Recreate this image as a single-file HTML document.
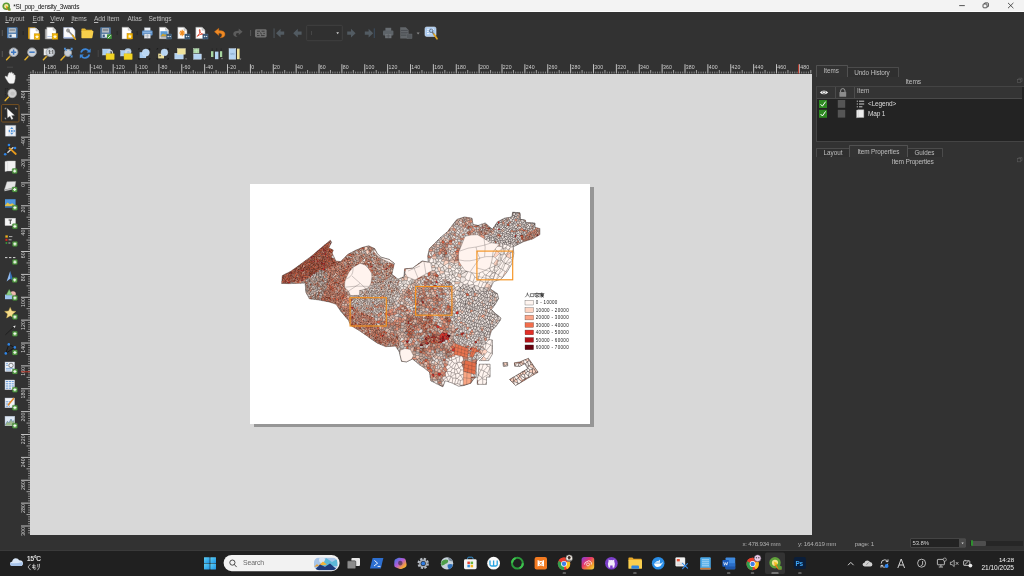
<!DOCTYPE html>
<html><head><meta charset="utf-8"><title>layout</title>
<style>
html,body{margin:0;padding:0;}
body{width:1024px;height:576px;overflow:hidden;background:#323232;position:relative;font-family:"Liberation Sans",sans-serif;}
.abs{position:absolute;}
.t{position:absolute;white-space:nowrap;line-height:1;font-family:"Liberation Sans",sans-serif;}
.mn{top:15.5px;font-size:6.6px;color:#bdbdbd;letter-spacing:-0.12px}
.mn u{text-decoration-thickness:0.4px;text-underline-offset:0.8px;}
.st{top:540.7px;font-size:6.2px;color:#b0b0b0;letter-spacing:-0.22px}
.pt{font-size:6.7px;color:#bebebe;}

body{-webkit-font-smoothing:antialiased;}
#root{position:absolute;left:0;top:0;width:1024px;height:576px;will-change:transform;overflow:hidden}

</style></head>
<body><div id="root">
<!-- title bar -->
<div class="abs" style="left:0;top:0;width:1024px;height:11.2px;background:#f3f3f3"></div>
<div class="abs" style="left:0;top:11.1px;width:1024px;height:0.8px;background:#fcfcfc"></div>
<svg class="abs" style="left:1.5px;top:1.5px" width="9" height="9" viewBox="0 0 18 18">
  <circle cx="8.5" cy="8.5" r="6" fill="#f6e7a8" stroke="#5d9b33" stroke-width="3.4"/>
  <path d="M8 8 L17 17 L12.5 17 L8 11.5Z" fill="#ee7913"/>
  <path d="M9.5 9.5 L17.2 13 L17.2 17.2 L13 17.2Z" fill="#5d9b33"/>
  <path d="M7 7 L12 9 L9 12Z" fill="#f0c21a"/>
</svg>
<div class="t" style="left:13.2px;top:3.8px;font-size:6.5px;color:#151515;letter-spacing:-0.27px">*SI_pop_density_3wards</div>
<svg class="abs" style="left:950px;top:0" width="74" height="12" viewBox="0 0 74 12">
  <path d="M9.2 5.6H14.8" stroke="#222" stroke-width="0.75" fill="none"/>
  <rect x="33" y="4" width="4" height="3.8" rx="0.8" fill="none" stroke="#222" stroke-width="0.75"/>
  <path d="M34.4 3.9V3.5Q34.4 2.9 35 2.9H37.8Q38.4 2.9 38.4 3.5V6.2Q38.4 6.8 37.8 6.8H37.2" fill="none" stroke="#222" stroke-width="0.75"/>
  <path d="M58 2.9L63.4 8.2M63.4 2.9L58 8.2" stroke="#222" stroke-width="0.75" fill="none"/>
</svg>

<!-- menu -->
<div class="t mn" style="left:5.2px"><u>L</u>ayout</div>
<div class="t mn" style="left:32.6px"><u>E</u>dit</div>
<div class="t mn" style="left:50.2px"><u>V</u>iew</div>
<div class="t mn" style="left:71.2px"><u>I</u>tems</div>
<div class="t mn" style="left:94px"><u>A</u>dd Item</div>
<div class="t mn" style="left:127.6px">Atlas</div>
<div class="t mn" style="left:148.6px">Settings</div>

<!-- toolbars -->
<svg class="abs" style="left:0;top:0" width="460" height="64" viewBox="0 0 460 64">
<defs>
  <g id="doc"><path d="M0 0H6.2L9.2 3V11.5H0Z" fill="#fff" stroke="#9a9a9a" stroke-width="0.5"/><path d="M6.2 0V3H9.2" fill="#dcdcdc" stroke="#9a9a9a" stroke-width="0.4"/></g>
  <g id="star"><rect x="0" y="0" width="5.6" height="5.6" fill="#f0b400" stroke="#c98c00" stroke-width="0.5"/><path d="M2.8 0.8L3.4 2.2L4.9 2.3L3.8 3.3L4.1 4.8L2.8 4L1.5 4.8L1.8 3.3L0.7 2.3L2.2 2.2Z" fill="#fff6d0"/></g>
  <g id="plusb"><rect x="0" y="0" width="5.2" height="5" fill="#36536e" stroke="#5c7a96" stroke-width="0.4"/><path d="M1 2.5H2.6M1.8 1.7V3.3M3.2 2.5H4.4M3.8 1.9V3.1" stroke="#e6eef6" stroke-width="0.7"/></g>
</defs>
<!-- grips -->
<path d="M2.3 30V36M2.3 51V57" stroke="#555" stroke-width="1"/>
<path d="M23.2 31V35M117.2 31V35M137.2 31V35" stroke="#262626" stroke-width="1"/><path d="M250.6 30V36" stroke="#5c5c5c" stroke-width="0.8"/>
<!-- save -->
<g transform="translate(7,27.3)">
 <rect x="0" y="0" width="10.6" height="11" rx="0.8" fill="#4a79ad"/>
 <rect x="1.8" y="0.9" width="7" height="4.4" fill="#bfc5cc"/>
 <rect x="2.6" y="1.8" width="5.4" height="1.8" fill="#8e959c"/>
 <rect x="1.6" y="6.6" width="7.4" height="3.6" fill="#e8edf2"/>
 <rect x="2.4" y="7.3" width="2.2" height="2.4" fill="#3c5f88"/>
</g>
<!-- new layout -->
<g transform="translate(28.2,27.4)">
 <path d="M0 0H7V11.4H0Z" fill="#f2a900"/>
 <g transform="translate(1.6,0.6)"><use href="#doc"/></g>
 <g transform="translate(6,6.4)"><use href="#star"/></g>
</g>
<!-- duplicate -->
<g transform="translate(45.2,27)">
 <path d="M0 2.2H8.6V12H0Z" fill="#c9c9c9" stroke="#8d8d8d" stroke-width="0.5"/>
 <g transform="translate(1.6,0.2)"><use href="#doc"/></g>
 <path d="M2.2 9.6H10" stroke="#9fb7e0" stroke-width="0.8"/>
 <g transform="translate(7,6.6)"><use href="#star"/></g>
</g>
<!-- layout manager -->
<g transform="translate(63.6,27.6)">
 <path d="M0 0H8.8L11.4 2.6V10.6H0Z" fill="#fbfbfd" stroke="#a9b9d8" stroke-width="0.6"/>
 <path d="M0.4 10.2H11" stroke="#8aa5dc" stroke-width="0.9"/>
 <path d="M4.2 2.6L9.6 8.4" stroke="#8f8f8f" stroke-width="1.6" stroke-linecap="round"/>
 <circle cx="4.4" cy="2.9" r="1.5" fill="none" stroke="#7d7d7d" stroke-width="0.9"/>
 <path d="M9 7.6L11.8 11.6" stroke="#d9a21b" stroke-width="1.5" stroke-linecap="round"/>
</g>
<!-- folder -->
<g transform="translate(81.4,28)">
 <path d="M0 1.2Q0 0.4 0.8 0.4H3.6L4.8 1.8H10.4Q11 1.8 11 2.6V3.4H0Z" fill="#e6b730"/>
 <path d="M0 3H11.6Q12.2 3 12 3.8L11 9.6Q10.9 10.2 10.2 10.2H0.6Q0 10.2 0 9.6Z" fill="#f7cf4b"/>
</g>
<!-- save as template -->
<g transform="translate(100.2,27.3)">
 <rect x="0" y="0" width="10.6" height="11" rx="0.8" fill="#52779f"/>
 <rect x="1.8" y="0.9" width="7" height="4.4" fill="#b4bac1"/>
 <rect x="2.6" y="1.8" width="5.4" height="1.8" fill="#868d94"/>
 <rect x="1.6" y="6.6" width="7.4" height="3.6" fill="#dfe5ea"/>
 <rect x="2.4" y="7.3" width="2.2" height="2.4" fill="#3c5f88"/>
 <rect x="6.8" y="7" width="4.8" height="4.8" rx="0.6" fill="#3f8f3a"/>
 <path d="M7.8 10.8L10.6 8" stroke="#e6f5e0" stroke-width="1"/>
</g>
<!-- add pages -->
<g transform="translate(122,27.2)">
 <g transform="scale(1 1.02)"><use href="#doc"/></g>
 <g transform="translate(5,6.2)"><use href="#star"/></g>
</g>
<!-- printer -->
<g transform="translate(142,27.8)">
 <rect x="2.4" y="0" width="5.8" height="3.2" fill="#e9edf2" stroke="#a8b2bd" stroke-width="0.4"/>
 <rect x="0" y="2.8" width="10.6" height="4.8" rx="1" fill="#5f91c9"/>
 <rect x="0.8" y="4" width="9" height="0.9" fill="#9cc0e8"/>
 <rect x="2.2" y="6.2" width="6.2" height="4.2" fill="#f2f4f7" stroke="#9aa5b1" stroke-width="0.4"/>
 <path d="M3.2 7.6H7.4M3.2 9H7.4M5.3 6.4V10.2" stroke="#8d98a4" stroke-width="0.5"/>
</g>
<!-- export image -->
<g transform="translate(159.4,27.2)">
 <use href="#doc"/>
 <rect x="1" y="4" width="7.2" height="5" fill="#5b9bd5"/>
 <path d="M1 9L3.6 6.2L5.4 7.6L6.6 6.8L8.2 9Z" fill="#c8a030"/>
 <path d="M1 9.8H8.2" stroke="#3a3a3a" stroke-width="0.7"/>
 <g transform="translate(7,6.8)"><use href="#plusb"/></g>
</g>
<!-- export svg -->
<g transform="translate(177.8,27.2)">
 <use href="#doc"/>
 <path d="M4.4 2.6V9M1.4 5.8H7.4M2.3 3.7L6.5 7.9M6.5 3.7L2.3 7.9" stroke="#f08a1c" stroke-width="1.1"/>
 <g transform="translate(7,6.8)"><use href="#plusb"/></g>
</g>
<!-- export pdf -->
<g transform="translate(195.8,27.2)">
 <use href="#doc"/>
 <path d="M1.6 9Q4.6 6.4 4.3 2.6Q3.6 1.8 3.5 3Q4 6.4 7.6 7.6Q8.4 7 7 6.8Q3.6 7 1.4 9.2Z" fill="none" stroke="#d9391f" stroke-width="0.8"/>
 <g transform="translate(7,6.8)"><use href="#plusb"/></g>
</g>
<!-- undo -->
<g transform="translate(214.4,28.2)">
 <path d="M4.4 0L0 3.6L4.4 7.2V5Q8 4.6 7.4 7.6Q7.2 8.8 5.6 9.6Q11 9.4 10.6 5.6Q10 2.2 4.4 2.4Z" fill="#ee8a25" stroke="#c8640f" stroke-width="0.4"/>
</g>
<!-- redo -->
<g transform="translate(242.6,28.6) scale(-1 1)">
 <path d="M4.4 0L0 3.6L4.4 7.2V5Q8 4.6 7.4 7.6Q7.2 8.8 5.6 9.6Q11 9.4 10.6 5.6Q10 2.2 4.4 2.4Z" fill="#5c5c5c" transform="scale(0.88)"/>
</g>
<!-- atlas preview (disabled) -->
<g transform="translate(255,29.2)">
 <rect x="0" y="0" width="11.6" height="8.2" rx="1.4" fill="#727272"/>
 <path d="M2 2H5M6.6 2H9.6M2 4.2H3.4M5 3.4L7 5.2M8.4 4.2H9.8M2 6.4H4.6M6 6.4H9.6" stroke="#3a3a3a" stroke-width="1"/>
</g>
<!-- first -->
<g fill="#525b62">
 <rect x="273.6" y="28.4" width="0.9" height="9.6"/>
 <path d="M276 33.2L280.6 28.8V31.6H284.2V34.8H280.6V37.6Z"/>
 <path d="M293.2 33.2L297.8 28.8V31.6H301.6V34.8H297.8V37.6Z"/>
 <path d="M355.6 33.2L351 28.8V31.6H347.2V34.8H351V37.6Z"/>
 <path d="M373.2 33.2L368.6 28.8V31.6H364.8V34.8H368.6V37.6Z"/>
 <rect x="373.8" y="28.4" width="0.9" height="9.6" fill="#3d5166"/>
</g>
<!-- combobox -->
<rect x="306.7" y="25.3" width="35.6" height="15.4" rx="1" fill="#303030" stroke="#484848" stroke-width="0.7"/>
<path d="M311.5 31V35" stroke="#555" stroke-width="0.6"/>
<path d="M336.3 32.3H339L337.65 34.2Z" fill="#d0d0d0"/>
<!-- printer disabled -->
<g transform="translate(383,27.8)">
 <rect x="2.4" y="0" width="5.8" height="3.2" fill="#686d72"/>
 <rect x="0" y="2.8" width="10.4" height="4.8" rx="1" fill="#5d6368"/>
 <rect x="2.2" y="6.2" width="6.2" height="4.2" fill="#71767b"/>
 <path d="M3.2 7.6H7.4M3.2 9H7.4M5.3 6.4V10.2" stroke="#4a4e52" stroke-width="0.5"/>
</g>
<!-- export disabled -->
<g transform="translate(400.2,27.2)">
 <path d="M0 0H5.6L8.4 2.8V11.2H0Z" fill="#62666a"/>
 <path d="M0.8 3.2H7.6M0.8 5.6H7.6M0.8 8H7.6" stroke="#484c50" stroke-width="0.9"/>
 <rect x="6.6" y="6.8" width="5.2" height="4.6" fill="#54585c" stroke="#6c7074" stroke-width="0.4"/>
</g>
<path d="M416.6 32.6H419.6L418.1 34.6Z" fill="#8c8c8c"/>
<!-- atlas settings -->
<g transform="translate(425,27)">
 <rect x="0" y="0" width="11" height="9.4" rx="1.6" fill="#a9c9ee" stroke="#d8e8fa" stroke-width="0.6"/>
 <path d="M2 2.2H4.6M6 2.2H9M2 4.4H3.6M2 6.6H4.4M5.4 6.8H6.6" stroke="#eaf3fd" stroke-width="1.1"/>
 <circle cx="6.2" cy="3.8" r="1.7" fill="none" stroke="#5f6f86" stroke-width="0.9"/>
 <path d="M7.4 5.2L9.4 8" stroke="#6e6e6e" stroke-width="1.3" stroke-linecap="round"/>
 <path d="M9 7.2L12 11.8" stroke="#e2a621" stroke-width="1.6" stroke-linecap="round"/>
</g>
</svg>

<svg class="abs" style="left:0;top:0" width="260" height="64" viewBox="0 0 260 64">
<defs>
 <g id="lens"><path d="M-3 3.4L-7 7.6" stroke="#e3b12d" stroke-width="1.5" stroke-linecap="round"/><path d="M-2.6 2.8L-3.8 4.2" stroke="#555" stroke-width="1.4"/><circle cx="0" cy="0" r="4.3" fill="#cfd3d8" stroke="#9ea4ab" stroke-width="0.9"/></g>
 <g id="padlock"><path d="M1.8 4V2.4Q1.8 0 4.1 0Q6.4 0 6.4 2.4V4" fill="none" stroke="#d6d9dd" stroke-width="1.1"/><rect x="0" y="3.6" width="8.2" height="5.8" fill="#f1d324" stroke="#d4b60f" stroke-width="0.4"/></g>
</defs>
<path d="M98.2 50V57" stroke="#4a4a4a" stroke-width="0.9"/>
<!-- zoom in -->
<g transform="translate(13.6,52.2)"><use href="#lens"/><path d="M-2.6 0H2.6M0 -2.6V2.6" stroke="#3b77c2" stroke-width="1.5"/></g>
<!-- zoom out -->
<g transform="translate(32,52.2)"><use href="#lens"/><path d="M-2.7 0H2.7" stroke="#3b77c2" stroke-width="1.5"/></g>
<!-- zoom 1:1 -->
<g transform="translate(50.4,52.2)"><rect x="-6.6" y="-3.6" width="4" height="6.6" fill="#e9e9e9" stroke="#777" stroke-width="0.4"/><use href="#lens"/><path d="M-1.8 -1.2L-0.8 -1.8V1.8M1.4 -1.2L2.4 -1.8V1.8M0.4 -0.6V-0.2M0.4 0.8V1.2" stroke="#333" stroke-width="0.7" fill="none"/></g>
<!-- zoom full -->
<g transform="translate(68,52.4)">
 <path d="M-3 3.4L-7 7.6" stroke="#e3b12d" stroke-width="1.5" stroke-linecap="round"/>
 <circle cx="0" cy="0.4" r="3.6" fill="#c9ced4" stroke="#9ea4ab" stroke-width="0.8"/>
 <path d="M-4 -4.6H-1.6L-2.4 -3.8L-0.8 -2.2L-1.6 -1.4L-3.2 -3L-4 -2.2ZM4.6 -4.6H2.2L3 -3.8L1.4 -2.2L2.2 -1.4L3.8 -3L4.6 -2.2ZM4.6 5H2.2L3 4.2L1.4 2.6L2.2 1.8L3.8 3.4L4.6 2.6Z" fill="#4d8fd6"/>
</g>
<!-- refresh -->
<g transform="translate(85.2,53.6)" fill="none" stroke="#3c86d8" stroke-width="1.7">
 <path d="M-4.2 -1Q-3 -4.6 0.6 -4.4Q2.6 -4.2 3.6 -2.6"/>
 <path d="M4.2 1Q3 4.6 -0.6 4.4Q-2.6 4.2 -3.6 2.6"/>
 <path d="M5.4 -5V-1H1.4Z" fill="#3c86d8" stroke="none"/>
 <path d="M-5.4 5V1H-1.4Z" fill="#3c86d8" stroke="none"/>
</g>
<!-- lock -->
<g transform="translate(102.6,49)"><rect x="0" y="0" width="7.6" height="6" fill="#a9ccf0" stroke="#d6e7f9" stroke-width="0.4"/><g transform="translate(3.4,1.2)"><use href="#padlock"/></g></g>
<!-- unlock -->
<g transform="translate(120.6,49)"><rect x="0" y="1.4" width="6.4" height="5.6" fill="#a9ccf0" stroke="#d6e7f9" stroke-width="0.4"/><circle cx="7.4" cy="2.6" r="3.4" fill="#b6d3f0" opacity="0.9"/><path d="M5.2 5V3.6Q5.2 1.4 7.5 1.4Q9.8 1.4 9.8 3.4" fill="none" stroke="#d6d9dd" stroke-width="1.1"/><rect x="3.4" y="4.8" width="8.2" height="5.8" fill="#f1d324" stroke="#d4b60f" stroke-width="0.4"/></g>
<!-- group -->
<g transform="translate(139,48.6)">
 <rect x="0.6" y="3.6" width="6.4" height="5.8" fill="#a9ccf0"/>
 <circle cx="6.8" cy="4" r="3.6" fill="#b9d6f3" stroke="#d9e9fa" stroke-width="0.4"/>
 <path d="M-0.4 0H0.8M-0.4 0V1.2M10.8 0H9.6M10.8 0V1.2M-0.4 10.6H0.8M-0.4 10.6V9.4M10.8 10.6H9.6M10.8 10.6V9.4" stroke="#1c1c1c" stroke-width="0.9" fill="none"/>
</g>
<!-- ungroup -->
<g transform="translate(157.4,48.6)">
 <rect x="0.8" y="5" width="5.8" height="4.8" fill="#ecdf9a"/>
 <circle cx="7" cy="3.8" r="3.4" fill="#b9d6f3" stroke="#d9e9fa" stroke-width="0.4"/>
 <rect x="2" y="6.4" width="1.4" height="1.4" fill="#555"/>
 <path d="M-0.4 0H0.8M-0.4 0V1.2M11 0H9.8M11 0V1.2M-0.4 10.6H0.8M-0.4 10.6V9.4M11 10.6H9.8M11 10.6V9.4" stroke="#1c1c1c" stroke-width="0.9" fill="none"/>
</g>
<!-- raise -->
<g transform="translate(174.8,48.6)">
 <rect x="0" y="4.6" width="8.4" height="5.8" fill="#b4d3f2" stroke="#d8e8f9" stroke-width="0.4"/>
 <rect x="2.6" y="0" width="8" height="5.6" fill="#efe39c" stroke="#f8f0c4" stroke-width="0.4"/>
 <path d="M10.2 9.8H12.4L11.3 11.2Z" fill="#9a9a9a"/>
</g>
<!-- align -->
<g transform="translate(193.2,48.6)">
 <rect x="0.4" y="0" width="5.4" height="4.4" fill="#a6d49f" stroke="#cfe9ca" stroke-width="0.4"/>
 <path d="M3.1 0V4.4M0.4 2.2H5.8" stroke="#d6edd2" stroke-width="0.5"/>
 <rect x="0.4" y="5.4" width="7.8" height="5.2" fill="#b4d3f2" stroke="#d8e8f9" stroke-width="0.4"/>
 <path d="M10.2 9.8H12.4L11.3 11.2Z" fill="#9a9a9a"/>
</g>
<!-- distribute -->
<g transform="translate(210.6,48.2)">
 <path d="M1.6 0V3M6 0V3M10.6 0V3" stroke="#222" stroke-width="0.6"/>
 <rect x="0.4" y="3" width="2.4" height="5.8" fill="#a6d49f"/>
 <rect x="4.4" y="3.4" width="3.4" height="7.6" fill="#b4d3f2"/>
 <rect x="9.4" y="3" width="2.2" height="5.8" fill="#a6d49f"/>
 <path d="M10.4 10H12.4L11.4 11.4Z" fill="#9a9a9a"/>
</g>
<!-- resize -->
<g transform="translate(229,48.6)">
 <rect x="0" y="0" width="6.8" height="10.6" fill="#b4d3f2" stroke="#d8e8f9" stroke-width="0.4"/>
 <path d="M1 5.3H2.6M5.8 5.3H4.2M2.4 4.3L3.4 5.3L2.4 6.3M4.4 4.3L3.4 5.3L4.4 6.3" stroke="#7d9dbf" stroke-width="0.6" fill="none"/>
 <rect x="8" y="0" width="2.6" height="10.6" fill="#efe39c"/>
 <path d="M10.4 10H12.4L11.4 11.4Z" fill="#9a9a9a"/>
</g>
</svg>

<!-- canvas -->
<div class="abs" style="left:30px;top:73.5px;width:782.3px;height:461.3px;background:#d8d8d8"></div>
<div class="abs" style="left:254px;top:187px;width:340px;height:240px;background:#969696"></div>
<div class="abs" style="left:250.4px;top:183.5px;width:340px;height:240.4px;background:#fff"></div>
<svg style="position:absolute;left:0;top:0" width="1024" height="576" shape-rendering="auto">
<path d="M30.81 71.6V73.5M35.38 71.6V73.5M37.67 71.6V73.5M39.96 71.6V73.5M42.25 71.6V73.5M46.82 71.6V73.5M49.11 71.6V73.5M51.40 71.6V73.5M53.68 71.6V73.5M58.26 71.6V73.5M60.55 71.6V73.5M62.83 71.6V73.5M65.12 71.6V73.5M69.70 71.6V73.5M71.98 71.6V73.5M74.27 71.6V73.5M76.56 71.6V73.5M81.13 71.6V73.5M83.42 71.6V73.5M85.71 71.6V73.5M87.99 71.6V73.5M92.57 71.6V73.5M94.86 71.6V73.5M97.14 71.6V73.5M99.43 71.6V73.5M104.01 71.6V73.5M106.29 71.6V73.5M108.58 71.6V73.5M110.87 71.6V73.5M115.44 71.6V73.5M117.73 71.6V73.5M120.02 71.6V73.5M122.31 71.6V73.5M126.88 71.6V73.5M129.17 71.6V73.5M131.46 71.6V73.5M133.74 71.6V73.5M138.32 71.6V73.5M140.60 71.6V73.5M142.89 71.6V73.5M145.18 71.6V73.5M149.75 71.6V73.5M152.04 71.6V73.5M154.33 71.6V73.5M156.62 71.6V73.5M161.19 71.6V73.5M163.48 71.6V73.5M165.77 71.6V73.5M168.05 71.6V73.5M172.63 71.6V73.5M174.92 71.6V73.5M177.20 71.6V73.5M179.49 71.6V73.5M184.07 71.6V73.5M186.35 71.6V73.5M188.64 71.6V73.5M190.93 71.6V73.5M195.50 71.6V73.5M197.79 71.6V73.5M200.08 71.6V73.5M202.36 71.6V73.5M206.94 71.6V73.5M209.23 71.6V73.5M211.51 71.6V73.5M213.80 71.6V73.5M218.38 71.6V73.5M220.66 71.6V73.5M222.95 71.6V73.5M225.24 71.6V73.5M229.81 71.6V73.5M232.10 71.6V73.5M234.39 71.6V73.5M236.68 71.6V73.5M241.25 71.6V73.5M243.54 71.6V73.5M245.83 71.6V73.5M248.11 71.6V73.5M252.69 71.6V73.5M254.97 71.6V73.5M257.26 71.6V73.5M259.55 71.6V73.5M264.12 71.6V73.5M266.41 71.6V73.5M268.70 71.6V73.5M270.99 71.6V73.5M275.56 71.6V73.5M277.85 71.6V73.5M280.14 71.6V73.5M282.42 71.6V73.5M287.00 71.6V73.5M289.29 71.6V73.5M291.57 71.6V73.5M293.86 71.6V73.5M298.44 71.6V73.5M300.72 71.6V73.5M303.01 71.6V73.5M305.30 71.6V73.5M309.87 71.6V73.5M312.16 71.6V73.5M314.45 71.6V73.5M316.73 71.6V73.5M321.31 71.6V73.5M323.60 71.6V73.5M325.88 71.6V73.5M328.17 71.6V73.5M332.75 71.6V73.5M335.03 71.6V73.5M337.32 71.6V73.5M339.61 71.6V73.5M344.18 71.6V73.5M346.47 71.6V73.5M348.76 71.6V73.5M351.05 71.6V73.5M355.62 71.6V73.5M357.91 71.6V73.5M360.20 71.6V73.5M362.48 71.6V73.5M367.06 71.6V73.5M369.34 71.6V73.5M371.63 71.6V73.5M373.92 71.6V73.5M378.49 71.6V73.5M380.78 71.6V73.5M383.07 71.6V73.5M385.36 71.6V73.5M389.93 71.6V73.5M392.22 71.6V73.5M394.51 71.6V73.5M396.79 71.6V73.5M401.37 71.6V73.5M403.66 71.6V73.5M405.94 71.6V73.5M408.23 71.6V73.5M412.81 71.6V73.5M415.09 71.6V73.5M417.38 71.6V73.5M419.67 71.6V73.5M424.24 71.6V73.5M426.53 71.6V73.5M428.82 71.6V73.5M431.10 71.6V73.5M435.68 71.6V73.5M437.97 71.6V73.5M440.25 71.6V73.5M442.54 71.6V73.5M447.12 71.6V73.5M449.40 71.6V73.5M451.69 71.6V73.5M453.98 71.6V73.5M458.55 71.6V73.5M460.84 71.6V73.5M463.13 71.6V73.5M465.42 71.6V73.5M469.99 71.6V73.5M472.28 71.6V73.5M474.57 71.6V73.5M476.85 71.6V73.5M481.43 71.6V73.5M483.71 71.6V73.5M486.00 71.6V73.5M488.29 71.6V73.5M492.86 71.6V73.5M495.15 71.6V73.5M497.44 71.6V73.5M499.73 71.6V73.5M504.30 71.6V73.5M506.59 71.6V73.5M508.88 71.6V73.5M511.16 71.6V73.5M515.74 71.6V73.5M518.03 71.6V73.5M520.31 71.6V73.5M522.60 71.6V73.5M527.18 71.6V73.5M529.46 71.6V73.5M531.75 71.6V73.5M534.04 71.6V73.5M538.61 71.6V73.5M540.90 71.6V73.5M543.19 71.6V73.5M545.47 71.6V73.5M550.05 71.6V73.5M552.34 71.6V73.5M554.62 71.6V73.5M556.91 71.6V73.5M561.49 71.6V73.5M563.77 71.6V73.5M566.06 71.6V73.5M568.35 71.6V73.5M572.92 71.6V73.5M575.21 71.6V73.5M577.50 71.6V73.5M579.79 71.6V73.5M584.36 71.6V73.5M586.65 71.6V73.5M588.94 71.6V73.5M591.22 71.6V73.5M595.80 71.6V73.5M598.08 71.6V73.5M600.37 71.6V73.5M602.66 71.6V73.5M607.23 71.6V73.5M609.52 71.6V73.5M611.81 71.6V73.5M614.10 71.6V73.5M618.67 71.6V73.5M620.96 71.6V73.5M623.25 71.6V73.5M625.53 71.6V73.5M630.11 71.6V73.5M632.40 71.6V73.5M634.68 71.6V73.5M636.97 71.6V73.5M641.55 71.6V73.5M643.83 71.6V73.5M646.12 71.6V73.5M648.41 71.6V73.5M652.98 71.6V73.5M655.27 71.6V73.5M657.56 71.6V73.5M659.84 71.6V73.5M664.42 71.6V73.5M666.71 71.6V73.5M668.99 71.6V73.5M671.28 71.6V73.5M675.86 71.6V73.5M678.14 71.6V73.5M680.43 71.6V73.5M682.72 71.6V73.5M687.29 71.6V73.5M689.58 71.6V73.5M691.87 71.6V73.5M694.16 71.6V73.5M698.73 71.6V73.5M701.02 71.6V73.5M703.31 71.6V73.5M705.59 71.6V73.5M710.17 71.6V73.5M712.45 71.6V73.5M714.74 71.6V73.5M717.03 71.6V73.5M721.60 71.6V73.5M723.89 71.6V73.5M726.18 71.6V73.5M728.47 71.6V73.5M733.04 71.6V73.5M735.33 71.6V73.5M737.62 71.6V73.5M739.90 71.6V73.5M744.48 71.6V73.5M746.77 71.6V73.5M749.05 71.6V73.5M751.34 71.6V73.5M755.92 71.6V73.5M758.20 71.6V73.5M760.49 71.6V73.5M762.78 71.6V73.5M767.35 71.6V73.5M769.64 71.6V73.5M771.93 71.6V73.5M774.21 71.6V73.5M778.79 71.6V73.5M781.08 71.6V73.5M783.36 71.6V73.5M785.65 71.6V73.5M790.23 71.6V73.5M792.51 71.6V73.5M794.80 71.6V73.5M797.09 71.6V73.5M801.66 71.6V73.5M803.95 71.6V73.5M806.24 71.6V73.5M808.53 71.6V73.5" stroke="#b4b4b4" stroke-width="0.8" opacity="0.85"/>
<path d="M33.10 70V73.5M55.97 70V73.5M78.85 70V73.5M101.72 70V73.5M124.59 70V73.5M147.47 70V73.5M170.34 70V73.5M193.22 70V73.5M216.09 70V73.5M238.96 70V73.5M261.84 70V73.5M284.71 70V73.5M307.58 70V73.5M330.46 70V73.5M353.33 70V73.5M376.21 70V73.5M399.08 70V73.5M421.95 70V73.5M444.83 70V73.5M467.70 70V73.5M490.58 70V73.5M513.45 70V73.5M536.33 70V73.5M559.20 70V73.5M582.07 70V73.5M604.95 70V73.5M627.82 70V73.5M650.69 70V73.5M673.57 70V73.5M696.44 70V73.5M719.32 70V73.5M742.19 70V73.5M765.06 70V73.5M787.94 70V73.5M810.81 70V73.5" stroke="#c0c0c0" stroke-width="0.8"/>
<path d="M44.53 64.2V73.5M67.41 64.2V73.5M90.28 64.2V73.5M113.16 64.2V73.5M136.03 64.2V73.5M158.90 64.2V73.5M181.78 64.2V73.5M204.65 64.2V73.5M227.53 64.2V73.5M250.40 64.2V73.5M273.27 64.2V73.5M296.15 64.2V73.5M319.02 64.2V73.5M341.90 64.2V73.5M364.77 64.2V73.5M387.64 64.2V73.5M410.52 64.2V73.5M433.39 64.2V73.5M456.27 64.2V73.5M479.14 64.2V73.5M502.01 64.2V73.5M524.89 64.2V73.5M547.76 64.2V73.5M570.64 64.2V73.5M593.51 64.2V73.5M616.38 64.2V73.5M639.26 64.2V73.5M662.13 64.2V73.5M685.01 64.2V73.5M707.88 64.2V73.5M730.75 64.2V73.5M753.63 64.2V73.5M776.50 64.2V73.5M799.38 64.2V73.5" stroke="#d2d2d2" stroke-width="0.9"/>
<text x="45.33" y="69.3" font-size="5.2" letter-spacing="0.12" fill="#cfcfcf" font-family="Liberation Sans, sans-serif">-180</text>
<text x="68.21" y="69.3" font-size="5.2" letter-spacing="0.12" fill="#cfcfcf" font-family="Liberation Sans, sans-serif">-160</text>
<text x="91.08" y="69.3" font-size="5.2" letter-spacing="0.12" fill="#cfcfcf" font-family="Liberation Sans, sans-serif">-140</text>
<text x="113.96" y="69.3" font-size="5.2" letter-spacing="0.12" fill="#cfcfcf" font-family="Liberation Sans, sans-serif">-120</text>
<text x="136.83" y="69.3" font-size="5.2" letter-spacing="0.12" fill="#cfcfcf" font-family="Liberation Sans, sans-serif">-100</text>
<text x="159.70" y="69.3" font-size="5.2" letter-spacing="0.12" fill="#cfcfcf" font-family="Liberation Sans, sans-serif">-80</text>
<text x="182.58" y="69.3" font-size="5.2" letter-spacing="0.12" fill="#cfcfcf" font-family="Liberation Sans, sans-serif">-60</text>
<text x="205.45" y="69.3" font-size="5.2" letter-spacing="0.12" fill="#cfcfcf" font-family="Liberation Sans, sans-serif">-40</text>
<text x="228.33" y="69.3" font-size="5.2" letter-spacing="0.12" fill="#cfcfcf" font-family="Liberation Sans, sans-serif">-20</text>
<text x="251.20" y="69.3" font-size="5.2" letter-spacing="0.12" fill="#cfcfcf" font-family="Liberation Sans, sans-serif">0</text>
<text x="274.07" y="69.3" font-size="5.2" letter-spacing="0.12" fill="#cfcfcf" font-family="Liberation Sans, sans-serif">20</text>
<text x="296.95" y="69.3" font-size="5.2" letter-spacing="0.12" fill="#cfcfcf" font-family="Liberation Sans, sans-serif">40</text>
<text x="319.82" y="69.3" font-size="5.2" letter-spacing="0.12" fill="#cfcfcf" font-family="Liberation Sans, sans-serif">60</text>
<text x="342.70" y="69.3" font-size="5.2" letter-spacing="0.12" fill="#cfcfcf" font-family="Liberation Sans, sans-serif">80</text>
<text x="365.57" y="69.3" font-size="5.2" letter-spacing="0.12" fill="#cfcfcf" font-family="Liberation Sans, sans-serif">100</text>
<text x="388.44" y="69.3" font-size="5.2" letter-spacing="0.12" fill="#cfcfcf" font-family="Liberation Sans, sans-serif">120</text>
<text x="411.32" y="69.3" font-size="5.2" letter-spacing="0.12" fill="#cfcfcf" font-family="Liberation Sans, sans-serif">140</text>
<text x="434.19" y="69.3" font-size="5.2" letter-spacing="0.12" fill="#cfcfcf" font-family="Liberation Sans, sans-serif">160</text>
<text x="457.07" y="69.3" font-size="5.2" letter-spacing="0.12" fill="#cfcfcf" font-family="Liberation Sans, sans-serif">180</text>
<text x="479.94" y="69.3" font-size="5.2" letter-spacing="0.12" fill="#cfcfcf" font-family="Liberation Sans, sans-serif">200</text>
<text x="502.81" y="69.3" font-size="5.2" letter-spacing="0.12" fill="#cfcfcf" font-family="Liberation Sans, sans-serif">220</text>
<text x="525.69" y="69.3" font-size="5.2" letter-spacing="0.12" fill="#cfcfcf" font-family="Liberation Sans, sans-serif">240</text>
<text x="548.56" y="69.3" font-size="5.2" letter-spacing="0.12" fill="#cfcfcf" font-family="Liberation Sans, sans-serif">260</text>
<text x="571.44" y="69.3" font-size="5.2" letter-spacing="0.12" fill="#cfcfcf" font-family="Liberation Sans, sans-serif">280</text>
<text x="594.31" y="69.3" font-size="5.2" letter-spacing="0.12" fill="#cfcfcf" font-family="Liberation Sans, sans-serif">300</text>
<text x="617.18" y="69.3" font-size="5.2" letter-spacing="0.12" fill="#cfcfcf" font-family="Liberation Sans, sans-serif">320</text>
<text x="640.06" y="69.3" font-size="5.2" letter-spacing="0.12" fill="#cfcfcf" font-family="Liberation Sans, sans-serif">340</text>
<text x="662.93" y="69.3" font-size="5.2" letter-spacing="0.12" fill="#cfcfcf" font-family="Liberation Sans, sans-serif">360</text>
<text x="685.81" y="69.3" font-size="5.2" letter-spacing="0.12" fill="#cfcfcf" font-family="Liberation Sans, sans-serif">380</text>
<text x="708.68" y="69.3" font-size="5.2" letter-spacing="0.12" fill="#cfcfcf" font-family="Liberation Sans, sans-serif">400</text>
<text x="731.55" y="69.3" font-size="5.2" letter-spacing="0.12" fill="#cfcfcf" font-family="Liberation Sans, sans-serif">420</text>
<text x="754.43" y="69.3" font-size="5.2" letter-spacing="0.12" fill="#cfcfcf" font-family="Liberation Sans, sans-serif">440</text>
<text x="777.30" y="69.3" font-size="5.2" letter-spacing="0.12" fill="#cfcfcf" font-family="Liberation Sans, sans-serif">460</text>
<text x="800.18" y="69.3" font-size="5.2" letter-spacing="0.12" fill="#cfcfcf" font-family="Liberation Sans, sans-serif">480</text>
<path d="M28 75.39H30M28 77.68H30M28 82.25H30M28 84.54H30M28 86.83H30M28 89.12H30M28 93.69H30M28 95.98H30M28 98.27H30M28 100.55H30M28 105.13H30M28 107.42H30M28 109.70H30M28 111.99H30M28 116.57H30M28 118.85H30M28 121.14H30M28 123.43H30M28 128.00H30M28 130.29H30M28 132.58H30M28 134.86H30M28 139.44H30M28 141.73H30M28 144.01H30M28 146.30H30M28 150.88H30M28 153.16H30M28 155.45H30M28 157.74H30M28 162.31H30M28 164.60H30M28 166.89H30M28 169.18H30M28 173.75H30M28 176.04H30M28 178.33H30M28 180.61H30M28 185.19H30M28 187.47H30M28 189.76H30M28 192.05H30M28 196.62H30M28 198.91H30M28 201.20H30M28 203.49H30M28 208.06H30M28 210.35H30M28 212.64H30M28 214.92H30M28 219.50H30M28 221.79H30M28 224.07H30M28 226.36H30M28 230.94H30M28 233.22H30M28 235.51H30M28 237.80H30M28 242.37H30M28 244.66H30M28 246.95H30M28 249.23H30M28 253.81H30M28 256.10H30M28 258.38H30M28 260.67H30M28 265.25H30M28 267.53H30M28 269.82H30M28 272.11H30M28 276.68H30M28 278.97H30M28 281.26H30M28 283.55H30M28 288.12H30M28 290.41H30M28 292.70H30M28 294.98H30M28 299.56H30M28 301.84H30M28 304.13H30M28 306.42H30M28 310.99H30M28 313.28H30M28 315.57H30M28 317.86H30M28 322.43H30M28 324.72H30M28 327.01H30M28 329.29H30M28 333.87H30M28 336.16H30M28 338.44H30M28 340.73H30M28 345.31H30M28 347.59H30M28 349.88H30M28 352.17H30M28 356.74H30M28 359.03H30M28 361.32H30M28 363.60H30M28 368.18H30M28 370.47H30M28 372.75H30M28 375.04H30M28 379.62H30M28 381.90H30M28 384.19H30M28 386.48H30M28 391.05H30M28 393.34H30M28 395.63H30M28 397.92H30M28 402.49H30M28 404.78H30M28 407.07H30M28 409.35H30M28 413.93H30M28 416.21H30M28 418.50H30M28 420.79H30M28 425.36H30M28 427.65H30M28 429.94H30M28 432.23H30M28 436.80H30M28 439.09H30M28 441.38H30M28 443.66H30M28 448.24H30M28 450.53H30M28 452.81H30M28 455.10H30M28 459.68H30M28 461.96H30M28 464.25H30M28 466.54H30M28 471.11H30M28 473.40H30M28 475.69H30M28 477.97H30M28 482.55H30M28 484.84H30M28 487.12H30M28 489.41H30M28 493.99H30M28 496.27H30M28 498.56H30M28 500.85H30M28 505.42H30M28 507.71H30M28 510.00H30M28 512.29H30M28 516.86H30M28 519.15H30M28 521.44H30M28 523.72H30M28 528.30H30M28 530.58H30M28 532.87H30" stroke="#b4b4b4" stroke-width="0.8" opacity="0.85"/>
<path d="M26.5 79.97H30M26.5 102.84H30M26.5 125.72H30M26.5 148.59H30M26.5 171.46H30M26.5 194.34H30M26.5 217.21H30M26.5 240.09H30M26.5 262.96H30M26.5 285.83H30M26.5 308.71H30M26.5 331.58H30M26.5 354.45H30M26.5 377.33H30M26.5 400.20H30M26.5 423.08H30M26.5 445.95H30M26.5 468.83H30M26.5 491.70H30M26.5 514.57H30" stroke="#c0c0c0" stroke-width="0.8"/>
<path d="M21 91.40H30M21 114.28H30M21 137.15H30M21 160.03H30M21 182.90H30M21 205.77H30M21 228.65H30M21 251.52H30M21 274.40H30M21 297.27H30M21 320.14H30M21 343.02H30M21 365.89H30M21 388.77H30M21 411.64H30M21 434.51H30M21 457.39H30M21 480.26H30M21 503.14H30M21 526.01H30" stroke="#d2d2d2" stroke-width="0.9"/>
<text transform="translate(25.2 92.20) rotate(-90)" text-anchor="end" font-size="5.2" letter-spacing="0.12" fill="#cfcfcf" font-family="Liberation Sans, sans-serif">-80</text>
<text transform="translate(25.2 115.08) rotate(-90)" text-anchor="end" font-size="5.2" letter-spacing="0.12" fill="#cfcfcf" font-family="Liberation Sans, sans-serif">-60</text>
<text transform="translate(25.2 137.95) rotate(-90)" text-anchor="end" font-size="5.2" letter-spacing="0.12" fill="#cfcfcf" font-family="Liberation Sans, sans-serif">-40</text>
<text transform="translate(25.2 160.83) rotate(-90)" text-anchor="end" font-size="5.2" letter-spacing="0.12" fill="#cfcfcf" font-family="Liberation Sans, sans-serif">-20</text>
<text transform="translate(25.2 183.70) rotate(-90)" text-anchor="end" font-size="5.2" letter-spacing="0.12" fill="#cfcfcf" font-family="Liberation Sans, sans-serif">0</text>
<text transform="translate(25.2 206.57) rotate(-90)" text-anchor="end" font-size="5.2" letter-spacing="0.12" fill="#cfcfcf" font-family="Liberation Sans, sans-serif">20</text>
<text transform="translate(25.2 229.45) rotate(-90)" text-anchor="end" font-size="5.2" letter-spacing="0.12" fill="#cfcfcf" font-family="Liberation Sans, sans-serif">40</text>
<text transform="translate(25.2 252.32) rotate(-90)" text-anchor="end" font-size="5.2" letter-spacing="0.12" fill="#cfcfcf" font-family="Liberation Sans, sans-serif">60</text>
<text transform="translate(25.2 275.20) rotate(-90)" text-anchor="end" font-size="5.2" letter-spacing="0.12" fill="#cfcfcf" font-family="Liberation Sans, sans-serif">80</text>
<text transform="translate(25.2 298.07) rotate(-90)" text-anchor="end" font-size="5.2" letter-spacing="0.12" fill="#cfcfcf" font-family="Liberation Sans, sans-serif">100</text>
<text transform="translate(25.2 320.94) rotate(-90)" text-anchor="end" font-size="5.2" letter-spacing="0.12" fill="#cfcfcf" font-family="Liberation Sans, sans-serif">120</text>
<text transform="translate(25.2 343.82) rotate(-90)" text-anchor="end" font-size="5.2" letter-spacing="0.12" fill="#cfcfcf" font-family="Liberation Sans, sans-serif">140</text>
<text transform="translate(25.2 366.69) rotate(-90)" text-anchor="end" font-size="5.2" letter-spacing="0.12" fill="#cfcfcf" font-family="Liberation Sans, sans-serif">160</text>
<text transform="translate(25.2 389.57) rotate(-90)" text-anchor="end" font-size="5.2" letter-spacing="0.12" fill="#cfcfcf" font-family="Liberation Sans, sans-serif">180</text>
<text transform="translate(25.2 412.44) rotate(-90)" text-anchor="end" font-size="5.2" letter-spacing="0.12" fill="#cfcfcf" font-family="Liberation Sans, sans-serif">200</text>
<text transform="translate(25.2 435.31) rotate(-90)" text-anchor="end" font-size="5.2" letter-spacing="0.12" fill="#cfcfcf" font-family="Liberation Sans, sans-serif">220</text>
<text transform="translate(25.2 458.19) rotate(-90)" text-anchor="end" font-size="5.2" letter-spacing="0.12" fill="#cfcfcf" font-family="Liberation Sans, sans-serif">240</text>
<text transform="translate(25.2 481.06) rotate(-90)" text-anchor="end" font-size="5.2" letter-spacing="0.12" fill="#cfcfcf" font-family="Liberation Sans, sans-serif">260</text>
<text transform="translate(25.2 503.94) rotate(-90)" text-anchor="end" font-size="5.2" letter-spacing="0.12" fill="#cfcfcf" font-family="Liberation Sans, sans-serif">280</text>
<text transform="translate(25.2 526.81) rotate(-90)" text-anchor="end" font-size="5.2" letter-spacing="0.12" fill="#cfcfcf" font-family="Liberation Sans, sans-serif">300</text>
<path d="M798.6 64.5V73.5" stroke="#c0392b" stroke-width="1"/>
<path d="M21 371.8H30" stroke="#c0392b" stroke-width="1"/>
</svg>
<svg class="abs" style="left:0;top:0" width="1024" height="576" viewBox="0 0 1024 576">
<defs>
<filter id="nz" x="0" y="0" width="100%" height="100%" filterUnits="objectBoundingBox" color-interpolation-filters="sRGB">
<feTurbulence type="fractalNoise" baseFrequency="0.85" numOctaves="2" seed="3" result="t"/>
<feColorMatrix in="t" type="matrix" values="0 0 0 0 0.22  0 0 0 0 0.11  0 0 0 0 0.08  1.15 0 0 0 -0.38"/>
</filter>
<clipPath id="silc"><path d="M309.4 298.8L319.2 300.0L328.9 301.9L336.2 304.3L341.0 311.6L348.3 320.1L350.8 325.6L358.0 329.8L365.3 334.7L370.0 338.2L377.3 343.1L385.8 346.7L395.5 346.1L399.2 351.6L401.6 361.3L406.5 361.9L412.5 358.9L419.8 365.0L423.5 367.4L429.5 372.2L430.8 380.8L438.0 384.4L442.9 386.8L445.3 380.8L452.0 383.0L458.5 386.2L463.4 385.6L470.7 383.2L474.3 378.3L476.4 377.4L476.2 377.4L476.5 361.0L481.0 357.0L484.0 353.4L484.0 356.0L479.4 360.6L489.0 360.6L488.9 360.1L492.5 354.0L492.5 340.0L488.9 339.4L491.3 330.9L496.2 326.1L500.4 320.0L501.0 318.0L495.0 313.2L491.3 309.5L495.0 304.7L498.6 298.6L497.4 293.7L490.1 288.9L493.7 281.6L501.0 279.2L507.1 271.9L512.0 263.4L513.8 253.5L513.2 246.8L522.9 241.9L532.6 238.9L539.9 234.6L539.9 228.6L535.0 227.3L535.0 223.1L525.9 222.5L525.3 220.0L520.5 219.4L519.9 212.8L512.6 212.2L512.0 217.0L504.7 218.2L497.4 221.9L492.5 229.2L489.5 227.0L485.2 223.0L478.0 225.5L473.0 224.3L471.9 218.2L464.6 217.0L457.3 219.2L454.9 221.9L447.6 231.6L440.3 237.7L434.3 243.7L429.4 248.6L427.7 256.1L428.3 262.2L422.2 260.9L412.5 268.2L404.6 268.8L404.0 276.7L398.0 279.2L391.9 274.3L394.3 263.4L389.3 259.5L380.8 257.1L377.2 253.5L374.7 248.6L368.6 245.8L362.0 247.6L356.3 250.0L347.9 254.3L340.6 261.6L335.8 261.0L332.1 253.1L333.3 250.0L328.7 248.0L331.6 242.2L330.3 240.3L323.6 245.8L311.5 256.1L299.3 265.2L290.8 271.3L282.3 275.6L281.7 283.5L290.0 283.6L305.2 283.0L305.8 292.2ZM479.0 361.0L479.2 361.0L479.2 360.8ZM507.6 362.5L502.9 362.7L503.4 366.4L507.7 366.0ZM524.5 363.6L527.8 368.6L509.5 379.5L515.6 385.6L538.1 372.2L528.4 358.3L519.9 361.9L514.4 362.8L514.6 366.2L520.0 366.4ZM486.5 384.4L486.5 377.1L490.1 377.1L490.1 364.3L490.1 364.2L479.2 364.2L479.2 364.3L477.8 377.4L477.3 377.4L477.3 384.4Z"/></clipPath>
</defs>
<g stroke-linejoin="round">
<path fill="#8a1c1b" stroke="#2b2422" stroke-width="0.3" stroke-opacity="0.5" d="M305.1 266.1l-1.4 1.7l0.2 0.5l1.4 0.1l0.6 -1l-0.6 -1.3zM317 252.9l0.3 -0.1l0.8 -1.6l-0.1 -0.1l-0.6 0l-1.8 1.5z"/>
<path fill="#9a181a" stroke="#2b2422" stroke-width="0.3" stroke-opacity="0.6" d="M434.9 334.5l-0.4 1.4l-1.4 1.1l-0.3 -0.4l1.1 -2.7l1 0.6z"/>
<path fill="#9c2c23" stroke="#2b2422" stroke-width="0.3" stroke-opacity="0.5" d="M284.2 281.4l1.6 -1.6l0.1 0l0.7 1.7l-0.6 0.8l-0.9 0.5l-0.8 -0.7zM295.2 271.7l-0.7 -1l1.2 -0.8l1.1 1.6zM303.2 276.1l0.3 0.2l0.4 0.9l-0.8 1.2l-2.3 -0.8l0.1 -0.4zM306.6 275.7l-0.2 -0.2l-0.2 -1.7l1.8 -0.5l-0.7 2.4z"/>
<path fill="#a11619" stroke="#2b2422" stroke-width="0.3" stroke-opacity="0.6" d="M482.2 226.4l1.9 1l-0.7 1.1l-0.9 0.6z"/>
<path fill="#a34b35" stroke="#2b2422" stroke-width="0.3" stroke-opacity="0.5" d="M290 276.2l-0.8 1.4l-1.3 -0.1l-0.5 -0.5l0.5 -1.4l1.6 -0.4zM293.4 270.7l1.1 0l1.2 -0.8l0.1 -0.4l-1.1 -1l-1.9 1.3zM297.2 277.6l1.4 2.1l-0.3 0.6l-0.7 0l-1.3 -1.6l0 -1l0.1 -0.2zM299.6 267.6l-2 -0.2l0 -0.9l1.7 -0.8l0.2 0.1l0.7 1.2zM311.7 271.8l-1.9 0.2l0.2 -2.5l0 0l1.1 1.1l0.6 1.2zM312.7 259.2l0 1.2l-0.5 0.8l-1.7 -0.6l-0.2 -0.7l2.4 -0.7zM326.2 258.9l-2 -0.9l-0.7 0.4l-0.1 1.2l1.7 1l1 -1.4zM326.5 257.4l-2 -0.5l-0.1 -0.5l0.5 -0.8l1.5 -0.3l0.2 2zM328.6 243.2l0.5 0.3l0.6 -0.2l0.3 -0.3l0.1 -0.7l-0.7 -1.3l-1.1 0.9zM331.6 257.6l1.9 0.6l0.3 1.2l-1 1.8l-2.2 -1.2l-0.1 -0.2l0.6 -1.7l0.2 -0.4z"/>
<path fill="#a72c24" stroke="#2b2422" stroke-width="0.3" stroke-opacity="0.5" d="M290 273.7l0 0l1.7 0.3l0.1 -0.1l0.4 -1.7l-1.6 -0.8l-0.4 0.2zM293 276.3l-0.7 -2.2l-0.5 -0.2l-0.1 0.1l-0.3 1.9l1.2 0.8zM294.4 279.7l1.3 -0.1l0.6 -0.9l0 -1l-1.9 0.5zM312.4 257.5l1.6 -0.2l0 -0.1l-0.4 -1.8l-0.5 -0.2l-1.9 1.3zM314 257.2l1.5 -1.6l-0.3 -0.3l-1.6 0.1zM315.7 272.5l-2.5 -0.8l0.2 2.6l2.4 -0.9l0 -0.8zM321.5 254.6l-0.3 -1.5l0.7 -0.8l1.2 0.6l-0.6 1.9l-0.2 0.1zM322.9 263.9l-2.5 0.1l0.2 -1.5l0.3 -0.9l2 0.8l0.4 0.3zM323.2 248.1l-0.3 2.5l1.2 -0.2l0.7 -1.1zM323.9 265.6l-0.7 -0.1l0 0l0.2 2.2l1.1 0.3l0.6 -1.2zM325 249.2l-0.2 0.1l-0.7 1.1l0.7 1.7l1.8 -1.7z"/>
<path fill="#a86753" stroke="#2b2422" stroke-width="0.3" stroke-opacity="0.5" d="M290.8 279.6l-1.2 1.6l1.1 1.5l1.4 -0.3l0.1 -2.6z"/>
<path fill="#a91418" stroke="#2b2422" stroke-width="0.3" stroke-opacity="0.6" d="M537.7 234l-0.1 0l-0.6 1.4l0.2 0.8l1.9 -1.1zM426.9 338.1l0.1 -1.3l-1.3 -0.1l-1.3 2.6l0.1 0l1.8 -0.7zM426.3 338.6l-1.8 0.7l2.9 1.9l0.5 -1.2z"/>
<path fill="#a91418" stroke="#2b2422" stroke-width="0.3" stroke-opacity="0.5" d="M310.3 258.5l2.4 0.6l-0.3 -1.6l-1.2 -1l-0.2 0l-0.3 0.2z"/>
<path fill="#b05139" stroke="#2b2422" stroke-width="0.3" stroke-opacity="0.5" d="M282.9 276.1l2 -0.4l0.5 -0.5l-0.1 -0.8l-0.5 -0.1l-2.2 1.1zM281.7 283.1l0 0.4l3.4 0l0 -0.7l-0.8 -0.7zM284.2 277.3l1.3 0.4l1.1 -0.8l-1.2 -1.7l-0.5 0.5zM286 282.3l1.5 1l0.4 -0.1l0.1 -1.5l-1.4 -0.2zM291.7 274l-1.7 -0.3l-0.5 1.5l0.5 1l0.9 0l0.5 -0.3zM292.5 277.7l-1.3 0l-0.3 -1.5l0.5 -0.3l1.2 0.8zM297.2 268l-0.4 0.9l1 1.1l1.4 -0.8zM298.2 273.9l-1.4 0.8l0.1 0.5l2 0.4l0.3 -0.2l-1 -1.5zM297.9 271.6l-0.1 -1.6l1.4 -0.8l0.4 -0.1l0.8 0.8l-0.3 1.1l-0.6 0.7zM297.5 271.9l0.7 2l0 0l1.7 -0.8l0.1 -0.2l-0.5 -1.2l-1.6 -0.1l-0.4 0.3zM300.8 266.9l0.9 -1.5l1.3 0.2l-0.1 1.8l-1.1 0.3zM299.6 267.6l0 1.5l0.8 0.8l1.2 -0.4l0.2 -1.8l-1 -0.8l-0.6 0.1zM300.3 278.3l0 0.2l0.4 0.6l2.1 0.6l0.3 -1.3l-2.3 -0.8zM301.2 264.3l0.5 -0.3l1.7 -0.4l0.2 1.7l-0.6 0.3l-1.3 -0.2zM306.3 261.5l0 0l-1.3 -0.5l-1.6 1.1l0.4 0.9l1.6 0.3l0.5 0zM306 271.6l-1.6 -0.4l-0.1 -0.1l0.1 -0.4l1.5 -1.2l1.5 0.2zM304.6 275.4l1.8 0.1l-0.2 -1.7l-0.4 -0.3l-1.2 -0.1l-0.1 0zM306.8 278.8l-0.9 -1.7l-1.9 0.2l1.3 2l0.6 0.2l0.6 -0.1zM308 259.3l0 0l-1.6 1.9l-0.1 0.3l0 0l1.7 0.4l0.4 -0.8zM307.4 269.7l0.1 -2l-1.6 -0.3l-0.6 1l0.6 1.1l1.5 0.2zM309.7 265.2l-1.6 -1.8l-0.6 0.4l0.4 2l0.2 0.3zM309.9 265.1l0.8 0.6l0.1 0.6l-0.5 1.6l-0.1 0.2l-2.1 -1.1l0 -0.9l1.6 -0.9zM308 270l2 -0.5l0.2 -1.4l-2.1 -1.1l-0.6 0.7l-0.1 2zM311 273.9l-1.8 -1.5l-0.8 0.1l-0.1 0.5l1 1.7zM311.7 271.8l-1.9 0.2l-0.6 0.4l1.8 1.5l0.4 0zM309.1 275.5l0.2 -0.8l1.7 -0.8l0.4 0l1.1 1.2l0 0.2l-0.3 0.3zM312.4 257.5l0.3 1.6l0 0.1l0 0l1.7 -0.1l0.4 -0.9l-0.8 -0.9zM313.7 265.7l-0.8 1.1l-1.2 -1.5l1 -1l0.3 0l0.2 0.1zM311.7 271.8l-0.6 -1.2l1.8 -1.1l0.4 1l-0.3 1zM313.2 271.7l-0.2 -0.2l-1.3 0.3l0 0l-0.3 2.1l1.1 1.2l0.9 -0.8zM314 257.3l0.8 0.9l0.1 0l1.2 -1.6l-0.3 -0.9l-0.3 -0.1l-1.5 1.6zM315.3 264.2l-0.2 -1.6l-0.3 -0.2l-1.3 0l0 0l-0.5 1.9l0.2 0.1zM315.5 266.4l-1.8 -0.7l-0.5 -1.3l2.1 -0.2l0.4 0.3l0.2 1.2zM313.1 268.1l-0.3 1l0.1 0.4l0.4 1l2.1 -0.5l-0.2 -2zM315.8 255.7l1.1 -0.8l1.2 0.6l0.3 0.6l0 0.5l-1 0.9l-1.3 -0.9zM315.9 265.7l1.8 -0.2l0.1 -0.7l-0.8 -1l-1.3 0.7zM319.2 263.8l-1 -1.2l-0.9 0.1l-0.3 1.1l0.8 1zM319.2 263.8l-1.4 1l-0.1 0.7l0.3 0.3l1.3 -0.1l0.8 -1.5zM319.3 265.7l0.2 0.5l-1.2 1.8l-0.5 -0.1l0.2 -2.1zM317.8 267.9l-0.1 0.1l-0.6 2.3l0.1 0l1.6 0.1l0.9 -0.7l-0.5 -1.2l-0.9 -0.5zM320.2 249.2l0.4 -0.2l0.2 -0.8l-1 0.8zM321.9 251.3l0 1l-0.7 0.8l-1.2 -0.3l-0.4 -1.7l0.2 -0.1zM320.2 255.5l-1.8 0.6l0 0.5l1 0.8l1.2 -0.8zM319.5 259l-0.4 1.5l0 0.1l1.7 0.7l1.1 -1.4l-0.9 -1.4l-1.3 0.2zM320.6 262.5l-2.3 -0.2l0.8 -1.7l1.7 0.7l0.1 0.3zM319.5 266.2l1.2 0.9l-1.5 1.4l-0.9 -0.5zM323.1 247.8l0.3 -0.9l-0.5 -0.5l-1.3 1.1zM323.1 258.1l-2.1 0.4l0.3 -1.4l1.1 -0.5zM320.9 261.6l2 0.8l-0.1 -2.5l-0.9 0l-1.1 1.4zM323 264.1l0.2 1.4l0 0l-1.7 0.6l-1.3 -1.9l0.2 -0.2l2.5 -0.1zM320.8 270.1l0.6 0.5l0.1 0l0.5 -0.3l0.2 0l0.5 -2.2l-1.5 -0.9zM324.8 245.4l0.1 -0.1l0.2 -0.7l-0.7 0.5zM324.8 252.8l-0.1 -0.1l-0.5 -0.1l-1.1 0.3l-0.6 1.9l1.6 -0.3zM324.2 258l0.3 -1.1l-0.1 -0.5l-1.8 -0.3l-0.2 0.5l0.7 1.5l0.4 0.3zM327.1 243.6l0.1 -0.2l-0.2 -0.4l-1 0.9zM325.3 262.9l1 0.5l1.6 -0.8l-0.8 -1l-2 -0.8l-0.5 1.4zM326 265.1l0.4 1.1l-1.3 0.6l-1.2 -1.2l1.6 -0.6zM328.6 267.8l-1.3 -0.2l-0.4 -1.1l2.1 -1.6l0.9 1.9zM330.1 242.3l1 -0.9l-0.8 -1.1l-0.9 0.7zM329.9 254l-1 -1.8l-1.3 2l-0.2 0.5l1.2 0.5l1.2 -0.8zM331.3 257.7l-2.5 -1.6l-0.8 1l0.4 1l2.7 0zM333.1 262l0.4 2.6l-0.2 0.2l-2.4 -0.9l0.2 -1.3l1.9 -0.7zM336.1 261.6l0.1 0.5l-1.7 2.3l-1 0.2l-0.4 -2.6z"/>
<path fill="#b29488" stroke="#2b2422" stroke-width="0.3" stroke-opacity="0.55" d="M309.9 279.9l-2.3 0.7l-0.1 1.5l0.2 0.4l0.8 0.2l1.3 -0.7l0.4 -0.8l0.1 -0.9zM318.2 287l-0.5 1l-1.2 0.1l-0.8 -2.2l2 -0.2l0.4 0.3zM318.4 298l-0.1 1.9l0.9 0.1l0.1 0l1.1 -0.8l-0.1 -0.2l-1 -1.3l-0.3 -0.1l-0.5 0.3zM320.6 273.6l0.7 -2.8l0.1 -0.2l0.1 0l1.5 2.8l0 0.1l-1.2 0.9zM318.8 282l2.6 -0.8l0.3 -0.5l-0.7 -0.8l-1 -0.4l-1.3 2.5zM320.6 285.8l-1.9 1.2l2.1 0.4l0.4 0l0.1 -1l-0.2 -0.5zM320.4 291.9l1.3 -0.4l0.3 0.3l0.1 2.1l-1.8 -0.5zM324 290.1l0.3 0.2l0.2 1.7l-0.9 0.5l-1.6 -0.7l-0.3 -0.3l0.6 -1.4zM326.3 273.9l0.1 1.4l-1.2 0.2l-0.3 -0.2l-0.4 -1.4l0.5 -0.5zM323.8 284.1l2.2 0.3l1.5 -2.2l-0.3 -0.1l-3 0.4l-0.3 0.4l-0.3 0.9z"/>
<path fill="#b32d24" stroke="#2b2422" stroke-width="0.3" stroke-opacity="0.5" d="M303 280.8l-1.1 1l-1.3 -1.7l0.1 -1l2.1 0.6l0.3 0.5zM323.4 246.9l1.3 -0.9l0.1 -0.6l-0.4 -0.3l-0.8 0.7l-0.7 0.6zM322.9 250.6l1.2 -0.2l0.7 1.7l-0.1 0.6l-0.5 -0.1l-1.8 -1.8zM323 264.1l1.8 0.1l0.5 -1.3l-0.7 -0.7l-1.3 0.5l-0.4 1.2zM330.5 244.5l0.5 -1.1l-0.3 -0.3l-0.7 -0.1l-0.3 0.3z"/>
<path fill="#b4aca8" stroke="#2b2422" stroke-width="0.3" stroke-opacity="0.55" d="M306.1 288.4l0.5 -0.3l-0.4 -2.7l-0.7 -0.5l-0.2 0.3l0.2 3zM307.6 292l0.2 -0.1l0.6 -2.2l-2.7 0.5l0 0.1l0 0.4zM309.9 279.9l-0.5 -1.3l-1.3 -0.5l-1.3 0.7l-0.3 0.6l1.1 1.2zM307.9 285.6l0.2 0l1.3 0.5l-0.3 1.4l-1.4 0.2zM311.5 286.4l-0.1 -0.1l-0.6 -0.4l0.6 -2.3l0.9 -0.4l1 1.3l0 1zM312.5 288.1l1.8 -1.1l1.1 1.4l-2.8 0.7zM318.5 275.1l-0.5 -1.5l-2.2 -0.2l0.6 2.3l1.5 0zM318 290.6l0.8 -1.2l-1.1 -1.4l-1.2 0.1l-0.6 0.4l-0.1 0.6l0.3 1.5zM319 275.1l-0.5 0l-0.6 0.6l0.7 1.5l1.8 0.2l0.1 -0.1l0 -0.8zM321.8 274.7l1.7 1.7l-0.1 0.1l-2.5 0.9l-0.4 -0.1l0 -0.8zM318.8 282l2.6 -0.8l-0.1 2.3l-0.7 0zM321.5 270.6l1.5 2.8l0.6 -1.1l-1.6 -2zM325.8 277.3l-0.6 -1.8l1.2 -0.2l1.1 0.3l-0.6 1.8z"/>
<path fill="#b6715c" stroke="#2b2422" stroke-width="0.3" stroke-opacity="0.5" d="M320.2 255.5l0.3 -0.5l-1.3 -1.1l-1.1 1.6l0.3 0.6z"/>
<path fill="#b6715c" stroke="#2b2422" stroke-width="0.3" stroke-opacity="0.55" d="M318.4 298l-2.2 0.4l0.1 1.2l2 0.3zM319.2 285l-1 -1.8l-1.2 1.2l0.7 1.3l0.4 0.3zM318.2 294l-0.6 0.4l-1 1.7l0.2 0l2.2 0l0.5 -1.1l-0.1 -0.4zM323.4 278.6l0 1l-1.2 1.1l-0.5 0l-0.7 -0.8l1 -1.5zM324.8 280.7l-1.4 -1.1l-1.2 1.1l1.7 2.2l0.3 -0.4z"/>
<path fill="#bd563c" stroke="#2b2422" stroke-width="0.3" stroke-opacity="0.5" d="M283.1 277.7l0.1 -0.1l-0.3 -1.5l-0.3 -0.7l-0.3 0.2l-0.2 2.4zM283.9 279.1l-0.8 -1.4l-1 0.3l-0.1 1.9l0.5 0.6l0.6 -0.1zM282.5 280.5l-0.5 -0.6l-0.2 1.9zM283.2 277.6l-0.1 0.1l0.8 1.4l1.6 0.3l0 -1.7l-1.3 -0.4zM287 273.5l0.9 2.1l1.6 -0.4l0.5 -1.5l0 0l-1.7 -0.4zM290 273.7l0.2 -2.1l-1.7 0.8l-0.2 0.9zM292.8 278.2l-0.4 1.5l-0.2 0.1l-1.4 -0.2l-0.5 -1l-0.1 -0.3l1 -0.6l1.3 0zM294.7 273.7l-1.5 -2.3l-1 0.8l-0.4 1.7l0.5 0.2l2.1 -0.1l0.4 -0.3zM293 276.3l-0.4 0.4l-0.1 1l0.3 0.5l1.4 -0.1l-0.2 -2zM294.1 280.2l0.5 1.4l-0.1 0.3l-1.7 0.8l-0.7 -0.3l0.1 -2.6l0.2 -0.1zM296.7 267.7l-0.2 -0.5l-0.5 0.4zM295.8 269.5l1 -0.6l0.4 -0.9l0 -0.1l-0.5 -0.2l-0.7 -0.1l-1.3 0.9zM294.1 280.2l0.5 1.4l1.5 -0.5l-0.4 -1.5l-1.3 0.1zM297.5 271.9l0.4 -0.3l-0.1 -1.6l-1 -1.1l-1 0.6l-0.1 0.4l1.1 1.6zM300.1 275.2l-0.1 0l-0.8 0.2l-0.3 0.2l-0.5 1.5l1.9 1.2l0.5 -0.7l0.1 -0.4zM301.7 264l0.1 -0.7l-1 0.8l0.2 0.1l0.2 0.1zM302.3 274.6l-2.2 0.6l0.8 2l2.3 -1.1zM301.8 267.7l1.1 -0.3l0.8 0.4l0.2 0.5l-0.3 1l-1.8 0.2l-0.2 0zM304.4 270.7l1.5 -1.2l-0.6 -1.1l-1.4 -0.1l-0.3 1zM308.1 267l-0.6 0.7l-1.6 -0.3l-0.6 -1.3l0.8 -0.5l1.8 0.2l0.2 0.3zM310.2 261l-0.3 1.7l-1.4 0l-0.5 -0.8l0.4 -0.8zM308.2 272.2l0.2 0.3l0.8 -0.1l0.6 -0.4l0.2 -2.5l0 0l-2 0.5zM307.3 275.7l0.7 -2.4l0.3 -0.3l1 1.7l-0.2 0.8l-0.2 0.2l-0.9 0.4zM310.4 263.1l-0.5 -0.4l0.3 -1.7l0.3 -0.4l1.7 0.6l0.2 0.5l-1.4 1.4zM310 264.8l2 -0.9l-1 -0.8l-0.6 0zM313 264.3l0.5 -1.9l-1.1 -0.7l-1.4 1.4l1 0.8l0.7 0.4zM314 260.6l0.9 -0.5l0.7 0.5l-0.8 1.8l-1.3 0zM315.7 272.5l0.2 -1.9l-0.5 -0.6l-2.1 0.5l-0.3 1l0.2 0.2zM315.2 255.3l0.3 0.3l0.3 0.1l1.1 -0.8l0.1 -2l-1.4 -0.3l-0.8 0.7zM314.9 258.2l1.9 0.6l0.6 -0.9l0 -0.4l-1.3 -0.9zM315.3 264.2l-0.2 -1.6l2.1 0l0.1 0.1l-0.3 1.1l-1.3 0.7zM315.6 267.6l2.1 0.4l-0.6 2.3l-1.2 0.3l-0.5 -0.6l-0.2 -2zM315.7 272.5l0.2 -1.9l1.2 -0.3l0.1 0l0.7 1.7l-2.1 0.6zM318.1 251.2l1.5 -0.1l0.4 1.7l-0.9 0.8l-1.8 -0.8zM319.2 263.8l-1 -1.2l0.1 -0.3l2.3 0.2l-0.2 1.5l-0.2 0.2l-0.1 0zM320.2 255.5l0.3 -0.5l1 -0.4l0.8 0.3l0.3 1.2l-0.2 0.5l-1.1 0.5l-0.7 -0.5zM326.2 247.6l0 -0.2l-1.5 -1.4l-1.3 0.9l-0.3 0.9l0.1 0.2l0 0.1l1.6 1.2l0.2 -0.1zM323.3 262.7l-0.4 -0.3l-0.1 -2.5l0.6 -0.3l1.7 1l0 0.2l-0.5 1.4zM327.5 250.6l-0.9 -0.2l-1.6 -1.2l1.2 -1.6l1.5 1zM327.3 251.8l-1.5 1.3l-1 -0.3l-0.1 -0.1l0.1 -0.6l1.8 -1.7l0.9 0.2l0.4 0.4zM326.2 258.9l-2 -0.9l0.3 -1.1l2 0.5l-0.2 1.4zM324.8 264.2l0.7 0.8l0.5 0.1l0.2 -0.5l0.1 -1.2l-1 -0.5zM327.2 243.4l1.4 -0.2l-0.3 -1.3l-1.3 1.1zM326.8 246.8l-0.6 0.6l0 0.2l1.5 1l1 -0.6l0 0l0.3 -0.6zM329.1 264.7l-2.9 -0.1l-0.2 0.5l0.4 1.1l0.5 0.3l2.1 -1.6zM331.1 258.1l-2.7 0l-0.4 0.7l0.7 1.2l0.5 0.2l1.3 -0.4zM333.1 265.9l0.1 -0.5l0.1 -0.6l-2.4 -0.9l-0.2 0.2l0.5 2.2zM322.9 298.4l-1 1.7l0 0l-1.5 -0.9l-0.1 -0.2l1.4 -1.6l1.2 1zM326.1 272l0.5 -0.6l-0.5 -1l-0.9 -1l-1.1 1l0.5 1.1l0.8 0.7zM324.7 290.3l-0.4 0l0.2 1.7l0.9 0.7l0.8 -1.9zM335.9 265.3l-1.4 -0.9l1.7 -2.3l0.6 0.6zM341.7 271.8l0.4 0.4l1.6 0.9l1.1 -1.8l-2.2 -0.8zM343.6 289.9l1.4 1l0.1 0.4l-0.9 0.5l-1.3 -0.2l0.4 -1.6zM346.8 257.8l1.8 1.3l-1 1.3l-1.5 -1.1l-0.1 -0.1l-0.1 -0.7l0.5 -0.9z"/>
<path fill="#bd563c" stroke="#2b2422" stroke-width="0.3" stroke-opacity="0.55" d="M311.4 283.6l-0.6 2.3l-0.3 0l-1 -1.9l1.4 -0.7z"/>
<path fill="#bf2d25" stroke="#2b2422" stroke-width="0.3" stroke-opacity="0.5" d="M306.3 261.5l0.1 -0.3l-0.3 -1.1l-1.1 0.9zM310.5 277.2l-1.6 -1.5l0.2 -0.2l3.1 0.1l-1.6 1.6zM319.6 251.1l0.2 -0.1l0.4 -1.8l-0.4 -0.2l-2 1.7l0.2 0.4l0.1 0.1zM320.6 249l1.1 0.4l1.5 -1.4l-0.1 -0.2l-1.5 -0.3l-0.8 0.7zM325.8 253.1l-1 -0.3l-0.7 1.7l0.8 1.1l1.5 -0.3l0.4 -0.6zM328 257.1l-1.4 0.2l-0.1 0.1l-0.2 1.4l1.7 0l0.4 -0.7zM353.5 318.7l0.2 -0.3l-0.4 -2.8l-1.8 1l0 0.8z"/>
<path fill="#bf2d25" stroke="#2b2422" stroke-width="0.3" stroke-opacity="0.6" d="M433.1 338l-2.7 0.3l0 0l0.2 -1.3l1.4 -1l0.8 0.6l0.3 0.4l0.1 0.9zM433 339.5l-0.8 1.2l1.2 1.7l1.5 -0.8l0.7 -1.1zM434.8 338.1l0.6 -1.2l1.1 -0.5l0.3 0.1l0.5 1l-2 1.1z"/>
<path fill="#c1a194" stroke="#2b2422" stroke-width="0.3" stroke-opacity="0.5" d="M329.8 283.8l-1 1.4l-0.9 -0.1l-0.1 -2.8l1.3 0.2l0.6 0.7zM333.9 280.1l0.4 1.7l1.5 -0.1l-0.5 -2.2zM338.9 275.1l-1 0.5l-0.2 0.6l0.7 1.2l1.7 0.6l0 0l0.1 -1.1l-0.9 -1.7z"/>
<path fill="#c1a194" stroke="#2b2422" stroke-width="0.3" stroke-opacity="0.55" d="M308.5 282.7l0.2 0.8l-0.6 2.1l-0.2 0l-1.7 -0.2l-0.7 -0.5l-0.1 -0.2l2.3 -2.2zM310.3 280.3l0.1 -0.1l2.4 2.2l-0.2 0.2l-2.4 -1.4zM316.6 296.1l-0.7 -0.4l-2.1 -0.1l0.4 2.1l1.7 0.2zM316.2 298.4l-0.3 -0.5l-1.7 -0.2l0 0.1l-0.1 1.6l2.2 0.2zM320.4 273.7l-1.6 -1l-0.8 0.9l0.5 1.5l0.5 0zM317.4 278.6l1.2 -1.4l1.8 0.2l-0.5 1.9l-2.3 -0.3zM321.1 285.9l0.9 -2l1.6 -0.1l0.2 0.3l0.1 1.8l-2.6 0.5zM321.3 286.4l2.6 -0.5l0.3 0.9l0 0.3l-2.3 1l-0.7 -0.7zM327 273.3l0.8 0.1l0.2 1.9l-0.5 0.3l-1.1 -0.3l-0.1 -1.4zM326 279.5l-0.8 1l2 1.6l0.3 0.1l0.1 0l0.1 -1.6l-0.4 -1.3z"/>
<path fill="#c3bab6" stroke="#2b2422" stroke-width="0.3" stroke-opacity="0.55" d="M310.2 281.2l2.4 1.4l-0.3 0.6l-0.9 0.4l-0.5 -0.3l-1.1 -1.3zM313.8 295.6l-0.2 -0.1l-2 1.7l0.6 1l2 -0.4l0 -0.1zM314.2 297.8l-2 0.4l-0.1 0.7l0.1 0.2l1.9 0.3zM317.4 279.7l-2.3 -0.1l-0.4 0.7l2.6 0.7zM319.7 269.7l-0.9 0.7l-0.2 1.8l0.1 0.1l2.6 -1.5l0.1 -0.2l-0.6 -0.5zM319.3 297.7l2.1 -0.9l0.3 0.6l-1.4 1.6zM324.6 271.5l-1 0.8l-1.6 -2l0.2 0l1.9 0.1zM323.4 278.6l-1.4 -0.2l-1.1 -1l2.5 -0.9l0.4 1.6zM324.7 287.5l0.3 0.1l1.5 0.7l0.1 0.3l-1.9 1.7l-0.4 0l-0.3 -0.2z"/>
<path fill="#c47b64" stroke="#2b2422" stroke-width="0.3" stroke-opacity="0.5" d="M311.2 256.5l1.9 -1.3l0 -0.5l-1.6 1.4l-0.5 0.4zM330.7 262.1l-2.5 0.3l-0.1 0.2l1 1.9l1.6 -0.4l0.2 -0.2l0.2 -1.3zM327 273.3l0.8 0.1l0.7 -0.7l-0.6 -1.6l-1.3 0.3l-0.5 0.6zM327.6 290.6l-1.4 0.2l-1.5 -0.5l1.9 -1.7l0.9 0.8zM330.5 280l-2.8 0.6l-0.1 1.6l0.2 0.1l1.3 0.2l1.6 -2.3l-0.1 -0.1zM327.8 290.8l0 1.1l1.4 1.2l0.7 -1.1l-0.9 -1.3zM331.1 273.1l-0.9 0.8l-0.5 -0.1l-0.9 -1l1.5 -0.9l0.8 0zM332.3 292l0.1 0.3l-0.8 1.8l-2.1 0l0 0l-0.3 -1l0.7 -1.1l1.9 -0.6zM333.3 273.9l-1.2 0.2l-0.8 1.6l0.4 0.4l2.3 -0.7l-0.1 -0.9zM335.6 271.8l0.1 -0.3l-0.8 -1.2l-1.4 0l-0.1 2.4zM335.5 294.9l-0.1 0.3l-1.3 0.5l-0.8 -0.7l0.9 -0.9zM335.4 268.7l-0.5 1.6l0.8 1.2l0.2 0l2 -1.5l-0.7 -1.7zM335.3 279.5l0.1 0l2.1 0.1l0.3 0.4l-0.5 1.5l-1 0.4l-0.5 -0.2zM342 261.7l-0.5 -1l-0.9 0.9l-1.3 -0.2l-0.1 0.2l0.1 0.2l2 0.7zM340.1 278l0 0l-1.4 1.7l1.2 1.2l1.3 -0.8l-0.7 -1.9zM339.4 293.2l0.5 1.3l2.4 -1.2l-0.4 -1.2l-2.6 0.9zM339.9 305.9l-0.8 2.7l0.1 0.3l0.1 0.1l0.8 0.2l1.9 -1.5l0 -0.2l-0.4 -1.4zM341.2 276.1l0.4 -0.7l2.1 1.6l0 0.6l-0.1 0.2l-0.7 0zM340.9 284.6l1 0.4l1.7 -1.3l-0.5 -0.8l-2.3 1.1zM345.7 267l-1.4 -1.2l-1.4 1l0.5 1.6l1.8 -0.1l0.7 -0.9l0 0zM346.3 271.5l-1.2 2.4l4.1 0.8l-2.1 -3zM345.1 293.9l0.4 0.3l1.8 -0.4l0 -2.1l-1.4 0z"/>
<path fill="#c47b64" stroke="#2b2422" stroke-width="0.3" stroke-opacity="0.55" d="M305.4 281.5l-0.6 0.4l0 1.1l0.4 0l0.1 1.6l0.1 0.1l2.3 -2.2l-0.2 -0.4zM307.2 288.2l0.5 -0.5l0.2 -2.1l-1.7 -0.2l0.4 2.7zM308.8 289.6l1.5 2.6l0.3 -0.1l0.1 -0.1l1.4 -2.1l-2.1 -0.8l-0.6 0zM313.7 294.2l-0.2 0.8l0.1 0.5l0.2 0.1l2.1 0.1l-0.2 -1.9zM317 284.4l1.2 -1.2l0.2 -1.2l-0.8 -0.4l-2.2 1.8l0.3 0.7zM318 292.6l0.2 1.4l1.2 0.6l0.9 -1.2l0.1 -1.5l-0.2 -0.1l-2 0.5z"/>
<path fill="#ca5c40" stroke="#2b2422" stroke-width="0.3" stroke-opacity="0.6" d="M489.9 227.3l0 0l-2 -0.1l-0.7 1.3l0.7 0.9l1.7 -0.2l0.6 -0.5l0 -0.1zM424.4 339.3l-0.2 0.5l0 2.4l0.8 0.7l2.5 -1.5l-0.1 -0.2l-2.9 -1.9l-0.1 0zM433.1 338l-0.1 1.5l2.6 1l0.3 -0.2l-0.6 -1.7l-0.5 -0.5l-1.6 -0.2zM427 319.3l1.4 -0.2l0.8 -1l-2.5 -0.6l-0.1 0.7zM410.1 325.1l0.1 2.7l-2 -0.3l-0.2 -0.8l1.7 -2z"/>
<path fill="#ca5c40" stroke="#2b2422" stroke-width="0.3" stroke-opacity="0.5" d="M283.1 280.4l1.1 1l1.6 -1.6l-0.3 -0.4l-1.6 -0.3zM290.9 276.2l-0.9 0l-0.8 1.4l0.2 0.2l0.8 0.5l1 -0.6zM294.7 273.7l-1.5 -2.3l0.2 -0.7l1.1 0l0.7 1zM294.7 273.7l0.5 -2l1.6 -0.2l0.7 0.4l0 0l-1.7 1.8l-1 0zM296.7 267.7l0.5 0.2l0.4 -0.5l0 -0.9l0 -0.1l-1.1 0.8zM301 264.2l-0.2 -0.1l-1.5 1.1l-0.2 0.1l0.2 0.4l0.2 0.1zM299.9 273.1l0.1 2.1l-0.8 0.2l-1 -1.5zM300.2 267l0.6 -0.1l0.9 -1.5l-0.5 -1.1l-0.2 -0.1l-1.5 1.6zM300 272.9l2.2 0.3l0.2 -1.3l-2.3 -0.9l-0.6 0.7zM300 272.9l2.2 0.3l0.3 0.5l-0.2 0.9l-2.2 0.6l-0.1 0l-0.1 -2.1zM301.7 264l1.7 -0.4l0.4 -0.6l-0.4 -0.9l-1.6 1.2zM306 271.6l-1.6 -0.4l0.2 2.2l1.2 0.1l0.5 -1.4zM306.4 261.2l1.6 -1.9l-0.3 -0.4l-1.6 1.2zM305.9 263.3l0.4 -1.8l1.7 0.4l0.5 0.8l-0.4 0.7l-0.6 0.4l-1.2 -0.2zM306.1 265.6l1.8 0.2l-0.4 -2l-1.2 -0.2zM306.3 272.1l-0.5 1.4l0.4 0.3l1.8 -0.5l0.3 -0.3l0.1 -0.5l-0.2 -0.3zM306.8 278.8l-0.9 -1.7l0.7 -1.4l0.7 0l0.7 0.4l0.1 2zM312.7 259.2l-2.4 0.7l-0.3 -0.6l0.3 -0.8l2.4 0.6zM310.8 266.3l2 1l0.1 0.6l-2.6 0zM310.2 268.1l-0.2 1.4l0 0l0 0l2.8 -0.4l0.3 -1l-0.2 -0.2l-2.6 0zM311.7 265.3l-1 0.4l0.1 0.6l2 1l0.1 -0.5zM310 269.5l2.8 -0.4l0.1 0.4l-1.8 1.1zM312.7 259.2l0 1.2l1.3 0.2l0.9 -0.5l-0.5 -1zM314.8 258.2l-0.4 0.9l0.5 1l0.7 0.5l0.7 -0.1l0.6 -0.5l-0.1 -1.2l-1.9 -0.6zM315.5 266.4l0.1 1.2l2.1 0.4l0.1 -0.1l0.2 -2.1l-0.3 -0.3l-1.8 0.2zM317.4 257.9l2.1 1.1l-0.4 1.5l-2.2 -0.5l-0.1 -1.2zM322.3 250.8l0.1 0l0.5 -0.2l0.3 -2.5l0 -0.1l-1.5 1.4zM323.4 259.6l-0.6 0.3l-0.9 0l-0.9 -1.4l0 0l2.1 -0.4l0.4 0.3zM327.5 245.6l-0.7 1.2l-0.6 0.6l-1.5 -1.4l0.1 -0.6l0.1 -0.1l2 -0.4zM327.4 260.2l-0.3 1.4l-2 -0.8l0 -0.2l1 -1.4zM325.1 266.8l-0.6 1.2l0.8 1l1.4 -0.5l0.6 -0.9l-0.4 -1.1l-0.5 -0.3zM329.2 246.1l-0.4 -0.5l-1.3 0l-0.7 1.2l2.2 0.6l0.3 -0.6zM328.9 251.3l-1 -0.3l-0.6 0.8l0.3 2.4l1.3 -2zM329.5 248.8l1.1 0l-1.4 -0.6zM331.6 257.6l0.3 -1.6l-0.2 -0.2l-1.9 -1.4l-1.2 0.8l0.2 0.9l2.5 1.6zM330.6 260l0.1 2.1l0.4 0.5l1.9 -0.7l-0.2 -0.7zM324.4 296.8l0.2 -0.3l0.8 -0.2l1.2 1.6l-1.3 1.4zM326.9 285.4l1 -0.3l-0.1 -2.8l-0.2 -0.1l-0.1 0l-1.5 2.2l0.7 0.9zM326.6 297.9l-1.2 -1.6l0 0l2.9 0.3l-1.2 1.4zM329.6 297.1l-0.8 -0.8l-0.5 0.3l-1.2 1.4l0.6 1l1.5 -0.1zM331.5 288.2l0.5 1.9l-0.3 0.9l-1.7 -0.8l-0.1 -2.1l1.3 -0.1zM330.2 297.1l-0.6 0l-0.4 1.8l0.6 0.8l0.9 0.3l0.9 -0.8zM331 301.4l-0.3 -1.4l-0.9 -0.3l-1 1.1l0.7 1.3l0.9 0.3zM336.6 265.8l-1 0.7l-2.4 -1.1l0.1 -0.6l0.2 -0.2l1 -0.2l1.4 0.9zM335 284.7l-0.7 -0.2l-0.3 -2.5l0.3 -0.2l1.5 -0.1l0.5 0.2l-0.1 1.3l-0.8 1.4zM336.3 281.9l1 -0.4l1.5 1l-1 1.4l-1.6 -0.7zM336.3 287.9l0 2.5l1.3 0.2l0.5 -0.8l-1.7 -2zM340.7 272.1l-1.9 -1.8l-0.1 0.1l-0.2 1.6l0.2 0.7l1.1 0zM338.4 285.3l1.5 -2.5l0 -0.2l-0.1 0l-1 -0.1l-1 1.4l0.3 1.2zM337.5 294.7l1.9 -1.5l0.5 1.3l0 1l-0.1 0l-1.9 0.1l-0.4 -0.9zM337.4 301l0.9 -2.5l0.3 0l0.8 0.5l-0.1 1.1l-1.2 1.2zM340.5 274.5l-1.2 0.7l0.9 1.7l1 -0.8l0.4 -0.7l0 -0.4l-0.5 -0.5zM340.1 285.4l0.4 1.9l1.3 -0.1l-1.2 -2.2zM339.7 302.8l0.2 0.4l0.9 0.1l1.5 -1.3l-0.9 -0.9l-1.1 0.4zM345.5 270.9l-0.4 0.1l-0.3 0.3l-1.1 1.8l0.4 0.9l1 -0.1l1.2 -2.4zM360.1 276.5l0 0.1l-0.7 1.6l-10.1 -8.3l0 -2.3l7.8 4.5zM352.9 319.8l0.4 -0.6l0.2 -0.5l-2 -1.3l-0.7 0.6l0.2 1.2zM350.7 325.3l0.1 0.3l2.3 1.3l0.1 0l-0.5 -1.6l-1.7 -0.3zM358.8 327.8l-1.6 -0.4l0.1 -2.1l0.5 0.1l1.3 1.5zM360.9 325.3l-2.4 -0.2l0.7 -1.3l2 -0.9l0.4 0.4zM361.3 314.6l2 -1l-1.4 -1.9l-0.1 0l-1.3 1.6zM361.3 315.3l0 -0.7l2 -1l0.4 0.2l0.1 1.6zM364.7 318.8l-1.6 -0.6l-0.6 -0.8l1.7 -1.4l0.5 2.4zM364.8 332.4l-0.6 1.6l0.2 0.1l0.8 0.2l0.9 -0.3l1.2 -1.7l-0.2 -0.4zM370.5 327.4l0.6 -2.1l-0.7 -0.5l-1.6 0.3l0.6 1.9l0.7 0.4zM372.2 324.9l1.3 -2.1l2.2 0.4l-0.9 1.4l-1.9 0.7zM375.3 338.9l-0.3 -0.2l0 -0.6l1.2 -1.3l0.4 -0.2l1.5 0.9l-0.4 0.7l-0.9 0.6zM376.1 341.2l-0.8 -2.3l1.5 -0.1l-0.1 2.2zM378.1 340.3l0.8 -0.5l1.5 0.3l0 0.6l-1.9 1l-0.7 -0.7zM378.5 341.7l0.1 0.7l1.5 0.7l1.2 -1.7l-0.9 -0.7zM383.7 333.3l-1 -0.7l0.4 -1.4l0.6 -0.9l1.3 0.1l0.7 1l-1.2 1.6zM387.5 339.2l-0.5 0.3l-0.5 1.7l1.2 0.8l1.4 -1.4l-0.3 -1zM397.4 345.4l-0.7 -0.5l-1.1 0.1l-0.9 1.1l0.8 0l0.7 1.1zM398.6 336.7l-2.6 0.4l0 0.6l0.1 0.4l1.3 1.1l0.3 0z"/>
<path fill="#ca5c40" stroke="#2b2422" stroke-width="0.3" stroke-opacity="0.55" d="M361 269.1l-2.7 -4.3l-1.6 -1.3l-1.5 1.1l-0.4 0.6l0 0.4l2 6l0.3 0.5l3 4.4l0.5 -0.8l0.5 -5.1zM381.6 281.8l-0.7 1.1l-1.8 -1.1l0.4 -0.6l0.5 0l1.6 0.3zM385.4 274.8l1.3 1.7l0.5 0.1l0.8 -1.7l-2 -1.1l-0.7 0.7z"/>
<path fill="#cb2e25" stroke="#2b2422" stroke-width="0.3" stroke-opacity="0.5" d="M288 281.7l-0.1 1.5l0.6 0.4l1.5 0l0.2 0l0.5 -0.9l-1.1 -1.5l-0.8 -0.2zM300.1 271l0.3 -1.1l1.2 -0.4l0.2 0l1.1 1.9l-0.5 0.5zM304.3 271.1l-1.4 0.3l-1.1 -1.9l1.8 -0.2l0.8 1.4zM314 260.6l-0.5 1.8l0 0l-1.1 -0.7l-0.2 -0.5l0.5 -0.8zM317.3 262.7l-0.1 -0.1l-0.9 -2.1l0.6 -0.5l2.2 0.5l0 0.1l-0.8 1.7l-0.1 0.3zM323 264.1l0.2 1.4l0.7 0.1l1.6 -0.6l-0.7 -0.8zM325.2 269.4l0.1 -0.4l-0.8 -1l-1.1 -0.3l-0.7 0.4l-0.5 2.2l1.9 0.1zM347.6 265.2l2.1 1.4l-0.5 0.9l-0.4 0l-1.7 -1.2zM352.4 309.3l-0.1 0l-1.7 -1.8l0 0l1 -0.8l2.3 -0.1l-0.2 1.5zM383.8 334.8l-2.3 0.1l0 2.4l0.6 0.1l2 -1.7l-0.3 -0.8z"/>
<path fill="#cb2e25" stroke="#2b2422" stroke-width="0.3" stroke-opacity="0.55" d="M386.3 270.2l-0.7 -0.5l-0.3 -1.9l1.4 -0.2l0.6 0.3l0.3 0.7z"/>
<path fill="#cb2e25" stroke="#2b2422" stroke-width="0.3" stroke-opacity="0.6" d="M426.4 344.8l0.9 -0.1l0.7 -2.8l-0.5 -0.5l-2.5 1.5l0.2 1zM428 341.9l0.3 0l1.1 1.4l-1.8 1.6l-0.3 -0.2zM441.7 341.1l-0.2 -0.2l-0.7 -0.1l-2.7 1l-0.1 1.1l2.6 0.7l1.5 -0.6l-0.1 -0.8zM409.3 324.1l-2.2 0.1l0.9 -3.1l1 0l0.3 0.1l0.1 0.2l0.3 1.8z"/>
<path fill="#d0ae9f" stroke="#2b2422" stroke-width="0.3" stroke-opacity="0.6" d="M525.1 239.3l0.1 -1.9l-0.3 -0.3l-1.5 -0.4l-0.7 1l0.9 2l0.6 0zM529.1 236.3l-0.6 2.4l-1 -0.4l-0.9 -1.5l0.2 -0.3l2.1 -0.4zM539.1 229.5l0.8 0.4l0 -1.3l-0.2 -0.1zM485.6 228.3l0.7 -1.9l-0.4 -0.7l-1 0l-0.7 1.6zM482.7 230.7l1.5 -1.1l1.2 -0.2l0.1 0.8l-1.3 1.5l-0.3 0.1zM485.4 229.4l0.1 0.8l1.7 1.2l0.4 -0.2l0.3 -1.8l-0.7 -0.9l-1.5 0zM488.2 231.6l1.4 -0.7l0.9 0.4l0.3 1.4l-1.7 0.6zM412.6 327l-0.3 -2.1l-2.2 0.2l0.1 2.7l0.1 0.1l1.6 0l0.6 -0.7z"/>
<path fill="#d0ae9f" stroke="#2b2422" stroke-width="0.3" stroke-opacity="0.5" d="M323.6 294l-1.4 0.1l-0.8 1.7l0 0.1l2.6 0.1l-0.3 -1.9zM326.1 270.4l1.3 -0.8l-0.7 -1.1l-1.4 0.5l-0.1 0.4zM335.4 284.6l0.8 -1.4l1.6 0.7l0.3 1.2l-1.8 0.2zM340.8 290.1l1.1 2l1 -0.5l0.4 -1.6l-1.5 -0.4zM357.6 317.7l-1.9 -2.2l-0.1 0l0 0l-0.5 2.6l0.5 0.2zM357.9 317.8l-0.3 -0.1l-2 0.6l0.5 1.5l0.5 0zM358.6 315.6l2.5 0.2l0.2 1.3l-2.9 0.3zM361.2 330.9l-1.1 0.3l0.9 0.6l0.4 -0.6zM371.7 335.4l0 -0.4l-0.9 -0.5l-1.7 2.5l0 0.1l2.1 -0.2zM376.7 322.7l-1 0.5l-0.9 1.4l0.3 1.6l1.6 -0.3l0.4 -0.7l-0.1 -2.2zM376.7 325.9l0.3 1.7l-0.3 0.3l-1.9 -1l0.3 -0.7zM383 329.7l0.7 0.6l-0.6 0.9l-2.1 -0.1l-0.4 -1.7l0.6 -0.2zM383.7 333.3l0.1 1.5l0 0.1l1.9 -0.8l-1.2 -1.1zM386.7 346.1l0.2 0.5l1.5 -0.1l0.2 -0.4l-0.3 -1.3zM388.4 343.3l0 0.5l1.8 0.5l1.2 -1.3l-0.4 -1.4l-0.3 0zM395.6 345l-1.4 -0.9l-1 0.5l0.4 1.3l0.5 0.3l0.6 -0.1zM396.6 344.4l0.1 0.5l-1.1 0.1l-1.4 -0.9l0.6 -1.4z"/>
<path fill="#d0ae9f" stroke="#2b2422" stroke-width="0.3" stroke-opacity="0.55" d="M307.2 288.2l1.3 1.4l-0.1 0.1l-2.7 0.5l0.4 -1.8l0.5 -0.3zM307.6 292l-1.9 -1.3l0.1 1.5l1.1 2.1zM308.8 289.6l1.5 2.6l0 0l-2.5 -0.3l0.6 -2.2l0.1 -0.1zM309.9 279.9l-0.5 -1.3l1.1 -1.4l0.1 0l1.6 1.5l-0.4 1l-1.4 0.5l-0.1 0.1zM310.6 295.2l-0.2 1l0.8 0.8l0.4 0.2l2 -1.7l-0.1 -0.5l-2.1 -0.1zM312.3 283.2l1 1.3l1.8 -1.3l-0.9 -1.2l-0.4 -0.3l-1 0.7l-0.2 0.2zM317.3 281l0.1 0.2l-3.2 0.8l-0.4 -0.3l0.1 -0.6l0.4 -0.6l0.4 -0.2zM312.6 289.1l-0.3 0.7l1.1 0.9l2.4 -1.6l0.1 -0.6l-0.5 -0.1zM315.7 285.9l2 -0.2l-0.7 -1.3l-1.3 -0.3l-0.5 1.4zM318.5 297.9l-0.1 0.1l-2.2 0.4l-0.3 -0.5l0.7 -1.8l0 0l0.2 0zM317.4 279.7l0.2 -0.7l2.3 0.3l0.1 0.2l-1.3 2.5l-0.3 0l-0.8 -0.4l-0.2 -0.4l-0.1 -0.2zM320.4 277.4l-0.5 1.9l0.1 0.2l1 0.4l1 -1.5l-1.1 -1l-0.4 -0.1zM321.9 288.1l2.3 -1l0.5 0.4l-0.7 2.6l-1.7 0l-0.3 -0.4zM359.3 248.7l-2 0.9l0.3 0.7l1.8 -1.1zM357.5 250.5l0.1 -0.2l1.8 -1.1l1.2 0.8l-0.1 0.3l-0.6 0.8zM361.6 257l-1.3 -1.7l0.1 -0.7l2.1 0.2l0.2 1.7l-0.5 0.5zM362.2 257l0.5 -0.5l1.1 0.1l0.8 0.5l0.4 0.5l-0.4 1.1l-1.6 0.7zM367.2 257.2l1 -1.2l0.2 -0.8l-0.4 -0.6l-1.4 -0.6l-2 3.1l0.4 0.5zM367.7 249.8l0.1 -2l1.5 -0.8l-0.1 2.7l-0.8 0.3zM369.5 260l1.8 -1.4l0.2 -0.5l-2.2 -0.4l0.1 2.2zM373.7 251l0 0.1l-2.3 0.2l-0.5 -0.9l1.4 -2l1.3 0.1l0.3 0.7zM369.5 260l1.8 -1.4l0.6 2.4l-1.8 -0.5zM373.2 278.2l-3.9 -1.9l-9.2 0.3l-0.7 1.6l-0.2 0.4l0.3 0.2l13.3 0.8zM373.1 279.9l-1 1.4l-7.5 -0.1l-1.4 -0.2l-3.3 -1.9l-0.4 -0.3l13.3 0.8zM375.2 266.1l-1.9 -0.6l-0.8 0.8l-0.1 0.7l0.3 0.2l2.2 0.9l0.1 -0.1zM374.7 281.1l-1.1 0.9l-0.2 1.4l0.3 0.9l2 -1.7l-0.2 -1.3zM378 254.3l0 0l-0.8 -0.8l-0.6 -1.1l-0.5 -0.1l-0.5 0.6l-0.9 2.1l0.6 0.6l1.4 0.2zM376.8 257.1l-0.1 -0.2l-2.2 0.8l-0.1 1.8l0.7 0.2l1.3 -0.6zM378.4 282.6l-2.1 0.8l-0.6 -0.8l-0.2 -1.3l1.4 -0.4l0 0l1.6 1.2l-0.1 0.4zM375.8 265.5l0.1 -0.6l1 -1.2l1.2 0l0.9 1.9l-0.1 0.2l-1.5 0.5zM376.8 271.7l-0.5 -0.5l0 -1.6l1.1 -0.6l1 0.4l0.2 0.7l-0.4 0.7l-0.6 0.8zM377.8 274.6l-1.2 0.1l-0.2 0.8l0.7 2l1.2 0.2l0.7 -1.1l-0.8 -1.7zM382.1 270.7l0.8 -1l-0.1 -0.4l-1.8 -1.1l-0.1 0l-0.7 2.1l0.6 0.6zM383 273.9l2.3 0.6l0.1 0.3l-1 1.7l-0.4 0.1l-1.4 -1.4zM381.6 279l2.6 -0.5l0.7 0.5l0.6 1.2l-3.8 -0.8zM384.8 267.6l0.5 0.2l1.4 -0.2l0.4 -2.5l-0.2 -0.3l-2 1.5zM386.6 270.8l-1.4 1.1l-0.6 -0.1l-0.6 -1.4l1.6 -0.7l0.7 0.5zM387.9 271.4l0.9 -1.9l-1.2 -0.9l-1.3 1.6l0.3 0.6l1.3 0.6zM388.7 273.7l-0.1 0.8l1.2 0.9l1 0.1l0.8 -0.6l0.4 -0.5l-0.1 -0.1l0.1 -0.6zM392.6 267.8l-1.3 -0.4l-0.9 2l2.6 -0.2l0.2 -0.7z"/>
<path fill="#d2856d" stroke="#2b2422" stroke-width="0.3" stroke-opacity="0.6" d="M528.8 240l0 -0.7l-0.3 -0.6l-1 -0.4l-2.1 1.1l1.4 1.3l2 -0.6zM531.7 235.5l-0.4 -1.3l-1 -0.3l-1.3 0.6l-0.1 1.6l0.2 0.2l1 0.3zM530.6 237.6l-0.5 -1l-1 -0.3l-0.6 2.4l0.3 0.6l1.5 -0.9zM534 234.4l0.6 0.2l0.6 -1.1l-0.4 -1l-2.3 -0.1l-0.2 1zM534.7 234.7l2.3 0.7l0.6 -1.4l-0.9 -0.6l-1.5 0.1l-0.6 1.1zM539.9 231.5l0 -1.6l-0.8 -0.4l-0.3 0.1l-0.6 1.6l0.3 0.3zM480.1 231.5l0.5 -0.4l1.8 -0.3l-0.4 2.8zM430.6 337l1.4 -1l-0.2 -0.5l-1.8 0.3l-0.2 0.2zM440.8 340.8l-2.7 1l-1 -1.5l0.6 -0.7l1.3 -0.3zM420.8 321l0.2 1l-1.9 1.8l-0.6 -1.6l0.7 -1.1zM424.9 322.3l0.2 1.7l-1.8 0.2l-0.3 -1.4l0.6 -1.1z"/>
<path fill="#d2856d" stroke="#2b2422" stroke-width="0.3" stroke-opacity="0.5" d="M298.9 275.6l-2 -0.4l-0.7 1.7l0.2 0.6l0.8 0.1l1.2 -0.5zM308 259.3l0 0l2 0l0.3 -0.8l0.4 -1.8l-3 2.2zM319.4 257.4l0.3 1.3l-0.2 0.3l-2.1 -1.1l0 -0.4l1 -0.9zM322.9 298.4l-1.2 -1l-0.3 -0.6l0 -0.9l2.6 0.1l0.6 0.5l-0.2 0.3zM322.9 298.4l1.7 1.2l0.7 0l0 -0.3l-0.9 -2.5l-1.5 1.6zM323.5 300.8l1.6 0.4l0.3 -1.4l-0.1 -0.2l-0.7 0zM328.3 270.5l-0.9 -0.9l-1.3 0.8l0.5 1l1.3 -0.3zM328.7 294l-2.5 0.6l-0.2 -1l0.4 -0.3zM325.3 299.6l0.1 0.2l1.6 0.5l0.7 -1.3l-0.6 -1l-0.5 -0.1l-1.3 1.4zM328.3 270.5l-0.4 0.6l0.6 1.6l0.3 0.1l1.5 -0.9l-2 -1.4zM330.1 277.9l-0.4 0.8l-1.5 -0.2l0.7 -2.6l0.9 0.2zM329.7 278.7l0.8 1.3l-2.8 0.6l-0.4 -1.3l0.4 -0.7l0.5 -0.1zM327.8 290.8l1.2 -0.1l1 -0.5l-0.1 -2.1l-0.4 -0.2l-2 1.5l0.1 1.2zM329.8 299.7l-1 1.1l-1.5 0.2l-0.3 -0.7l0.7 -1.3l1.5 -0.1zM331.3 275.7l-0.7 0l-0.8 0.4l0.3 1.8l2.1 -0.4l-0.5 -1.4zM332.2 277.5l0.6 0.7l0 0.1l-2.2 1.8l-0.1 -0.1l-0.8 -1.3l0.4 -0.8zM331.7 291l-1.7 -0.8l-1 0.5l0.9 1.3l1.9 -0.6zM330.9 296.7l-0.7 0.4l-0.6 0l-0.8 -0.8l-0.1 -0.6l0.8 -1.6l2.1 0l0.3 0.8l-0.1 0.9zM333.4 267.1l-2.1 1.4l-0.9 -1.6l0.8 -0.6l1.9 -0.4zM334 292.5l-1.6 -0.2l-0.8 1.8l0.3 0.8l1.4 0.1l0.9 -0.9zM331.6 299.2l-0.9 0.8l0.3 1.4l2.4 0.4l-0.4 -1.9l-1 -0.8zM333.7 302.1l2.1 -2.6l-0.1 -0.9l-0.2 -0.1l-2.5 1.4l0.4 1.9l0.3 0.3zM336.7 300.9l-0.9 -1.4l-2.1 2.6l2.2 0.4zM336.3 303.1l-0.4 -0.6l-2.2 -0.4l0 0l-0.4 1.2l2.7 0.9zM336.7 265.8l0.7 -0.6l0.1 -1.9l-0.6 -0.6l-0.1 0l-0.9 2.6l0.7 0.5zM336.3 285.3l1.8 -0.2l0.3 0.2l0.1 0.2l-0.2 1.8l-1.8 0.4zM336 292.9l-0.1 1.4l1.6 0.4l0 0l-0.2 -1.9zM337.4 265.2l1.9 0.2l-0.3 -2.1l-1.5 0zM340.2 269.3l-1.2 -1.9l-1.5 0.3l-0.3 0.6l0.7 1.7l0.8 0.4l0.1 -0.1l1.3 -0.9zM340.5 274.5l-1.2 0.7l-0.4 -0.1l-0.5 -2l0.3 -0.4l1.1 0zM337.2 278.3l1.2 -0.9l1.7 0.6l-1.4 1.7l-0.9 0.3l-0.3 -0.4zM338.4 285.3l1.5 -2.5l0.9 1.2l0.1 0.6l-0.3 0.4l-0.5 0.4l-1.6 0.1zM337.3 292.8l0.2 1.9l1.9 -1.5l-0.1 -0.2l-0.6 -0.7l-0.4 -0.1zM338.1 301.3l1.2 -1.2l1 1.4l-0.6 1.3l-1.3 -0.6zM341.3 262.5l-2 -0.7l0 1.3l1.3 0.2zM340.4 269.2l2.3 0.7l-0.1 0.6l-0.9 1.3l0 0l-1.6 -2.4l0.1 -0.1zM338.6 298.5l0.8 0.5l0.6 -0.1l0.8 -0.5l0.5 -0.8l-0.4 -1.6l-1 -0.5l-0.1 0zM341.5 300.8l-1.5 -1.9l0.8 -0.5l1.6 1.3zM339.2 305l0.7 -1.8l0.9 0.1l1.2 1.1l-0.2 1.4l-0.2 0.3l-1.7 -0.2l-0.5 -0.4zM342 261.7l1.5 0.7l0.9 -0.7l-0.3 -1.6l-0.1 -0.1l-1.5 -0.3l-1 1zM341.2 265.7l0.2 -0.4l2.2 -1.7l0.9 0.7l-0.2 1.5l-1.4 1zM341 265.9l0.1 2.5l2.2 0.1l0.1 -0.1l-0.5 -1.6l-1.7 -1.1zM342.1 272.2l1.6 0.9l0.4 0.9l0 0l-2.5 1l-0.5 -0.5zM346.6 285.9l-3 -2.2l-1.7 1.3l0.9 1.5zM342.3 288.2l1.7 0.5l2.4 -1.7l0.8 -1l-0.6 -0.1l-3.8 0.6l-0.7 0.7zM344.3 294l0.8 -0.1l0.8 -2.2l-0.8 -0.4l-0.9 0.5l-0.4 1.9zM344.3 294l-0.4 2.1l0.3 0.6l1.9 -0.2l-0.6 -2.3l-0.4 -0.3zM348.8 261.8l-1 -0.5l-1.2 0.8l-0.3 2.2l1 0.4l0.6 -0.4l1 -1.7zM348.9 262.6l-1 1.7l1.7 0.3l0.2 -1zM347.3 264.7l0.6 -0.4l1.7 0.3l0.5 1.7l-0.4 0.3l-2.1 -1.4zM351 263.5l0.9 0.3l-0.6 2.1l-0.2 0.2l-1 0.2l-0.5 -1.7l0.2 -1zM344.9 313.8l-1.8 0.2l0.5 0.6l1.1 0.5l0.4 -0.2zM344.1 309.7l0.3 -1.2l2.2 -0.2l0.5 1.3l-0.6 0.6zM346.1 312.8l-0.5 0l-0.7 1l0.2 1.1l2 0.6l-0.1 -0.8zM348.9 312.1l-0.2 -2l0 -0.1l-1.6 -0.4l-0.6 0.6l-0.3 1l0.1 1.2zM349.3 317.8l-2.4 -1.5l0.2 -0.7l2.1 -0.3l0.5 0.3zM350.6 307.5l-0.2 -1.8l-2.9 -0.4l-0.2 0.7l2.6 1.6l0.7 -0.1zM352.3 309.3l-1.1 1l-2.5 -0.2l0 -0.1l1.2 -2.4l0.7 -0.1zM349.2 312.4l-0.1 -0.1l-0.2 -0.2l-0.2 -2l2.5 0.2l-0.1 1.2zM352.8 320.9l0.6 1l-0.3 0.4l-2 1.4l-0.7 -1.2l0 -1.1l0.1 -0.1zM352.6 309.5l2.6 0.6l0.3 -1.2l-1.8 -0.8l-1.3 1.2zM355.3 310.8l-0.1 -0.7l-2.6 -0.6l0.6 2l1.1 0.3zM354.9 322l0.4 0.6l1 0.4l1.5 -1.4l-2.3 -0.6zM356.4 311.2l1.6 -1.3l0.8 1.3l-1.8 1.5l-0.1 0zM357.9 317.8l-0.3 -0.1l-1.9 -2.2l0.2 -0.1l2.7 0.2l0 0l-0.2 1.8l-0.2 0.4zM359.7 329.2l-0.9 -0.6l-1.3 0.4l-0.3 0.4l0.8 0.4l0.9 0.6zM358.6 315.6l0 0l0.1 -1.8l0.9 -0.6l0.9 0.1l0.8 1.3l0 0.7l-0.2 0.5zM361 325.8l0 0.9l0.2 0.5l2 -0.3l0.6 -0.8l-0.2 -0.5zM365.7 314.2l2.2 0.6l-1.4 1.5l-0.1 -0.1l-0.9 -0.5zM367.4 326.2l-1.5 -2.6l-0.1 0.1l-0.1 2.6l1.1 0.8l0.4 -0.3zM366.8 327.1l-0.1 0.5l-1.7 1.7l-0.4 -0.5l0.1 -2.4l1 -0.1zM365.6 334.9l1.5 1.1l0.5 -1.2l-1.5 -0.8l-0.9 0.3zM366.5 316.3l1 1.5l0.8 -0.1l1.1 -1.3l0.3 -0.6l-1.6 -1.1l-0.2 0.1zM367.4 326.2l0.9 -1.3l-0.3 -0.7l-1.7 -0.8l-0.4 0.2zM367.3 332.3l-1.2 1.7l1.5 0.8l1.3 -0.8l0.1 -0.3zM368.9 319.7l0.5 1.3l0.8 -0.3l0.2 -1.9l-1.3 -0.3zM368.5 328.9l1.6 -1.5l0.4 0l0.4 0.4l0.2 0.8l-0.5 0.9l-1.4 0.4zM370.2 320.7l2 0.6l0.5 -0.7l-0.8 -1.7l-1.3 -0.2l-0.2 0.1zM372.1 324.9l-0.7 -2.3l0.8 -1.2l1.3 1.4l-1.3 2.1zM372.1 324.9l-0.7 -2.3l-1.5 0.5l0.5 1.7l0.7 0.5zM370.9 327.8l1.9 -0.5l0.7 -0.4l-0.6 -1.6l-0.7 -0.4l-0.1 0l-1 0.4l-0.6 2.1zM371.1 328.6l1.8 1l-0.1 -2.3l-1.9 0.5zM373.1 329.8l-0.6 1.8l0.5 0.7l0.1 0.2l2.2 -0.6l0.5 -2l-1.5 -0.6zM375.4 332l0.5 1.9l-0.6 0.6l-0.9 0.2l-1.2 -1.3l-0.1 -0.9l2.2 -0.6zM375.9 341.4l0.2 -0.2l-0.8 -2.3l-0.3 -0.2l-1.6 0.8l0.1 1.1l1.3 0.8zM377.6 332.3l-2.2 -0.3l-0.1 -0.1l0.5 -2l0.6 -0.3l1.2 2.3zM378.4 333.5l-0.4 0.4l-0.3 0.2l-1.8 -0.2l-0.5 -1.9l2.2 0.3zM378.4 333.5l-0.4 0.4l0.6 3.5l0.7 0l0.4 -2.8l-1.1 -1.1zM376.7 341l1.1 0l0.3 -0.7l-0.4 -2.1l-0.9 0.6zM379.3 331.7l1.7 -0.1l0 -0.5l-0.4 -1.7l-0.9 -0.1l-0.6 0.4l-0.1 0.5zM380.6 337.8l-1.1 -0.3l-0.6 2.3l1.5 0.3l0.4 -1.1zM381.5 337.3l-0.9 0.5l0.2 1.2l1.8 1.1l0.5 -1.5l-0.3 -0.7l-0.7 -0.5zM383.1 338.6l1.7 0.8l-0.5 1.7l-1.4 -0.2l-0.3 -0.8zM383.7 343.3l-0.6 2.3l1 0.4l1.7 -1.2l0 0l-0.3 -1.2l-0.7 -0.9zM385.2 337.4l0 0.1l0 1.5l1.8 0.5l0.5 -0.3l-0.2 -2zM387.8 342.5l-2.3 1.1l-0.7 -0.9l0 -1l1.7 -0.5l1.2 0.8zM387.3 337.2l0.2 2l1.3 0.4l0.7 -0.7l-0.1 -0.8l-1.9 -1.1zM387.8 342.5l-0.1 -0.5l1.4 -1.4l1.6 1l-2.3 1.7zM390.4 332.8l-1.1 0.7l0 2.1l0.4 0.2l0.9 0.1l1.1 -1.5zM388.8 339.6l0.3 1l1.6 1l0.3 0l0 0l0.3 -1.8l-0.6 -0.9l-1.2 0zM388.4 346.5l2.7 -0.1l-0.1 -0.5l-0.6 -0.6l-1.8 0.8zM390.7 338.9l0.7 -0.8l0.8 -0.5l0.9 0.3l0.2 0.4l-0.4 0.9l-1.6 0.6zM391.3 339.8l-0.3 1.8l2.1 -0.6l-0.2 -1.8zM393.3 338.3l1 0.5l1 2l-0.3 0.7l-0.2 0.1l-0.3 0l-1.4 -0.6l-0.2 -1.8zM393.3 346.2l0.8 0l-0.5 -0.3z"/>
<path fill="#d2856d" stroke="#2b2422" stroke-width="0.3" stroke-opacity="0.55" d="M315.2 285.5l0.5 -1.4l-0.3 -0.7l-0.3 -0.2l-1.8 1.3l0 1l0.9 0.4zM325 273.4l-0.5 0.5l-1.5 -0.4l0 -0.1l0.6 -1.1l1 -0.8l0.8 0.7zM352.3 255.5l1 -0.5l-0.5 -1.5l-0.4 -0.3l-1.4 0.3l0.7 1.4zM352.3 257.5l0 -2l-0.6 -0.6l-1.4 1.4l1.6 1.2zM352.3 257.5l0.3 0.2l0.3 1l-0.5 0.8l-1.1 1.3l-0.4 0l-0.5 -1l0.8 -1.9l0.7 -0.4zM351.3 265.9l1.5 -0.5l0.5 -1.8l-0.3 -0.5l-1.1 0.7zM354.6 255.3l-1.3 -0.3l-0.5 -1.5l1.4 0.1zM352.8 265.4l0.5 -1.8l1.5 1.6l0 0.4zM357.5 250.5l0.1 -0.2l-0.3 -0.7l-1 0.4l-0.9 0.4l0 0.3l1.7 0.4zM361.6 257l-1.3 -1.7l-1.3 1.3l0.3 1.2l0 0l0.3 0.1l0.5 0.1zM360.1 258l-0.5 -0.1l-0.3 2.9l0.2 0.3l1.3 -1.6zM368.4 255.2l0.8 0l2.3 1.4l0.6 0.7l0 0.4l-0.6 0.4l-2.2 -0.4l-1.1 -1.7zM371.1 264.6l0 -0.5l0.9 -0.3l1.4 0.6l-0.1 1.1l-0.8 0.8l-0.8 -0.7zM376.8 267.8l0.6 1.2l-1.1 0.6l-1.4 -1.3l0 -0.2l0.1 -0.1zM376.6 274.7l-0.9 -1.2l-1 0.1l0 0l-1.2 1.7l0.8 0.9l2.1 -0.7zM376.9 263.7l-0.6 -0.8l0.6 -1.3l1.2 -0.5l0.6 1.6l-0.6 1zM379 265.6l-0.9 -1.9l0.6 -1l1.7 0.1l0.1 0l0.5 1.1l-0.9 1.4zM382.8 273.3l0 0l-0.7 -2.6l-1.3 0.2l-0.4 1l-0.1 1.2zM383 283.2l-1.4 -1.4l0 -0.3l0.6 -0.7l2.4 0.7zM383.4 264.8l0.5 0.1l1 1.4l-0.1 1.3l-0.8 0.2l-1.1 -1l0.2 -1.9zM388.8 263.2l0.9 1.6l1.1 0.3l1.4 -0.8l0.5 -0.7l0.2 -1.3l-2.6 -2zM388.7 273.7l3.3 0l0.2 -1l0 -0.2l-1.6 -0.7l-1.9 0.4l-0.1 0.9zM390.8 276.3l-2.7 2l-0.2 -0.5l1.9 -2.4l1 0.1zM391.3 267.4l-1 -0.5l0.5 -1.8l1.4 -0.8l0.4 3.5z"/>
<path fill="#d2c9c5" stroke="#2b2422" stroke-width="0.3" stroke-opacity="0.6" d="M524.1 234.2l0.9 1.7l-0.1 1.2l-1.5 -0.4l-0.5 -2z"/>
<path fill="#d2c9c5" stroke="#2b2422" stroke-width="0.3" stroke-opacity="0.55" d="M309.5 284l-0.8 -0.5l-0.6 2.1l1.3 0.5l1.1 -0.2zM307 294.4l1 1.8l1.6 0.4l0.8 -0.4l0.2 -1l-1.1 -1.3zM310.3 292.2l0 0l-0.8 1.7l1.1 1.3l0.8 -0.3l0.2 -1.4l-1 -1.4zM316.1 276.1l0.3 -0.4l-0.6 -2.3l0 0l-2.4 0.9l-0.9 0.8l0 0.2l0.2 0.2zM315.1 279.6l0.5 -1.8l-0.5 0l-1.5 0.6l0.7 2.1l0.4 -0.2zM315.1 283.2l0.3 0.2l2.2 -1.8l-0.2 -0.4l-3.2 0.8zM317.4 279.7l0.2 -0.7l-0.2 -0.4l-1.5 -0.9l-0.3 0.1l-0.5 1.8zM318 292.6l0.2 1.4l-0.6 0.4l-1.9 -0.6l0.3 -1.6zM315.7 293.8l0 0l0.2 1.9l0.7 0.4l0 0l1 -1.7zM320.4 273.7l-1.6 -1l-0.1 -0.4l2.6 -1.5l-0.7 2.8zM320.4 273.7l-1.4 1.4l1.5 1.4l1.3 -1.8l0 -0.3l-1.2 -0.8zM320.6 285.8l-1.3 -0.9l1.3 -1.4l0.7 0l0.7 0.4l-0.9 2zM319.2 289.5l-0.1 0l1.1 2.3l0.2 0.1l1.3 -0.4l0.6 -1.4l-0.3 -0.4zM319 297.6l0.3 0.1l2.1 -0.9l0 -0.9l0 -0.1l-1.9 -0.8l-0.5 1.1zM323.6 283.8l0.3 -0.9l-1.7 -2.2l-0.5 0l-0.3 0.5l-0.1 2.3l0.7 0.4zM322.1 293.9l0.1 0.2l1.4 -0.1l0 -1.5l-1.6 -0.7zM324.9 278.1l-1.1 0l-0.4 0.5l0 1l1.4 1.1l0.4 -0.2l0.8 -1zM327 273.3l-0.9 -1.3l-0.7 0.2l-0.4 1.2l1.3 0.5zM325 287.6l1.5 0.7l0.9 -1.4l-0.5 -1.1zM354.4 251.9l0.4 0.9l1.2 0.3l1.2 -1.8l-0.1 -0.2l-1.7 -0.4l-0.6 0.1l0 0zM363 253.4l1.2 -3l0.4 -0.5l0.9 0.5l1 3.5l-1.4 0.3l-2 -0.4zM378.3 277.7l0 0l0.1 0.8l-1.5 2.4l0 0l-0.8 -1.9l-0.1 -1l1.1 -0.5zM378.6 257.9l0.3 0.7l1.8 0.5l1.3 -0.3l0.2 -0.1l0.5 -0.5l-0.2 -0.6l-1.7 -0.5l-1 -1zM380.2 273.1l0.1 0l0.1 -1.2l-2.2 -1.1l-0.6 0.8l1 1.2zM382 264.1l-1 -0.2l-0.5 -1.1l1.8 -1.1l0.6 0.7zM382.2 280.8l-0.4 -1.2l-1.8 1.6l1.6 0.3zM386 273.6l0 0.2l2 1.1l0.6 -0.4l0.1 -0.8l-0.1 -0.6z"/>
<path fill="#d2c9c5" stroke="#2b2422" stroke-width="0.3" stroke-opacity="0.5" d="M358.4 321.6l-0.1 1.3l-1.3 1.5l-0.7 -1.4l1.5 -1.4l0.1 0zM388.4 343.8l-0.2 0.3l0.1 0.7l0.3 1.3l1.8 -0.8l-0.2 -1zM394.8 336l0.8 0.1l0.4 1l0 0.6l-2.4 -0.4l0.5 -1z"/>
<path fill="#d72e26" stroke="#2b2422" stroke-width="0.3" stroke-opacity="0.55" d="M369.9 266.5l0 1l1.7 0.2l0.8 -0.7l0.1 -0.7l-0.8 -0.7z"/>
<path fill="#d72e26" stroke="#2b2422" stroke-width="0.3" stroke-opacity="0.6" d="M428.7 337.2l0.8 -1.2l-1.8 -1.7l-0.3 2.1zM433.2 337.9l-0.1 -0.9l1.4 -1.1l0.9 1l-0.6 1.2zM414.4 326l-1.8 1l-0.1 0.2l1.9 0.5l1.1 -1.4l0 0z"/>
<path fill="#d76143" stroke="#2b2422" stroke-width="0.3" stroke-opacity="0.5" d="M284.3 282.1l-0.1 -0.7l-1.1 -1l-0.6 0.1l-0.7 1.3l-0.1 1.3zM283.2 277.6l1 -0.3l0.7 -1.6l-2 0.4zM285.3 274.4l0.1 0.8l1.2 1.7l0.8 0.1l0.5 -1.4l-0.9 -2.1l-0.3 -0.1l-0.5 0.2zM287.9 277.5l-0.5 -0.5l-0.8 -0.1l-1.1 0.8l0 1.7l0.3 0.4l0.1 0l1.4 -0.5zM285.1 283.5l2.2 0.1l0.2 -0.3l-1.5 -1l-0.9 0.5zM287 273.5l1.3 -0.2l0.2 -0.9l-1.8 1zM289.2 277.6l-1.3 -0.1l-0.6 1.8l1.2 1l0.1 -0.2l0.8 -2.3zM287.3 279.3l-1.4 0.5l0.7 1.7l1.4 0.2l0.8 -0.7l-0.3 -0.7zM289.4 277.8l0.8 0.5l0.1 0.3l-1.7 1.5zM288.6 280.1l1.7 -1.5l0.5 1l-1.2 1.6l-0.8 -0.2l-0.3 -0.7zM292.8 269.8l-2 1.5l-0.2 0.1l1.6 0.8l1 -0.8l0.2 -0.7zM294.8 273.7l-0.4 0.3l0 1.8l1.8 1.1l0.7 -1.7l-0.1 -0.5l-1 -1zM294 276.1l0.4 -0.3l1.8 1.1l0.2 0.6l-0.1 0.2l-1.9 0.5l-0.2 -0.1zM299.1 265.3l-1.5 1.1l0 0.1l1.7 -0.8zM295.8 273.7l1 1l1.4 -0.8l-0.7 -2zM297.6 280.3l-1.3 0.8l1.1 2.1l0.3 0.1l1.4 -0.1l0.2 0l-0.2 -1.6l-0.8 -1.3zM298.4 277.1l1.9 1.2l0 0.2l-1.7 1.2l-1.4 -2.1zM298.3 280.3l0.3 -0.6l1.7 -1.2l0.4 0.6l-0.1 1l-1.5 1.5zM302.3 274.6l0.2 -0.9l2 -0.3l0.1 2l-1.1 0.9l-0.3 -0.2zM303.1 280.2l-0.3 -0.5l0.3 -1.3l0.8 -1.2l0.1 0.1l1.3 2zM304.6 265.6l-1 -0.3l-0.2 -1.7l0.4 -0.6l1.6 0.3zM305.1 266.1l-0.5 -0.5l0.8 -2.3l0.5 0l0.4 0.3l-0.2 2l-0.8 0.5zM306.6 275.7l-0.2 -0.2l-1.8 -0.1l-1.1 0.9l0.4 0.9l0.1 0.1l1.9 -0.2zM306 271.6l1.4 -1.9l0 0l0.6 0.3l0.2 2.2l-1.9 -0.1zM310.2 261l-1.8 0.1l-0.4 -1.8l2 0l0.3 0.6l0.2 0.7zM309.9 265.1l0.1 -0.3l0.4 -1.7l-0.5 -0.4l-1.4 0l-0.4 0.7l1.6 1.8zM312.7 264.3l-0.7 -0.4l-2 0.9l-0.1 0.3l0.8 0.6l1 -0.4zM313.1 255.2l0.5 0.2l1.6 -0.1l-0.4 -2l-1.7 1.4zM315.5 266.4l0.1 1.2l-0.4 0.4l-2.1 0.1l-0.2 -0.2l-0.1 -0.6l0.1 -0.5l0.8 -1.1zM315.1 262.6l-0.3 -0.2l0.8 -1.8l0.7 -0.1l0.9 2.1zM317 252.9l0.3 -0.1l1.8 0.8l0.1 0.3l-1.1 1.6l-1.2 -0.6zM317.9 272l-0.7 -1.7l1.6 0.1l-0.2 1.8zM321.9 251.3l-2.1 -0.3l0.4 -1.8l0.4 -0.2l1.1 0.4l0.6 1.4zM319.2 253.9l-0.1 -0.3l0.9 -0.8l1.2 0.3l0.3 1.5l-1 0.4zM320.1 264.2l0.1 0l1.3 1.9l-0.5 0.9l-0.3 0.1l-1.2 -0.9l-0.2 -0.5zM319.7 269.7l-0.5 -1.2l1.5 -1.4l0.3 -0.1l0.2 0.2l-0.4 2.9zM323.2 265.5l-1.7 0.6l-0.5 0.9l0.2 0.2l1.5 0.9l0.7 -0.4zM324.4 256.4l-1.8 -0.3l-0.3 -1.2l0.2 -0.1l1.6 -0.3l0.8 1.1zM326 243.9l-0.9 0.7l-0.2 0.7l2 -0.4l0.2 -1.3zM329.5 250.9l0 -2.1l-0.3 -0.6l-0.5 -0.2l-1 0.6l-0.2 2l0.4 0.4l1 0.3l0.4 -0.2zM327.3 251.8l-1.5 1.3l1 1.6l0.6 0l0.2 -0.5zM328.8 256.1l-0.2 -0.9l-1.2 -0.5l-0.6 0l-0.4 0.6l0.2 2l1.4 -0.2zM328.7 260l-0.7 -1.2l-1.7 0l-0.1 0.1l-0.1 0.3l1.3 1zM329.2 260.2l-0.5 -0.2l-1.3 0.2l-0.3 1.4l0.8 1l0.2 0l0.1 -0.2zM329.1 264.7l-2.9 -0.1l0.1 -1.2l1.6 -0.8l0.2 0l1 1.9zM329.5 248.8l0 2.1l1.9 -0.6l0 -1.1l-0.8 -0.4zM329.9 254l-1 -1.8l0 -0.9l0.4 -0.2l2.3 1.9zM330.6 260l0.1 2.1l-2.5 0.3l1 -2.2l1.3 -0.4zM330.4 266.9l-0.5 -0.1l-0.9 -1.9l0.1 -0.2l0 -0.2l1.6 -0.4l0.5 2.2zM331.4 250.3l1.5 0.8l0.3 -0.9l0.1 -0.2l-1.9 -0.8zM332.2 252.9l0.7 -1.8l-1.5 -0.8l-1.9 0.6l-0.2 0.2l2.3 1.9l0.3 0.1zM331.9 253.1l-0.2 2.7l0.2 0.2l1.2 -0.7l-1 -2.2l0.1 -0.2zM333.8 259.4l-1 1.8l0.2 0.7l0.1 0.1l3 -0.4l0.1 -0.5l-0.1 -0.1l-0.3 0l-0.1 -0.3zM321.9 300.1l0.7 0.6l0.9 0.1l1.1 -1.2l-1.7 -1.2zM331.3 268.5l-0.1 1.2l-1.9 -0.1l-0.7 -1.8l1.3 -1l0.5 0.1zM331.2 288l-1.3 0.1l-0.4 -0.2l-0.3 -0.8l0.2 -0.7l2 -0.9l0 0zM334.1 289.1l-2.1 1l-0.5 -1.9l1.9 -0.6l0.9 0.4zM332.4 298.3l-0.4 0.8l1 0.8l2.5 -1.4l-0.3 -0.4l-1.3 -0.7l-0.5 0zM336.9 262.7l2.3 -1.1l0.1 0.2l0 1.3l-0.3 0.2l-1.5 0zM341.6 275l2.5 -1l0.1 1.4l-0.5 1.6l-2.1 -1.6zM344.3 294l-0.4 2.1l-1.8 -0.7l0.4 -1.8l1.3 0.1zM343.9 296.1l0.3 0.6l-0.6 1.2l-2.3 -0.3l-0.4 -1.6l1.2 -0.6zM343.4 268.4l1.8 -0.1l0.6 1.4l-0.3 1.2l-0.4 0.1l-1.9 -1.9l0.1 -0.6zM346.3 316.8l0.4 -0.2l0.2 -0.3l0.2 -0.7l0 -0.1l-2 -0.6l-0.4 0.2l-0.2 0.6l0.5 0.5zM349.5 312.9l-0.3 2.4l0.5 0.3l0.5 0l1.6 -1.7l-0.3 -0.4zM350.4 322.5l0 -1.1l-1.5 0l0.6 1.3zM353.7 325l-1 0.3l-1.7 -0.3l0.1 -1.3l2 -1.4zM355.9 313.4l-0.3 2.1l0 0l-2.1 -0.3l-0.4 -0.7l1.4 -2zM358.8 327.8l0 0.8l0.9 0.6l1.4 0l0 0l0.1 -2l-0.2 -0.5l-1.9 0.2zM362.3 331.8l-0.9 -0.6l-0.4 0.6l1.6 1.1zM368.3 317.7l1.1 -1.3l1.3 1.9l-0.1 0.4l-0.2 0.1l-1.3 -0.3zM373.7 336.9l1.3 1.2l1.2 -1.3l-2.1 -0.9l-0.3 0.3zM381.3 341.4l-1.2 1.7l0.7 1.4l0.3 0.1l1.1 -1.7l-0.3 -1.3zM384.5 333l1.2 -1.6l1.4 0.7l0.3 0.6l-1 1.6l-0.7 -0.2zM394.8 341.6l0 1.1l-0.6 1.4l-1 0.5l-0.3 -0.1l-0.7 -1.1l2.3 -1.8z"/>
<path fill="#d76143" stroke="#2b2422" stroke-width="0.3" stroke-opacity="0.55" d="M350.3 256.3l-1.2 -0.4l-0.2 -0.2l0.6 -2l1 -0.4l0.5 0.2l0.7 1.4zM361.2 248.3l0.2 1l3.1 0.4l0 -2.3l-1.3 -0.1l-1.2 0.3l-0.2 0.1zM368.1 265.1l0.6 -0.2l0.6 -1.2l-2.1 -0.9l-0.4 0.6zM373.8 270.7l-1.8 -1.5l-0.2 0l-1.1 1.6l2.5 0.6zM389.7 267.2l-0.8 -0.2l-0.8 -1.5l1.6 -0.7l1.1 0.3l-0.5 1.8z"/>
<path fill="#d76143" stroke="#2b2422" stroke-width="0.3" stroke-opacity="0.6" d="M429.3 338.5l1.1 -0.2l0.2 -1.3l-0.8 -1l-0.3 0l-0.8 1.2zM429.1 338.7l0.2 -0.2l1.1 -0.2l0 0l1.2 2.4l-0.5 0.2l-1.4 -0.6l-0.7 -1.2zM429.7 340.3l-0.9 1.4l1.7 0.2l0.6 -1zM439 339.3l-1.3 0.3l-0.2 -2l1.7 -0.4l0.5 0.8zM425.4 326.7l1 -2.1l-1.3 -0.6l-1.8 0.2l-0.3 0.4l-0.2 2.1l0.2 0.3zM427.4 321.7l-0.9 -0.9l-1.2 1.3l1.6 1.2zM426.1 327.5l0.3 0.2l1 1.2l-0.8 1.9l-0.1 0l-0.4 0l-1.7 -0.7zM429.8 317.7l-0.6 0.4l-2.5 -0.6l-0.4 -1.5l0.2 -0.6l1.6 -0.2l0.8 0.2zM428.4 324.8l-0.4 0.1l0.3 1.3l1.4 2.1l0.2 0l0.2 -0.1l0.7 -2.3zM428.2 321.6l0.8 -0.8l1.5 -0.1l0.3 1.7l-1.4 0.7zM407.7 332.2l0.2 0.7l1.5 0.7l0.4 -0.7l0.6 -1.4l-1.2 -1l-1.2 0.3zM412.6 324.5l-0.3 0.4l-2.2 0.2l-0.4 -0.4l-0.4 -0.6l0.4 -0.9l2.7 -0.1zM414.2 331.6l-1.7 0.5l-0.6 -0.6l0 -0.7l0.6 -1.7l1.8 0.7l0.2 1.2z"/>
<path fill="#dfbaab" stroke="#2b2422" stroke-width="0.3" stroke-opacity="0.6" d="M524.2 239.7l-0.6 0l-0.9 0.7l-0.6 1.8l0.2 0l0.6 -0.3l1.9 -0.6zM525.9 232.6l-0.1 0.9l0.6 0.6l1.8 0l0.3 -1.9l-1.4 -0.2zM531.9 235.6l2.1 -1.2l-1.7 -1l-1 0.8l0.4 1.3zM533 236.9l1.3 -0.8l0.4 -1.4l-0.1 -0.1l-0.6 -0.2l-2.1 1.2zM537.7 228.8l1.1 0.8l-0.6 1.6l-1.3 0l-0.4 -0.2l-0.2 -1.6zM537.6 234l0.1 0l0.9 -0.9l-0.1 -1.6l-0.3 -0.3l-1.3 0l-0.2 2.2zM479.2 228.3l0.9 -0.5l0.3 -0.7l-1.2 -1l-1.3 1.2zM480.6 228.5l-0.5 -0.7l0.3 -0.7l1.5 -0.9l0.3 0.2l0.3 2.7l-0.1 0.1zM482.2 226.4l1.9 1l0.1 -0.1l0.7 -1.6l-0.3 -0.4l-2.5 -0.7l-0.2 1.6zM483.3 232.9l0.6 -1.1l-1.2 -1.1l-0.1 0l-0.2 0.1l-0.4 2.8l0 0.1zM485.2 235.1l-1.9 -2.2l-1.3 0.8l-0.3 1.2l2.9 1.2zM484.1 227.4l0.1 -0.1l1.4 1l0.1 0.2l-0.3 0.9l-1.2 0.2l-0.8 -1.1zM485.5 232.8l1.1 -0.6l0.6 -0.8l-1.7 -1.2l-1.3 1.5zM421.1 324l1.9 0.6l0.3 -0.4l-0.3 -1.4l-1.6 -0.2zM427 319.3l1.4 -0.2l0.6 1.7l-0.8 0.8l-0.8 0.1l-0.9 -0.9l-0.1 -0.3l0.1 -0.4zM402.9 322.4l0.7 -1.5l1.7 -1.1l0.3 0l0.3 0.4l-0.4 3.5l-1 0.3zM404 326.6l-0.4 -1l0.9 -1.6l1 -0.3l1.4 0.6l0.1 1.1l-1.2 1.2zM409.3 324.1l-2.2 0.1l-0.2 0.1l0.1 1.1l1 1.3l1.7 -2zM414.4 327.7l0.6 1.1l-0.7 1l-1.8 -0.7l-0.6 -1.2l0.6 -0.7z"/>
<path fill="#dfbaab" stroke="#2b2422" stroke-width="0.3" stroke-opacity="0.5" d="M331.7 276.1l2.3 -0.7l0.8 0.9l-0.7 1.3l-1.3 0.6l-0.6 -0.7zM330.9 296.7l1.5 1.6l1 -0.9l-1.6 -1.6zM336 292.9l1.3 -0.1l1 -0.6l-0.7 -1.6l-1.3 -0.2l-0.8 0.5l-0.4 1.3zM341 265.9l-1 0.1l-1 1.4l1.2 1.9l0.2 -0.1l0.7 -0.8zM346.3 264.3l-1.8 0l-0.2 1.5l1.4 1.2zM348.5 319.3l-0.7 0.2l0.5 0.6l0.6 1.3l1.5 0l0.1 -0.1l-0.3 -1.2zM351.5 313.5l0.3 0.4l1 0.4l0.3 -2.7l-1.2 0.5zM352.9 319.8l0.4 -0.6l2.3 1.3l-0.1 0.5l-0.6 1l-1.1 -0.1l-0.4 0l-0.6 -1zM358.1 313.6l-1.1 -0.9l-0.1 0l-1 0.7l-0.3 2.1l0.1 0l0.2 -0.1zM361.2 330.9l-0.1 -1.7l-1.4 0l-0.8 1.2l1.2 0.8zM363.7 328.4l-2.4 0.8l-0.2 0l0.1 -2l2 -0.3zM364.6 328.8l0.4 0.5l0 0.4l0 0l-1.6 0.4l-2.1 -0.9l2.4 -0.8zM364.8 332.4l-0.4 -1l-1.7 0.1l-0.4 0.3l0.3 1.1l1.6 1.1zM366.9 319.6l0.2 1.8l-2.5 -0.4l-0.4 -1l0.6 -1.1l1.9 0.2zM372.9 325.3l1.9 -0.7l0.3 1.6l-0.3 0.7l-0.6 0.3l-0.7 -0.3zM382.2 342.9l-1.1 1.7l0.3 0.3l1.7 0.7l0.6 -2.3zM392.8 334.5l0.1 0.6l-1.3 1.4l-1 -0.6l1.1 -1.5zM394.1 336.3l-0.5 1l-0.5 0.6l-0.9 -0.3l-0.6 -1.1l1.3 -1.4zM392.9 344.5l-1.9 1.4l-0.6 -0.6l-0.2 -1l1.2 -1.3l0.8 0.4zM396.6 344.4l0.1 0.5l0.7 0.5l0.5 0l0.2 -3.4l-1.1 0.4zM397.9 345.4l-0.5 0l-1.2 1.8l0.7 1l0.7 0.5l2.5 -1.7l-0.2 -0.7l-1.1 -0.7z"/>
<path fill="#dfbaab" stroke="#2b2422" stroke-width="0.3" stroke-opacity="0.55" d="M305.7 290.2l0.4 -1.8l-0.6 -0.2l0.2 2.1zM307.2 288.2l1.3 1.4l0.3 0l0.6 -0.5l-0.3 -1.6l-1.4 0.2zM309.5 293.9l0.8 -1.7l-2.5 -0.3l-0.2 0.1l-0.7 2.3l0.1 0.1zM310.8 285.9l0.6 0.4l-1.4 2.8l-0.6 0l-0.3 -1.6l0.3 -1.4l1.1 -0.2zM312.5 288.1l-1 -1.7l-0.1 -0.1l-1.4 2.8l2.1 0.8l0.2 -0.1l0.3 -0.7zM315.1 277.8l-1.5 0.6l-0.7 -0.2l-0.1 -2.3zM310.4 280.2l2.4 2.2l1 -0.7l0.1 -0.6l-2.1 -1.4zM313.5 293.4l-1.9 0.1l-1 -1.4l0.1 -0.1l2.8 0.7zM315.6 291.7l-1.6 0l-0.5 1l0 0.7l0.2 0.8l2 -0.4l0 0l0.3 -1.6zM315.8 272.6l2.1 -0.6l0.7 0.2l0.1 0.1l0.1 0.4l-0.8 0.9l-2.2 -0.2l0 0zM315.9 277.7l1.5 0.9l1.2 -1.4l-0.7 -1.5l-1.5 0l-0.3 0.4zM319.3 284.9l1.3 -1.4l-1.8 -1.5l-0.1 0l-0.3 0l-0.2 1.2l1 1.8zM318.2 292.3l2 -0.5l-1.1 -2.3l-0.3 -0.1l-0.8 1.2zM321.8 274.4l1.2 -0.9l1.5 0.4l0.4 1.4l-1.4 1.1l-1.7 -1.7zM323.8 284.1l2.2 0.3l0.7 0.9l-2.5 1.5l-0.3 -0.9zM324.2 287.1l0 -0.3l2.5 -1.5l0.2 0.1l0 0.4l-1.9 1.8l-0.3 -0.1zM351.3 260.8l1.8 1.6l1 -0.6l-1.7 -2.3zM351.3 265.9l1.5 -0.5l2 0.2l2 6l-5.7 -5.5zM354.7 255.4l-0.6 1.6l1.3 0.8l1 -0.1l0.5 -1.9l-1 -0.6zM356.2 261.6l0.8 -1.7l1.3 0.1l1 0.8l0.2 0.3l0.1 0.4l-1.1 0.5l-2.1 -0.2zM358.7 253.8l0.4 -0.4l0.5 -0.1l0.8 1.3l-0.1 0.7l-1.3 1.3l-1.3 -1zM361.7 251.5l-1.2 -1.2l0.1 -0.3l0.8 -0.7l3.1 0.4l0.1 0.2l-0.4 0.5zM363 253.4l-1.5 -0.8l-1.9 0.7l0 0l0.8 1.3l2.1 0.2l0.6 -1zM366.6 254l-2 3.1l-0.8 -0.5l1.3 -2.4l1.4 -0.3zM361.3 266.9l0 -2.8l2.2 -2.7l0.9 0.3l0.3 0.8zM367.8 247.8l1.5 -0.8l0 0l0 -0.1l-0.4 -1l-0.3 -0.1l-2.3 0.6zM367.2 257.2l1 -1.2l1.1 1.7l0.1 2.2l-0.4 0.1l-1.3 -0.2l-0.6 -0.8zM369.8 249.6l0.9 -1.2l-1.4 -1.4l0 0l-0.1 2.7zM368.4 255.2l0.8 0l2.3 -1.2l-0.6 -2.1l-1.8 0.3l-1.1 2.4zM369.2 255.2l2.3 -1.2l1.2 0.1l-1.2 2.5zM374.3 269.2l-1.2 -0.2l-0.4 -1.8l2.2 0.9l0 0.2zM374.7 273.6l-1.5 -1.2l0 -1l0.6 -0.7l0.3 -0.1l0.6 0.3l0 2.7zM376.3 262.9l0.6 -1.3l-1.5 -0.7l-0.4 1.5zM377.1 267.4l2 0.8l0.3 -0.3l-0.5 -2.1l-1.5 0.5zM380.7 259.1l1.3 -0.3l-1.6 2.7l-1.4 -0.8zM378.2 261l-0.1 0.1l0.6 1.6l1.7 0.1l0 -1.3l-1.4 -0.8zM378.9 265.8l0.1 -0.2l1.1 -0.3l1.1 0.9l0.3 0.7l-0.5 1.3l-0.1 0l-1.5 -0.3zM380 281.2l1.8 -1.6l-0.1 -0.2l-0.1 -0.4l0 -0.1l-2.1 0.9l0 1.4zM380.1 274.2l0.5 1.7l0.7 0.2l1.3 -0.9l0.4 -1.3l-0.2 -0.6l-2.5 -0.2l-0.1 0zM384.7 262.2l-1.1 0.3l-0.7 -0.1l-0.6 -0.7l-0.1 -3l0.5 -0.5l2.7 1.1l-0.1 0.8zM386 273.6l2.6 -0.5l0.1 -0.9l-0.8 -0.8l0 0l-1.9 2zM390.4 269.4l-0.3 0l-0.5 -0.2l0.1 -2l0.6 -0.3l1 0.5zM392.4 272l0.6 -2.8l-2.6 0.2l-0.3 0l0.5 2.4l1.6 0.7zM350.9 301.1l-1 1.2l1.1 1.3l2.1 -0.8l-1.3 -1.5zM353.9 306.6l-2.3 0.1l0.3 -1.6l2.2 0l-0.1 1.3zM363.4 293l-2.3 0.9l-0.9 -4.1l3.2 3.1zM360.7 308.9l1.6 -1.6l-2.1 -1.5l-0.9 0.9l1.1 2.1zM361.9 311.7l0.2 -0.6l-0.3 -0.6l-0.9 -1.1l-1.5 1.7l2.4 0.6zM364.3 307l-1.1 0.6l-0.8 -0.3l0.3 -2l0.6 -0.5zM366.2 292.5l0.9 -1.7l-2.3 -1.8l-0.5 3.2zM366.3 292.9l-0.1 -0.4l0.9 -1.7l0.8 0l0.7 0.2l0.1 1.6l-0.4 0.4zM367.4 311.1l0.1 0l1 -1.9l0 -0.1l-2.5 -0.1l0.7 1.6zM365.7 314.2l-0.1 -0.8l2.2 -0.7l0.3 0.6l0 1.4l-0.2 0.1zM370.7 288l-3.1 -2.6l0.5 1.9l1.6 2.7l1 -1.7zM369.8 297.4l0 -0.1l-2.8 -0.3l-0.1 0.1l1.8 1.6l1.2 0.1l0.2 -0.3zM368.5 309.2l0 -0.1l-0.1 -1.1l0.9 -1.1l0.5 -0.4l1.6 2.4l0 0l-2.7 0.4zM368.1 313.3l2.8 0.2l0.4 -0.5l-1 -1.5l-2.4 0.6l-0.1 0.6zM374.5 316.9l-1.6 -2.3l0 -1.2l1.4 -0.2l0.8 3zM375.6 292.2l-1.3 0.3l0 0.5l0.2 0.6l0.4 0.3l2.3 0.1l0.2 -0.1l0.5 -1.2l0 -0.2zM377.9 292.5l0 0.2l2.1 1.1l0.7 -1l0 -1.1l-0.8 -0.8l-1.7 0.6zM380.1 301.5l-1.7 0.1l0 0.4l1.5 2.3l0.2 -0.1l0.5 -1.1zM378.2 306.3l0.9 1.3l1.4 -0.2l0.1 -0.1l-1 -2.6zM381.3 284l-0.3 0.1l-2.6 -1.6l0.1 -0.4l0.6 -0.3l1.8 1.1zM382 289.3l-1.4 0.3l-0.3 0.3l-0.4 1l0.8 0.8l1.4 0.1l0.6 -0.2l-0.4 -2.2zM383.8 308l0.3 1.4l-2.2 -0.1l-0.6 -1.9l0.7 -0.5zM384.4 293.8l-1.1 -1.2l-0.1 -0.8l1.6 -0.7l0.5 0.2l0.3 1.2zM385.7 295.4l-1.4 -1.3l-1.9 1.1l1.7 1.9l0.5 0l0.3 -0.1l0.9 -1.3l0 -0.1zM383.9 305.3l2.6 -0.8l-0.8 -1.2l-0.9 -0.4l-1.2 2.2zM388 300.1l-0.8 -1.4l-1.4 0.5l0.5 1.7l1.3 -0.2l0.3 -0.3zM390.2 282.1l-1.3 0.7l-0.9 -1.1l1.7 -1.4l0.4 1.3zM388.8 309.2l1.3 -2.7l-1.3 -0.3l-0.3 0.4zM392.5 287.5l0 0l2.7 -0.4l-1.2 -1.3zM394.7 290.6l-1.7 -0.2l-0.3 -0.5l0.4 -1.5l1.2 0.1zM391.5 304.7l1.8 0.7l0 -2.3l-1.6 0l-0.4 0.6l-0.1 0.6zM397.1 282.9l-1.5 1.8l1.3 1.2l1.7 -0.7l0.1 -1.1l-0.4 -0.6zM397.8 288.4l0.4 0l0.9 1.5l0.2 0.7l-1 0.7l-0.1 0l-1.1 -0.2z"/>
<path fill="#e08f75" stroke="#2b2422" stroke-width="0.3" stroke-opacity="0.6" d="M526.4 235.2l0.4 1.3l-0.2 0.3l-1.4 0.6l-0.3 -0.3l0.1 -1.2zM525.1 239.3l0.1 -1.9l1.4 -0.6l0.9 1.5l-2.1 1.1zM525.4 239.4l-0.3 -0.1l-0.9 0.4l0.6 1.6l2 -0.6zM531.3 234.2l-1 -0.3l-0.4 -2.2l2.2 -0.7l0.4 1.4l-0.2 1zM532.8 237.5l-2.2 0.1l-0.3 0.8l1.3 0.8l1 -0.3l0.3 -0.2zM536.3 229.4l0.2 1.6l-1.4 0.5l-1.7 -1.5l2 -1.2zM537 235.4l-2.3 -0.7l-0.4 1.4l1.4 1l1.5 -0.9zM538.6 233.1l-0.9 0.9l1.4 1.1l0.8 -0.5l0 -1.2zM476.9 225.5l-0.1 1.4l1.1 0.4l1.3 -1.2l-0.5 -0.6l-0.6 0l-0.1 0l-0.1 0zM479.6 231.6l-0.6 -0.4l-0.6 -1.9l0.8 -1l0.9 -0.5l0.5 0.7l0 2.6l-0.5 0.4zM485 224.2l-0.4 1.1l0.3 0.4l1 0l0.9 -1.2l-0.5 -0.5zM485.9 225.7l0.4 0.7l1.4 0.2l0.2 -1.1l-1.1 -1zM487.6 231.2l0.3 -1.8l1.7 -0.2l0 1.7l-1.4 0.7zM491.2 230.5l-0.7 0.8l0.3 1.4l0.6 0.2l1.4 -1.6l-1.2 -0.8zM428.8 341.7l1.7 0.2l0.3 1.5l-0.3 0.2l-1.1 -0.3l-1.1 -1.4zM435.3 338.6l2 -1.1l0.2 0.1l0.2 2l-0.6 0.7l-1.2 0zM436.9 343.1l-1.5 1.2l0.1 -2zM437.3 337.5l-0.5 -1l1.3 -1.7l1.8 -0.2l-0.7 2.6l-1.7 0.4zM416.7 321.9l1.8 0.3l0.6 1.6l-0.1 0.6l-0.3 0.2l-0.8 0l-1.8 -2.1zM418.8 318.4l-0.7 1.1l1.1 1.6l1.6 -0.1l0.5 -0.6l-2.1 -2.1zM419.1 323.8l1.9 -1.8l0.4 0.6l-0.3 1.4l-1.3 0.7l-0.8 -0.3zM419.2 318.3l2.1 2.1l1.5 -0.6l0.3 -1.6l-0.5 -0.7l-2.3 -0.3zM420.8 321l0.2 1l0.4 0.6l1.6 0.2l0.6 -1.1l-0.2 -1.1l-0.6 -0.8l-1.5 0.6zM426.6 318.2l0.1 -0.7l-0.4 -1.5l-2.9 2.1l1 0.4zM427 319.3l-0.4 -1.1l-2.2 0.3l2.1 1.6zM429.7 328.3l-2.3 0.6l-1 -1.2l1.9 -1.5zM432.1 323.3l0.5 1.4l-0.7 0.3l-2.7 -1.3l0.2 -0.6l1.4 -0.7l0.9 0.5zM407.1 324.2l-0.2 0.1l-1.4 -0.6l0.4 -3.5l2.1 0.9zM406.6 329.4l1.4 1.4l1.2 -0.3l0.8 -1.3l0.3 -1.3l-0.1 -0.1l-2 -0.3l-1.1 0.9zM410.3 327.9l-0.3 1.3l1.9 1.6l0.6 -1.7l-0.6 -1.2zM413.7 324.6l-1.1 -0.1l-0.3 0.4l0.3 2.1l1.8 -1zM415.1 324l-1.4 0.6l0.7 1.4l1.1 0.3l-0.3 -2.1zM416.4 330.8l0.8 -0.6l-0.2 -1.5l-2 0.1l-0.7 1l0.2 1.2z"/>
<path fill="#e08f75" stroke="#2b2422" stroke-width="0.3" stroke-opacity="0.5" d="M293 276.3l-0.7 -2.2l2.1 -0.1l0 1.8l-0.4 0.3zM292.8 278.2l-0.4 1.5l1.7 0.5l0.3 -0.5l0 -1.5l-0.2 -0.1zM297.6 280.3l-1.3 -1.6l-0.6 0.9l0.4 1.5l0.2 0zM299.6 267.6l0 1.5l-0.4 0.1l-2 -1.2l0 -0.1l0.4 -0.5zM305.1 266.1l-1.4 1.7l-0.8 -0.4l0.1 -1.8l0.6 -0.3l1 0.3zM302.2 273.2l0.2 -1.3l0.5 -0.5l1.4 -0.3l0.1 0.1l0.2 2.2l-0.1 0l-2 0.3zM308.1 278.1l-0.1 -2l0.9 -0.4l1.6 1.5l-1.1 1.4zM317.8 250.7l-0.4 0.4l0.6 0zM320.6 256.6l0.7 0.5l-0.3 1.4l0 0l-1.3 0.2l-0.3 -1.3zM321.9 251.3l0 1l1.2 0.6l1.1 -0.3l-1.8 -1.8l-0.1 0zM329.2 246.1l0.6 -0.4l0.7 -1.2l-0.8 -1.2l-0.6 0.2l-0.3 2.1zM329.2 246.1l0.1 0.7l0.5 -1.1zM329.9 254l1.7 -1l0.3 0.1l-0.2 2.7l-1.9 -1.4zM327.8 290.8l0 1.1l-1.4 1.4l-0.4 0.3l-0.1 -0.1l-0.5 -0.8l0.8 -1.9l1.4 -0.2zM326.3 294.8l-0.9 1.5l2.9 0.3l0.5 -0.3l-0.1 -0.6zM329.3 269.6l-1 0.9l0 0l-0.9 -0.9l-0.7 -1.1l0.6 -0.9l1.3 0.2zM327.5 289.4l-0.9 -0.8l-0.1 -0.3l0.9 -1.4l1.8 0.2l0.3 0.8zM328.7 294l0.8 0.1l-0.3 -1l-1.4 -1.2l-1.4 1.4zM328.7 294l0.8 0.1l0 0l-0.8 1.6l-2.4 -0.9l-0.1 -0.2zM328.8 300.8l-1.5 0.2l0 0l0.3 0.6l1.3 0.3l0.6 0.2zM331.3 275.7l0.8 -1.6l-1 -1l-0.9 0.8l0.4 1.8zM332.3 282l-0.4 -0.8l-1.2 -1l-1.6 2.3l0.6 0.7l2.3 -0.6zM330.9 296.7l-0.7 0.4l1.4 2.1l0.4 -0.1l0.4 -0.8zM333.4 272.7l0.1 -2.4l-0.8 -0.3l-1.1 0.2l-0.2 1.3l2 1.2zM333.9 280.1l-0.4 -0.2l-1.6 1.3l0.4 0.8l1.7 0l0.3 -0.2zM333.4 267.1l0.5 0.5l0.7 0.2l1 -1.3l-2.4 -1.1l-0.1 0.5zM334.6 267.8l-0.7 -0.2l-1.2 2.4l0.8 0.3l1.4 0l0.5 -1.6zM335.6 271.8l-2.2 0.9l0 0l-0.1 1.2l0.6 0.6l2.2 -1.2zM335.3 278.8l-1.2 -1.2l0.7 -1.3l0.2 0l1.3 0.7l0.3 0.9zM335 284.7l-0.7 -0.2l-0.2 0l-1.4 1.3l0.7 1.8l0.9 0.4l0.1 -0.1zM335.1 292.2l-1.1 0.3l-1.6 -0.2l-0.1 -0.3l2.1 -2.2l1.1 1.1zM336 292.9l-0.1 1.4l-0.4 0.6l-1.3 -0.8l-0.2 -1.6l1.1 -0.3zM335.6 295.5l-0.2 -0.3l-1.3 0.5l-0.2 1.7l1.3 0.7zM336.7 265.8l0.8 1.9l-0.3 0.6l-1.8 0.4l-0.8 -0.9l1 -1.3l1 -0.7zM338.5 272l-2.6 -0.5l2 -1.5l0.8 0.4zM337.5 294.7l0.4 0.9l-0.5 0.5l-1.8 -0.6l-0.2 -0.3l0.1 -0.3l0.4 -0.6zM338.4 304.8l-1 -1.7l-1.1 0l-0.3 1.1l0.2 0.1l0.6 0.9zM336.2 262.1l0.6 0.6l0.1 0l2.3 -1.1l0.1 -0.2l-3.1 -0.3l0 0l-0.1 0.5zM338.4 273.1l-2 0.4l0.1 1.2l1.4 0.9l1 -0.5zM339.8 282.6l0.1 -1.7l-1.2 -1.2l-0.9 0.3l-0.5 1.5l1.5 1zM338.5 285.5l1.6 -0.1l0.4 1.9l-1 0.9l-1.2 -0.9zM337.6 290.6l0.5 -0.8l1.5 -0.8l1 1l-1.9 2.3l-0.4 -0.1zM338.3 298.5l-1.2 -0.4l0.3 -2l0.5 -0.5l1.9 -0.1l-1.2 3zM338.4 304.8l0.8 0.2l0.7 -1.8l-0.2 -0.4l-1.3 -0.6l-1 0.9zM339.4 305.5l-0.2 -0.5l-0.8 -0.2l-1.6 0.4l1 1.6zM341 265.9l-1 0.1l-0.7 -0.6l-0.3 -2.1l0.3 -0.2l1.3 0.2l0.8 2l-0.2 0.4zM341.7 271.8l0.4 0.4l-1 2.3l-0.6 0l-0.7 -1.8l0.9 -0.6l1 -0.3zM339.9 282.6l2.2 -1l-0.3 -1.1l-0.6 -0.4l-1.3 0.8l-0.1 1.7zM339.6 289l1 1l0.2 0.1l1 -0.5l0.5 -1.4l-0.2 -1l-0.3 0l-1.3 0.1l-1 0.9zM340.6 290l-1.9 2.3l0.6 0.7l2.6 -0.9l0 0l-1.1 -2zM342.5 293.6l-0.2 -0.3l-2.4 1.2l0 1l1 0.5l1.2 -0.6zM339.4 299l0.6 -0.1l1.5 1.9l-0.1 0.3l-1.1 0.4l-1 -1.4zM344 260l0.2 -1.7l-0.2 -0.1l-1.5 1.5zM340.5 278.2l0.7 1.9l0.6 0.4l1.9 -1.5l-0.1 -1.2l-0.7 0zM342.6 302.1l0.5 1.3l-1.1 1l-1.2 -1.1l1.5 -1.3zM346.3 256.7l-1 0.2l-1.3 1.3l0.2 0.1l1.7 0.2l0.5 -0.9zM342.7 269.9l0.5 -0.8l1.9 1.9l-0.3 0.3l-2.2 -0.8zM344.2 275.4l7.5 1.9l-8 0.3l0 -0.6zM355.2 283.6l0.6 -0.6l2.5 -3.7l-5.4 -2l-1.2 0l-8 0.3l-0.1 0.2l0.1 1.2l1.3 1.7zM343.6 289.9l1.4 1l1.4 -3.9l-2.4 1.7zM346.1 259.3l-1.3 2.3l1.8 0.5l1.2 -0.8l-0.2 -0.9zM346.3 264.3l-0.6 2.7l0.2 0.4l1.2 -1.1l0.5 -1.1l-0.3 -0.5l-1 -0.4zM345.5 294.2l0.6 2.3l0.8 0.3l1.4 -1.7l-1 -1.3zM347.1 271.7l2.1 3l3.7 2.6l5.4 2l0.9 -0.7l0.2 -0.4l-10.1 -8.3l-1.2 0.1zM351.1 266.1l5.7 5.5l0.3 0.5l-7.8 -4.5l-0.1 -0.1l0.5 -0.9l0.4 -0.3zM341.8 311.7l-0.7 -0.1l-1 -2.4l2.6 0.6l0.1 0.1zM344 307.7l0.4 0.8l-0.3 1.2l-0.1 0.1l-1.2 0.1l-0.1 -0.1l-0.7 -2.1l0 -0.2zM346.6 308.3l0.5 1.3l1.6 0.4l1.2 -2.4l-2.6 -1.6l-0.2 0.2zM351.5 317.4l0 -0.8l-1.3 -1l-0.5 0l-0.4 2.2l0 0.1l1.5 0.1zM351.6 306.7l-1 0.8l-0.2 -1.8l0.1 -1.1l0.5 -0.5l0.9 1zM352.9 319.8l-1.9 -0.6l-0.8 0.9l0.3 1.2l2.3 -0.4zM355.6 315.5l-2.1 -0.3l-0.2 0.4l0.4 2.8l1.4 -0.3zM354.4 325l0 0l0.9 -2.4l-0.4 -0.6l-1.1 -0.1zM354.4 325l-0.6 -3.1l-0.4 0l-0.3 0.4l0.6 2.7zM355.3 310.8l-0.1 -0.7l0.3 -1.2l0.7 -0.4l1.5 0.6l0.3 0.5l0 0.3l-1.6 1.3zM354.8 327.9l2.4 1.5l0.3 -0.4l-0.5 -1.3l-2.2 0.2zM358.7 313.8l0.9 -0.6l-0.7 -2l-0.1 0l-1.8 1.5l1.1 0.9zM357.9 317.8l-1.3 2l0.4 0.2l1.8 -0.7l0.1 -0.3l-0.7 -1.2zM357.3 325.3l-0.2 -0.1l-0.1 -0.8l1.3 -1.5l0.9 0.9l-0.7 1.3l-0.7 0.3zM358.2 317.8l0.2 -0.4l2.9 -0.3l0.1 0.1l-0.6 1.8l-0.2 0.2l-1.7 -0.2zM358.8 319.3l-0.2 2.3l1.8 0.3l0.2 -2.7l-1.7 -0.2zM359.1 326.9l1.9 -0.2l0 -0.9l-0.1 -0.5l-2.4 -0.2l-0.7 0.3zM363.6 324l0 1.6l-2.6 0.2l-0.1 -0.5l0.7 -2l1 0.2zM362.7 331.5l-0.4 0.3l-0.9 -0.6l-0.2 -0.3l-0.1 -1.7l0 0l0.2 0l2.1 0.9zM364.5 321.4l0.1 -0.4l-0.4 -1l-1.5 0.3l-0.2 0.4l1 1.1zM365.1 323.6l0.7 0.1l-0.1 2.6l-1 0.1l-0.9 -0.3l-0.2 -0.5l0 -1.6zM365.5 315.7l-1.3 0.3l0 0l0.5 2.4l1.7 -2.2zM366.5 316.3l1 1.5l-0.8 1.3l-1.9 -0.2l-0.1 -0.1l0 -0.4l1.7 -2.2zM364.5 321.4l0.1 -0.4l2.5 0.4l0 0l-0.8 2l-0.4 0.2l-0.1 0.1l-0.7 -0.1zM366.9 330.8l-1.9 -1.1l0 -0.4l1.7 -1.7l1.3 1.3zM366.9 319.6l0.2 1.8l0 0l1.8 0.2l0.5 -0.6l-0.5 -1.3zM367.1 321.4l-0.8 2l1.7 0.8l1.4 -1.4l-0.5 -1.2zM368.5 328.9l-0.5 0l-1.1 1.9l0.3 0.6l1.8 -0.6l0.2 -0.9zM369.1 337.1l0 -0.1l-0.2 -3l-1.3 0.8l-0.5 1.2l1.8 1.3zM369.7 315.8l0.8 -0.2l0.7 0.4l0.3 0.4l-0.8 1.9l-1.3 -1.9zM369.4 321l-0.5 0.6l0.5 1.2l0.5 0.3l1.5 -0.5l0.8 -1.2l0 -0.1l-2 -0.6zM369.1 337.1l-0.2 0.2l1.1 0.9l1.5 1l0.4 -0.2l-0.3 -1.6l-0.4 -0.5zM370.6 329.5l0.5 1.7l0.1 0.1l1.3 0.3l0.6 -1.8l-0.2 -0.2l-1.8 -1zM369.9 333.8l0.9 0.7l0.9 0.5l1.5 -1.6l-0.1 -0.9l-0.1 -0.2zM373.7 336.9l0.1 -0.7l-2.1 -0.8l-0.5 1.5l0.4 0.5l1.9 -0.4zM371.9 318.9l0.8 1.7l2.2 -0.9l-0.3 -2.5l-0.1 -0.2l-1.5 0.2zM372.8 327.3l0.7 -0.4l0.7 0.3l0.1 2.1l-1.2 0.5l-0.2 -0.2zM373.8 336.2l0.3 -0.3l0.3 -1.2l-1.2 -1.3l-1.5 1.6l0 0.4zM373.7 336.9l1.3 1.2l0 0.6l-1.6 0.8l-0.3 -0.2l0.4 -2.3zM374.2 327.2l0.6 -0.3l1.9 1l0 1.5l-0.3 0.2l-0.6 0.3l-1.5 -0.6zM375.3 334.5l-0.9 0.2l-0.3 1.2l2.1 0.9l0.4 -0.2l0 -0.2zM377.1 325.2l1.9 1.6l-2 0.8l-0.3 -1.7zM377.6 331.9l-1.2 -2.3l0.3 -0.2l2.4 0.3l-0.1 0.5zM378 333.9l-0.3 0.2l-1.1 2.3l0 0.2l1.5 0.9l0.5 -0.1zM379.3 337.4l0.2 0.1l-0.6 2.3l-0.8 0.5l-0.4 -2.1l0.4 -0.7l0.5 -0.1zM378.9 333.2l2.3 -0.7l-0.2 -0.9l-1.7 0.1zM381.8 332.9l-0.6 -0.4l-0.2 -0.9l0 -0.5l2.1 0.1l-0.4 1.4zM383.7 333.3l-1 -0.7l-0.9 0.3l-0.4 1.9l0.1 0.1l2.3 -0.1zM380.8 339l-0.4 1.1l0 0.6l0.9 0.7l0.6 0.2l1 -0.7l-0.3 -0.8zM385.2 337.4l0 0.1l-2.4 0.4l-0.7 -0.5l2 -1.7l0.7 0.5zM385.2 337.5l-2.4 0.4l0.3 0.7l1.7 0.8l0.4 -0.4zM385.2 337.4l2.1 -0.2l0.2 -0.2l0.2 -0.8l-1.2 -1.2l-1.7 1.2zM385.2 339l-0.4 0.4l-0.5 1.7l0.5 0.6l1.7 -0.5l0.5 -1.7zM387.8 342.5l-2.3 1.1l0.3 1.2l2.4 -0.7l0.2 -0.3l0 -0.5zM386.7 346.1l-0.9 -1.3l-1.7 1.2l1.7 0.7l1.1 -0.1zM389.7 335.8l0.9 0.1l1 0.6l0.6 1.1l-0.8 0.5l-1.6 -0.9zM394.5 341.6l-2.3 1.8l-0.8 -0.4l-0.4 -1.4l0 0l2.1 -0.6zM391 345.9l0.1 0.5l2.2 -0.2l0.3 -0.3l-0.4 -1.3l-0.3 -0.1zM393.3 338.3l1 0.5l1.8 -0.7l-0.1 -0.4l-2.4 -0.4l-0.5 0.6zM397.9 335.1l0.8 0.5l-0.1 1.1l0 0l-2.6 0.4l-0.4 -1l0.1 0zM399.4 341.3l-1.3 0.7l-0.2 3.4l0.9 0.2z"/>
<path fill="#e08f75" stroke="#2b2422" stroke-width="0.3" stroke-opacity="0.55" d="M311.2 297l-0.8 -0.8l-0.8 0.4l-0.4 1.9l0.2 0.3l0.6 0.1zM310 298.9l1.3 0.1l0.8 -0.1l0.1 -0.7l-0.6 -1l-0.4 -0.2zM320.6 285.8l-1.3 -0.9l-0.1 0.1l-1.1 1l0.1 1l0.5 0zM320.8 287.4l-1.6 2.1l2.8 0.2l-0.1 -1.6l-0.7 -0.7zM328.9 275.9l-0.6 -0.5l-0.3 -0.1l-0.5 0.3l-0.6 1.8l0.8 1.2l0.5 -0.1zM350.4 259.8l-1.4 -1l0.2 -0.7l2 -0.2zM350.3 261.2l0.6 -0.4l-0.5 -1l-1.4 -1l-0.4 0.3l-1 1.3l0.2 0.9l1 0.5zM350.3 261.2l0.6 -0.4l0.4 0l1.8 1.6l-0.1 0.7l-1.1 0.7l-0.9 -0.3zM354.7 255.4l-0.6 1.6l-1.5 0.7l-0.3 -0.2l0 -2l1 -0.5l1.3 0.3zM352.4 259.5l1.7 2.3l0.5 -0.3l-0.3 -1.8l-1.4 -1zM361.6 257l-1.5 1l0.7 1.5l1.8 0.5l0.4 -0.6l-0.8 -2.4zM367.2 257.2l-2.2 0.4l-0.4 1.1l0.8 0.9l1.7 -0.6zM366.8 261.2l0.9 -1.4l-0.6 -0.8l-1.7 0.6l0 1.3zM368.1 265.1l0.6 -0.2l1.1 0.7l0.1 0.9l0 1l-2.6 1.6l0.7 -3.9zM369 260l0.4 -0.1l0.1 0.1l0.6 0.5l-0.5 1.8l-1.3 -0.4zM369.8 265.6l-1.1 -0.7l0.6 -1.2l0.7 -0.5l0 0l1.1 0.9l0 0.5zM371.1 264.1l0.9 -0.3l0.6 -2.3l-0.2 -0.3l-0.2 0l-2.2 2zM372.1 257.7l1.7 1.9l0.6 -0.1l0.1 -1.8l-0.4 -0.9l-1 -0.1l-1 0.6zM376.9 263.7l-0.6 -0.8l-1.3 -0.5l-0.7 0.4l-0.1 0.9l1.7 1.2zM374.7 270.9l1.6 0.3l0 -1.6l-1.4 -1.3l-0.6 0.9l-0.2 1.4zM378.9 258.6l-0.3 -0.7l-1.8 -0.8l-0.4 2l1.1 0.6zM377.8 274.6l-1.2 0.1l-0.9 -1.2l1.1 -1.8l0.8 -0.1l1 1.2zM382.9 264.8l-1.7 1.4l-1.1 -0.9l0.9 -1.4l1 0.2zM384.9 279l0.7 -2.1l1.1 -0.4l0.5 0.1l0.7 1.2l0.2 0.5l0 0.2l-2.5 1.8l-0.1 -0.1zM388.9 267l-1.6 0.9l-0.6 -0.3l0.4 -2.5l1 0.4zM363.7 297.1l0 0l-1.2 0.7l0.3 0.8l1.6 0.9l0.3 -0.5zM366.3 297.7l-1.6 1.3l-1 -1.9l2 -0.2l0.7 0.5zM366.3 297.7l0.1 0.4l-0.8 2.2l-1.1 0l-0.1 -0.8l0.3 -0.5zM372.5 306.9l0 1.5l-1.1 0.5l-1.6 -2.4l0.2 -0.3zM370.3 311.1l1 -1l0.1 -1.2l-2.7 0.4zM373.8 303.7l0.4 -1.7l0 -0.1l-1.6 -0.6l-1 1.9l0.9 0.5zM371.4 308.9l1.1 -0.5l0.7 0.3l0.6 0.8l-0.7 1.4l-0.4 0.1l-1.4 -0.9l0.1 -1.2zM374.8 300.6l-1.4 -1.8l0.4 -0.5l0.4 -0.2l1.2 0.3l0.9 0.7zM380.3 312.6l0.1 -1.3l1.4 0l0.9 1.8l-0.2 0.1zM383.9 305.3l1 1.5l-1.1 1.2l-1.8 -1.1l0.7 -1.7l0.9 -0.1zM390.2 282.1l0.3 0.3l1.6 0.1l-0.3 -1.7l-1.7 0.8z"/>
<path fill="#e1d7d3" stroke="#2b2422" stroke-width="0.3" stroke-opacity="0.6" d="M524.2 234.2l1.6 -0.7l0.6 0.6l0 1.1l-1.4 0.7l-0.9 -1.7zM482.4 229.2l0.1 -0.1l0.9 -0.6l0.8 1.1l-1.5 1.1l-0.1 0z"/>
<path fill="#e1d7d3" stroke="#2b2422" stroke-width="0.3" stroke-opacity="0.55" d="M307.6 280.6l-1.1 -1.2l-0.6 0.1l-0.5 2l2.1 0.6zM309.8 282l1.1 1.3l-1.4 0.7l-0.8 -0.5l-0.2 -0.8zM309.6 296.6l-1.6 -0.4l1.2 2.3zM310.6 277.2l1.6 -1.6l0.3 -0.3l0.2 0.2l0.1 0.4l0.1 2.3l-0.7 0.5zM311.8 279.7l2.1 1.4l0.4 -0.6l-0.7 -2.1l-0.7 -0.2l-0.7 0.5zM313.4 290.7l-1.1 -0.9l-0.2 0.1l-1.4 2.1l2.8 0.7l0.5 -1zM313.7 294.2l-0.2 0.8l-2.1 -0.1l0.2 -1.4l1.9 -0.1zM315.6 277.8l0.3 -0.1l0.2 -1.6l-3.4 -0.6l0.1 0.4l2.3 1.9zM314.3 287l-0.1 -1.1l1 -0.4l0.5 0.4l0.8 2.2l-0.6 0.4l-0.5 -0.1zM316.1 290.6l-0.3 -1.5l-2.4 1.6l0.6 1l1.6 0zM318 292.6l-2 -0.4l-0.4 -0.5l0.5 -1.1l1.9 0l0.2 1.7zM320.8 287.4l-1.6 2.1l-0.1 0l-0.3 -0.1l-1.1 -1.4l0.5 -1l0.5 0zM319.4 294.6l0.1 0.4l1.9 0.8l0.8 -1.7l-0.1 -0.2l-1.8 -0.5zM325.2 280.5l2 1.6l-3 0.4l0.6 -1.8zM325.8 277.3l1.1 0.1l0.8 1.2l-0.4 0.7l-1.3 0.2l-1.1 -1.4zM356.9 259.8l0.1 0.1l-0.8 1.7l-1.1 0l-0.5 -0.1l-0.3 -1.8l0.6 -0.6zM372.1 257.7l1.7 1.9l-1.4 1.6l-0.2 0l-0.3 -0.2l-0.6 -2.4l0.2 -0.5zM374.1 256.8l1.2 -1.2l-0.6 -0.6l-1.1 -0.6l-0.5 -0.1l0 2.4zM374.2 263.7l0.1 -0.9l-1.7 -1.3l-0.6 2.3l1.4 0.6zM376.4 275.5l-2.1 0.7l0.4 1.7l1.3 0.1l1.1 -0.5zM374.5 280.6l-0.1 -0.2l0.2 -2.5l0.1 0l1.3 0.1l0.1 1zM378.2 274.9l0.8 1.7l1.6 -0.7l-0.5 -1.7zM381.6 278.9l-0.2 -0.4l-3.1 -0.8l0.1 0.8l1.1 1.3zM380.4 261.5l1.6 -2.7l0.2 -0.1l0.1 3l-1.8 1.1l-0.1 0zM385.5 263.7l-0.8 -1.5l0.6 -2.1l1.5 2.5l-0.5 1.3zM352 297.7l0.4 -0.4l-0.9 -4.3l-1.4 1.5l0.7 1.9zM354 296.6l-1.6 0.7l-0.9 -4.3l1.8 -2.7l1 5.7zM351.8 298.6l0.3 0.2l2.9 -0.1l-1 -2.1l-1.6 0.7l-0.4 0.4zM354.5 300.8l-0.3 0.1l-1.3 -0.8l-0.8 -1.3l2.9 -0.1l0.2 0.1zM354.1 305.1l0.1 -0.4l-0.1 -1l-0.7 -0.9l-0.3 0l-2.1 0.8l0 0.5l0.9 1zM355.6 296.3l-1.3 -0.3l-0.3 0.6l1 2.1l0.2 0.1l0.4 0l1 -1.5zM354.5 300.8l0.7 -2l0.4 0l1.2 0.6l0.4 0.9l-1.1 1.1zM353.7 308.1l0.2 -1.5l0.1 -0.2l2.2 0.8l0 1.3l-0.7 0.4zM358.4 303.1l0.7 -0.2l1.4 0.4l0.5 0.9l0 0.6l-0.8 0.8l-1.9 -2zM358.3 303.6l1.9 2l0 0.2l-0.9 0.9l-0.7 0l-0.6 -0.3l-0.3 -2.1zM358 309.6l-0.3 -0.5l0.9 -2.4l0.7 0l1.1 2.1zM362.3 295.4l-1.2 1.9l-0.4 0l-0.2 -0.2l-0.2 -2.6l0.6 -0.3zM362.3 307.3l-2.1 -1.5l0 -0.2l0.8 -0.8l1.7 0.5l-0.3 2zM363.4 292.9l0.9 -0.7l0.5 -3.2l-4.9 -9.9l-0.4 -0.3l-0.3 -0.2l-0.9 0.7l-2.5 3.7l4.4 6.8zM363.7 297.1l-0.3 -2l-1.1 0.3l-1.2 1.9l1.4 0.5zM364.5 300.3l-0.1 -0.8l-1.6 -0.9l-0.7 1.2l0.3 0.8l2.1 -0.1zM364.5 300.5l0.1 1.4l-1.7 1l-1 -0.9l-0.1 -0.5l0.6 -0.9zM360.9 309.4l-0.2 -0.5l1.6 -1.6l0.1 0l0.8 0.3l0.3 0.7l-1.7 2.2zM364.5 300.3l1.1 0l1.3 0.1l-1.7 2l-0.6 -0.5l-0.1 -1.4zM367.4 311.1l-2.6 0.9l-0.7 -1.1l0.3 -0.6l2.3 0.3zM366.3 297.7l0.1 0.4l0.8 2l1.5 -1.4l-1.8 -1.6l-0.5 0.3zM367.2 300.4l-0.3 0l-1.3 -0.1l0.8 -2.2l0.8 2zM366.1 305.5l-0.2 1.1l0.2 0.3l2.3 1.1l0.9 -1.1zM365.6 313.4l-0.7 -0.4l-0.1 -1l2.6 -0.9l0.1 0l0.4 1l-0.1 0.6zM369.8 293.6l1 -0.6l-1.9 -2.1l-0.3 0.1l0.1 1.6zM369.5 295.3l0.3 -1.7l-1.1 -1l-0.4 0.4l-0.6 2l0.2 0.3zM369.8 301.1l-1.4 0.6l1.4 2.8l1.4 -1.3l-1 -2zM373.3 288.7l-1.2 1.5l-1.4 -1.9l0 -0.3l1.2 -0.3zM371.2 292.9l-0.4 0.1l-1.9 -2.1l0.8 -0.5l2.1 0.7zM369.8 297.4l2.1 -1.2l-0.3 2.3l-1.5 0zM370.1 298.5l-0.2 0.3l-0.1 2.3l0.4 0.1l1.9 -0.5l0.4 -1.7l-0.9 -0.5zM371.9 305.2l-2 0.5l-0.3 -0.7l0.2 -0.5l1.4 -1.3l0.4 0l0.9 0.5zM370.3 311.5l1 1.5l0.6 -0.1l0.8 -1.9l-1.4 -0.9l-1 1zM373.3 288.7l-1.4 -1l0.2 -0.8l2.2 -0.4l0.5 0.7l-1.2 1.5zM374 291.8l-2.1 -0.7l-0.1 0l-0.6 1.8l0.7 0.8l2.4 -0.7l0 -0.5zM372.1 295.6l0.5 0.1l0.4 -0.2l1.5 -1.9l-0.2 -0.6l-2.4 0.7l0 1.7zM371.9 296.2l0.2 -0.6l0.5 0.1l1.2 2.6l-0.4 0.5l-0.9 0.2l-0.9 -0.5zM373.8 305.4l-1.8 -0.1l-0.1 -0.1l0.6 -1.5l1.3 0l0.5 0.7zM373.6 311.2l-0.5 -0.3l-0.4 0.1l-0.8 1.9l1 0.5l1.4 -0.2l0 0zM376.1 284.5l-2.2 0.1l-0.2 -0.1l0 -0.2l2 -1.7l0.6 0.8zM376.1 284.5l-2.2 0.1l0.4 1.9l0.5 0.7l1 0.1l1 -1.1l-0.2 -1.3zM376.9 290.3l-0.5 -0.9l-1.9 0.5l-0.1 1.2l1.9 -0.4zM375.5 296.2l-0.4 0.2l-2.1 -0.9l1.5 -1.9l0.4 0.3zM375.5 296.2l-0.4 0.2l-0.9 1.7l1.2 0.3l1.1 -1.7l-0.6 -0.4zM374.3 304.4l1.3 0.3l0.9 -1.1l-0.3 -0.8l-2 -0.8l-0.4 1.7zM373.6 311.2l-0.5 -0.3l0.7 -1.4l2 0.2l0.1 1.1l-0.2 0.3zM376.8 286.2l-1 1.1l0.6 1l2.1 0l0.6 -1.5l-1.1 -0.5zM375.9 296.3l0.6 0.4l1.2 0.5l0.1 0l-0.1 -2.9l-0.3 -0.4l-0.2 0.1zM376.3 299.1l-0.9 -0.7l1.1 -1.7l1.2 0.5l0.3 1.7zM374.8 300.9l0 -0.3l1.5 -1.5l1.7 -0.2l0 0.1l-0.1 1.9l-1 0.4zM376.2 302.8l0.3 0.8l0.8 0l1.1 -1.6l0 -0.4l-0.5 -0.7l-1 0.4zM378 312.2l-2.1 -1.4l-0.1 -1.1l0.3 -0.3l2.9 1.1zM378.4 283.9l0 -1.3l0 -0.1l2.6 1.6l-1.2 0.8l-1.3 -1zM380.1 294.2l-0.6 1.1l-1.8 -1l-0.3 -0.4l0.5 -1.2l2.1 1.1zM378.4 302l1.5 2.3l-0.3 0.3l-1.6 -0.3l-0.7 -0.7zM380.3 312.6l0.1 -1.3l-0.7 -1l-0.4 -0.1l-0.3 0.3l-1 1.7l0.3 1.4l0.1 0zM382.1 291.8l-0.2 1.6l-1.2 -0.6l0 -1.1zM382.1 294.8l-2 -0.6l-0.1 -0.4l0.7 -1l1.2 0.6l0.2 0.3zM382.3 295.2l-1.3 1.5l-1.5 -0.7l0 -0.7l0.6 -1.1l2 0.6zM380.7 301l0 -1.3l1.2 -0.1l0.6 0.9l-0.9 0.9zM380.7 301l0.9 0.4l0.5 0.9l-1.5 0.8l-0.5 -1.6zM385 299.1l-0.4 -2l-0.5 0l-1.3 1l-0.1 0.7l1.6 1.2zM381.6 301.4l0.9 -0.9l1.7 0.7l0 0l-0.1 0.6l-1.4 0.7l-0.6 -0.2zM384.1 309.9l0 -0.5l0 0l-2.2 -0.1l-0.2 0.3l0.2 1.2l1.9 -0.2zM381.8 311.3l0.1 -0.5l1.9 -0.2l-0.3 2.4l-0.8 0.1zM383 283.2l-0.1 0l1.2 1.6l1 0.2l0.9 -1l-0.3 -1.9l-0.3 -0.8l-0.8 0.2zM385.1 285.4l0.4 1l-1.4 1.2l-1 -0.8zM385.5 286.4l0.8 0.5l-0.7 1.8l-1.3 0.2l-0.2 -1.3zM387 293.2l-1.4 -0.7l-1.2 1.3l-0.1 0.3l1.4 1.3zM383.9 305.3l1 1.5l1.3 0.2l0.6 -2.4l-0.3 -0.1zM385.8 295.7l2.1 1l0.1 0.5l-0.7 1.2l-2.4 -1.4zM386.5 304.5l0.3 0.1l0.4 -0.1l0.5 -2.1l-0.1 -0.1l-1.2 0.2l-0.7 0.8zM388.7 309.7l0.1 0l0 -0.5l-0.3 -2.6l-2.3 0.4l0.4 1.4zM388.6 309.9l-2 1.7l-0.5 -0.4l-0.3 -2.4l0.8 -0.4l2.1 1.3zM389.7 280.3l0 -0.9l-1.6 -0.9l-2.5 1.8l-0.1 0.8l2.5 0.6zM390.2 282.1l0.3 0.3l-0.3 2.2l-0.3 0.2l-1.3 -0.6l0.1 -0.9l0.2 -0.5zM391.6 278.4l-0.8 -2.1l-2.7 2l0 0.2l1.6 0.9l1.3 -0.3zM390.1 281.6l1.7 -0.8l0 -0.6l-0.8 -1.1l-1.3 0.3l0 0.9zM390.2 284.6l0.3 -2.2l1.6 0.1l0.4 0.2l0.2 0.5l-1.4 1.4zM391.7 303.1l-0.6 -1.5l-1.4 0.4l-0.3 0.8l0 0.2l1.9 0.7zM391.5 304.7l-0.6 1.9l-0.4 -0.1l-0.3 -1.7l1 -0.5zM393.6 278.5l-1.7 -0.2l0.8 -1.5l1.4 -0.3l0.2 0.7zM391.3 284.6l1.4 -1.4l1.1 0.7l0.4 0.6l-0.2 0.5l-2.1 0.6zM391.9 285.6l2.1 -0.6l0 0.8l-1.5 1.7l-0.8 -0.2zM393.1 299l1.2 -2.8l-0.1 -0.3l-0.5 -0.2l-1.7 1.4l-0.4 0.5l0.8 1.3zM394.1 301.8l-0.8 -2.6l-0.2 -0.2l-0.7 -0.1l-1.2 0.9l0.1 1.4zM393.3 303.1l1.1 -1l-0.3 -0.3l-2.8 -0.6l-0.2 0.4l0.6 1.5zM396 289.5l-1 -1.4l-0.7 0.4l0.4 2.1l0.7 0.5l0.4 0.1zM394.1 301.8l-0.8 -2.6l2.7 -0.3l0.7 1.4l-0.2 0.8l-1.8 1.1l-0.3 -0.1zM396.3 278.9l-0.2 2.2l2.8 -0.8l0.3 -0.2l-0.3 -1.3l0 0l-0.9 0.4l-1.1 -0.9zM397.4 288.3l-1 -1.3l0.5 -1.1l1.7 -0.7l0.9 1.1l0.3 0.7l-1.6 1.4l-0.4 0zM398.1 294.2l-0.8 0.8l-1.6 -0.5l-0.1 -0.4l0.5 -2.2l1.7 1.6z"/>
<path fill="#e1d7d3" stroke="#2b2422" stroke-width="0.3" stroke-opacity="0.5" d="M352.6 309.5l0.6 2l-0.1 0.1l-1.2 0.5l-0.8 -0.6l0.1 -1.2l1.1 -1l0.1 0z"/>
<path fill="#e46747" stroke="#2b2422" stroke-width="0.3" stroke-opacity="0.6" d="M521.6 234.2l-1.1 0.8l-0.6 1l1.3 1.7l1.5 0l0.7 -1l-0.5 -2zM522.7 237.7l0.9 2l-0.9 0.7l-1.9 -1.3l0.4 -1.4zM426.9 338.1l0.1 -1.3l0.4 -0.4l1.3 0.8l0.6 1.3l-0.2 0.2zM426.9 338.1l2.2 0.6l-0.1 0.4l-1.1 0.9l-1.6 -1.4zM431.6 340.7l0.6 0l1.2 1.7l-0.3 1l-0.2 0.3l-2.1 -0.3l-0.3 -1.5l0.6 -1zM435.5 342.3l-0.6 -0.7l-1.5 0.8l-0.3 1l2.2 1l0.1 -0.1zM434.9 334.5l1.6 1.9l-1.1 0.5l-0.9 -1zM438.1 341.8l-1 -1.5l-1.2 0l-0.3 0.2l-0.7 1.1l0.6 0.7l1.4 0.8l1 0l0.1 -0.2zM426.9 323.3l-1.6 -1.2l-0.4 0.2l0.2 1.7l1.3 0.6l0.3 -0.1z"/>
<path fill="#e46747" stroke="#2b2422" stroke-width="0.3" stroke-opacity="0.5" d="M328.8 245.6l0.3 -2.1l-0.5 -0.3l-1.4 0.2l-0.1 0.2l-0.2 1.3l0.6 0.7zM325.4 292.7l-0.9 -0.7l-0.9 0.5l0 1.5l0.1 0.1l2.2 -0.6zM327 300.3l-1.6 -0.5l-0.3 1.4l1.7 0.3l0.5 -0.5l0 0zM329.8 283.8l-1 1.4l0.6 1.2l2 -0.9l-0.1 -0.5zM331.9 281.2l-1.2 -1l-0.1 -0.1l2.2 -1.8l0.7 1.6zM331.5 288.2l1.9 -0.6l-0.7 -1.8l-1.3 -0.3l-0.2 2.5zM334.4 289.8l-2.1 2.2l-0.5 -0.6l-0.1 -0.4l0.3 -0.9l2.1 -1zM337.4 301l0.9 -2.5l-1.2 -0.4l-1.4 0.5l0.1 0.9l0.9 1.4zM345 280.7l-1.3 -1.7l-1.9 1.5l0.3 1.1l0.9 0.6zM344 299.5l-0.4 -1.6l-2.3 -0.3l-0.5 0.8l1.6 1.3zM346.1 259.3l-1.3 2.3l-0.4 0.1l-0.3 -1.6l1.9 -0.9zM347.1 266.3l1.7 1.2l-1.4 0.5l-1.5 -0.6l0 0zM345.8 269.7l1.6 -0.2l0.7 0.5l-1 1.7l-0.8 -0.2l-0.8 -0.6zM350.2 320.1l-1.7 -0.8l0.8 -1.4l1.5 0.1l0.2 1.2zM354.8 327.9l0.7 -2.3l-1.1 -0.6l0 0l-0.7 0l-1 0.3l0.5 1.6l0.5 0.4l1.1 0.6zM355.3 322.6l-0.9 2.4l1.1 0.6l1.6 -0.4l-0.1 -0.8l-0.7 -1.4zM368.5 328.9l-0.5 0l-1.3 -1.3l0.1 -0.5l0.4 -0.3l2.2 0.2l0.7 0.4zM367.2 331.4l-0.1 0.5l0.2 0.4l1.7 1.4l0.2 0l0.3 -2.5l-0.5 -0.4zM369.7 333.7l0.2 0.1l0.9 0.7l-1.7 2.5l-0.2 -3l0.1 -0.3l0.2 0zM370.7 318.3l0.8 -1.9l1.5 0.8l-1.1 1.7l-1.3 -0.2zM375.9 333.9l1.8 0.2l-1.1 2.3l-1.3 -1.9zM379 326.8l-2 0.8l-0.3 0.3l0 1.5l2.4 0.3l0.6 -0.4l-0.6 -2.5zM378.6 333.5l1.1 1.1l1.7 0.2l0.4 -1.9l-0.6 -0.4l-2.3 0.7zM381.5 334.9l-0.1 -0.1l-1.7 -0.2l-0.4 2.8l0.2 0.1l1.1 0.3l0.9 -0.5zM394 332.8l0.4 0.3l0.4 2.9l-0.7 0.3l-1.2 -1.2l-0.1 -0.6z"/>
<path fill="#e46747" stroke="#2b2422" stroke-width="0.3" stroke-opacity="0.55" d="M386.3 263.9l0.5 0.5l1.4 -1l-1 -1.2l-0.4 0.4zM392.7 263.6l-0.5 0.7l0.4 3.5l0.6 0.7l0.8 -3.6zM351.8 298.6l0.3 0.2l0.8 1.3l-1.1 1.2l-0.9 -0.2l-0.1 -1.8l0.2 -0.4z"/>
<path fill="#ee997e" stroke="#2b2422" stroke-width="0.3" stroke-opacity="0.6" d="M528.9 236.1l-2.1 0.4l-0.4 -1.3l0 -1.1l1.8 0l0.8 0.4zM529.4 231.5l0.5 0.2l0.4 2.2l-1.3 0.6l-0.8 -0.4l0.3 -1.9zM530.3 238.4l-1.5 0.9l0 0.7l0.3 0l2.5 -0.8zM530.6 237.6l-0.5 -1l1.6 -1.1l0.2 0.1l1.1 1.3l-0.1 0.1l-0.1 0.5zM533.1 230.1l-1 0.8l0 0.1l0.4 1.4l2.3 0.1l0.3 -1l-1.7 -1.5l-0.1 0zM532.9 237l-0.1 0.5l0.1 1.2l1.5 -0.9zM535.2 233.5l-0.4 -1l0.3 -1l1.4 -0.5l0.4 0.2l-0.2 2.2zM537.7 228l0 0.8l1.1 0.8l0.3 -0.1l0.6 -1l-2 -0.5zM538.5 231.5l0.1 1.6l1.3 0.3l0 -1.9zM482 233.7l0 -0.1l-1.9 -2.1l-0.5 0.1l0 0.2l1.2 3.5l0.9 -0.4zM485.2 235.1l0.2 -0.2l0.1 -2.1l-1.3 -1.1l-0.3 0.1l-0.6 1.1zM485.6 228.3l0.7 -1.9l1.4 0.2l0.2 0.6l-0.7 1.3l-1.5 0zM485.4 234.9l2.6 -0.4l-1.4 -2.3l-1.1 0.6zM423 337.4l1.7 -2l1 1.3l-1.3 2.6l0 0l-1.2 -1.2zM427.9 340l-0.5 1.2l0.1 0.2l0.5 0.5l0.3 0l0.5 -0.2l0.9 -1.4l-0.7 -1.2zM433.1 338l-2.7 0.3l1.2 2.4l0.6 0l0.8 -1.2zM416.7 321.9l1.8 0.3l0.7 -1.1l-1.1 -1.6l-1.5 0.4zM416.3 326.5l1.1 1.6l0.8 -0.2l0.2 -0.2l0.3 -3.1l-0.8 0l-0.5 0.3zM419.8 324.7l0.9 1.3l2.1 0.7l0.2 -2.1l-1.9 -0.6zM422.4 329.4l-1.5 -0.2l-0.8 -2.5l0.6 -0.7l2.1 0.7l0.2 0.3zM424.9 322.3l-1.3 -0.6l-0.2 -1.1l3 -0.1l0.1 0.3l-1.2 1.3zM426.1 327.5l-1.7 2.6l-1.7 -0.2l-0.3 -0.5l0.6 -2.4l2.4 -0.3zM428.4 324.8l-0.4 0.1l-1.3 -0.4l0.2 -1.2l0.5 -1.6l0.8 -0.1l1.2 1.5l-0.2 0.6zM407.1 328.4l1.1 -0.9l-0.2 -0.8l-1 -1.3l-1.2 1.2zM413.5 321.6l0.4 -2.2l-2 -0.1l-1.2 1.9l2.1 0.9zM411.9 331.5l0 -0.7l-1.9 -1.6l-0.8 1.3l1.2 1zM412.5 332.1l-0.6 -0.6l-1.5 0l-0.6 1.4l2.6 -0.2zM415.5 326.3l0.8 0.2l1.1 1.6l-0.4 0.6l-2 0.1l-0.6 -1.1z"/>
<path fill="#ee997e" stroke="#2b2422" stroke-width="0.3" stroke-opacity="0.5" d="M326.2 294.6l0.1 0.2l-0.9 1.5l0 0l-0.8 0.2l-0.6 -0.5l-0.3 -1.9l2.2 -0.6l0.1 0.1zM328.8 272.8l0.9 1l-1.4 1.6l-0.3 -0.1l-0.2 -1.9l0.7 -0.7zM329.8 276.1l-0.9 -0.2l-0.6 -0.5l1.4 -1.6l0.5 0.1l0.4 1.8zM329.4 286.4l-0.6 -1.2l-0.9 -0.1l-1 0.3l0 0.4l0.5 1.1l1.8 0.2zM331.4 271.5l0.2 -1.3l-0.4 -0.5l-1.9 -0.1l-1 0.9l2 1.4l0.8 0zM332 282.6l-2.3 0.6l0.1 0.6l1.5 1.2l1 -1.5zM333.4 267.1l0.5 0.5l-1.2 2.4l-1.1 0.2l-0.4 -0.5l0.1 -1.2zM333.3 273.9l-1.2 0.2l-1 -1l0 -1.2l0.3 -0.4l2 1.2zM332.3 282l1.7 0l0.3 2.5l-0.2 0l-1.8 -1l-0.3 -0.9zM332.7 285.8l1.4 -1.3l-1.8 -1l-1 1.5l0.1 0.5l0 0zM331.8 295.8l0.1 -0.9l1.4 0.1l0.8 0.7l-0.2 1.7l-0.5 0zM333.4 301.8l-2.4 -0.4l-0.6 1l2.9 0.9l0.4 -1.2zM333.9 280.1l-0.4 -0.2l-0.7 -1.6l0 -0.1l1.3 -0.6l1.2 1.2l0.1 0.7l-0.1 0zM335 284.7l-0.6 3.2l1.9 0l0.1 -0.1l0.1 -0.1l-0.2 -2.4l-0.9 -0.7zM334.4 287.9l-0.1 0.1l-0.2 1.1l0.3 0.7l1.1 1.1l0.8 -0.5l0 -2.5zM335.6 271.8l0.1 -0.3l0.2 0l2.6 0.5l0.2 0.7l-0.3 0.4l-2 0.4l-0.3 -0.2zM337.9 275.6l-0.2 0.6l-1.4 0.8l-1.3 -0.7l1.5 -1.6zM335.4 279.5l2.1 0.1l-0.3 -1.3l-0.6 -0.4l-1.3 0.9zM337.1 298.1l-1.4 0.5l-0.2 -0.1l-0.3 -0.4l0.4 -2.6l1.8 0.6zM336.3 303.1l-0.4 -0.6l0.8 -1.6l0.7 0.1l0.7 0.3l0.3 0.9l-1 0.9zM336.7 265.8l0.8 1.9l1.5 -0.3l1 -1.4l-0.7 -0.6l-1.9 -0.2zM339.1 308.6l0.8 -2.7l-0.5 -0.4l-1.6 1.3l1.1 1.6zM340.1 269.4l-1.3 0.9l1.9 1.8l1 -0.3zM341.2 276.1l1.7 1.7l-2.4 0.4l-0.4 -0.2l0.1 -1.1zM339.9 282.8l0 -0.2l2.2 -1l0.9 0.6l0.1 0.7l-2.3 1.1zM341.3 262.5l0.7 -0.8l1.5 0.7l0.1 1.2l-2.2 1.7l-0.8 -2zM341.1 268.4l-0.7 0.8l2.3 0.7l0.5 -0.8l0.1 -0.6zM341.8 289.6l1.5 0.4l0.3 -0.1l0.4 -1.2l-1.7 -0.5zM343.8 293.7l-1.3 -0.1l-0.2 -0.3l-0.4 -1.2l0 0l1 -0.5l1.3 0.2zM344.2 299.7l-0.2 -0.2l-1.6 0.2l-0.9 1.1l-0.1 0.3l0.9 0.9l0.3 0.1l1.6 -1.3zM345.9 258.5l-1.7 -0.2l-0.2 1.7l0.1 0.1l1.9 -0.9zM345.1 273.9l4.1 0.8l3.7 2.6l-1.2 0l-7.5 -1.9l-0.1 -1.4l0 0zM346.6 285.9l-3 -2.2l-0.5 -0.8l-0.1 -0.7l2 -1.5l10.2 2.9l-0.5 0.7l-7.5 1.7zM347.1 299l0.2 -0.9l-0.4 -1.3l-0.8 -0.3l-1.9 0.2l-0.6 1.2l0.4 1.6l0.2 0.2zM345.8 269.7l-0.6 -1.4l0.7 -0.9l1.5 0.6l0 1.5zM347.4 269.5l0 -1.5l1.4 -0.5l0.4 0l0.1 0.1l0 2.3l-1.2 0.1zM344 309.8l-1.2 0.1l-1 1.8l0.7 0.9l1.5 -0.5l0.4 -1.2zM344.1 309.7l2.4 0.5l-0.3 1l-1.8 -0.3l-0.4 -1.1zM346.1 312.8l-0.5 0l-1.6 -0.7l0.4 -1.2l1.8 0.3l0.1 1.2zM349.1 312.3l-2.1 2.4l-0.9 -1.9l0.2 -0.4l2.6 -0.3zM349.2 312.4l-0.1 -0.1l-2.1 2.4l0.1 0.8l0 0.1l2.1 -0.3l0.3 -2.4zM349.3 317.8l-2.4 -1.5l-0.2 0.3l0.8 2.6l0.3 0.3l0.7 -0.2l0.8 -1.4zM351.5 316.6l-1.3 -1l1.6 -1.7l1 0.4l0.3 0.2l0.4 0.7l-0.2 0.4zM355.6 318.3l-0.5 -0.2l-1.4 0.3l-0.2 0.3l-0.2 0.5l2.3 1.3l0.5 -0.7zM355.3 310.8l-1 1l0.2 0.7l1.4 0.9l1 -0.7l-0.5 -1.5zM356.6 319.8l-0.5 0l-0.5 0.7l-0.1 0.5l2.3 0.6l0.1 0l-0.9 -1.6zM357.2 327.4l-0.2 0.3l-2.2 0.2l0.7 -2.3l1.6 -0.4l0.2 0.1zM358.7 313.8l-0.1 1.8l-2.7 -0.2l2.2 -1.8zM358.8 319.3l-0.2 2.3l-0.2 0l-0.5 0l-0.9 -1.6zM358.8 327.8l0 0.8l-1.3 0.4l-0.5 -1.3l0.2 -0.3zM358.4 321.6l-0.1 1.3l0.9 0.9l2 -0.9l-0.2 -0.5l-0.6 -0.5l-1.8 -0.3zM361.1 315.8l0.2 -0.5l2.5 0.1l0.4 0.6l0 0l-1.7 1.4l-1.1 -0.2l-0.1 -0.1zM363.1 318.2l-0.9 1.5l-1.4 -0.7l0.6 -1.8l1.1 0.2zM360.8 319l1.4 0.7l0.5 0.6l-0.2 0.4l-1.5 1.7l-0.6 -0.5l0.2 -2.7zM363.5 321.8l-1 -1.1l-1.5 1.7l0.2 0.5l0.4 0.4l1 0.2zM365.7 314.2l-0.1 -0.8l-0.7 -0.4l-1.2 0.8l0.1 1.6l0.4 0.6l1.3 -0.3zM364.5 321.4l0.6 2.2l-1.5 0.4l-1 -0.5l0.9 -1.7zM364.7 326.4l-0.1 2.4l-0.9 -0.4l-0.5 -1.5l0.6 -0.8zM364.4 331.4l0.6 -1.7l-1.6 0.4l-0.7 1.4zM366.9 319.6l2 0.1l0.2 -1.2l-0.8 -0.8l-0.8 0.1l-0.8 1.3zM367.4 326.2l0.9 -1.3l0.5 0.2l0.6 1.9l-2.2 -0.2zM369.7 333.7l0.2 0.1l3.1 -1.5l-0.5 -0.7l-1.3 -0.3zM373.5 322.8l2.2 0.4l1 -0.5l0.1 -1.4l-1.9 -1.6l-2.2 0.9l-0.5 0.7l0 0.1zM378.4 333.5l-0.8 -1.2l0 -0.4l1.4 -1.7l0.3 1.5l-0.4 1.5l-0.3 0.3zM382.9 340.9l-1 0.7l0.3 1.3l1.5 0.4l1.1 -0.6l0 -1l-0.5 -0.6zM384.8 336.2l-0.7 -0.5l-0.3 -0.8l1.9 -0.8l0.7 0.2l0.1 0.7zM388.2 344.1l-2.4 0.7l0 0l0.9 1.3l1.6 -1.3zM389.4 338.1l0.4 -0.9l1.6 0.9l-0.7 0.8l-1.2 0zM394.3 338.8l1.8 -0.7l1.3 1.1l-2.1 1.6zM397.7 339.2l-0.3 0l-2.1 1.6l-0.3 0.7l2 0.9l1.1 -0.4l1.3 -0.7l0.3 -0.4zM394.8 341.6l0 1.1l1.8 1.7l0.4 -2l-2 -0.9z"/>
<path fill="#ee997e" stroke="#2b2422" stroke-width="0.3" stroke-opacity="0.55" d="M318.5 297.9l-1.7 -1.8l2.2 0l0 1.5zM325.8 277.3l-0.6 -1.8l-0.3 -0.2l-1.4 1.1l-0.1 0.1l0.4 1.6l1.1 0zM346.8 257.8l2.2 -0.2l0.2 0.5l-0.2 0.7l-0.4 0.3zM353 252.1l1.4 -0.2l0.4 -1.1l-1.9 1zM357.2 251.3l-0.1 -0.2l0.4 -0.6l2.4 0.6l-0.3 2.2l0 0l-0.5 0.1zM355.9 255.2l1 0.6l0.8 -0.2l1 -1.8l-2.6 -0.3zM356.4 261.8l2.1 0.2l-0.2 2.8l-1.6 -1.3zM361.4 249.3l-0.2 -1l-0.3 -0.2l-1.6 0.6l0.1 0.5l1.2 0.8zM359.3 257.8l-1 2.2l1 0.8l0.3 -2.9zM361 269.1l-2.7 -4.3l0.2 -2.8l1.1 -0.5l0.9 0.7l0.8 1.9l0 2.8zM362.6 260l0.1 0.2l-2.2 2l-0.9 -0.7l-0.1 -0.4l1.3 -1.6zM363.1 253.8l2 0.4l-1.3 2.4l-1.1 -0.1l-0.2 -1.7zM361 269.1l0.3 -2.2l3.4 -4.4l1.3 1.1l-0.8 1.8l-4.1 5.2zM364.7 262.5l-0.3 -0.8l1 -0.8l1.4 0.3l0.5 1.1l-0.1 0.5l-0.4 0.6l-0.8 0.2zM365.2 265.4l2.8 -0.2l0.1 -0.1l-1.3 -1.7l-0.8 0.2zM367.3 262.3l1 -0.4l0.7 -1.9l-1.3 -0.2l-0.9 1.4zM369.3 246.9l0 0.1l1.4 1.4l0.8 -0.2l-0.3 -1.2l-1 -0.5zM368.4 250l0.8 -0.3l0.6 -0.1l1.1 0.8l0.5 0.9l-0.5 0.6l-1.8 0.3zM370.1 260.5l1.8 0.5l0.3 0.2l-2.2 2l0 0l-0.4 -0.9zM369.8 265.6l1.3 -1l0.6 1l-1.8 0.9zM371.8 269.2l-0.2 -1.5l-1.7 -0.2l-2.6 1.6l-4.3 5l0.1 0l7.6 -3.3zM371.5 248.2l-0.8 0.2l-0.9 1.2l1.1 0.8l1.4 -2zM373.2 271.4l-2.5 -0.6l-7.6 3.3l9.5 -1.2l0.6 -0.5zM373.4 283.4l-8.8 -2.2l7.5 0.1l1.5 0.7zM375.6 252.9l0.5 -0.6l-2.4 -1.3l0 0.1l-0.8 3l0.2 0.2l0.5 0.1zM375.6 252.9l-2 1.5l1.1 0.6zM374.7 273.6l-1.5 -1.2l-0.6 0.5l0.2 2.4l0.7 0zM374.6 277.9l-0.2 2.5l-1.3 -0.5l-0.3 -0.3l0.4 -1.4zM378.2 261l-0.1 0.1l-1.2 0.5l-1.5 -0.7l-0.3 -1.2l1.3 -0.6l1.1 0.6zM378.9 258.6l-1.4 1.1l0.7 1.3l0.8 -0.3l1.7 -1.6zM377.8 274.6l0.8 -1.8l1.6 0.3l-0.1 1.1l-1.9 0.7zM378.3 277.7l0 0l3.1 0.8l0.3 -1l-0.4 -1.4l-0.7 -0.2l-1.6 0.7zM384 267.8l-1.2 1.5l0.1 0.4l1.1 0.7l1.6 -0.7l-0.3 -1.9l-0.5 -0.2zM385.5 263.7l-1.6 1.2l1 1.4l2 -1.5l-0.1 -0.4l-0.5 -0.5zM386 273.4l-0.8 -1.5l1.4 -1.1l1.3 0.6zM388.8 269.5l0.8 -0.3l0.1 -2l-0.8 -0.2l-1.6 0.9l0.3 0.7zM358.4 303.1l-0.1 0.5l-0.6 0.7l-0.9 0.2l-1.1 -1.4l0.7 -0.8l1.9 0.7zM356.6 306.7l-0.4 0.5l0 1.3l1.5 0.6l0.9 -2.4l-0.6 -0.3zM366.1 306.9l-0.4 1.9l0.3 0.2l2.5 0.1l-0.1 -1.1zM370.9 313.5l0.4 -0.5l0.6 -0.1l1 0.5l0 1.2l-1.7 1.4l-0.7 -0.4zM373.8 305.4l-0.1 0.8l0.9 0.9l1.4 0.3l0.6 -1.2l0 0l-1 -1.5l-1.3 -0.3zM378.2 306.3l-1.6 -0.1l0 0l1.4 -1.9l1.6 0.3l0 0.1zM378.2 306.3l-1.6 -0.1l-0.6 1.2l0.3 1.1l2.3 -0.2l0.5 -0.7zM382 286.7l-1.8 0l0.4 2.9l1.4 -0.3zM381.9 299.6l0.8 -0.8l0.1 -0.7l-1.7 -0.9l-1.1 1.8l0.7 0.7zM382 306.9l-0.7 0.5l-0.7 -0.1l-1 -2.6l0 -0.1l0.3 -0.3l0.2 -0.1l2.4 0.7l0.2 0.3zM385.1 285.4l-2 1.4l-0.9 -0.3l0.1 -0.6l1.8 -1.1l1 0.2zM382.4 295.2l1.7 1.9l-1.3 1l-1.7 -0.9l-0.1 -0.5l1.3 -1.5zM389.9 284.8l-1.3 -0.6l-1 0.5l0 2.1l0.2 0.2l2 -0.5zM393 290.4l-0.7 1.9l-1.1 -0.4l-0.4 -0.3l-0.1 -1.7l2 0zM397.1 282.9l1.2 0.6l1.5 -2.9l-0.6 -0.5l-0.3 0.2l-1.8 2.5z"/>
<path fill="#eec7b6" stroke="#2b2422" stroke-width="0.3" stroke-opacity="0.6" d="M534.3 236.1l-1.3 0.8l-0.1 0.1l1.5 0.8l1.3 -0.7zM479.6 231.8l-0.5 0.9l-1.2 0.7l-1.3 -1.4l0.3 -0.3l2.1 -0.5l0.6 0.4zM479.6 231.8l-0.5 0.9l0.2 3.8l1.5 -1.2zM488.7 234.4l0.4 -1.1l-0.9 -1.7l-0.6 -0.4l-0.4 0.2l-0.6 0.8l1.4 2.3l0.2 0.1zM491.2 230.5l-0.7 0.8l-0.9 -0.4l0 -1.7l0.6 -0.5zM419 324.4l-0.3 0.2l-0.3 3.1l1.7 -1l0.6 -0.7l-0.9 -1.3zM420.1 329.2l-1.9 -1.3l0.2 -0.2l1.7 -1l0.8 2.5zM428 324.9l-1.3 -0.4l-0.3 0.1l-1 2.1l0.7 0.8l0.3 0.2l1.9 -1.5zM428.4 324.8l2.4 1.1l1.1 -0.9l-2.7 -1.3zM412.4 323.1l-2.7 0.1l-0.3 -1.8l1.3 -0.2l2.1 0.9zM415.1 324l0.2 -1.2l-1.8 -1.2l-0.7 0.5l-0.4 1l0.2 1.4l1.1 0.1z"/>
<path fill="#eec7b6" stroke="#2b2422" stroke-width="0.3" stroke-opacity="0.5" d="M336.1 273.3l0.3 0.2l0.1 1.2l-1.5 1.6l-0.2 0l-0.8 -0.9l-0.1 -0.9zM337.2 278.3l1.2 -0.9l-0.7 -1.2l-1.4 0.8l0.3 0.9zM336.5 287.7l1.8 -0.4l1.2 0.9l0.1 0.8l-1.5 0.8l-1.7 -2zM340.6 285l1.2 2.2l0.3 0l0.7 -0.7l-0.9 -1.5l-1 -0.4zM346.3 264.3l-1.8 0l-0.9 -0.7l-0.1 -1.2l0.9 -0.7l0.4 -0.1l1.8 0.5l-0.3 2.2zM344 312.1l-1.5 0.5l0.1 0.8l0.5 0.6l1.8 -0.2l0.7 -1zM349.2 312.4l1.9 -0.9l0.8 0.6l-0.4 1.4l-2 -0.6zM354.3 311.8l-1.1 -0.3l-0.1 0.1l-0.3 2.7l0.3 0.2l1.4 -2zM364.7 318.8l0.1 0.1l-0.6 1.1l-1.5 0.3l-0.5 -0.6l0.9 -1.5zM366.9 330.8l-1.9 -1.1l0 0l-0.6 1.7l0.4 1l2.3 -0.5l0.1 -0.5zM368.3 324.9l0.5 0.2l1.6 -0.3l-0.5 -1.7l-0.5 -0.3l-1.4 1.4zM369.2 329.9l-0.2 0.9l0.5 0.4l1.6 0l-0.5 -1.7zM369.7 333.7l1.5 -2.4l-0.1 -0.1l-1.6 0l-0.3 2.5zM373.5 337l-0.4 2.3l-1.2 -0.3l-0.3 -1.6zM386.5 335l-0.1 -0.7l1 -1.6l1.9 0.8l0 2.1l-1.6 0.6zM387.5 337l1.9 1.1l0.4 -0.9l-0.1 -1.4l-0.4 -0.2l-1.6 0.6z"/>
<path fill="#eec7b6" stroke="#2b2422" stroke-width="0.3" stroke-opacity="0.55" d="M346.8 257.8l2.2 -0.2l0.1 -1.7l-0.2 -0.2l-2.4 0.2l-0.2 0.8l0.1 0.9zM350.3 261.2l0.7 2.3l-1.2 0.1l-0.9 -1l-0.1 -0.8zM354.8 252.8l-0.4 -0.9l-1.4 0.2l-0.6 1.1l0.4 0.3l1.4 0.1zM355.4 257.8l-0.5 1.3l-0.6 0.6l-1.4 -1l-0.3 -1l1.5 -0.7zM354.1 261.8l-1 0.6l-0.1 0.7l0.3 0.5l1.5 1.6l0.4 -0.6l-0.1 -3l-0.5 -0.1zM354.7 255.4l1.2 -0.2l0.2 -1.7l-0.1 -0.4l-1.2 -0.3l-0.6 0.8l0.4 1.7zM355.4 257.8l-0.5 1.3l2 0.7l0 -1.6l-0.5 -0.5zM355.1 261.6l0.1 3l1.5 -1.1l-0.3 -1.7l-0.2 -0.2zM356.4 257.7l0.5 0.5l2.4 -0.4l-0.3 -1.2l-1.3 -1l-0.8 0.2zM356.9 259.8l0.1 0.1l1.3 0.1l1 -2.2l0 0l-2.4 0.4zM359.6 253.3l0.3 -2.2l0.6 -0.8l1.2 1.2l-0.2 1.1zM361.3 264.1l-0.8 -1.9l2.2 -2l0.8 1.2zM372 269.2l1.1 -0.2l-0.4 -1.8l-0.3 -0.2l-0.8 0.7l0.2 1.5zM360.1 276.5l0 0.1l9.2 -0.3l3.5 -1l-0.2 -2.4l-9.5 1.2l-0.1 0l-2.4 1.6zM373.8 259.6l-1.4 1.6l0.2 0.3l1.7 1.3l0.7 -0.4l0.4 -1.5l-0.3 -1.2l-0.7 -0.2zM374.1 270.6l0.2 -1.4l-1.2 -0.2l-1.1 0.2l1.8 1.5zM373.5 275.3l-0.7 0l-3.5 1l3.9 1.9l1.4 -0.3l0.1 0l-0.4 -1.7zM374.1 256.8l1.2 -1.2l1.4 0.2l0 1.1l-2.2 0.8zM375.8 265.5l1.6 0.8l-0.3 1.1l-0.3 0.4l-1.8 0.2l0.2 -1.9zM374.7 273.6l0 -2.7l1.6 0.3l0.5 0.5l-1.1 1.8zM379.8 256.1l-1.7 -1.7l-0.1 -0.1l-1.3 1.5l0 1.1l0.1 0.2l1.8 0.8zM379.5 281.2l-0.4 0.6l-0.6 0.3l-1.6 -1.2l1.5 -2.4l1.1 1.3zM379.4 267.9l1.5 0.3l-0.7 2.1l-1.6 -0.2l-0.2 -0.7l0.7 -1.2zM380.8 270.9l-0.6 -0.6l-1.6 -0.2l-0.4 0.7l2.2 1.1zM384 267.8l-1.2 1.5l-1.8 -1.1l0.5 -1.3l1.4 -0.1zM381.6 279l2.6 -0.5l-0.4 -1.1l-2.1 0.1l-0.3 1l0.2 0.4zM385.5 263.7l-1.6 1.2l-0.5 -0.1l0.2 -2.3l1.1 -0.3zM386 273.6l0 0.2l-0.7 0.7l-2.3 -0.6l-0.2 -0.6l0 0l1.8 -1.5l0.6 0.1l0.8 1.5zM384.9 279l0.7 -2.1l-1.2 -0.4l-0.4 0.1l-0.2 0.8l0.4 1.1zM384.6 281.5l0.8 -0.2l0.1 -0.2l0.1 -0.8l-0.1 -0.1l-3.8 -0.8l0.1 0.2l0.4 1.2zM384.4 276.5l1.2 0.4l1.1 -0.4l-1.3 -1.7zM389.7 264.8l-1.6 0.7l-1 -0.4l-0.2 -0.3l-0.1 -0.4l1.4 -1l0.6 -0.2zM389.8 275.4l-1.2 -0.9l-0.6 0.4l-0.8 1.7l0.7 1.2zM387.9 271.4l0.9 -1.9l0.8 -0.3l0.5 0.2l0.5 2.4l-1.9 0.4zM356.7 295.3l-1.4 -7l-0.9 -1.9l-1.1 3.9l1 5.7l1.3 0.3zM356.7 295.3l1.5 0.9l0.1 0.6l-0.3 0.3l-1.4 0.2l-1 -1zM358.2 296l1.5 -1.7l-2.6 -3.1zM358 297.1l0.1 1.1l0.8 1l1 0.4l0.4 -0.5l0.4 -1.8l-0.2 -0.2l-2.2 -0.3zM357.3 300.3l0.9 0.8l1.7 -0.9l0 -0.6l-1 -0.4zM358.8 311.2l-0.8 -1.3l0 -0.3l2.4 -0.8l0.3 0.1l0.2 0.5l-1.5 1.7l-0.5 0.1zM362.1 299.8l-1.8 -0.7l0.4 -1.8l0.4 0l1.4 0.5l0.3 0.8zM360.5 313.3l-0.9 -0.1l-0.7 -2l0.5 -0.1l2.4 0.6zM364.1 310.9l-2 0.2l-0.2 0.6l1.4 1.9l0.4 0.2l1.2 -0.8l-0.1 -1zM363.4 293l0.5 1.6l1 0.2l1.4 -0.7l0 -1.2l-0.1 -0.4l-1.9 -0.3l-0.9 0.7zM365.7 296.9l-0.8 -2.1l-1 -0.2l-0.5 0.5l0.3 2l0 0zM365.7 303l-0.1 1.6l-2.1 -0.1l-0.6 -1.2l0 -0.4l1.7 -1l0.6 0.5zM366.1 305.5l-0.2 1.1l-1.6 0.4l-1 -2.2l0.2 -0.3l2.1 0.1l0.5 0.7zM366.7 310.6l-0.7 -1.6l-0.3 -0.2l-1.2 0.7l-0.1 0.8zM366.4 297.4l0.5 -0.3l0.1 -0.1l0.9 -1.7l-0.2 -0.3l-1.4 -0.9l-1.4 0.7l0.8 2.1zM369.8 297.3l-2.8 -0.3l0.9 -1.7l1.6 0l0.1 0zM369.9 305.7l-0.3 -0.7l-1.8 -0.3l-1.7 0.6l0 0.2l3.2 1.4l0.5 -0.4l0.2 -0.3zM368.1 314.7l1.6 1.1l0.8 -0.2l0.4 -2.1l-2.8 -0.2zM373.6 288.7l0.9 1.2l1.9 -0.5l0 -1.1l-0.6 -1l-1 -0.1zM374.3 313.2l0 0l0.8 3l2.1 -1.1l0.4 -0.9l-2.6 -1.3zM378.5 283.9l-0.5 2.4l1.1 0.5l0.6 -0.3l0.1 -1.6zM381.3 284l-0.3 0.1l-1.2 0.8l-0.1 1.6l0.5 0.2l1.8 0l0.2 -0.2l0.1 -0.6l-0.6 -1.8zM382.1 302.3l0.6 0.2l-0.2 2.4l-2.4 -0.7l0.5 -1.1zM380.5 307.4l-0.6 2.7l1.8 -0.5l0.2 -0.3l-0.6 -1.9l-0.7 -0.1zM382.9 283.2l1.2 1.6l-1.8 1.1l-0.6 -1.8zM382.2 286.5l-0.2 0.2l0 2.6l0.3 0.1l1.8 -0.2l0.2 -0.3l-0.2 -1.3l-1 -0.8zM383.3 292.6l-0.1 -0.8l-0.5 -0.2l-0.6 0.2l-0.2 1.6l0.2 0.3zM383.6 305.1l-0.9 0.1l-0.2 -0.3l0.2 -2.4l1.4 -0.7l0.7 1.1zM384.1 289.2l0.7 1.9l0.5 0.2l0.7 -0.4l0.9 -1.5l-1.3 -0.7l-1.3 0.2zM385.8 299.2l-0.8 -0.1l-0.4 -2l0.3 -0.1l2.4 1.4l-0.1 0.3zM386.6 308.4l-0.4 -1.4l0 0l-1.3 -0.2l-1.1 1.2l0.3 1.4l0 0l1.7 -0.6zM387.6 300.7l0 1.6l-1.2 0.2l-0.5 -1.4l0.4 -0.2zM388.5 306.6l-2.3 0.4l0 0l0.6 -2.4l0.4 -0.1l1.2 0.3l0.4 1.4zM389.8 286.5l-2 0.5l0.3 2.2l0.4 0.3l1.7 -0.2l0.7 -1.8zM389.4 292.1l-0.9 -2.1l-1 1.5l0.2 1.4l1.4 -0.3zM388 300.1l1.7 -0.8l0.9 0.4l-1.3 1.7l-1.4 -1zM387.9 300.4l1.4 1l0.4 0.6l-0.3 0.8l-1.7 -0.4l-0.1 -0.1l0 -1.6zM391.7 287.3l0.8 0.2l0 0l0.6 0.9l-0.4 1.5l-2 0l-0.5 -0.6l0.7 -1.8zM391.2 291.9l-1 2.3l0.2 0.6l0.1 0.1l1.1 -0.2l1 -2.1l-0.3 -0.3zM395.4 291.1l-2.1 1.6l-0.7 -0.1l-0.3 -0.3l0.7 -1.9l1.7 0.2zM392 297.1l-0.1 -2.3l1.5 0.6l0.3 0.3zM394.3 277.2l-0.7 1.3l0.4 0.6l2.3 -0.2l0.6 -0.6l-0.8 -0.6zM393.9 280.6l-1.4 2.1l0.2 0.5l1.1 0.7l2.1 -2.3l-0.1 0zM394.2 295.9l1.5 -1.4l-0.1 -0.4l-1.9 -0.9l-0.3 2.2l0.3 0.3zM397.4 288.3l-1 -1.3l-0.9 0.3l-0.5 0.8l1 1.4zM397.4 288.3l-1.4 1.2l-0.2 1.7l0.2 0.2l1.1 -0.3l0.7 -2.7z"/>
<path fill="#f0e6e1" stroke="#2b2422" stroke-width="0.3" stroke-opacity="0.6" d="M480.6 228.5l0 2.6l1.8 -0.3l0.2 -0.1l-0.2 -1.5zM426.5 320.1l-0.1 0.4l-3 0.1l-0.6 -0.8l0.3 -1.6l0.3 -0.1l1 0.4z"/>
<path fill="#f0e6e1" stroke="#2b2422" stroke-width="0.3" stroke-opacity="0.55" d="M312.5 288.1l-1 -1.7l1.8 -0.9l0.9 0.4l0.1 1.1zM351.9 257.5l-0.7 0.4l-2 0.2l-0.2 -0.5l0.1 -1.7l1.2 0.4zM356.1 253.5l2.6 0.3l0.4 -0.4l-1.9 -2.1l-1.2 1.8zM363 253.4l1.2 -3l-2.5 1.1l-0.2 1.1zM362.6 260l0.1 0.2l0.8 1.2l0.9 0.3l1 -0.8l0 -1.3l-0.8 -0.9l-1.6 0.7zM361.1 270.6l-0.5 5.1l2.4 -1.6l4.3 -5l0.7 -3.9l-2.8 0.2zM367.3 262.3l1 -0.4l1.3 0.4l0.4 0.9l-0.7 0.5l-2.1 -0.9zM371.5 254l1.2 0.1l0.2 0l0.8 -3l-2.3 0.2l-0.5 0.6zM371.5 256.6l1.2 -2.5l0.2 0l0.2 0.2l0 2.4l-1 0.6zM375.8 265.5l0.1 -0.6l-1.7 -1.2l-0.8 0.7l-0.1 1.1l1.9 0.6zM374.7 281.1l-1.1 0.9l-1.5 -0.7l1 -1.4l1.3 0.5l0.1 0.2zM374.7 281.1l0.8 0.2l1.4 -0.4l-0.8 -1.9l-1.6 1.6zM377.1 267.4l2 0.8l-0.7 1.2l-1 -0.4l-0.6 -1.2zM383.1 264.9l-0.2 1.9l-1.4 0.1l-0.3 -0.7l1.7 -1.4zM381.3 276.1l1.3 -0.9l1.4 1.4l-0.2 0.8l-2.1 0.1zM383.4 264.8l0.2 -2.3l-0.7 -0.1l-0.9 1.7l0.9 0.7l0.2 0.1zM382.1 270.7l0.8 -1l1.1 0.7l0.6 1.4l-1.8 1.5zM351.8 298.6l-0.8 0.3l-1.6 -1l0.2 -0.6l1.2 -0.9l1.2 1.3zM351.8 301.3l1.3 1.5l0.3 0l0.8 -1.9l-1.3 -0.8zM355.7 303.1l-1.6 0.6l-0.7 -0.9l0.8 -1.9l0.3 -0.1l1.6 0.6l0.3 0.9zM355.7 303.1l-1.6 0.6l0.1 1l1.8 0.3l0.8 -0.5zM354 306.4l2.2 0.8l0.4 -0.5l-0.6 -1.7l-1.8 -0.3l-0.1 0.4zM356.7 295.3l-1.4 -7l1.8 2.9l1.1 4.8l0 0.2zM356.6 297.3l-1 1.5l1.2 0.6l1.3 -1.2l-0.1 -1.1zM356.8 299.4l1.3 -1.2l0.8 1l-1.6 1.1l-0.1 0zM358.3 303l-0.1 -1.9l-0.9 -0.8l-0.1 0l-1.1 1.1l0.3 0.9zM356.8 304.5l-0.8 0.5l0.6 1.7l1.4 -0.3l-0.3 -2.1zM358.2 296.2l0 -0.2l1.5 -1.7l0.6 0.2l0.2 2.6l-2.2 -0.3zM358.4 303.1l0.7 -0.2l1.2 -1.9l-0.4 -0.8l-1.7 0.9l0.1 1.9zM354.7 284.3l-0.3 1.7l0 0.4l0.9 1.9l1.8 2.9l2.6 3.1l0.6 0.2l0.6 -0.3l0.2 -0.3l-0.9 -4.1l-4.4 -6.8l-0.6 0.6zM362.1 299.8l-1.8 -0.7l-0.4 0.5l0 0.6l0.4 0.8l1.5 0.5l0.6 -0.9zM360.3 301l-1.2 1.9l1.4 0.4l1.4 -1.3l-0.1 -0.5zM362.9 303.3l-1.9 0.9l-0.5 -0.9l1.4 -1.3l1 0.9zM363.4 293l0.5 1.6l-0.5 0.5l-1.1 0.3l-1.4 -1.2l0.2 -0.3zM362.9 303.3l-1.9 0.9l0 0.6l1.7 0.5l0.6 -0.5l0.2 -0.3zM364.1 310.9l-2 0.2l-0.3 -0.6l1.7 -2.2l1 1.2l-0.1 0.8zM365.9 306.6l0.2 0.3l-0.4 1.9l-1.2 0.7l-1 -1.2l-0.3 -0.7l1.1 -0.6zM363.2 281l3.6 3.1l0.8 1.3l0.5 1.9l-0.2 3.5l-0.8 0l-2.3 -1.8l-4.9 -9.9zM366.3 294.1l1.4 0.9l0.6 -2l-2 -0.1zM367.2 300.4l0.8 1.3l-0.2 0.2l-2.1 1.1l-0.5 -0.6l1.7 -2zM366.1 305.3l-0.5 -0.7l0.1 -1.6l2.1 -1.1l0 2.8zM368.9 290.9l0.8 -0.5l0 -0.4l-1.6 -2.7l-0.2 3.5l0.7 0.2zM367.2 300.4l0.8 1.3l0.4 0l1.4 -0.6l0.1 -2.3l-1.2 -0.1l-1.5 1.4zM367.8 304.7l0 -2.8l0.2 -0.2l0.4 0l1.4 2.8l-0.2 0.5zM367.5 311.1l1 -1.9l0.2 0.1l1.6 1.8l0 0.4l-2.4 0.6zM366.8 284.1l0.8 1.3l3.1 2.6l1.2 -0.3l0.2 -0.8l-0.3 -1.6zM370.7 288.3l-1 1.7l0 0.4l2.1 0.7l0.1 0l0.2 -0.9zM371.9 295.4l0 -1.7l-0.7 -0.8l-0.4 0.1l-1 0.6l-0.3 1.7l0.1 0zM369.8 297.4l0 -0.1l-0.2 -2l2.3 0.1l0.2 0.2l-0.2 0.6zM371.6 303.2l-0.4 0l-1 -2l1.9 -0.5l0.5 0.6zM372 305.3l0.6 1.5l-0.1 0.1l-2.5 -0.7l-0.1 -0.5l2 -0.5zM373.7 284.5l-1.9 0.8l0.3 1.6l2.2 -0.4l-0.4 -1.9zM373.3 288.7l-1.2 1.5l-0.2 0.9l2.1 0.7l0.4 -0.7l0.1 -1.2l-0.9 -1.2zM373.8 298.3l0.4 -0.2l0.9 -1.7l-2.1 -0.9l-0.4 0.2zM374.2 301.9l0.6 -1l0 -0.3l-1.4 -1.8l-0.9 0.2l-0.4 1.7l0.5 0.6zM373.8 305.4l-0.1 0.8l-1.1 0.6l-0.6 -1.5zM372.6 306.8l1.1 -0.6l0.9 0.9l-1.4 1.6l-0.7 -0.3l0 -1.5zM371.5 316.4l-0.3 -0.4l1.7 -1.4l1.6 2.3l0 0.1l-1.5 0.2zM375.6 292.2l-1.3 0.3l-0.3 -0.7l0.4 -0.7l1.9 -0.4zM375.5 296.2l-0.6 -2.3l2.3 0.1l-1.3 2.3zM374.2 302l2 0.8l0.7 -1.5l-2.1 -0.4l-0.6 1zM373.2 308.7l1.4 -1.6l1.4 0.3l0.3 1.1l-0.2 0.9l-0.3 0.3l-2 -0.2zM373.6 311.2l0.7 2l0.7 -0.3l0.7 -1.8zM378.4 283.9l-1.8 1l-0.5 -0.4l0.2 -1.1l2.1 -0.8zM378.4 283.9l-1.8 1l0.2 1.3l1.2 0.1l0.5 -2.4zM376.9 290.3l-0.5 -0.9l0 -1.1l2.1 0l0 0l-0.9 2.5zM375.6 292.2l0.7 -1.5l0.6 -0.4l0.7 0.5l0.6 0.7l-0.3 1zM375.6 304.7l1 1.5l1.4 -1.9l-0.7 -0.7l-0.8 0zM375.7 311.1l0.2 -0.3l2.1 1.4l0.3 1.4l-0.7 0.6l-2.6 -1.3zM378.5 288.3l0.6 -1.5l0.6 -0.3l0.5 0.2l0.4 2.9l-0.3 0.3l-1.8 -1.6zM378.2 291.5l1.7 -0.6l0.4 -1l-1.8 -1.6l-0.9 2.5zM377.7 294.3l1.8 1l0 0.7l-1.7 1.2zM378 298.9l-0.3 -1.7l0.1 0l1.7 -1.2l1.5 0.7l0.1 0.5l-1.1 1.8l-2 0zM380.7 301l0 -1.3l-0.7 -0.7l-2 0l-0.1 1.9l0.5 0.7l1.7 -0.1zM379.7 310.3l0.2 -0.2l0.6 -2.7l-1.4 0.2l-0.5 0.7l0.7 1.9zM379 310.5l-2.9 -1.1l0.2 -0.9l2.3 -0.2l0.7 1.9zM383 283.2l-0.1 0l-1.2 0.9l-0.4 -0.1l-0.4 -1.1l0.7 -1.1zM380.4 311.3l1.4 0l0.1 -0.5l-0.2 -1.2l-1.8 0.5l-0.2 0.2zM382.3 289.4l0.4 2.2l0.5 0.2l1.6 -0.7l-0.7 -1.9zM384.4 293.8l-1.1 -1.2l-1.2 1.1l0 1.1l0.2 0.4l0.1 0l1.9 -1.1zM382.5 300.5l1.7 0.7l0.1 -1.2l-1.6 -1.2l-0.8 0.8zM386.3 300.9l-0.4 0.2l-1.7 0.1l0 0l0.1 -1.2l0.7 -0.9l0.8 0.1zM385.7 303.3l0.7 -0.8l-0.5 -1.4l-1.7 0.1l-0.1 0.6l0.7 1.1zM385.8 308.8l-1.7 0.6l0 0.5l2 1.3zM386.6 311.6l-0.2 0.7l-2.3 0.9l-0.6 -0.2l0.3 -2.4l0.3 -0.7l2 1.3zM388 281.7l-2.5 -0.6l-0.1 0.2l0.3 0.8l3 1.2l0.2 -0.5zM388.7 283.3l-0.1 0.9l-1 0.5l-1.6 -0.7l-0.3 -1.9zM385.1 285.4l0.4 1l0.8 0.5l1.3 -0.1l0 -2.1l-1.6 -0.7l-0.9 1zM387.6 286.8l0.2 0.2l0.3 2.2l-1.2 0.2l-1.3 -0.7l0.7 -1.8zM388.1 289.2l-1.2 0.2l-0.9 1.5l1.5 0.6l1 -1.5l0 -0.5zM387 293.2l-1.4 -0.7l-0.3 -1.2l0.7 -0.4l1.5 0.6l0.2 1.4l-0.1 0.2zM387 293.2l-1.3 2.2l0.1 0.2l2.4 -1l-0.6 -1.5zM388.2 294.6l0.5 0.5l-0.8 1.6l-2.1 -1l0 -0.1zM388.5 289.5l0 0.5l0.9 2.1l1.4 -0.5l-0.1 -1.7l-0.5 -0.6zM387.6 293.1l0.1 -0.2l1.4 -0.3l1.1 1.6l0.2 0.6l-1.7 0.3l-0.5 -0.5zM390.4 294.8l-1.7 0.3l-0.8 1.6l0.1 0.5l1.4 0.4l1.1 -0.6l0 -2.1zM388 300.1l1.7 -0.8l-0.3 -1.7l-1.4 -0.4l-0.7 1.2l-0.1 0.3zM387.7 302.4l1.7 0.4l0 0.2l-0.6 1.6l-0.4 0.2l-1.2 -0.3zM390.2 304.8l-1.4 -0.2l-0.4 0.2l0.4 1.4l1.3 0.3l0.4 0zM390.2 284.6l1.1 0l0.6 1l-0.2 1.7l-0.8 0.2l-1.1 -1l0.1 -1.7zM389.4 292.1l1.4 -0.5l0.4 0.3l-1 2.3l-1.1 -1.6zM391.6 297.6l-1.1 -0.6l0 -2.1l1.1 -0.2l0.3 0.1l0.1 2.3zM392.4 298.9l-1.2 0.9l-0.6 -0.1l-0.9 -0.4l-0.3 -1.7l1.1 -0.6l1.1 0.6zM391.1 301.6l-1.4 0.4l-0.4 -0.6l1.3 -1.7l0.6 0.1l0.1 1.4zM391.2 304.3l0.1 -0.6l-1.9 -0.7l-0.6 1.6l1.4 0.2zM391.9 278.3l-0.3 0.1l-0.8 -2.1l0 -0.8l0.8 -0.6l1.1 1.9zM394 279.1l-0.2 1.4l-2 -0.3l-0.8 -1.1l0.6 -0.7l0.3 -0.1l1.7 0.2zM393.8 280.5l-2 -0.3l0 0.6l0.3 1.7l0.4 0.2l1.4 -2.1zM393.7 293.2l-0.4 -0.5l-0.7 -0.1l-1 2.1l0.3 0.1l1.5 0.6zM394 279.1l-0.2 1.4l0.1 0.1l1.9 1l0.3 -0.5l0.2 -2.2zM397.1 282.9l-1.5 1.8l-1.4 -0.2l-0.4 -0.6l2.1 -2.3l1.2 1.2zM395.5 287.3l-0.3 -0.2l-1.2 -1.3l0 -0.8l0.2 -0.5l1.4 0.2l1.3 1.2l-0.5 1.1zM395 288.1l0.5 -0.8l-0.3 -0.2l-2.7 0.4l0.6 0.9l1.2 0.1zM395.8 291.2l-0.4 -0.1l-2.1 1.6l0.4 0.5l1.9 0.9l0.5 -2.2l-0.1 -0.5zM394.2 295.9l1.5 -1.4l1.6 0.5l0.3 1.9l-1.3 0.8l-2 -1.5zM396 298.9l0.3 -1.2l-2 -1.5l-1.2 2.8l0.2 0.2zM396.1 281.1l2.8 -0.8l-1.8 2.5l-1.2 -1.2l-0.1 0zM397.1 291.1l1.1 0.2l-0.4 2.2l-1.7 -1.6l-0.1 -0.5zM400.5 288.1l-1.4 1.8l-0.9 -1.5l1.6 -1.4l0.4 0.2zM399.5 293.7l-1.2 -2.4l-0.1 0l-0.4 2.2l0.3 0.7l1.3 -0.2z"/>
</g>
<g clip-path="url(#silc)"><rect x="278" y="208" width="266" height="182" filter="url(#nz)"/></g>
<g stroke-linejoin="round">
<path fill="#fdd4c2" stroke="#2b2422" stroke-width="0.24" stroke-opacity="0.7" d="M498.8 251.8l-2.5 -1.2l-3 6.1l2 0.9l4.3 -3.9zM496.5 259.2l-2.9 4.5l1.2 2l2.2 0l1.6 -5.5zM491.2 285.7l-2.9 2.4l-3.8 -0.5l2.3 -4.6l0.4 0.1zM505.2 254.4l0.8 2.1l3.6 1.7l0.8 -0.1l0.2 -0.3l0.1 -5.5l-1.6 -0.8zM512.2 252l1.5 0.5l-0.4 -4.8zM506.1 271.4l-1.1 -0.1l-2.5 6.1l0 0l4.5 -5.4zM480.2 349.7l2.7 0.5l-1.5 3.8l-1.8 -3.9zM487.4 351.7l-0.9 -1.6l-1.6 -0.8l-0.4 0l-1.6 0.9l-1.5 3.8l0 0.2l0.1 0.5l0.7 0.9l1.8 -2.2l0 2.4zM481.5 360.6l4.3 0l0.5 -1.9l-2.8 -2.2l-1.3 1.3z"/>
<path fill="#fff5f0" stroke="#2b2422" stroke-width="0.24" stroke-opacity="0.7" d="M455.2 287.7l3.5 -1.9l0.5 -2l-4.4 0.1l-0.9 1.9zM456 295.7l0.8 -0.5l0.2 -4.8l-1.2 -0.7l-2 2.7l1.3 2.6zM468.6 280.7l0.9 -0.3l2.1 -8.5l-0.4 -2.9l-2.6 1.7l-3.7 6.4l1.1 2.8zM467.7 283.7l0.9 -3l-2.6 -0.8l-3.6 2.8l0.8 1.4l1.2 0.6zM456.8 301.7l1.1 -2.7l-2.1 -2.5l-0.1 0l-1.2 1.6l1.6 3.6zM474.8 277.1l-1.9 5.2l-3.4 -1.9l2.1 -8.5zM468.5 285.6l5.1 -1.3l-0.3 -1.4l-0.4 -0.6l-3.4 -1.9l-0.9 0.3l-0.9 3zM478.3 278.5l-3.5 -1.4l-3.2 -5.2l-0.4 -2.9l2.9 -6.5l1.8 -3.4l0.7 1l4 9.3zM479.1 279.8l-5.8 3.1l-0.4 -0.6l1.9 -5.2l3.5 1.4zM494.3 247.9l2 2.7l-3 6.1l-16.1 0l-1.3 -0.2l-0.2 -1.5l0.5 -2l4.6 -3.3l8.7 -2.1zM480.2 280.5l-1.1 -0.7l-0.8 -1.3l2.3 -9.1l4.1 5.1zM474.3 285.7l3.7 0.4l2.3 -5.6l-0.1 0l-1.1 -0.7l-5.8 3.1l0.3 1.4zM496 246.3l0.7 -0.2l3.1 0.1l2.5 0.8l0.5 0.9l-4 3.9l-2.5 -1.2l-2 -2.7zM495.3 257.6l1.2 1.6l-2.9 4.5l-16.4 -7l16.1 0zM489.6 268.4l-13 -8.3l-0.7 -1l-0.1 -2.1l0 -0.1l0.1 -0.4l1.3 0.2l16.4 7l1.2 2l-0.2 0.2zM490.6 270.6l-4.8 4.5l-1.1 -0.6l-4.1 -5.1l-4 -9.3l13 8.3zM485.8 275.1l-1.1 -0.6l-4.5 6l0.1 0l3.1 1.7l2.3 0.1l0.3 -7zM481 287.5l2.4 -5.3l-3.1 -1.7l-2.3 5.6l2 1.7zM502.3 247l0.5 0.9l0.8 0.4l1.8 -0.3l1.8 -2.8l-0.3 -0.5l-2.4 -0.4l-1.9 1.3zM498.8 251.8l4 -3.9l0.8 0.4l0.7 5.6l-3.5 0.5l-1.2 -0.7zM499.6 253.7l1.2 0.7l0.1 5.7l-2.3 0.1l-2.1 -1l-1.2 -1.6zM490.6 270.6l2.8 1.8l1.2 0.1l0 -6.6l-5 2.5zM490.6 270.6l-4.8 4.5l0.2 0.2l3.4 1.1l4 -4zM487.2 283.1l-0.4 -0.1l-1.1 -0.7l0.3 -7l3.4 1.1l1.4 1.9zM484 288l0.2 -0.1l0.3 -0.3l2.3 -4.6l-1.1 -0.7l-2.3 -0.1l-2.4 5.3zM507.6 245.1l-0.4 0.1l-1.8 2.8l3.2 2.1l2.1 -3.1l-0.6 -0.6zM505.4 248l-1.8 0.3l0.7 5.6l0.9 0.5l3.9 -2.9l-0.5 -1.4zM505.2 254.4l0.8 2.1l-3.6 4.4l-1.5 -0.8l-0.1 -5.7l3.5 -0.5zM500.9 260.1l-2.3 0.1l-1.6 5.5l1.9 1.1l3.7 -5.4l-0.2 -0.5zM494.6 265.9l0.2 -0.2l2.2 0l1.9 1.1l0.9 1.5l-4.6 4.5l-0.6 -0.3zM493.4 272.4l-4 4l1.4 1.9l2.4 0.8l0.1 0l2 -6.2l-0.1 -0.1l-0.6 -0.3zM491.2 285.7l2 -6.6l-2.4 -0.8l-3.6 4.8l4 2.6zM509.1 251.5l1.6 0.8l1.5 -0.3l1.1 -4.3l-0.1 -0.8l0 -0.2l-0.1 0l-2.4 0.3l-2.1 3.1zM502.4 260.9l0.2 0.5l2.7 2l0.3 0l4 -5.2l-3.6 -1.7zM505.3 263.4l-2.7 -2l-3.7 5.4l0.9 1.5l3 1.2zM503.1 270l-0.3 -0.5l-3 -1.2l-4.6 4.5l0.1 0.1l3.1 2.1zM498.4 275l-3.1 -2.1l-2 6.2l3.2 1l2.6 -3.8zM496.5 280.1l-3.2 -1l-0.1 0l-2 6.6l0.4 0.2l2.1 -4.3l3 -1zM513.3 256.5l0.5 -3l-0.1 -1l-1.5 -0.5l-1.5 0.3l-0.1 5.5zM510.4 258.1l1.6 2.2l-3.8 4.4l-2.6 -1.3l4 -5.2zM505.6 263.4l-0.3 0l-2.5 6.1l0.3 0.5l1.9 1.3l1.1 0.1l3 -5.6l-0.9 -1.1zM505 271.3l-2.5 6.1l-3.4 -1.1l-0.7 -1.3l4.7 -5zM496.5 280.1l0.2 0.5l4.3 -1.4l1.5 -1.8l0 0l-3.4 -1.1zM510.6 257.8l-0.2 0.3l1.6 2.2l0.5 0.3l0.8 -4.1zM509.1 265.8l1.3 0.4l0 -0.1l1.6 -2.7l0.5 -2.8l-0.5 -0.3l-3.8 4.4zM510.4 266.2l-1.3 -0.4l-3 5.6l0.9 0.6l0.1 -0.1l3.3 -5.7zM486.7 340.2l2.3 -1.2l-1.4 1.9l2.2 -1.3l-0.9 -0.2l0.6 -2l-2.7 0.1l-0.2 0.3zM483.1 344.4l-0.1 2.2l1.2 2.4l0.3 0.3l0.4 0l1.2 -5.6l-0.6 0.1l-0.3 0.5l0 -0.4zM480.4 357.5l0.6 -0.5l1.2 -1.4l-0.7 -0.9l-3.8 0.7l1.4 2.5zM490.6 345.2l0.1 0l1.1 -5.3l-2 -0.3l-2.2 1.3l-1.1 1.7l0.1 0.6zM484.9 349.3l1.6 0.8l4.1 -4.9l-4 -2l-0.5 0.5zM476.9 360l0.3 0.4l3.2 -2.9l-1.3 0.4l-2.3 1.8zM482.2 357.8l-2.8 2.8l2.1 0zM470.8 368.6l2 0.4l3.6 -0.3l0 -4.7l-5.8 3.3l0 0zM479.6 364.2l-0.4 0l0 0.1l-0.2 2zM490.7 345.2l1.3 0.7l0.5 -0.1l0 -5.8l-0.7 -0.1zM486.5 350.1l0.9 1.6l3.3 1.5l1 0l0.3 -7.3l-1.3 -0.7l-0.1 0zM486.3 358.7l1 -0.2l3.4 -5.3l-3.3 -1.5l-3.4 4.1l0 0.2l-0.5 0.5zM480.9 370.1l0.7 0l1.7 -5.9l-3.7 0l-0.6 2.1l-0.3 2.4zM476.3 372.5l0.1 -3.8l-3.6 0.3zM478.6 374.8l2.3 -4.7l-2.2 -1.4l-0.6 5.7zM492 345.9l-0.3 7.3l0.8 0.3l0 -7.7zM491.7 353.2l-1 0l-3.4 5.3l1.9 1l3.3 -5.5l0 -0.5zM486.8 364.9l0.7 -0.7l-1.7 0zM487.3 358.5l-1 0.2l-0.5 1.9l3.2 0l-0.1 -0.5l0.3 -0.6zM481.6 370.1l2.1 0.8l3.9 -4.7l-0.8 -1.3l-1 -0.7l-2.5 0zM483.7 370.9l-2.1 -0.8l-0.7 0l-2.3 4.7l0 0.4l3.4 2.5l1.9 -6.6zM477.9 381l4.3 -2.7l0 -0.2l-0.2 -0.4l-3.4 -2.5l-0.6 0.4l-0.2 1.8l-0.5 0l0 2.9zM475.2 377l-0.1 0.5l0.1 0.4l1.2 -0.5l-0.2 0l0 -0.9zM486.8 364.9l0.8 1.3l2.5 1.1l0 -3l0 -0.1l-2.6 0zM487.6 366.2l-3.9 4.7l0.2 0.2l3.6 2.1l2.6 -5.3l0 -0.6zM482.2 378.1l-0.2 -0.4l1.9 -6.6l3.6 2.1l0.7 1.2zM477.9 381l-0.4 1.9l1 1.5l4.2 0l0 -5.5l-0.5 -0.6zM490.1 375.3l0 -7.4l-2.6 5.3l0.7 1.2l1.5 1zM482.7 378.9l3.8 1.1l0 -2.9l2.5 0l0.7 -1.7l-1.5 -1l-6 3.7l0 0.2zM482.7 384.4l2.3 0l1.5 -2.2l0 -2.2l-3.8 -1.1zM489.7 375.4l-0.7 1.7l1.1 0l0 -1.8zM485 384.4l1.5 0l0 -2.2z"/>
<path fill="#fff5f0" stroke="#2b2422" stroke-width="0.26" stroke-opacity="0.7" d="M449.4 359.4l-0.5 -2.3l2.7 0.5l0.1 2.6l-0.1 0.1l-1.5 0zM450.1 360.3l-1.8 1l-0.4 3.2l0.1 0.2l1.6 0.5l2.5 -3.8l-0.5 -1.1zM451 366.9l-1.4 -1.7l-1.6 -0.5l-2.4 2.2l1.4 2.9zM445.6 372l-0.4 0.9l0.3 3.3l0.8 0.9l0.1 0l2.8 -1l-2.4 -4.7l-1.2 0.5zM443.6 380.1l0.1 0.7l1.2 0.9l0.4 -0.9l3.1 1l-2 -4.7l-0.1 0zM442.8 385l0.6 0.5l0.6 -1.5zM451.6 357.6l0.5 -1.4l2.5 0l1.4 1.7l-0.1 0.5l-4.2 1.8zM451.6 367.2l2.8 -4.1l-2.3 -1.7l-2.5 3.8l1.4 1.7zM451.6 367.2l0.9 1l-1.7 3.4l-4 -0.2l0.2 -1.6l4 -2.9zM446.8 371.4l0 0l4 0.2l0.6 1l-0.8 3.8l-1.4 -0.3zM448.4 381.8l0 0l2.7 -4.9l-0.5 -0.5l-1.4 -0.3l-2.8 1zM455.7 352.2l-1.1 4l1.4 1.7l3.9 -1.6l2 -1.9l0.4 -1.8l-0.2 -0.7l-2.7 -1.5zM451.6 360.3l0.5 1.1l2.3 1.7l2.2 0.1l0.4 -0.1l0.2 -0.2l-1.3 -4.5l-4.2 1.8zM451.6 367.2l2.8 -4.1l2.2 0.1l-2.5 5.4l-1.6 -0.4zM451.4 372.6l-0.6 -1l1.7 -3.4l1.6 0.4l0.7 0.5l-0.3 3.8zM451.3 376.9l3.8 -3.2l-0.6 -0.8l-3.1 -0.3l-0.8 3.8l0.5 0.5zM452.8 378l-1.5 -1.1l-0.2 0l-2.7 4.9l3.6 1.2l0.2 0.1zM459 362.3l0.9 -6l-3.9 1.6l-0.1 0.5l1.3 4.5zM458.8 367.9l-1.8 -4.8l-0.4 0.1l-2.5 5.4l0.7 0.5l1.5 0zM456.3 369.1l-1.5 0l-0.3 3.8l0.6 0.8l0.4 0.2l2.5 -0.6zM451.3 376.9l3.8 -3.2l0.4 0.2l0.4 4.3l-3.1 -0.2zM454.4 384.2l1.7 -5.8l-0.2 -0.2l-3.1 -0.2l-0.6 5.1l2.2 1.1zM463.5 359l-1.6 -4.6l-2 1.9l-0.9 6l2.3 0.3l2.1 -2.4zM459.3 368.1l2.9 -3.1l0.2 -0.4l-1.1 -2l-2.3 -0.3l-1.8 0.6l-0.2 0.2l1.8 4.8zM459.3 368.1l1.6 1.8l-1.7 3.7l-1.2 -0.3l-1.7 -4.2l2.5 -1.2zM459.2 373.6l1 1.5l-2.8 3.4l-1.3 -0.1l-0.2 -0.2l-0.4 -4.3l2.5 -0.6zM457.3 383.6l1.3 -3.9l-1.2 -1.2l-1.3 -0.1l-1.7 5.8zM459.3 368.1l2.9 -3.1l1.9 5l-3.2 -0.1zM460.9 369.9l3.2 0.1l4.2 1.3l-0.7 1.6l-7.1 2.2l-0.3 0l-1 -1.5zM458.6 379.7l-1.2 -1.2l2.8 -3.4l0.3 0l2.6 4.5l-2.5 0.8zM459.9 384.3l0.7 -3.9l-2 -0.7l-1.3 3.9zM460.7 385.2l-0.8 -0.9l-2.6 -0.7l-2.9 0.6l0 0l4.1 2l1.3 -0.2zM460.5 375.1l2.6 4.5l3 0.9l1.5 -2.9l0 -0.4l0 -4.3zM459.9 384.3l0.7 -3.9l2.5 -0.8l3 0.9l0.2 0.9l-0.3 0.8l-2.2 2.8l-2.8 0.3l-0.3 -0.1z"/>
<path fill="#ee997e" stroke="#2b2422" stroke-width="0.28" stroke-opacity="0.8" d="M459.7 260.8l-1.3 1.6l-0.1 2.7l0.4 0.6l1.7 0.4l15.4 -9.1l0 -0.1l-15.8 3.7z"/>
<path fill="#eec7b6" stroke="#2b2422" stroke-width="0.28" stroke-opacity="0.8" d="M431.6 256.4l-0.5 0.7l0 0.4l2.1 1.5l2.4 0.2l1.2 -0.9l0.1 -1.1l-1 -1.4l-4 0.5zM434.6 265l0.7 2.5l-6.3 0.7l3.4 -2.6zM445.4 260.2l-2.4 -0.9l-1.3 -0.2l-0.4 1.8l2.9 1.2zM460.5 282.1l-1.3 1.7l-4.4 0.1l-0.1 -2.4l5.6 0.2zM457 276.3l3.4 1.9l1.2 -1.4l-0.6 -2.3l-0.6 -0.4l-2.1 -0.9l-0.2 0zM401.9 281.3l-0.4 -2.7l1.1 -0.9l0.5 -0.1l0.6 0.2l0.5 2.5zM404.2 280.3l0.2 0l1.7 0.4l1.1 -0.4l1.1 -3.2l-3.5 -0.4l-1.1 1.1zM410.3 287.6l-1.8 0.7l-0.4 -0.1l-0.9 -0.8l0.9 -2.5l1.9 -1.1l0.8 0.2z"/>
<path fill="#f0e6e1" stroke="#2b2422" stroke-width="0.28" stroke-opacity="0.8" d="M431.6 262.8l-2.5 -0.3l-2.6 2.4l-0.4 0.8l-0.9 2.3l1.9 0.9l0.3 0.1l1.6 -0.8l3.4 -2.6zM433.2 259l0 3.4l2 1.3l0.6 -0.2l0.4 -1.3l-0.6 -3zM429.5 270.4l-2.1 -1.4l1.6 -0.8l6.3 -0.7l0.4 0.5l-0.9 2.7zM435.6 259.2l0.6 3l2.3 -1.2l-0.1 -1.8l-1.6 -0.9zM439.4 261.7l-2.9 2l-0.7 -0.2l0.4 -1.3l2.3 -1.2zM438.6 264.9l-2.1 -1.2l-0.7 -0.2l-0.6 0.2l-0.6 1.3l0.7 2.5l0.4 0.5l1.8 -0.2l1.3 -0.9zM437.5 267.8l-1.8 0.2l-0.9 2.7l1.2 1.5l2.5 -0.9zM440.2 274.2l-0.6 -2.8l-1.1 -0.1l-2.5 0.9l0 0.3l0.1 0.9l2.5 2l1.4 -0.6zM443.7 265.2l-0.9 1.5l-2.3 1.2l-1.7 -1l-0.2 -2l2.2 -1.5l2.6 1.4zM441.5 278l0.5 -0.7l-0.8 -1.5l-1.2 -1l-1.4 0.6l-0.5 1.5l0.6 0.6zM443.4 264.8l0.8 -2.7l-2.9 -1.2l-0.7 1.4l0.2 1.1zM443.7 265.2l0.9 0.1l2.4 3l-2.3 2.8l-1.9 -4.4zM442.8 266.7l1.9 4.4l-0.1 0.5l-3.9 -1l-0.2 -2.7zM444.6 273.3l-3.4 2.5l-1.2 -1l0.2 -0.6l4.3 -1.6zM441.5 278.4l1.2 1.7l2.9 -1.5l-0.2 -1.5l-0.2 -0.3l-3.2 0.5l-0.5 0.7zM444.7 271.1l-0.1 0.5l0.1 0.1l3.6 0.6l0.4 -3.8l-0.9 -0.3l-0.8 0.1zM445.2 276.8l0.2 0.3l3.5 -0.3l1 -1.8l-0.5 -0.8l-4.2 1.1zM445.6 278.6l-0.2 -1.5l3.5 -0.3l0.6 1.7l-2.9 1.5l-0.6 -0.5zM451.8 267l0.1 -0.1l1.2 -1.4l-4.5 -2.7l-0.2 0.5l0.3 1zM450.9 268.6l0.9 1.9l-2.8 2.2l-0.7 -0.4l0.4 -3.8zM449.9 275l1.4 0.1l1.2 -0.5l-0.5 -4l-0.2 -0.1l-2.8 2.2l0.4 1.5zM447.1 281.5l-0.5 -1.5l2.9 -1.5l1.5 1l-1.5 1.9zM449.5 281.4l1.5 -1.9l0.2 0l1.7 1.6l-1.5 2.2l-1.6 -1.4zM454.2 263.6l0 1l-1.1 0.9l-4.5 -2.7l0.3 -1.3l5.2 1.9zM456.4 268.4l-1.1 -2.8l-1.1 -1l-1.1 0.9l-1.2 1.4l3.7 2.2zM452.9 274.7l-0.4 -0.1l-0.5 -4l2.7 0.1l0.7 1.3zM454.3 275.8l1.1 1.4l-0.1 0.2l-3.2 0.9l-0.8 -3.2l1.2 -0.5l0.4 0.1zM458.4 262.4l-0.1 2.7l-3 0.5l-1.1 -1l0 -1zM454.3 275.8l2 -3.2l-0.9 -0.6l-2.5 2.7zM457.2 268.3l1.5 -2.6l1.7 0.4l-0.4 2.1zM457.2 268.3l-0.3 0.1l2 2.8l1.7 -1.2l-0.1 -1.1l-0.5 -0.7zM458.9 271.2l1.7 -1.2l1.5 0.7l-1.7 3.4l-2.1 -0.9zM460 268.2l0.5 0.7l13.6 -6.4l1.8 -3.4l-0.1 -2.1l-15.4 9.1zM460.4 274.1l1.7 -3.4l5.1 0.3l-6.2 3.5zM461.6 276.8l3.3 0.3l3.7 -6.4l-1.4 0.3l-6.2 3.5zM466 279.9l-1.1 -2.8l-3.3 -0.3l-1.2 1.4l-0.3 2.5l0.2 1l0.2 0.4l1.9 0.6zM398.9 278.8l0.3 1.3l0.6 0.5l2 0.8l0.1 -0.1l-0.4 -2.7l-1.3 -0.3l-1.3 0.5zM398.3 283.5l0.4 0.6l3.1 -1l0 -1.7l-2 -0.8zM401.9 281.3l-0.1 0.1l0 1.7l0.6 0.9l1.1 0.9l0.4 -0.3l0.5 -4.3l-0.2 0zM400.2 287.2l3 -0.8l0.3 -0.4l0 -1.1l-1.1 -0.9l-2.9 2.3l0.3 0.7zM404.9 272.5l-0.3 2.5l5.4 -2.5l-2.1 -1.3l-1.8 0.4zM405.8 283.6l2.3 1.3l-0.9 2.5l-0.2 0.1l-3.5 -1.5l0 -1.1l0.4 -0.3zM403.2 288.8l0 -2.4l0.3 -0.4l3.5 1.5l-1.6 1.9l-0.6 0.2zM406.1 280.7l1.1 -0.4l1.6 1.3l1.2 2.2l-1.9 1.1l-2.3 -1.3zM411.7 283.7l-1.1 -3.5l1.8 -2.3l-0.3 5.6zM411.3 283.9l-0.5 0.1l-0.8 -0.2l-1.2 -2.2l1.8 -1.4l1.1 3.5zM411.3 283.9l-0.5 0.1l-0.5 3.6l1.4 0.7l1.3 -0.6l0.1 -0.1zM411.7 288.3l-1.4 -0.7l-1.8 0.7l2 2.4l0.6 -0.3zM412.4 283.4l1.5 -0.7l0.3 -6.8l-0.8 -1.2l-1 3.2l-0.3 5.6z"/>
<path fill="#fdd4c2" stroke="#2b2422" stroke-width="0.28" stroke-opacity="0.8" d="M440.5 267.9l0.2 2.7l-1.1 0.8l-1.1 -0.1l-1 -3.5l1.3 -0.9zM444.5 272.6l0.2 -0.9l-0.1 -0.1l-3.9 -1l-1.1 0.8l0.6 2.8zM443.7 265.2l0.9 0.1l3.8 -2l0.2 -0.5l0.3 -1.3l-0.1 -0.3l-2.9 -1.1l-0.5 0.1l-1.2 1.9l-0.8 2.7zM451.8 267l-3.1 -2.7l-0.9 3.9l0.9 0.3l2.2 0.1zM459.7 260.8l-1.3 1.6l-4.2 1.2l-0.1 -0.2l0.3 -2.3zM404.3 275.3l0.3 -0.3l5.4 -2.5l2.4 1l-4.1 3.6l-3.5 -0.4z"/>
<path fill="#fff5f0" stroke="#2b2422" stroke-width="0.28" stroke-opacity="0.8" d="M428.9 255.2l2.2 1.9l0.5 -0.7l-0.1 -1.3l-2.4 -3.8l-0.3 -0.1l-0.3 1.3zM431.1 257.5l2.1 1.5l0 3.4l-1.6 0.4l-2.5 -0.3l1.1 -4.2zM433.2 262.4l2 1.3l-0.6 1.3l-2.2 0.6l-0.8 -2.8zM441.3 258.6l0.4 0.5l-0.4 1.8l-0.7 1.4l-1.2 -0.6l-0.9 -0.7l-0.1 -1.8zM440.8 263.4l-0.2 -1.1l-1.2 -0.6l-2.9 2l2.1 1.2zM444.6 273.3l0.6 2l0 1.5l-3.2 0.5l-0.8 -1.5zM444.6 265.3l3.8 -2l0.3 1l-0.9 3.9l-0.8 0.1zM444.6 273.3l0.6 2l4.2 -1.1l-0.4 -1.5l-0.7 -0.4l-3.6 -0.6l-0.2 0.9zM448.9 276.8l0.6 1.7l1.5 1l0.2 0l0.9 -1.2l-0.8 -3.2l-1.4 -0.1zM455.6 269.1l-3.7 -2.2l-0.1 0.1l-0.9 1.6l0.9 1.9l0.2 0.1l2.7 0.1zM451.2 279.5l0.9 -1.2l3.2 -0.9l0.3 1.2l-0.9 2.9l-1.8 -0.4zM453.6 285.7l-2.1 -1.6l-0.1 -0.8l1.5 -2.2l1.8 0.4l0 0l0.1 2.4l-0.9 1.9zM457.2 268.3l-0.3 0.1l-0.5 0l-1.1 -2.8l3 -0.5l0.4 0.6zM456.3 272.6l1.8 0.6l0.2 0l0.6 -2l-2 -2.8l-0.5 0l-0.8 0.7l-0.9 1.6l0.7 1.3zM454.3 275.8l1.1 1.4l1.6 -0.9l1.1 -3.1l-1.8 -0.6zM460.3 281.7l-0.2 -1l-4.5 -2.1l-0.9 2.9l0 0zM457 276.3l3.4 1.9l-0.3 2.5l-4.5 -2.1l-0.3 -1.2l0.1 -0.2zM460.6 270l1.5 0.7l5.1 0.3l1.4 -0.3l2.6 -1.7l2.9 -6.5l-13.6 6.4zM401.8 283.1l-3.1 1l-0.1 1.1l0.9 1.1l2.9 -2.3zM401.5 278.6l1.1 -0.9l-0.5 -0.2l-1.9 0.8zM400.5 288.1l1.2 1.9l1.5 -1.2l0 -2.4l-3 0.8zM406.1 280.7l-0.3 2.9l-1.9 1l0.5 -4.3zM407.2 280.3l1.1 -3.2l4.1 -3.6l0.5 0l0.3 0.1l0.2 1.1l-1 3.2l-1.8 2.3l-1.8 1.4z"/>
<path fill="#65030e" stroke="#2b2422" stroke-width="0.3" stroke-opacity="0.6" d="M447.6 333.9l3.2 1.7l-1.4 2l-0.7 -0.2l-2 -1.9z"/>
<path fill="#a11619" stroke="#2b2422" stroke-width="0.3" stroke-opacity="0.6" d="M441.5 340.9l0.2 -2.4l0 0l-2 -0.5l-0.7 1.3l1.8 1.5zM445 341.1l0.9 -1.6l-0.1 -0.1l-1.1 -0.5l-1.2 1.3z"/>
<path fill="#a91418" stroke="#2b2422" stroke-width="0.3" stroke-opacity="0.6" d="M441.8 335.8l-0.1 2.7l0 0l2.5 -0.4l0.3 -1.8zM443.5 340.2l1.2 -1.3l-0.5 -0.8l-2.5 0.4l-0.2 2.4l0.2 0.2zM442.5 332l-0.5 0.7l2.6 2l0.8 -1.4zM444.9 341.2l-2.9 1l-0.3 -1.1l1.8 -0.9l1.5 0.9zM445.4 336l1.3 2.1l2 -0.7l-2 -1.9z"/>
<path fill="#bf2d25" stroke="#2b2422" stroke-width="0.3" stroke-opacity="0.85" d="M476.4 341l-1.9 0l0 1.7l1 0.8l1.6 -0.5l-0.4 -1.7z"/>
<path fill="#c1a194" stroke="#2b2422" stroke-width="0.3" stroke-opacity="0.85" d="M458.6 334.6l1.8 -0.3l0.7 0.8l-0.1 1.5l-0.5 0.5l-2 0l-0.4 -1.2z"/>
<path fill="#c3bab6" stroke="#2b2422" stroke-width="0.3" stroke-opacity="0.85" d="M449.7 315.1l2.5 0.6l0 2.2l-1.3 0.6l-1.5 -1.9zM459.4 329.1l-1.8 2.2l0.1 0.3l0.3 0.3l1.5 -0.2l1 -2.2l-0.6 -0.3zM458 331.9l-0.3 1.5l0.9 1.2l1.8 -0.3l0.6 -1.4l-1.5 -1.2z"/>
<path fill="#ca5c40" stroke="#2b2422" stroke-width="0.3" stroke-opacity="0.85" d="M465.9 347.4l0.7 -1.5l1.5 -1l1.5 1.4l-1.3 1.3l-2.6 0.3z"/>
<path fill="#cb2e25" stroke="#2b2422" stroke-width="0.3" stroke-opacity="0.85" d="M462.1 332.3l1 2.2l-0.2 0.5l-1.8 0.1l-0.7 -0.8l0.6 -1.4zM462.2 332.2l1.9 0l0.7 1l-0.3 0.6l-1.4 0.7l-1 -2.2z"/>
<path fill="#cb2e25" stroke="#2b2422" stroke-width="0.3" stroke-opacity="0.6" d="M440.5 334.3l-0.6 0.3l-0.7 2.6l0.5 0.8l2 0.5l0.1 -2.7z"/>
<path fill="#d0ae9f" stroke="#2b2422" stroke-width="0.3" stroke-opacity="0.85" d="M456.7 323.5l0.2 0l0.3 -0.5l0.1 -2.7l-2.6 1.1l0.3 1.3zM459.4 341.4l0.3 -2.2l-1.8 -0.8l-0.2 0.1l-0.3 2l1.1 0.8zM475 345.6l0.5 -2.1l-1 -0.8l-1.8 1l0.6 1.6l1.1 0.3zM484.5 336.1l-0.5 0.1l-0.5 1.5l0.7 1l2.4 -0.9l0.2 -0.3l-0.7 -1.1z"/>
<path fill="#d2856d" stroke="#2b2422" stroke-width="0.3" stroke-opacity="0.85" d="M457.7 333.4l0.9 1.2l-0.5 1.3l-2.9 0l1.2 -2.2zM464.9 323.9l1.9 0.7l-0.3 0.9l-2.2 -1z"/>
<path fill="#d2c9c5" stroke="#2b2422" stroke-width="0.3" stroke-opacity="0.85" d="M449.7 315.1l2.5 0.6l0.1 -0.1l1.3 -1.8l-0.6 -0.4l-3.4 0.5l0 0.4zM454.3 325.3l0.3 1.4l3.3 -1.2l-1 -2l-0.2 0zM456.6 330.4l1 0.9l0.1 0.3l-2.6 1l0.7 -2.5zM458.1 335.9l0.4 1.2l-0.6 1.3l-0.2 0.1l-1.1 -0.3l-1.5 -2.3l0.1 0zM457.7 343.1l-1.5 1.2l-1.2 -1.3l0.9 -1.9l1.5 -0.6l1.1 0.8zM458.5 337.1l2 0l0.4 1.8l-1.2 0.3l-1.8 -0.8zM459.4 343.5l-1.7 -0.4l-1.5 1.2l1.3 3.6l1 0.8l1.4 -3.4zM464.5 318.3l-0.3 1.5l-1.9 1.3l-0.6 -3.3l0.4 -0.2l2.4 0.7zM464 336.7l0.6 0.2l-0.3 2l-0.7 0.8l-1.6 0l-0.2 -0.2l0.7 -2.4zM470.7 339l0.6 0.2l0.6 1.9l-0.5 0.9l-0.7 0l-1.7 -1.4l1.5 -1.5zM476.6 334.6l-1.9 -0.9l-0.9 1.2l-0.1 1.3l2.6 0.8l0.4 -0.4zM478.1 346.2l-0.2 0.1l-2 0l-0.9 -0.7l0.5 -2.1l1.6 -0.5l1.3 0.7l-0.2 2.5zM480.8 335.6l-0.3 1.4l-1.7 0l-0.4 -2.6l1.1 0.2l1.2 0.8z"/>
<path fill="#d72e26" stroke="#2b2422" stroke-width="0.3" stroke-opacity="0.85" d="M458.3 311.1l0.5 0.8l-0.2 2l-1.2 0.7l-2.1 -1.1l0.6 -1.8l1.9 -0.8zM472.7 348.6l-2.7 2.1l-0.2 -0.1l0.4 -2.3l1.4 -0.7z"/>
<path fill="#d72e26" stroke="#2b2422" stroke-width="0.3" stroke-opacity="0.6" d="M442 332.7l2.6 2l0.3 1.2l-0.4 0.4l-2.7 -0.5l-1.3 -1.5l0.1 -0.4l0.6 -0.6zM446.4 332.8l1 0.3l0.2 0.8l-0.9 1.6l-1.3 0.5l-0.5 -0.1l-0.3 -1.2l0.8 -1.4zM444.9 335.9l0.5 0.1l1.3 2.1l-0.9 1.3l-1.1 -0.5l-0.5 -0.8l0.3 -1.8zM447.5 340.6l1.3 -1l0.6 -1.7l0 -0.3l-0.7 -0.2l-2 0.7l-0.9 1.3l0.1 0.1z"/>
<path fill="#d76143" stroke="#2b2422" stroke-width="0.3" stroke-opacity="0.85" d="M458.1 327.7l0.4 0.7l-1.9 2l-0.8 -0.3l-0.7 -0.7l-0.1 -0.4z"/>
<path fill="#dfbaab" stroke="#2b2422" stroke-width="0.3" stroke-opacity="0.85" d="M463.1 325.3l-1.2 3.4l-1.5 -2.6l2.7 -0.9zM462.8 343.4l1 -0.1l0.6 0.5l1.5 3.6l-0.2 0.5l-1.4 1.7zM463.1 325.3l1.8 1.8l1.1 -0.1l0.4 -0.3l0.1 -1.2l-2.2 -1l-1.2 0.7l0 0zM464.4 343.8l1.8 0.1l0.4 2l-0.7 1.5zM471.4 334.3l-2.2 0.4l0.7 1.7l0.6 0.2l0.8 -0.1l0.9 -1.5zM470.5 336.6l0.2 2.4l-0.2 0.1l-2.2 -0.9l0 -0.4l1.6 -1.4zM471.5 346.8l0.1 0.8l-1.4 0.7l-1.9 -0.7l1.3 -1.3l1.1 -0.3zM474.4 345.6l-1.3 3.2l-0.4 -0.2l-1.1 -1l-0.1 -0.8l1.8 -1.5zM480.7 337.6l-1.6 2.1l-1 -0.4l-0.2 -2.1l0.9 -0.2l1.7 0zM483 346.6l1.2 2.4l-3.4 -1.7l-0.4 -0.9l0 -0.1z"/>
<path fill="#e08f75" stroke="#2b2422" stroke-width="0.3" stroke-opacity="0.85" d="M462.5 323.8l0.2 -1.3l-0.6 -1.1l-1.1 -0.1l-1.1 0.6l-0.2 0.4l0.3 1.3zM461.1 335.1l1.8 -0.1l1.1 1.7l-1.5 0.4l-1.5 -0.5zM478.7 347.5l-0.6 2.6l0.6 0.4l0.9 -0.4l0.6 -0.4l0 -0.1zM479.6 350.1l1.8 3.9l0 0.2l-2.6 -1.5l-0.5 -0.6l0.4 -1.6zM486.6 337.8l-2.4 0.9l0 1.3l1 1.1l0 -0.1l1.5 -0.8z"/>
<path fill="#e1d7d3" stroke="#2b2422" stroke-width="0.3" stroke-opacity="0.85" d="M455.6 305.3l-1 -1.2l-1.1 0.8l1.4 1.9l0.9 -0.3zM455.8 306.5l-0.9 0.3l-1.3 0.9l0.3 0.8l0.4 0.2l3.1 -1.1l0.1 -0.2zM453.1 310.4l-0.9 0.4l0 0l0.8 2.6l0.6 0.4l0.9 0.1l0.8 -0.4l0.6 -1.8l-0.5 -0.6zM453.6 313.8l-1.3 1.8l2.3 1.1l0.1 -0.2l-0.2 -2.6zM452.2 315.7l0.1 -0.1l2.3 1.1l-0.4 1l-0.7 0.3l-1.3 -0.1zM456.2 318.8l-2 -1.1l-0.7 0.3l0.6 2.6zM454.3 325.3l2.4 -1.8l-1.7 -0.8l-1.6 1.4zM456.2 318.8l-2 -1.1l0.4 -1l0.1 -0.2l2.9 0.1l0.2 0.3l-0.6 2.1zM454.7 321.4l2.6 -1.1l0.3 -0.4l-0.4 -0.9l-1 -0.2l-2.1 1.8l0 0.3zM454.6 326.7l-0.5 1.1l0.9 1.2l3.1 -1.3l0.1 -2l-0.3 -0.2zM457.5 307.4l-0.1 0.2l0 0.5l0.4 2.8l0.5 0.2l2.5 -1.8l-0.5 -2.5l-0.2 -0.2l-0.9 -0.1zM458.1 327.7l0.4 0.7l0.9 0.7l0.5 0.1l0.5 -3.1l-1.4 -0.6l-0.8 0.2zM459.8 341.6l-0.4 -0.2l-0.9 -0.1l-0.8 1.8l1.7 0.4zM463.1 325.2l0 0l-0.6 -1.4l-2.5 -0.2l-1 1.9l1.4 0.6l0 0zM461.9 328.7l0 0.2l-0.1 0.5l-1.3 0.1l-0.6 -0.3l0.5 -3.1l0 0zM461 336.6l-0.5 0.5l0.4 1.8l0.9 0.6l0.7 -2.4zM459.8 341.6l-0.4 1.9l0.5 1.8l2.5 -2l-1.3 -1.8zM462.4 343.3l0.3 0l0.1 0.1l1.5 6.2l-0.2 0.4l-2 1.9l-2.7 -1.5l-0.9 -1.7l1.4 -3.4zM463.1 325.3l1.8 1.8l-0.1 0.3l-2.9 1.5l0 -0.2zM461.8 329.5l2.8 0.4l0.4 0.5l-0.9 1.8l-1.9 0zM462.9 335l0.2 -0.5l1.4 -0.7l0.8 2.6l0 0.1l0 0.1l-0.7 0.3l-0.6 -0.2zM461.1 341.5l0.9 -1.8l1.6 0l0.2 0.6l-1.1 3l-0.3 0zM467.4 339.4l-0.1 0.7l-3 -1.2l0.3 -2l0.7 -0.3zM465.5 341.9l1.1 -0.1l0.3 -0.1l0.5 -1.1l-0.1 -0.5l-3 -1.2l-0.7 0.8l0.2 0.6zM463.8 343.3l1.7 -1.4l1.1 -0.1l-0.4 2.1l-1.8 -0.1zM470.7 342l-2.1 1.3l-1.7 -1.6l0.5 -1.1l1.6 0zM470.7 346l-1.1 0.3l-1.5 -1.4l0.6 -0.8l1.8 0.6zM474.5 342.7l0 -1.7l-0.3 -0.4l-2.3 0.5l-0.5 0.9l0.4 1.2l0.9 0.5zM474.4 350.2l-0.2 1.2l-2.4 1.8l-1.8 -2.5l2.7 -2.1l0.4 0.2l1.3 1.3zM475.7 359.2l0.3 0l0.6 -3.9l-3.7 0.2zM478.8 337l-0.4 -2.6l-0.9 -0.2l-0.9 0.4l0.1 2l1.2 0.6zM476 359.2l0.8 0.5l2.3 -1.8l-1.4 -2.5l-0.7 -0.2l-0.4 0.1l0 0zM479.2 340l-0.1 -0.3l1.6 -2.1l0.8 0.6l0.5 2l-0.2 0.2l-1.7 0.2zM480.2 343l1.3 0.3l0.4 0.6l-1.5 2.4l0 0.1l-2.2 -0.2l0.2 -2.5l0.4 -0.3zM478.1 346.2l0.6 1.3l1.5 2.1l0.6 -2.3l-0.4 -0.9l-2.2 -0.2zM480.2 343l1.3 0.3l0.5 -1.2l-0.2 -1.7l-1.7 0.2zM480.8 347.3l3.4 1.7l0.3 0.3l-1.6 0.9l-2.7 -0.5l0 -0.1zM485.2 343.9l0 -2.3l-3.2 0.5l-0.5 1.2l0.4 0.6l1.2 0.5zM486.1 343.7l0.5 -0.5l-0.1 -0.6l-1 1.2z"/>
<path fill="#e46747" stroke="#2b2422" stroke-width="0.3" stroke-opacity="0.85" d="M478.1 350.1l0.6 0.4l-0.4 1.6l-2.5 0.4l-1.6 -1.1l0.2 -1.2l2.4 -0.7z"/>
<path fill="#ee997e" stroke="#2b2422" stroke-width="0.3" stroke-opacity="0.85" d="M467.8 333.9l0.4 0.5l-1.5 1.7l-1.4 0.4l0 -0.1l0.8 -3.2l0.5 -0.1zM467.8 330.2l2 -2.5l-0.8 -0.7l-2.6 -0.3l-0.4 0.3l1 3.2zM468.3 337.8l-1.6 -1.7l-1.4 0.4l0 0.1l2.1 2.8l0.9 -1.2zM471.4 334.3l-2.2 0.4l-0.4 -0.3l1.4 -2.6l1.6 0.8zM478.6 340.9l-1.9 0.4l-0.3 -0.3l0.5 -1.4l1.2 -0.3l1 0.4l0.1 0.3zM477.9 346.3l-2 0l-1.5 3.8l0 0.1l2.4 -0.7z"/>
<path fill="#eec7b6" stroke="#2b2422" stroke-width="0.3" stroke-opacity="0.85" d="M454.3 308.7l-0.4 -0.2l-0.8 1.9l2.3 0.7l-0.1 -1.5zM461.8 310.4l-0.7 1.8l-2.3 -0.3l-0.5 -0.8l2.5 -1.8zM463.1 325.2l1.2 -0.7l0.6 -0.6l0.5 -1.8l-2.7 0.4l-0.2 1.3zM464.3 349.6l1.4 -1.7l2.6 -0.3l1.9 0.7l-0.4 2.3l-5.7 -0.6zM474.4 332.8l0.3 0.9l-0.9 1.2l-1.6 0.1l-0.8 -0.7l0.4 -1.7l1.8 -0.2zM475 345.6l0.9 0.7l-1.5 3.8l-1.3 -1.3l1.3 -3.2zM480.2 343l-0.1 -2.4l-0.9 -0.6l-0.6 0.9l0.2 2.5z"/>
<path fill="#f0e6e1" stroke="#2b2422" stroke-width="0.3" stroke-opacity="0.85" d="M454.1 320.9l0 -0.3l-0.6 -2.6l-1.3 -0.1l-1.3 0.6l-0.2 0.8l0.4 1.4l1.5 0.5zM453.4 324.1l-0.5 -0.1l-0.2 -0.1l-0.1 -2.7l1.5 -0.3l0.6 0.5l0.3 1.3zM455.6 305.3l-1 -1.2l0.4 -1.9l1.1 -0.5l0.7 0l0.9 0.7l0.2 1.3zM455.6 305.3l2.3 -1.6l1.3 2.8l-1.7 0.9l-1.7 -0.9zM457.4 307.6l-3.1 1.1l1 0.9l2.1 -1.5zM457.4 308.1l0.4 2.8l-1.9 0.8l-0.5 -0.6l-0.1 -1.5zM455.3 313.5l2.1 1.1l0.2 2l-2.9 -0.1l-0.2 -2.6zM457.7 331.6l-2.6 1l0 0.1l1.3 1l1.3 -0.3l0.3 -1.5zM456.6 338.2l-2.1 1l1.4 1.9l1.5 -0.6l0.3 -2zM461.1 312.2l-2.3 -0.3l-0.2 2l1.8 0.7l0.4 -0.1l0.8 -1.1zM458.6 313.9l-1.2 0.7l0.2 2l0.2 0.3l1.6 -0.1l1 -2.2zM457.9 319.9l2 2l1.1 -0.6l-0.6 -2.3zM457.3 320.3l-0.1 2.7l2.5 -0.7l0.2 -0.4l-2 -2l-0.3 0zM457.9 325.5l0.3 0.2l0.8 -0.2l1 -1.9l-0.3 -1.3l-2.5 0.7l-0.3 0.5zM458.5 328.4l0.9 0.7l-1.8 2.2l-1 -0.9zM462.1 317.6l0.1 -1l-1.4 -2.1l-0.4 0.1l-1 2.2l1.6 1.2l0.7 -0.2zM460.4 319l0.6 -1l0.7 -0.2l0.6 3.3l-0.2 0.3l-1.1 -0.1zM460.5 329.5l1.3 -0.1l0 0.1l0.4 2.7l-0.1 0.1l-1.1 0.6l-1.5 -1.2zM459.8 341.6l-0.4 -0.2l0.3 -2.2l1.2 -0.3l0.9 0.6l0.2 0.2l-0.9 1.8zM462.1 321.4l0.2 -0.3l1.9 -1.3l1.3 2.2l-0.1 0.1l-2.7 0.4zM464.8 327.4l-0.2 2.5l-2.8 -0.4l0 -0.1l0.1 -0.5zM462.8 343.4l1 -0.1l1.7 -1.4l-1.7 -1.6l-1.1 3zM464.9 327.1l1.1 -0.1l1 3.2l-0.2 0.2l-1.8 0l-0.4 -0.5l0.2 -2.5zM466.8 330.4l-1.8 0l-0.9 1.8l0.7 1l1.3 0l0.5 -0.1zM464.8 333.2l-0.3 0.6l0.8 2.6l0.8 -3.2zM468.4 330.7l-0.6 3.2l-1.2 -0.8l0.2 -2.7l0.2 -0.2l0.8 0zM468.4 330.7l1.8 1.1l0 0l-1.4 2.6l-0.6 0l-0.4 -0.5zM469.9 336.4l-0.7 -1.7l-0.4 -0.3l-0.6 0l-1.5 1.7l1.6 1.7zM468.3 338.2l-0.9 1.2l-0.1 0.7l0.1 0.5l1.6 0l1.5 -1.5zM466.2 343.9l0.4 -2.1l0.3 -0.1l1.7 1.6l0.1 0.8l-0.6 0.8l-1.5 1zM471.8 343.2l-0.4 -1.2l-0.7 0l-2.1 1.3l0.1 0.8l1.8 0.6zM473.8 334.9l-1.6 0.1l-0.9 1.5l1.9 1.1l0.5 -1.4zM470.5 336.6l0.8 -0.1l1.9 1.1l0.1 0.4l-2 1.2l-0.6 -0.2zM474.2 340.6l-2.3 0.5l-0.6 -1.9l2 -1.2l1 0.7zM473.3 345.3l-1.8 1.5l-0.8 -0.8l-0.2 -1.3l1.3 -1.5l0.9 0.5zM476.3 337l-0.7 1.2l-1.3 0.5l-1 -0.7l-0.1 -0.4l0.5 -1.4zM476.4 341l-1.9 0l-0.3 -0.4l0.1 -1.9l1.3 -0.5l1.3 1.4zM472.9 355.5l3.7 -0.2l0 0l-0.8 -2.8l-1.6 -1.1l-2.4 1.8l-0.1 0.2l0.1 1.1l0.2 0.6zM478.1 339.3l-1.2 0.3l-1.3 -1.4l0.7 -1.2l0.4 -0.4l1.2 0.6zM478.8 343.4l-0.4 0.3l-1.3 -0.7l-0.4 -1.7l1.9 -0.4zM478.1 346.2l-0.2 0.1l-1.1 3.2l1.3 0.6l0.6 -2.6zM478.3 352.1l0.5 0.6l-1.8 2.5l-0.4 0.1l-0.8 -2.8zM477.7 355.4l3.8 -0.7l-0.1 -0.5l-2.6 -1.5l-1.8 2.5zM480.8 335.6l-0.3 1.4l0.2 0.6l0.8 0.6l2 -0.5l0.5 -1.5l-0.8 -0.5zM481.5 338.2l0.5 2l2.2 -0.2l0 -1.3l-0.7 -1zM483.1 344.4l-0.1 2.2l-2.6 -0.3l1.5 -2.4zM482 342.1l3.2 -0.5l0 -0.5l-1 -1.1l-2.2 0.2l-0.2 0.2z"/>
<path fill="#fdd4c2" stroke="#2b2422" stroke-width="0.3" stroke-opacity="1.0" d="M365.5 250.4l2.2 -0.6l0.1 -2l-1.5 -1.4l-1.6 0.5l-0.2 0.5l0 2.3l0.1 0.2zM366.6 254l1.4 0.6l1.1 -2.4l-0.7 -2.2l-0.7 -0.2l-2.2 0.6l1 3.5zM503.6 362.9l0.6 2l0.6 0.7l2.4 -0.8l-0.6 -2.3l-2.7 0.2z"/>
<path fill="#fdd4c2" stroke="#2b2422" stroke-width="0.3" stroke-opacity="0.85" d="M457.6 319.9l0.3 0l2.5 -0.9l0.6 -1l-1.6 -1.2l-1.6 0.1l-0.6 2.1z"/>
<path fill="#831e1c" stroke="#2b2422" stroke-width="0.32" stroke-opacity="0.75" d="M420.6 343.7l1 -0.7l1.6 2.2l-0.2 0.9l-3.3 -0.1l-0.1 -1.2z"/>
<path fill="#9a5c4a" stroke="#2b2422" stroke-width="0.32" stroke-opacity="0.75" d="M406.4 329.5l-1.8 2.5l3.1 0.2l0.3 -1.4l-1.4 -1.4z"/>
<path fill="#9c2c23" stroke="#2b2422" stroke-width="0.32" stroke-opacity="0.75" d="M421.3 300.9l-0.2 0.3l1.2 2.6l1.6 -0.3l0.1 -2l-1.6 -1.2l-1 0.4z"/>
<path fill="#a3887d" stroke="#2b2422" stroke-width="0.32" stroke-opacity="0.75" d="M392.8 327.9l0.9 1l0.1 2l-3.2 -0.6l-0.3 -0.4l1.5 -1.6zM409.3 321.2l-0.3 -0.1l-0.4 -3l1.5 -0.3l0.5 0.8zM447.5 357.3l-1.5 -3.5l0.7 -0.1l2.4 1.8l-0.3 1.4z"/>
<path fill="#a59d9a" stroke="#2b2422" stroke-width="0.32" stroke-opacity="0.75" d="M401.8 317.9l0.8 -0.4l0.1 -0.5l0 -0.3l-2.9 -2.5l-0.1 0l-0.8 0.2l-0.7 2.1l0.3 0.5zM404.3 332.9l0.1 0.3l2 1.3l1.5 -1.6l-0.2 -0.7l-3.1 -0.2l-0.3 0.2z"/>
<path fill="#a86753" stroke="#2b2422" stroke-width="0.32" stroke-opacity="0.75" d="M419.1 306.1l2.8 -0.5l0 -1.2l-3.1 -0.3l0.1 1.7zM421.4 300.7l1 -0.4l1.7 -1.7l-0.4 -0.8l-2.8 0.7zM430.1 317.8l0.4 0.3l0.9 1.5l-0.9 1.1l-1.5 0.1l-0.6 -1.7l0.8 -1l0.6 -0.4zM436.1 298.6l1.9 0.5l0.6 2.4l-0.3 0.4l-1.3 -0.1l-1.4 -1.4zM409.8 334.3l2.3 0.4l0.1 0.2l-1.1 3l-0.3 0.2l-0.7 0.1l-1.4 -1.1l-0.1 -0.9zM413.9 319.3l0 0.1l-2 -0.1l-1.3 -0.7l-0.5 -0.8l0.6 -1.4l0.1 0l2.2 0.6l1 1.4zM415.6 351.5l0.4 -0.2l0.9 -1.9l-0.2 -0.7l-2.7 -0.6l-0.8 3.2zM424.2 348.3l-2.3 1l-1.9 -0.5l0 -0.6l3.6 -0.8l0.7 0.6zM424.2 348.3l-2.3 1l0.2 1.8l0.5 0.7l1.5 -0.7zM436.3 349l0 0l-2.5 -2.2l-0.2 0l-0.1 3.4l0.3 0.2l2.1 -1zM434.9 334.5l1.6 1.9l0.3 0.1l1.3 -1.7l-1.8 -1.1l-1.4 0.8zM446 353.8l0 0l0.7 -0.1l1.5 -1l-0.2 -2.3l-0.1 -0.2l-2.5 2.1l0 1z"/>
<path fill="#a91418" stroke="#2b2422" stroke-width="0.32" stroke-opacity="0.75" d="M408.1 342.8l-1.5 0.5l-1 -2.4l1.1 -0.6l2.4 0.2l0.1 0.3z"/>
<path fill="#b05139" stroke="#2b2422" stroke-width="0.32" stroke-opacity="0.75" d="M469.9 227.1l0 -1l-1.4 -0.6l-1.6 2.7l0.7 0.7l0.7 0.4zM409.3 321.2l1.3 -2.6l1.3 0.7l-1.2 1.9l-1.3 0.2zM422.6 351.8l-0.8 1.2l-2 0.4l-0.6 -1.2l0.4 -2.4l2.5 1.3zM428.6 331.2l1 2.1l0.7 0l1.4 -0.3l0.2 -0.1l-0.6 -1.9l-1.2 -1.2zM433.9 333.9l-1.3 -1.1l-0.7 0.1l-0.2 0.1l0.1 2.5l0.2 0.5l0.8 0.6zM437.2 324.6l0 0.3l-0.7 1.8l-3.2 -0.9l-0.5 -1.1l1.7 -0.8z"/>
<path fill="#b29488" stroke="#2b2422" stroke-width="0.32" stroke-opacity="0.75" d="M375.9 341.4l-1.1 0l1.2 0.8zM417.4 299.8l0.2 0.3l2.2 1.4l1.3 -0.3l0.2 -0.3l-2.8 -2.5l-1.1 0.8l-0.1 0.2zM418.6 314.8l-0.8 0.3l-0.5 1.9l1.5 1.4l0.4 -0.1l1.1 -1.1l-1 -2.5l-0.3 -0.1zM427.4 303.8l0.3 1.4l-0.8 0.5l-1.7 -0.6l-0.4 -1.3l1.8 -1.1zM449.6 314.3l0 -0.4l-0.4 -0.6l-2.4 -0.5l-0.7 1.5l1.3 0.9zM449.1 284.9l2.4 -0.8l-0.1 -0.8l-1.6 -1.4l-0.3 0.9l-0.4 2.1zM383.9 326.9l2 1l0.3 0.4l-1.2 2.1l-1.3 -0.1l-0.7 -0.6zM390.4 324.9l2.9 1l-0.5 2l-1 0.4l-1.7 -1.9zM396.5 327.1l-1.3 -1.8l-1.2 0.2l-0.7 0.4l-0.5 2l0.9 1l2.2 -0.7zM397.3 331l-0.8 2.1l-0.9 0.1l-1.2 -0.1l-0.4 -0.3l-0.2 -0.2l0 -1.6l2.4 -0.7zM410 346.1l1 1.5l2.4 -0.7l-0.1 -1.3l-1.5 -0.7zM415.1 324l0.2 -1.2l0.8 -0.3l1.8 2.1l-0.5 0.3l-2.2 -0.7zM426.6 350.7l1.4 0.7l0 0l-1.4 2l-0.8 0.3l-1.4 -2.4zM426.6 330.8l-0.1 0l0.8 3.3l0.4 0.2l1.9 -1l-1 -2.1zM431.7 333l0.1 2.5l-1.8 0.3l0.3 -2.5zM431.6 372.2l1 -1.4l2.2 -0.4l0.3 0.5l-1.1 3.3l-1.6 -0.5zM439.8 353.4l-3.5 0.4l-0.2 -0.3l0.6 -1.4l1.7 -0.8l1.3 -0.1zM440.3 348.2l0.1 -1.5l1.9 -1.5l1.2 1.8l-1.2 1.4l-0.1 0.1zM446.7 353.7l1.5 -1l1.3 -0.2l0.5 0.5l0.6 2l-1.5 0.5z"/>
<path fill="#b4aca8" stroke="#2b2422" stroke-width="0.32" stroke-opacity="0.75" d="M377.7 318l-3.1 -0.8l-0.1 -0.2l0 -0.1l0.6 -0.7l2.1 -1.1l1.2 2.2zM454.7 343l0.3 0l0.9 -1.9l-1.4 -1.9l-0.7 -0.3l-0.3 1.4zM439.3 255.7l-2.4 1.5l-1 -1.4l0.1 -0.8l2.4 -0.9l0.9 1.3zM417.5 308.6l1.7 -0.8l-0.1 -1.7l-0.2 -0.3l-1.2 0.3l-0.4 2.3zM418.6 314.8l-1.7 -2.2l0 0l2 -0.3l0.1 2.3zM416.2 353.3l3.1 1.1l0.5 -1l-0.6 -1.2l-3.2 -0.9l-0.4 0.2zM419.1 338.3l2.2 0.6l1.9 -0.8l-0.2 -0.7l-1.7 -1.5l-0.3 -0.1l-0.5 0.3zM423.2 338.1l-1.9 0.8l0 2.1l2.9 -1.2l0.2 -0.5zM427.9 358.3l-0.2 -1.4l-2.5 -1.1l-0.9 1l1 2.1l2.2 0.1z"/>
<path fill="#b6715c" stroke="#2b2422" stroke-width="0.32" stroke-opacity="0.75" d="M380.8 344.5l-0.7 -1.4l-1.5 -0.7l-0.6 1l2.7 1.1zM449 231.4l1.1 -1.2l0.1 -1.3l-0.3 -0.4l-2 2.8zM417.5 308.6l-0.3 1.1l0 0l-3.9 -1.2l-0.2 -0.4l2.7 -1.1l1.5 1.4zM423.7 296.9l2.9 -1.2l0 -0.4l-2.3 -0.7l-0.9 0.7zM426.9 305.7l-0.5 2.4l-0.9 0.2l-0.4 0l-0.6 -1.6l0.7 -1.6zM442.3 288.3l0.1 0l1.1 1.8l-1.7 2l0 0l0 0l-0.7 -2.1zM441.9 292.2l0.1 3.1l0.5 0.3l1.5 -1.1l0.2 -1.5zM446.5 282.9l0.6 -1.4l2.4 -0.1l0.3 0.5l-0.3 0.9l-2.4 0.5zM447.2 316.8l-1.4 0.3l-0.6 1l2.8 0.5l0.2 -1.6zM450.1 310.6l-0.2 -0.4l-0.5 -1.2l2.7 -0.5l0.1 2.3l0 0zM380.2 325l0 0.7l1.8 1.1l1.5 -0.4l0.2 -0.6l-0.5 -1.6l-1.3 -0.2zM404.2 307l-0.2 2.2l3.2 -0.8l0 -0.2l-1 -1.9l-1.6 0.3zM407.3 314.2l-1.3 0.9l0.2 1.7l0.5 1.2l0.9 -0.2l1.5 -3.4l-0.1 -0.5zM409 321.1l-0.4 -3l-1 -0.3l-0.9 0.2l-1.1 1.8l0.3 0.4l2.1 0.9zM415.2 324.2l2.2 0.7l-1.1 1.6l-0.8 -0.2l0 0zM413.8 347.3l0.2 0.8l2.7 0.6l0.7 -1.7l-1 -0.8zM422.7 329.9l-0.5 2.1l0.9 0.9l1.8 -0.2l1.2 -1.9l-1.7 -0.7zM424.2 339.8l0 2.4l-2.6 0.7l-0.4 -1.7l0.1 -0.2zM425.2 343.9l-0.2 -1l-0.8 -0.7l-2.6 0.7l0 0.1l1.6 2.2zM426.1 330.8l0.4 0l0.8 3.3l-1.2 0.2l-1.2 -1.6zM430.5 343.6l-0.9 2.3l0.8 0.8l1.7 -0.1l0.6 -0.2l0.2 -2.7l-2.1 -0.3zM440.6 333.9l-2.8 -2.8l-0.3 -0.1l-0.9 0.4l-0.3 2.3l1.8 1.1l1.8 -0.2l0.6 -0.3zM442.5 343.5l-0.2 1.7l1.2 1.8l0.8 -0.1l1 -2l-0.5 -1.1zM442.3 348.4l2.9 1.3l0.9 -1.2l-1.8 -1.6l-0.8 0.1zM448.3 319.8l-0.8 0.7l-2.4 -2.3l0.1 -0.1l2.8 0.5zM447.3 322l0.2 -1.5l-2.4 -2.3l-1.2 0.5l-0.4 1.4l3.3 2.1l0.3 0z"/>
<path fill="#bd563c" stroke="#2b2422" stroke-width="0.32" stroke-opacity="0.75" d="M434.6 276l1.5 -2.6l2.5 2l-0.5 1.5l-0.7 0.3l-1.9 -0.5zM470.4 378.5l-2.8 -0.9l0 -0.4l7.2 -0.7l0.4 0.5l-0.1 0.5zM430.2 289.5l0.5 -2.2l0 0l2.6 -0.1l0.3 2.5l0 0.1l-3.2 -0.2zM432.6 319.8l-1.2 -0.2l-0.9 1.1l0.3 1.7l0.9 0.5zM432.8 308l0 1.8l0.7 0.9l1.6 -0.2l0.7 -2.1l-0.3 -0.3l-1.9 -0.6zM405.4 311.8l-0.8 -0.3l2.7 -2.8l1 1.4l0 1.2zM406.4 334.5l1.5 -1.6l1.5 0.7l0.4 0.7l-1.2 1.9l-2.2 -1.6zM412.4 332.7l-0.1 1.7l-0.2 0.3l-2.3 -0.4l-0.4 -0.7l0.4 -0.7zM450.1 322.4l1 -1.7l-0.4 -1.4l-2.4 0.5l-0.8 0.7l-0.2 1.5z"/>
<path fill="#bf2d25" stroke="#2b2422" stroke-width="0.32" stroke-opacity="0.75" d="M439.1 376.2l-1.6 -1.1l-0.3 -0.6l0.8 -2l2.4 0l1 2.1l-1.6 1.5z"/>
<path fill="#c1a194" stroke="#2b2422" stroke-width="0.32" stroke-opacity="0.75" d="M304.8 281.9l-1.8 -1.1l-1.1 1l0 0.1l1.4 1.2l1.5 -0.1zM312.1 298.9l-0.8 0.1l0.9 0.1zM347.3 293.8l1 1.3l0.6 -0.1l1.2 -0.5l1.4 -1.5l1.8 -2.7l1.1 -3.9l0 -0.4l-7.1 5.7zM373.6 248.5l0.3 0.7l1 -0.2l-0.2 -0.4l-1.1 -0.5zM381.6 321.4l-0.2 0.9l-2.3 1.4l-0.1 0l1.7 -2.9l0.9 0.6zM394.2 276.1l-2.2 -1.7l-0.4 0.5l1.1 1.9l1.4 -0.3zM404.7 352.4l0.2 0.4l-2.8 -0.5l-3.1 -1.1l1.6 -3.6l2.6 1.4zM404.4 294.5l1.2 -1.7l0.1 0l2.2 0.8l0.5 1.2l-0.2 0.2l-1.2 1.5l-2.4 -1.2zM421.5 265.2l-0.4 -3.5l-2.2 1.7l0.2 0.3zM421.5 265.2l2 3.2l1.7 -0.4l0.9 -2.3l-2.6 -4.5l-1.3 -0.3l-1.1 0.8zM442.8 385l-0.4 0l-0.9 1.1l0 0l1.4 0.7l0.5 -1.3zM455.2 222.5l0.3 -0.3l0.9 -1.2l-0.5 -0.2l-1 1.1l-0.5 0.7zM453.5 223.7l-1.7 2.4l1.6 0.8l0.8 -0.9zM471.4 360.3l-0.8 -3.4l1.2 -1.5l1.4 4.4l-1.4 1zM432.5 249.5l0.4 -0.9l-0.4 -0.7l-1.5 -0.9l0 0l-1.6 1.6l0 0l-0.2 0.7zM434.2 251.9l0.2 -0.1l2.5 0.2l-1 2.8l-1.8 -1.4zM441.7 251.8l2.2 -0.5l1 1.7l-0.1 1.4l-0.2 0.1l-1.8 -0.1l-1.1 -1l-0.2 -1.3zM444.6 254.5l-0.1 2.2l-2.6 0.5l0.9 -2.8zM445.7 244.9l-0.4 -2.1l-0.3 -0.1l-1.4 0.7l0.4 1.5l1.4 0.4zM446.2 257.3l-0.4 0.5l-1.2 -1l-0.1 -0.1l0.1 -2.2l0.2 -0.1l1.4 0.2zM451.4 237.7l-0.8 -0.1l-0.8 0.5l-0.3 2.1l2.6 -0.1l0.1 -0.3zM453.4 235.4l1.5 -2.6l-3.2 -0.3l-0.9 0.9l0.1 1.1l2.1 1.1zM464.5 249.6l-7.6 -1.6l0 -0.1l0.6 -1l3.4 -0.2zM462.9 220.1l1.6 0.4l0.5 -1.5l-1.3 -0.6l-1.4 1.3l0.1 0.2zM465 222l-0.5 -1.5l0.5 -1.5l1.4 -0.5l0.5 0.3l0.2 2.2l0 0l-1.4 0.9zM465.3 227.6l0.5 -2.5l1.8 -0.5l0.3 0l0.6 0.9l-1.6 2.7l-0.1 0zM470.6 227.9l-1.3 2.6l-0.2 -0.1l-0.8 -1.1l1.6 -2.2zM424.7 298.8l0.5 1.9l-1.2 0.8l-1.6 -1.2l1.7 -1.7zM421.4 308.1l0.5 -2.4l2.6 1l0.6 1.6l-0.4 0.3l-2.4 0.5zM429.1 285.1l-2.4 -0.2l-0.1 -0.7l1.7 -2.3zM428.4 290.1l-1.2 -0.7l-0.1 0l-1.6 2.4l0.1 0.3l2.4 -0.2l0.2 -0.2zM429.1 312.3l-1.4 -1l-0.5 0.3l-0.1 0.2l0.9 1.8zM431.4 283.6l-0.3 0.5l2.3 1.4l0.2 -0.2l0.1 -2.8l-0.2 -0.4l-0.7 0zM433.5 301.8l0.1 0.7l1.2 0.7l2.2 -1.4l-1.4 -1.4zM436.5 312l-2.8 1.1l-0.5 -0.7l0.3 -1.7l1.6 -0.2l1.2 0.9zM434.9 305.3l1.2 0.9l1.8 -0.5l-0.1 -1.3l-2.7 -0.5zM438 305.8l0.1 1.3l-1.1 1.4l-1.2 -0.1l-0.3 -0.3l0.6 -1.9l1.8 -0.5zM439.6 296.2l0.2 1.5l-0.2 0.2l-0.5 0.3l-1.8 -1.7l0.6 -0.6zM438.4 303.4l2.4 0.8l-0.5 1.7l-2.3 -0.1l-0.1 -0.1l-0.1 -1.3zM441.8 303.6l0.6 0l0.9 -0.8l-0.1 -1.5l-0.4 -0.5l-1.4 -0.5l-0.2 0l-1.1 1zM445.5 283.5l-0.4 -0.1l-1 -2.1l1.9 -1.8l0.6 0.5l0.5 1.5l-0.6 1.4zM449.1 284.9l0.4 -2.1l-2.4 0.5zM387 324.4l-0.3 0.4l-3 1l-0.5 -1.6l0.7 -0.9l0.8 0zM385.1 319.7l-1.1 -1.5l1.9 -1.8l1.5 1.6l-0.2 0.8zM387.1 324.3l0.7 0.4l0.3 3.7l-1.9 -0.1l-0.3 -0.4l0.8 -3.1l0.3 -0.4zM390.1 326.4l-1.7 2.1l0.7 1l1.2 0.4l1.5 -1.6zM390 321.6l0.7 1.6l2 -0.4l0.9 -1.2l-0.1 -0.1l-2 -1.9l-0.5 0.1l-0.6 0.7zM399.8 314.2l-0.1 0l1.1 -3.4l1.5 1.5l-1.1 1.4zM398.5 328l2.4 0.2l-0.3 2.3l-2.3 -1zM399.8 340.9l-0.1 0l-2 -1.7l0.9 -2.5l0 0l2.4 1.7zM404.3 332.9l-3.7 0.3l-0.3 -1l0.6 -0.8l2.1 -0.4l1.3 1.2zM405.9 303.5l-2.1 -0.7l-1.1 1.6l1.9 2.2l1.6 -0.3l0.4 -1l0.1 -1.1zM405.4 311.8l-0.8 -0.3l-0.2 0l-0.5 0.7l0.3 2.4l1.8 0.5l1.3 -0.9zM406.4 329.5l-2.8 -1.2l0.4 -1.7l1.8 0l1.3 1.8l-0.5 1zM405.6 337.2l1.5 0.5l1.6 -0.6l-0.1 -0.9l-2.2 -1.6l-0.8 1.5zM408 346.1l1 -0.3l1 0.3l1 1.5l-1.9 5.6l-1.2 -7.1zM416 333.7l0.1 1.3l-1.7 1l-2.2 -1.1l-0.1 -0.2l0.2 -0.3l3.3 -1zM417.7 338.4l-0.7 0.5l-2.5 -0.9l-0.1 -2l1.7 -1l1.1 0.8zM413.3 345.6l0.1 1.3l0.4 0.4l2.6 -1.1l-0.2 -1.7l-1.5 -0.9zM415.5 355l0.7 -1.7l-0.6 -1.8l-2.4 -0.2l-4.1 2.2l-0.6 0.9zM419.6 344.8l0.1 1.2l-0.2 0.6l-2.1 0.4l-1 -0.8l-0.2 -1.7l1.8 -0.6zM422.5 353.8l-0.1 2.6l-3 0.2l-0.4 -1.1l0.3 -1.1l0.5 -1l2 -0.4zM424.3 356.8l1 2.1l-1.2 1.5l-0.3 -0.1l-1.3 -1.5l0.9 -1.8zM424.3 348l-0.7 -0.6l-0.6 -1.3l0.2 -0.9l2 -1.3l1.2 0.9l-1.2 3zM427.7 360.3l-0.2 -1.3l0.4 -0.7l3 0l-0.3 2.3l-1.6 0.2zM431.1 368.4l1.9 -0.5l2 1.2l-0.2 1.3l-2.2 0.4zM436.5 327.3l1.1 1l-0.1 2.7l-0.9 0.4l-1.9 -0.6l-0.4 -1.3l0.4 -0.8zM439.7 348.6l-2.2 -0.5l-1.2 0.9l0 0l2.1 2.3l1.3 -0.1l0.1 -0.2zM438 378.9l-1 0.7l0 0.6l0.6 2l2.7 -1l-1.1 -2.1zM442.1 343l0.4 0.5l-0.2 1.7l-1.9 1.5l-0.9 -1.3l1.1 -1.8zM446 353.8l-0.9 2.1l-2.2 0.7l-0.1 -0.1l-0.5 -2.5l0.7 -0.6l2.4 -0.1zM448.8 327.8l2.8 0.5l-0.3 2.3l-0.2 0.2l-2.3 0.6l-0.6 -1zM450.7 346.3l-0.2 0l-2 -1.3l0.1 -1.9l1.2 -0.5l2.6 1.7l-0.3 1.2zM449.3 348.9l-1.2 0.1l-0.2 1.2l0.1 0.2l1.8 1.3l1 -1.6zM452.7 323.9l-2.3 -0.7l-0.3 -0.8l1 -1.7l1.5 0.5zM449.4 337.6l1.4 -2l0 0l2.7 0.6l0.1 2.5l-2.1 0.8l-2.1 -1.6zM453.5 340.3l0.3 -1.4l-0.2 -0.2l-2.1 0.8l-0.2 1.6l0.9 0.5zM453.6 343.2l-1.2 1.1l-2.6 -1.7l0.8 -1.2l0.7 -0.3l0.9 0.5z"/>
<path fill="#c3bab6" stroke="#2b2422" stroke-width="0.32" stroke-opacity="0.75" d="M371.9 339l-0.4 0.2l2 1.4l-0.1 -1.1l-0.3 -0.2zM466.9 355.9l-3 -2.5l7.8 0l0.1 1.1zM439.3 255.7l2 2.1l0 0.8l-2.9 0.6l-1.6 -0.9l0.1 -1.1zM442.1 247.3l-0.2 1.4l-2.5 -0.1l-0.4 -1l0.7 -1.3l1.9 -0.1zM450.8 233.4l0.1 1.1l-0.7 0.9l-2.1 -0.8l-0.4 -0.7l2.5 -0.8zM454.4 222.6l-0.9 1.1l0.7 2.3l0.5 -0.2l1 -0.9l-0.5 -2.4zM454.3 244.7l1.3 -0.8l1 0.7l-1.3 1.7l-1 0l-0.1 -1zM463.8 222.6l0.6 0l0.6 -0.6l-0.5 -1.5l-1.6 -0.4zM417.1 309.7l0.1 0l-3.9 -1.2l0.1 1.6l1.6 1.3zM415.3 286.3l2.5 1l0.1 0.1l-0.3 1.5l-1.6 1.2l-1.9 -2.6zM416.9 312.6l-1.8 0.8l-0.2 -0.2l0.1 -1.8l2.1 -1.7l-0.2 2.9zM438.7 293.6l-0.7 -1l0.2 -1.3l0.4 -0.2l3.2 1l0 0l-2.3 1.9zM438.7 293.6l-1 1.3l0.2 1l1.7 0.3l0.5 -1l-0.6 -1.2zM438.4 303.4l2.4 0.8l1 -0.6l-1.7 -2.3l-1.5 0.2l-0.3 0.4zM444.6 312.2l1.9 0.3l0.3 0.3l-0.7 1.5l-0.8 0.9l-1.1 -0.5l-0.9 -1.9zM400.8 325l0.1 -2l0.4 -0.4l1.6 -0.2l1.6 1.6l-0.9 1.6l-2.6 -0.4zM403 331l0.4 -2.5l-2.5 -0.3l0 0l-0.3 2.3l0.3 0.9zM404 344.8l-0.7 -0.5l-2.7 1.3l-0.7 0.7l0.2 0.7l0.5 0.6l2.6 1.4l1.2 -2.7zM416.6 333.2l2.4 -0.7l-0.4 -1.2l-1.4 -1.1l-0.8 0.6zM429.5 336l-1.8 -1.7l0 0l1.9 -1l0.7 0l-0.3 2.5l-0.2 0.2zM443 353.4l-0.8 -2.3l-2.4 -0.1l-0.1 0.2l0.1 2.2l0.6 0.7l1.9 -0.1zM445.7 330l2.5 0.4l0.6 -2.6l0 0l-2.7 0.4zM448.7 331.7l2.3 2.3l-0.2 1.6l0 0l-3.2 -1.7l-0.2 -0.8z"/>
<path fill="#c47b64" stroke="#2b2422" stroke-width="0.32" stroke-opacity="0.75" d="M375.9 341.4l0.1 0.8l1.3 0.9l0.7 0.3l0.6 -1l-0.1 -0.7l-0.7 -0.7l-1.1 0l-0.6 0.2zM380.2 325l1.7 -1l-0.5 -1.7l-2.3 1.4zM402.9 277.1l-0.8 0.4l0.5 0.2l0.5 -0.1zM407.7 290.6l0.4 -2.4l0.4 0.1l2 2.4l-0.5 0.8l-0.2 0.1l-0.7 0.3zM407.7 290.6l1.4 1.3l-1.2 1.7l-2.2 -0.8l0.9 -1.9zM419.5 270.8l2.3 -0.8l1.7 -1.6l-2 -3.2l-2.4 -1.5l-0.7 0l-2.5 2zM430.2 258.3l0.9 -0.8l0 -0.4l-2.2 -1.9l-1 0l-0.2 0.9l0.2 2.1zM440.3 381.2l-2.7 1l-0.1 0.9l1.7 0.9l2.4 -0.9l0.3 -1.4l-0.8 -0.4zM452.6 351.2l-1 1.5l-1.6 0.3l-0.5 -0.5l0.3 -0.8l1 -1.6l0.8 0.1zM448.9 357.1l-0.1 -0.2l0.3 -1.4l1.5 -0.5l1 0.4l0.5 0.8l-0.5 1.4zM454.7 343l-1.2 -2.7l-1.3 1.3l1.4 1.6zM459.7 260.8l-5.3 0.3l-0.2 -1l1.2 -1.1l2.8 0.6l1.8 1zM460 260.6l15.8 -3.7l0.1 -0.4l-0.2 -1.5l-4.4 -1.2l-7.7 -0.3l-6.6 1.7l-0.5 0.9l1.7 3.5zM463.4 360.2l-2.1 2.4l1.1 2l6 0.5l-0.9 -1.9zM462.2 365l0.2 -0.4l6 0.5l1.9 1.6l0.3 0.6l0.2 1.3l-0.6 1.1l-1.9 1.6l-4.2 -1.3zM470.4 378.5l-2.8 -0.9l-1.5 2.9l0.2 0.9l4.1 1.5l0.9 -0.5l1.3 -1.8zM524.8 379.6l0.2 0.4l1.4 -0.9l-0.7 -1l-0.5 0.1l-0.3 0.3l-0.4 0.6zM443 249l1.4 1.6l1.4 -0.6l-0.8 -2.5l-0.2 0zM446.7 251.5l-1.8 1.5l-1 -1.7l0.5 -0.7l1.4 -0.6l0.9 0.4zM445.7 244.9l-0.4 -2.1l2.7 -0.5l0.5 0.1l0.3 1.9l-0.3 0.4zM456.9 248l-0.4 0.6l-2.2 0l-0.9 -1.4l0.9 -0.9l1 0l1.6 1.6zM464.5 249.6l6.8 4.2l-7.7 -0.3l-0.1 -0.1l-6.7 -3.2l-0.3 -1.6l0.4 -0.6zM469.3 230.5l0.8 0.4l0.1 0.4l-2.3 3.2l-1.1 -1l0.1 -1.2l2.2 -1.9zM470.2 231.3l-2.3 3.2l1 1.8l1.1 1.4l1.1 -4.9zM418.6 314.8l-0.8 0.3l-2.3 -0.8l-0.4 -0.9l1.8 -0.8zM417.5 308.6l-0.3 1.1l1.9 1.5l0.1 0l1.2 -3.1l-1.2 -0.3zM419.3 292.8l2.5 0.8l0.1 0.9l-0.8 0.9l-1 0l-1.2 -1.4zM421.3 300.9l-2.8 -2.5l0.6 -0.7l1.2 0.2l0.6 0.6l0.5 2.2zM419.3 314.7l2.7 -0.7l0.8 1l-0.2 2.5l-2.3 -0.3zM424.5 280.7l2.1 1l-1 1.5l-1.3 -0.1l-0.5 -1.2l0.1 -0.9zM423.7 296.9l2.9 -1.2l0.6 1.4l-0.4 1.1l-2.1 0.6l-0.6 -0.2l-0.4 -0.8l-0.1 -0.5zM428.3 281.9l0.1 -0.7l-1.8 0.5l-1 1.5l1 1zM429.1 308l-0.7 0.6l0.2 1.1l1.9 1.2l0.7 -0.6l-0.8 -2.1zM428.9 315.4l-0.8 -0.2l-0.1 -1.6l1.1 -1.3l1.5 0.2l0.1 0.2l-0.3 1.6zM430.5 280.6l0.9 3l1.4 -1.5l-1.8 -1.5zM433.7 296.4l-2.5 1.3l-0.2 0.3l0.1 0.7l1.4 0.7l1.6 -2.7zM430.5 310.9l0.1 1.6l0.1 0.2l2.5 -0.3l0.3 -1.7l-0.7 -0.9l-1.6 0.5zM434.8 303.2l0.3 0.7l2.7 0.5l0.6 -1l-0.1 -1.5l-1.3 -0.1zM439.1 310.3l-0.8 1.7l-0.9 0.5l-0.8 -0.4l-0.1 -0.1l-0.2 -0.6l1.4 -1.9l1.2 0.4zM441.1 306.9l-0.4 1.2l-0.8 0.2l-1.8 -1.2l-0.1 -1.3l2.3 0.1zM440.7 287.2l-1 1l-0.1 1.5l1.5 0.3l1.2 -1.7zM443.6 298.8l-1.2 -1.2l-1 2.7l1.4 0.5zM449.4 309l2.7 -0.5l1 -1l-1.5 -1.7l-1.3 0.5l-0.3 0.3l-0.8 1.8l0.2 0.4zM449.2 313.3l0.9 -2.7l2.1 0.2l0.8 2.6l-3.4 0.5zM387.8 324.7l0.3 3.7l0.3 0.1l1.7 -2.1l0.3 -1.5l-0.1 -0.1zM392.7 322.8l1.3 2.7l1.2 -0.2l0.7 -1.2l-0.2 -1.4l-0.1 -0.3l-2 -0.8zM397.9 327.3l1.4 -2l-1.2 -1.2l-2.2 0l-0.7 1.2l1.3 1.8zM399.2 306.7l1.9 1.4l0.1 1l-0.7 0.9l-2.1 0.5l-0.9 -0.5l0.2 -3zM397.9 327.3l1.4 -2l1.5 -0.3l0.2 0.2l-0.1 3l0 0l-2.4 -0.2zM404.2 307l-2.3 0.3l0.1 -2.7l0.7 -0.2l1.9 2.2zM401.2 309.1l2.4 0.7l0.8 1.7l-0.5 0.7l-1.6 0.1l-1.5 -1.5l-0.3 -0.8zM408 346.1l1 -0.3l0.6 -1.9l-1.5 -1.1l-1.5 0.5l0 0.3zM408.6 318.1l-1 -0.3l1.5 -3.4l1.6 2l-0.6 1.4zM415.6 333.4l-3.3 1l0.1 -1.7l0.1 -0.6l1.7 -0.5zM414.5 338l-0.1 -2l-2.2 -1.1l-1.1 3l2.5 0.5zM413.9 319.3l2.4 0.4l0.6 -2.5l-1.7 -0.2l-1.2 1.4zM416.3 319.7l0.3 0.2l1.5 -0.4l0.7 -1.1l-1.5 -1.4l-0.4 0.2zM424.1 351.1l-1.5 0.7l-0.8 1.2l0.7 0.8l2.7 0.8l0.6 -0.9l-1.4 -2.4zM424.2 348.3l-0.1 2.8l0.3 0.2l2.2 -0.6l-0.5 -2.5l-0.9 -0.4l-0.9 0.2zM431.4 350.3l-1.8 -1.1l0.8 -2.5l1.7 -0.1l0 3.4zM429.3 364.1l0.1 -0.1l1.3 -0.2l1 1.7l-1.4 2.6l-1.1 -1.3zM434.8 321.8l-0.3 2.1l2.7 0.7l0.7 -2l-2.1 -1.2zM435.8 345.5l-2 1.3l2.5 2.2l1.2 -0.9l-0.4 -2.2zM435.9 349.4l-2.1 1l0.3 2.5l2 0.6l0.6 -1.4zM444.6 326.8l-1.7 -3.3l0 0l1.8 0l1.5 2.1l-1.2 1.2zM443.1 330.5l-0.6 -1.1l0.1 -1.1l2 -1.5l0.4 0l1.1 1.4l-0.4 1.8l-0.7 0.5zM445 330.5l0.7 -0.5l2.5 0.4l0.6 1l-0.1 0.3l-1.3 1.4l-1 -0.3zM445.2 349.7l-0.2 0.8l0.4 1.8l2.5 -2.1l0.2 -1.2l-1.3 -0.7l-0.7 0.2zM450.4 323.2l-0.7 1.6l-1.3 0.8l-0.7 -0.4l-0.6 -3l0.2 -0.2l2.8 0.4zM455.1 329.4l-1.9 2.1l0.3 1.1l0.5 0.4l1.1 -0.3l0 -0.1l0.7 -2.5z"/>
<path fill="#ca5c40" stroke="#2b2422" stroke-width="0.32" stroke-opacity="0.75" d="M428.3 276.5l2.3 -1.6l-0.1 -2.5l-1 -2l-2.1 -1.4l-0.3 -0.1l0.8 7.5zM476.9 360l-6.3 7.3l5.8 -3.3l0.1 -3l0.7 -0.6zM477.3 380.3l0 2.7l0.2 -0.1l0.4 -1.9zM446.2 254.6l-1.4 -0.2l0.1 -1.4l1.8 -1.5l0.1 0.2l0.7 2.5l-0.2 0.2zM452 242.3l-3.4 0l0.4 -1.7l0.5 -0.4l2.6 -0.1l0.4 0.6zM417.4 302.8l1.1 0.9l0 0.1l-2.4 1.4l-0.2 0.1l-1 -0.9l0 -1.7zM429.1 279.6l-2.5 -1.4l-1 1l2.9 1.8l0.2 -0.1l0.5 -0.5zM384.7 323.3l-0.8 0l-0.7 -1.8l1.8 -1.1l0.8 0.9zM387.5 313.8l-0.3 1l-1.3 1.2l-1.1 -0.8l-0.7 -2l2.3 -0.9zM427.7 360.3l-0.2 -1.3l-2.2 -0.1l-1.2 1.5l0.9 1.6l1.6 -0.1zM443.7 358.5l-1.1 2.2l2.6 0.2l0.6 -0.7l-0.2 -1.4z"/>
<path fill="#cb2e25" stroke="#2b2422" stroke-width="0.32" stroke-opacity="0.75" d="M433.5 286.9l-0.1 -1.4l0.2 -0.2l1.4 -0.6l1.7 0.6l-0.4 1.7zM435.7 296.8l1.6 -0.3l0.6 -0.6l-0.2 -1l-1.7 0zM434.2 376.6l-1.1 0.9l-1.4 -3.1l0.7 -0.7l1.6 0.5l0.5 0.7z"/>
<path fill="#d0ae9f" stroke="#2b2422" stroke-width="0.32" stroke-opacity="0.75" d="M293 283.5l2.6 -0.1l-1.1 -1.5l-1.7 0.8zM301.9 281.9l-1.5 1.3l2.9 -0.1zM340.1 309.2l0 0l2.6 0.6l-0.7 -2.1zM341.8 311.7l-0.7 -0.1l-0.1 0l1.6 1.8l-0.1 -0.8zM345.8 317.2l1.7 2l-0.8 -2.6l-0.4 0.2zM350.4 322.5l-0.9 0.2l1.2 2.6l0.3 -0.3l0.1 -1.3zM373.9 249.2l-0.2 1.8l2.4 1.3l0.5 0.1l-1.7 -3.4zM381.4 315.3l0.6 1.1l0 1.2l-1.4 0.8l-1.9 -1.1l1.7 -2.2zM382.8 318.1l1.2 0.1l1.9 -1.8l0 -0.4l-1.1 -0.8l-2.8 1.2l0 1.2l0.7 0.4zM401.9 294.8l-1.5 0.8l-0.2 1.5l1.5 0.9l1 -1.4zM401.9 294.8l0.8 1.8l1.6 -0.8l0.3 -0.5l-0.2 -0.8l-1.8 -0.6zM406.6 355.7l-4.6 4.2l0 1.5l3.8 0.4l0.2 -0.7l0.7 -5.4zM407.7 290.6l0.4 -2.4l-0.9 -0.8l-0.2 0.1l-1.6 1.9l1.2 1.5zM410.8 358.7l0.3 0.9l1.1 -0.6zM415.3 359.8l-2.5 -0.6l1.9 1.6zM428.9 255.2l-0.4 -2.7l-0.6 2.7zM430.4 377.6l0 -0.8l-0.2 -0.2l0.1 1zM439.5 384.9l2 1.2l0.9 -1.1l-0.8 -1.9l-2.4 0.9zM456.8 220.7l0 -0.9l-0.9 1l0.5 0.2zM456.8 220.7l1.7 0.6l0.3 0l0.5 -0.3l1.2 -2.5l-0.1 -0.2l-3.1 0.9l-0.5 0.6zM463.5 359l4.2 0l-0.2 4.2l-4.1 -3zM475.1 377.5l-4.7 1l2.2 2.1l1.7 -2.3l0.9 -0.4zM522.9 371.8l0 -0.1l-0.1 -0.1l-1.4 0.8zM525.4 363.8l0 0l-0.8 -0.1l0.7 1.1zM431 247l1.5 0.9l1.3 -1.3l-0.2 -1l-1 -0.2l-1.5 1.5zM436.2 244.8l-1.7 -0.1l-0.9 0.9l0.2 1l1.4 0.6l1.2 -0.3zM436 255l-0.1 -0.2l1 -2.8l0.2 -0.1l0.9 0.2l0.4 2zM442.1 247.3l2.4 0l-1.4 -1.5l-0.8 -0.1l-0.7 0.5zM444.5 247.3l0.3 0.2l0.2 0l0.4 -0.4l0 -1.8l-1.4 -0.4l-0.9 0.9zM450.2 235.4l0 0l-2.4 1.5l0.3 -2.3zM446.7 250.4l-0.9 -0.4l-0.8 -2.5l0.4 -0.4l2.3 -0.1l0.9 1.2l-0.1 1.5zM448.5 256.6l0.5 4.3l-0.2 0.3l-2.9 -1.1l-0.1 -2.3l0.4 -0.5zM457.4 230.6l-1.5 2.2l-0.3 0.1l-0.7 -0.1l-0.4 -1.3l1.1 -2.6l0.6 -0.1l1.3 1.1zM457.8 225l-2.1 -0.1l-0.5 -2.4l0.3 -0.3l2 1.8zM457.5 246.9l0 -2.2l-0.9 -0.1l-1.3 1.7l1.6 1.6zM459.2 233.7l1.4 3.1l-0.2 0.5l0 0.1l-2 -0.3l-0.6 -0.7l-0.1 -0.4l0.6 -2zM460.5 218.5l1.8 1.2l1.4 -1.3l-0.3 -1.1l-3 1zM464.5 249.6l6.8 4.2l4.4 1.2l0.5 -2l-1.9 -5.3l-13.5 -5.8l-0.1 0l-0.9 3.2l1.1 1.6zM465 219l1.4 -0.5l-0.3 -1.3l-1.5 -0.2l-1.2 0.3l0.3 1.1zM469.8 222.7l1 0.2l0.4 2.7l-1.3 0.5l-1.4 -0.6l-0.6 -0.9l1 -1.6zM475.4 232.5l0.3 8.9l-0.8 2.1l-1.9 -10.1l2.4 -0.9zM476.4 229l0.5 2.7l-0.3 0.3l-1.2 0.5l0 0l-1.2 -1.4l0.7 -1.7l1.4 -0.5zM405.7 300l-1.1 -0.4l-0.9 3l0.1 0.2l2.1 0.7l0.4 -2zM409.1 294.9l1.2 1.7l1.6 -0.6l-0.1 -1.7l-1.4 0.1zM409.1 313.5l3.4 0l0 1l-1.7 1.9l-0.1 0l-1.6 -2l-0.1 -0.5zM415.2 282.5l0.9 -3.9l-1.9 -2.7l-0.3 6.8zM415.3 285.6l-2.9 -2.2l1.5 -0.7l1.3 -0.2l1.2 0.8l0 0.4zM414.9 292.5l-1.3 1.4l-1.5 0.1l-0.2 -0.7l0.7 -1.6zM412.6 302.1l-0.5 0.5l1.9 2.3l0.9 -0.5l0 -1.7l-0.2 -0.4l0 0l-1.9 -0.3zM415.5 314.3l-0.3 0.6l-1.8 0.8l-0.9 -1.2l0 -1l0.3 -0.2l2.1 -0.1l0.2 0.2zM414 318.4l-1 -1.4l0.4 -1.3l1.8 -0.8l0 2.1zM415.3 285.8l0 0.5l2.5 1l0.2 -2.1l-0.3 -0.2zM417.8 315.1l-0.5 1.9l-0.4 0.2l-1.7 -0.2l0 -2.1l0.3 -0.6zM419 292.3l-3.1 -2l0.1 -0.2l1.6 -1.2l1 0.7l1.1 1.6l-0.5 1.2zM419.7 291.2l2.5 -1.2l0.1 -0.2l-0.6 -1.5l-3.1 1.3zM419.2 292.4l0.5 -1.2l2.5 -1.2l0.3 2.7l-0.7 0.9l-2.5 -0.8zM421.9 304.4l0.4 -0.6l-1.2 -2.6l-1.3 0.3l-1.3 2.2l0 0.1l0.3 0.3zM419.1 306.1l2.8 -0.5l0 0.1l-0.5 2.4l-1 0l-1.2 -0.3zM421.4 308.1l-1 0l-1.2 3.1l2.8 -0.9l0.3 -1.2zM424.8 276.1l-0.1 2l-2 0.6l-0.4 -0.5l2.3 -2.4zM426.9 287.4l-1.9 1.1l-0.7 -2l0.2 -0.5l1.5 -0.2zM427.1 289.4l-2.4 0.1l-0.4 0.4l1.2 1.9zM426.6 302.7l-1.8 1.1l-0.9 -0.3l0.1 -2l1.2 -0.8l1.7 1.3l0 0zM429.1 285.1l0.2 0.1l0.1 0l1.6 -1.1l-2.3 -3.2l-0.2 0.1l-0.1 0.2l-0.1 0.7zM431 292.3l0.5 0.4l-0.2 1.6l-0.1 0.1l-1.4 0.4l-1.6 -0.6l-0.2 -2.3l0.2 -0.2zM431 298l0.2 -0.3l0 -3.3l-1.4 0.4l-0.7 2zM431.4 275.8l2.1 0.3l-0.6 -2.4l-2.4 -1.3l0.1 2.5zM433.2 295.3l-1.9 -1l-0.1 0.1l0 3.3l2.5 -1.3zM433.3 301.7l-2.9 -0.2l0.4 -2.6l0.3 -0.2l1.4 0.7l0.4 0.4zM432.8 308l0 1.8l-1.6 0.5l-0.8 -2.1l2.2 -0.3zM433.9 306l-0.3 1.5l1.9 0.6l0.6 -1.9l-1.2 -0.9zM438.2 291.3l-1.1 -0.9l-0.6 -1l0.6 -1.5l2.1 2.1l-0.6 1.1zM438.7 293.6l-1 1.3l-1.7 0l-0.2 -0.8l1.2 -1.2l1 -0.3zM440.4 310.9l1.3 -0.6l0.9 1l0.3 1.4l-1.1 0.5l-1.3 -0.3zM442.6 285.7l1.1 1.7l0.5 -0.1l0.4 -0.3l0 -1.7l-1.6 -0.1zM441.8 292.1l0.1 0.1l2.3 0.8l1 -0.6l-0.8 -2.1l-0.9 -0.2zM442.9 305.5l2.3 -0.1l0.3 -0.4l-0.2 -1.2l-0.3 -0.5l-1.7 -0.5l-0.9 0.8zM442.9 312.7l-1.1 0.5l-0.1 1.5l0.9 1.4l1.6 -1.4l-0.9 -1.9zM445.2 318.1l0.6 -1l-0.5 -1.9l-1.1 -0.5l-1.6 1.4l-0.2 1.1l1.5 1.5l1.2 -0.5zM445.2 305.4l0.3 -0.4l1.4 0.4l0.1 2.4l-2.1 0.7l-0.1 -0.1zM447.4 315.2l-1.3 -0.9l-0.8 0.9l0.5 1.9l1.4 -0.3zM449.1 284.9l2.4 -0.8l2.1 1.6l-2.3 1.2l-1.8 0l-0.5 -1.6zM389.6 316.4l-2.4 -1.6l-1.3 1.2l0 0.4l1.5 1.6l1.9 -0.7zM390.4 332.8l-1.1 0.7l-1.9 -0.8l-0.3 -0.6l2 -2.6l1.2 0.4l0.3 0.4l-0.1 2.3zM393.3 303.1l1.1 -1l0.3 0.1l1.4 2.7l-2.6 0.8l-0.2 -0.3zM393.9 315l0.3 0.3l1.1 1.3l-0.6 1.8l-2.4 0.3l-0.1 -1zM396.7 310.2l0.8 -0.2l0.9 0.5l0.2 3.5l-1.2 -0.3l-0.8 -0.6zM401.8 298.3l-2.3 2.1l0.3 0.7l1 0.5l0.7 -0.2l0.9 -2.6zM398 302.6l1.8 -1.5l1 0.5l-0.4 2.7l-0.3 0.1l-2 -0.9zM400.3 332.2l-0.5 -0.1l-2.6 1.7l0.7 1.3l0.8 0.5l1.9 -0.8l0 -1.6zM400.9 328.2l0.1 -3l2.6 0.4l0.4 1l-0.4 1.7l-0.2 0.2zM402.7 316.7l0 0.3l3.5 -0.2l-0.2 -1.7l-1.8 -0.5l-0.6 0.5zM403.4 335.5l-0.4 -0.4l1.4 -1.9l2 1.3l0 0.1l-0.8 1.5zM415.5 355l-7 -0.6l-1 0.9l2.8 2.6l5.3 -0.5l0.3 -2zM418.9 338.4l-1.2 0l-0.5 -2.6l1.4 -0.7l1.9 1l-1.4 2.2zM420.6 343.7l-1.6 -2.1l-1.2 0.2l0.2 2.1l1.6 0.9zM420.3 361.3l-1.2 1l-1.9 -2.7l0.3 -0.5l1.5 -0.9l1.2 1l0.2 0.5zM422.1 351.1l-2.5 -1.3l0 -0.1l0.4 -0.9l1.9 0.5zM423.4 357l-1 -0.6l-3 0.2l-0.4 1.6l1.2 1l2.3 -0.4zM424.3 356.8l0.9 -1l0 -1.2l-2.7 -0.8l-0.1 2.6l1 0.6zM422.4 361.1l1.4 -0.8l-1.3 -1.5l-2.3 0.4l0.2 0.5zM423.4 364l-0.4 0.1l-0.3 1.8l2.3 1.5l0.4 -0.3zM429.9 328.3l0.2 1.5l-1.5 1.4l-2 -0.4l0.8 -1.9l2.3 -0.6zM430.9 358.3l-3 0l-0.2 -1.4l0.2 -0.2l1 -0.8l2.1 2.3zM430 354.7l0.4 0.2l2.5 -0.6l0.5 -1l-2.5 -1.2l-0.9 0.7l-0.1 1.6zM430.9 358.3l-0.3 2.3l1 1.1l0.8 -0.4l-0.6 -3.6l-0.8 0.5zM433.2 326.4l1.5 2.3l1.8 -1.4l0 -0.6l-3.2 -0.9zM433 329.1l-1.7 1.9l0.6 1.9l0.7 -0.1l2.1 -2l-0.4 -1.3zM435.8 345.5l-2 1.3l-0.2 0l-0.9 -0.4l0.2 -2.7l0.2 -0.3l2.2 1zM431.8 357.7l0 0l0.2 0l2.2 3l-1.8 0.6zM430.7 363.8l1 1.7l1.7 0.3l1.2 -0.8l-0.5 -1l-2.7 -1zM432.1 379.4l4.7 0l0.2 0.2l0 0.6l-3.4 1.4l-1.3 -1zM443.7 358.5l-0.7 -0.5l-2 0.9l0 0.1l0.6 1.9l0.1 0.1l0.9 -0.3zM440.5 378.6l0.6 2.7l0.8 0.4l1.8 -0.9l-0.1 -0.7l-1.3 -1.9l-1.2 -0.1zM440.5 378.6l0.6 2.7l-0.8 -0.1l-1.1 -2.1zM444.3 346.9l1 -2l2.1 0.8l-0.6 2.6l-0.7 0.2zM448.4 325.6l0.4 2.2l0 0l2.8 0.5l0.5 -0.4l-0.5 -2l-1.9 -1.1zM450.5 346.3l-2 -1.3l-1.1 0.7l-0.6 2.6l1.3 0.7l1.2 -0.1zM449.4 359.4l-2.6 -1.2l0.7 -0.9l1.3 -0.4l0.1 0.2z"/>
<path fill="#d2856d" stroke="#2b2422" stroke-width="0.32" stroke-opacity="0.75" d="M305.4 281.5l0.5 -2l-0.6 -0.2l-2.2 0.9l-0.1 0.6l1.8 1.1zM347.1 299l-2.9 0.7l0 1.1l0.4 0.5l1.7 1l1.4 -2zM346.3 302.3l0.2 0.9l-2.2 0.7l-0.3 -0.2l0.6 -2.4zM346.5 255.9l2.4 -0.2l0.6 -2l-0.2 -0.1l-1.4 0.7l-1.5 1.5zM347.5 305.3l2.9 0.4l0.1 -1.1l-2.9 0.4zM361.8 247.7l-0.9 0.4l0.3 0.2zM383.9 323.3l-0.7 0.9l-1.3 -0.2l-0.5 -1.7l0.2 -0.9l1.5 0l0.1 0.1zM419.1 263.7l-0.2 -0.3l-0.5 0.3zM420.4 277.9l-2.1 -6.3l1.2 -0.8l2.3 -0.8l0.2 0.6l0.2 7.5zM425.8 261.7l-2.3 -0.5l2.6 4.5l0.4 -0.8zM441.5 386.1l-2 -1.2l-0.1 0.2l2.1 1zM458.2 259.6l-1.7 -3.5l-1.2 0.8l0.1 2.1zM468.2 357.7l-1.3 -1.8l-3 -2.5l-1.6 -0.8l-0.4 1.8l1.6 4.6l4.2 0l0.3 -0.4zM466 382.2l-2.2 2.8l0.1 0.4l3.4 -1.1zM462.1 351.9l0.2 0.7l1.6 0.8l7.8 0l0.1 -0.2l-1.8 -2.5l-0.2 -0.1l-5.7 -0.6zM471.8 360.8l-1.5 5.9l0.3 0.6l0 0l6.3 -7.3l-0.1 -0.3l-0.8 -0.5l-0.3 0l-2.5 0.6zM470.4 382.9l0.2 0.3l0.1 0l0.6 -0.8zM511.4 378.4l-1.9 1.1l1.1 1.1zM517 243.5l0.1 1.3l1.1 -0.5zM519.8 363.3l1.3 -0.8l0.7 -1.4l-1.9 0.8l-1.1 0.2l0.3 1.1l0 0zM521.1 382.1l-1.5 1.1l0 0l1.7 -1zM522.9 371.7l2.1 0l0 -1.4l-2.2 1.3zM524.8 379.6l-0.3 -0.5l-2 0.8l-1.2 1.3l-0.2 0.9l0.2 0.1l3.3 -2zM525 221.7l0.6 -0.4l-0.3 -1.3l-0.9 -0.1l-0.2 0.7l0.6 0.9zM529.7 361.3l0.5 1.1l1.3 0.3l-1.2 -1.7zM536.8 372.1l0.7 0.5l0.6 -0.4l-0.6 -0.9zM442.3 245.7l-0.1 -0.5l0.2 -1.8l1.2 0l0.4 1.5l-0.9 0.9zM442.3 249l0.7 0l1.4 1.6l-0.5 0.7l-2.2 0.5zM445.7 244.9l2.8 -0.2l-0.8 2.3l-2.3 0.1l0 -1.8zM454 238.3l1.3 0.2l0.5 1l-1.3 1.5l-2 -0.3l-0.4 -0.6l0.1 -0.3zM463.8 222.6l-0.9 -2.5l-0.5 -0.2l-0.6 1.9l0.4 0.9zM460.4 237.4l-0.4 1.8l0.9 1.9l1.4 -1.4l0 -1.7l-1.9 -0.7zM465.3 227.6l0.5 -2.5l-1 -0.8l-2.1 1.5l-0.1 0.4l2.2 1.5zM465.8 225.1l-1 -0.8l-0.4 -1.7l0.6 -0.6l0.7 -0.1l1.9 2.7zM470.6 227.9l1.5 0.7l0.9 -1l0.1 -0.9l-0.4 -0.6l-1.5 -0.5l-1.3 0.5l0 1zM409.1 294.9l-0.7 -0.1l-0.5 -1.2l1.2 -1.7l0.7 -0.3l0.6 2.8zM409.9 298.3l-1.7 -3.3l-1.2 1.5l0 0.4l1.4 1.6l1.5 -0.1zM414.9 313.2l-2.1 0.1l-0.6 -2l1.2 -1.2l1.6 1.3zM418.9 294l1.2 1.4l-1.1 1.5l-0.8 -0.7l-0.3 -1.5zM419 296.9l0.1 0.8l-0.6 0.7l-1.1 0.8l-1.5 -2.2l2.3 -0.8zM420.9 298.5l2.8 -0.7l-0.1 -0.5l-2.2 -0.5l-1.1 1.1zM422.2 290l0.1 -0.2l2 0.1l1.2 1.9l0.1 0.3l-0.1 0.2l-1.1 0.7l-1.9 -0.3zM421.8 293.6l0.7 -0.9l1.9 0.3l-0.1 1.6l-0.9 0.7l-1.5 -0.8zM427 276.6l-2.2 -0.5l-0.1 2l0.8 1.1l0.1 0l1 -1zM426.7 284.9l-0.7 0.9l-1.5 0.2l-0.9 -1.3l0.7 -1.6l1.3 0.1l1 1zM429.2 280.4l-0.5 0.5l2.3 3.2l0.1 0l0.3 -0.5l-0.9 -3zM430.2 289.5l-1.4 0.3l-0.4 0.3l-0.2 1.6l2.8 0.6l-0.6 -2.7zM430.1 317.8l0.4 0.3l2.9 -1.7l-0.2 -0.9l-1.1 -0.3zM439.5 294l0.6 1.2l1.9 0.1l-0.1 -3.1l-0.1 -0.1l0 0zM441.4 300.3l1 -2.7l0 -0.1l-2.6 0.2l-0.2 0.2l1.6 2.4zM449.4 308.8l-0.2 -0.4l-2.2 -0.6l-2.1 0.7l0 0.5l1.6 1.4zM448.4 303.2l1.9 3.1l-0.3 0.3l-2.7 -1.3l1 -2l0.1 -0.1zM449.4 309l0.5 1.2l-3.2 1.2l-0.2 -1l2.9 -1.6zM386.7 324.8l-0.8 3.1l-2 -1l-0.4 -0.5l0.2 -0.6zM388.6 309.9l1 3.5l-2.1 0.4l-1.1 -1.5l0.2 -0.7zM387.1 324.3l0.7 0.4l2.5 0.1l0.4 -1.6l-0.7 -1.6l-2.6 0.6zM393.8 314.9l-0.2 -2.4l-0.8 -0.5l-0.2 0l-2.6 1.5l0.5 2.1l0 0zM390.3 324.8l0.1 0.1l2.9 1l0.7 -0.4l-1.3 -2.7l-2 0.4zM395.9 328.2l-2.2 0.7l0.1 2l0 0.1l2.4 -0.7zM396.7 310.2l-0.1 2.9l-2.9 -0.6l2.4 -2.3zM397.2 333.8l0.7 1.3l-2.2 1l-0.1 -2.9l0.9 -0.1zM402 304.6l-1.6 -0.3l-0.3 0.1l-0.9 2.3l1.9 1.4l0.8 -0.8zM401.3 319.8l0.5 -1.9l-3.3 -0.9l-0.5 2.7l0.6 0.5l2.1 0.2zM400.8 325l0.1 -2l-2 -0.4l-0.8 1.5l1.2 1.2zM401.3 319.8l2.3 1.1l-0.7 1.5l-1.6 0.2l-0.6 -2.2zM410.1 338.2l-1 2.3l-2.4 -0.2l0.4 -2.6l1.6 -0.6zM411 343l0.8 1.9l1.5 0.7l1.4 -2l-0.2 -0.8l-2.3 -0.8l-0.9 0.4zM416.6 333.2l2.4 -0.7l0 0.1l-0.4 2.5l-1.4 0.7l-1.1 -0.8l-0.1 -1.3zM418.9 338.4l1 2.5l-0.9 0.7l-1.2 0.2l-1.2 -1.1l0.4 -1.8l0.7 -0.5zM420.5 336.1l0.5 -0.3l-0.3 -3l-1.7 -0.2l-0.4 2.5zM420.6 343.7l1 -0.7l0 -0.1l-0.4 -1.7l-1.3 -0.3l-0.9 0.7zM421.8 362.5l0.3 1.3l-1.9 0.7l-1.2 -1.7l0.1 -0.5l1.2 -1zM422.2 332l0.9 0.9l0.4 1.3l-2.2 1.7l-0.3 -0.1l-0.3 -3zM423.8 363.8l1.2 -1.8l-0.9 -1.6l-0.3 -0.1l-1.4 0.8l-0.6 1.4l0.3 1.3l0.9 0.3l0.4 -0.1zM427.4 336.4l0.3 -2.1l0 0l-0.4 -0.2l-1.2 0.2l-1.4 0.9l0 0.2l1 1.3l1.3 0.1zM428.9 349.4l0.7 -0.2l0.8 -2.5l-0.8 -0.8l-1 -0.1l-1.5 2.3zM430 354.7l-1.1 1.2l-1 0.8l-0.6 -2.8l2.6 0.5zM436.6 331.4l-0.3 2.3l-1.4 0.8l-1 -0.6l-1.3 -1.1l2.1 -2zM436.9 343.1l1 0l-0.1 2.1l-0.7 0.7l-1.3 -0.4l-0.5 -1.1l0.1 -0.1zM434.5 374.9l-0.5 -0.7l1.1 -3.3l2.6 1.1l0.3 0.5l-0.8 2zM440.3 348.2l0.1 -1.5l-0.9 -1.3l-1.7 -0.2l-0.7 0.7l0.4 2.2l2.2 0.5zM439.1 376.2l-1.6 -1.1l-0.5 1.4l1 2.4zM442.2 351.1l-2.4 -0.1l-0.1 -2.4l0.6 -0.4l1.9 0.3l0.4 2zM441.1 378.1l1.2 0.1l0.7 -1.8l-1.2 -1.7l-0.4 -0.1l-1.6 1.5zM441.3 326.8l1.3 1.5l2 -1.5l-1.7 -3.3l-1.1 1.2zM442.5 332l2.9 1.3l1 -0.5l-1.4 -2.3l-1.9 0zM442.6 350.5l2.4 0l0.2 -0.8l-2.9 -1.3l-0.1 0.1zM447.9 364.5l0.1 0.2l-2.4 2.2l-1.3 -0.2l-1.1 -2.9l1.7 -1.1zM445.6 371.9l-2.9 -3l0.1 -1.2l1.5 -1l1.3 0.2l1.4 2.9l-0.2 1.6l0 0zM445.2 372.9l-3.4 1.8l1.2 1.7l2.5 -0.2zM448.4 325.6l0.4 2.2l-2.7 0.4l-1.1 -1.4l1.2 -1.2l1.5 -0.4zM446 353.8l0 0l1.5 3.5l-0.7 0.9l-1.1 0.6l-0.6 -2.9zM449.4 316.6l1.5 1.9l-0.2 0.8l-2.4 0.5l-0.3 -1.2l0.2 -1.6zM451.3 330.6l1.9 0.9l0.3 1.1l-2.1 0.8l-0.3 -2.6z"/>
<path fill="#d2c9c5" stroke="#2b2422" stroke-width="0.32" stroke-opacity="0.75" d="M305.5 284.9l-0.1 -0.2l-0.1 -0.1l0 0.6zM350.5 253l-1.2 0.6l0.2 0.1l1 -0.4zM377.3 320.8l0.4 -2.8l-3.1 -0.8l0.3 2.5l1.9 1.6zM381.1 344.6l-0.3 -0.1l-0.1 0l0.7 0.4zM381.4 315.3l0.6 1.1l2.8 -1.2l-0.7 -2l-0.6 -0.2l-0.8 0.1l-0.2 0.1zM387.2 262.2l1.8 -2.8l-2 -0.5l-1.6 0.4l-0.1 0.8l1.5 2.5zM392.7 263.6l1.3 1.3l0.3 -1.5l-1.4 -1.1zM399.4 294l1 1.6l-0.2 1.5l-1.1 0.3l-1.5 -0.5l-0.3 -1.9l0.8 -0.8zM399 351.2l1.6 -3.6l-0.5 -0.6l-2.5 1.7l0 0.5l1.3 2zM402.1 352.3l-3.1 -1.1l-0.1 0l0.3 0.4l0.5 1.8zM404.9 272.5l1.2 -0.9l-1.7 -0.5l-0.1 1.6zM404.3 275.3l0.3 -0.3l0.3 -2.5l-0.6 0.2l-0.2 2.5zM403.1 277.6l0.6 0.2l1.1 -1.1l-0.5 -1.4l-0.2 -0.1l-0.1 1.5l-1.1 0.4zM420 364.8l-0.4 0l0.2 0.2l0.2 0.1zM426.5 264.9l2.6 -2.4l1.1 -4.2l-2.3 -0.1l0.4 4l-2.5 -0.5zM431.8 381.3l2.3 1.1l-0.5 -0.8l-1.3 -1zM455.1 332.7l-1.1 0.3l-0.2 3l1.3 -0.1l0.1 0l1.2 -2.2zM473.2 359.8l2.5 -0.6l-2.8 -3.7l-0.9 -0.4l-0.2 0.3zM432.9 248.6l-0.4 -0.7l1.3 -1.3l1.4 0.6l-1 1.5zM435 249.5l1.3 -0.4l0.5 0.8l0.3 2l-0.2 0.1l-2.5 -0.2zM436.8 249.9l2.6 -1l0 -0.3l-0.4 -1l-2.1 -0.2l-0.6 1.7zM436.8 249.9l0.3 2l0.9 0.2l1.5 -0.8l-0.1 -2.4zM441.3 258.6l0.4 0.5l1.3 0.2l1.6 -2.5l-0.1 -0.1l-2.6 0.5l-0.6 0.6zM449.5 240.2l0.3 -2.1l-2.1 -1.1l0 0l-1 1.5l2.3 2.1zM448.5 256.6l-2.3 0.7l0 -2.7l1.1 -0.2l1.3 2.1zM450.8 233.4l0.9 -0.9l0 -1.3l-1.6 -1l-1.1 1.2l1.2 1.7zM452.7 236.8l0.3 -1.2l-2.1 -1.1l-0.7 0.9l0 0l0.4 2.2l0.8 0.1zM460.5 228.2l1 -1.3l0 0l-2.6 -1.4l-0.3 0.1l-0.3 0.6l0.9 2.4zM460.9 246.7l-1.1 -1.6l-2.3 -0.4l0 0l0 2.2zM462.3 239.7l6.3 1.6l3.5 2.3l2 2.9l0.2 1.2l-13.5 -5.8l0.1 -0.8zM470 237.7l2.1 5.9l-3.5 -2.3l-3.6 -3.2l0 -2.6l3.9 0.8zM470.8 222.9l0.4 2.7l1.5 0.5l0.6 -1.7l-0.3 -0.1l-0.4 -2.3zM470.6 227.9l1.5 0.7l-0.5 1.4l-1.5 0.9l-0.8 -0.4zM474.2 231.1l-0.4 0l-1.5 1.7l0.7 0.6l2.4 -0.9zM411.9 296l0.9 1.1l1.2 0l1 -0.7l-1.4 -2.5l-1.5 0.1l-0.3 0.3zM411.2 298.9l1.7 0.8l1.4 -0.4l-0.3 -2.2l-1.2 0zM417.9 294.7l0.3 1.5l-2.3 0.8l-0.8 -0.6l1.5 -1.9zM415 296.4l-1 0.7l0.3 2.2l0 0l3 0.1l0.1 -0.2l-1.5 -2.2l-0.8 -0.6zM419 292.3l-2.9 0.8l0.5 1.4l1.3 0.2l1 -0.7l0.4 -1.2l-0.1 -0.4zM420.1 295.4l-1.1 1.5l0.1 0.8l1.2 0.2l1.1 -1.1l-0.3 -1.4zM419.1 311.2l0 0.5l3 1.3l0.2 -1.9l-0.3 -0.8l-2.8 0.9zM427.1 289.4l0.1 0l-0.3 -1.9l0 -0.1l-1.9 1.1l-0.3 1zM425.1 308.3l0.4 0l0.9 2.8l-1.7 0.2l0 -2.7zM433.4 305.6l-2.4 -0.4l0 -0.8l1.9 -1.1zM433.4 305.6l-2.4 -0.4l-0.1 0.1l1.7 2.6l0.2 0.1l0.8 -0.5l0.3 -1.5zM435.5 281.2l-1.5 0.2l-0.5 0.7l0.2 0.4l2 0.7l0.2 -0.1zM437.2 287.8l-0.9 -0.8l0.4 -1.7l1.2 -1l1.2 1.4l-1.8 2.1zM439.1 310.3l1.3 0.6l0.1 2l-0.1 0l-2.1 -0.9zM439.6 296.2l0.2 1.5l2.6 -0.2l0.3 -0.8l-0.2 -1.1l-0.5 -0.3l-1.9 -0.1zM445.6 296.8l0.1 -0.5l-0.2 -0.6l-1.5 -1.2l-1.5 1.1l0.2 1.1l2.8 0.2zM444.5 298.7l-0.9 0.1l-1.2 -1.2l0 -0.1l0.3 -0.8l2.8 0.2zM445.5 283.5l1.4 2.6l2.1 -0.8l0.1 -0.4l0 0l-2 -1.6l-0.6 -0.4l-1 0.6zM445.5 283.5l-0.9 1.8l0 1.7l1.8 0.1l0.5 -1zM446.6 300.2l-0.3 1.5l-0.4 0.3l-1.8 -1.1l1.3 -1zM446.9 305.4l-1.4 -0.4l-0.2 -1.2l3 -0.5l-1 2zM455.2 288.7l-1.8 0.6l-2 -0.2l-0.1 -2.2l2.3 -1.2l0.3 0.1l1.3 1.9zM451.8 292.7l2 -0.3l1.3 2.6l-3.7 -0.5zM453.9 308.5l-0.8 1.9l-0.9 0.4l-0.1 -2.3l1 -1l0.5 0.2zM393.4 306.1l0.1 -0.4l-0.2 -0.3l-1.8 -0.7l-0.6 1.9l0.2 0.2zM403.6 315.1l0.6 -0.5l-0.3 -2.4l-1.6 0.1l-1.1 1.4zM404.4 346.3l-1.2 2.7l1.5 3.4l2.1 -5.9zM409.2 340.8l-0.1 -0.3l1 -2.3l0.7 -0.1l1.6 3l-0.2 0.9l-0.9 0.4zM416.6 333.2l-0.2 -2.4l-1.9 0.2l-0.3 0.6l1.4 1.8l0.4 0.3zM414.5 342.8l0.2 0.8l1.5 0.9l1.8 -0.6l-0.2 -2.1l-1.2 -1.1l-1.1 0.7zM423 346.1l-3.3 -0.1l-0.2 0.6l0.5 1.6l3.6 -0.8zM421.8 362.5l-1.5 -1.2l0.1 -1.6l2 1.4zM423 337.4l-1.7 -1.5l2.2 -1.7l1.2 1l0 0.2zM433.4 353.3l0.7 -0.4l-0.3 -2.5l-0.3 -0.2l-1.4 -0.2l-0.7 0.3l-0.5 1.8zM436.3 349l2.1 2.3l-1.7 0.8l-0.8 -2.7zM441.2 333.3l-1.5 -3.3l-1.9 1.1l2.8 2.8zM436.3 353.8l0 0l3.5 -0.4l0.6 0.7l-0.7 2.1l-1.7 0.6l-1.2 -1.6zM441 359l-3 0.4l0.3 0.8l1.7 1.4l1.6 -0.7zM440.5 364.6l1 2.6l1.3 0.5l1.5 -1l-1.1 -2.9l-0.5 -0.1zM443.7 358.5l-0.7 -0.5l-0.1 -1.4l2.2 -0.7l0.6 2.9l-0.1 0z"/>
<path fill="#d72e26" stroke="#2b2422" stroke-width="0.32" stroke-opacity="0.75" d="M458.5 348.7l0.9 1.7l-3.7 1.8l-0.5 0l-2.6 -1l-1 -1l0.8 -1.3l2.3 -1.3l2.8 0.3zM435.5 281.2l0.4 1.9l2 0.2l0.3 -0.4l-1.5 -2.6zM436.5 327.3l1.1 1l1.3 -0.3l1.2 -1.2l-1.2 -1.3l-1.7 -0.6l-0.7 1.8z"/>
<path fill="#d76143" stroke="#2b2422" stroke-width="0.32" stroke-opacity="0.75" d="M380 320.2l-2.7 0.6l-0.5 0.5l-0.1 1.4l0.3 0.3l2 0.7l1.7 -2.9zM414.2 275.9l1.9 2.7l1.1 0.8l3 -1l0.2 -0.5l-2.1 -6.3l-5.1 2l0.2 1.1zM515.1 362.7l-0.7 0.1l0.1 1.5l0.2 0.2zM514.5 364.3l0 0.5l0.2 -0.1l0 -0.2zM524.8 379.6l-0.2 0.6l0.4 -0.2zM536.8 372.1l-0.1 0l0 0.9l0.8 -0.4zM445 242.7l-1.4 0.7l-1.2 0l-1 -0.8l1 -2.6l0.3 0l1.8 1.3zM476.6 225.2l0.3 0.3l-0.1 1.4l-0.4 0.9l-2.8 -1.2l2.8 -1.4zM430.1 317.8l2 -2.6l-1.7 -0.9l-1.5 1.1l0.9 2.3zM446.9 305.4l0.1 2.4l2.2 0.6l0.8 -1.8l-2.7 -1.3zM390 313.5l-0.4 -0.1l-2.1 0.4l-0.3 1l2.4 1.6l0.9 -0.8zM407.9 346.1l1.2 7.1l0 0.3l-0.6 0.9l-1 0.9l-0.5 0.1l-2.1 -2.6l-0.2 -0.4l2.1 -5.9zM429.2 366.8l1.1 1.3l0 0.1l-0.6 0.8l-2 1l-1.3 -3.2l0 0zM448 350.4l0.2 2.3l1.3 -0.2l0.3 -0.8z"/>
<path fill="#dfbaab" stroke="#2b2422" stroke-width="0.32" stroke-opacity="0.75" d="M285.3 274.4l0.9 -0.8l-1.4 0.7zM321.9 300.1l-1.5 -0.9l-1.1 0.8l2.3 0.5zM330.7 243.1l0.6 -0.3l0.3 -0.6l-0.5 -0.8l-1 0.9l-0.1 0.7zM330.7 243.1l0.3 0.3l0.3 -0.6zM346.4 287l0.8 -1l7.5 -1.7l-0.3 1.7l-7.1 5.7l-1.4 0l-0.8 -0.4l-0.1 -0.4zM347.5 305.3l-0.2 0.7l-0.2 0.2l-2.3 -0.1l-0.6 -0.6l0.1 -1.6l2.2 -0.7l0.9 1l0.2 0.8zM347.6 305l-0.2 -0.8l2.2 -1.9l0.3 0l1.1 1.3l0 0.5l-0.5 0.5zM364.5 247.4l0.2 -0.5l-1.5 0.4zM373.7 284.3l-0.3 -0.9l-8.8 -2.2l-1.4 -0.2l3.6 3.1l5 1.2l1.9 -0.8zM380 320.2l0.6 -1.8l-1.9 -1.1l-0.3 0l-0.7 0.7l-0.4 2.8zM382 326.8l-1.8 -1.1l-1.1 1.1l0.6 2.5l0.9 0.1l0.6 -0.2zM382.8 318.1l0.3 3.3l-1.5 0l0 0l1.1 -3.4zM406.6 355.7l0.1 0l0.3 -0.3l-2.1 -2.6l-2.8 -0.5l-2.4 1.1l0.7 3zM402 359.9l4.6 -4.2l-6.2 0.7l0.9 3.7zM402 359.9l-0.7 0.2l0.3 1.2l0.4 0.1zM402.6 293.9l-0.3 -0.6l-0.1 -1.7l2.2 -0.1l1.2 1.3l-1.2 1.7zM402.7 296.6l-1 1.4l0.1 0.3l0.6 0.5l1.9 0.3l0 -3.3zM406.6 290.9l-1.2 -1.5l-0.6 0.2l-0.4 1.9l1.2 1.3l0.1 0zM424.6 275.8l-2.6 -5.2l0.2 7.5l0.1 0.1zM432.1 379.3l-1.4 0.7l0.1 0.8l1 0.5l0.5 -0.7l-0.2 -1.2zM432.9 273.7l3.1 -1.2l0 -0.3l-1.2 -1.5l-5.3 -0.3l1 2zM439.5 384.9l-0.3 -0.9l-1.7 -0.9l-0.8 0.7l1.3 0.6l1.4 0.7zM452.2 354.2l-0.6 1.2l-1 -0.4l-0.6 -2l1.6 -0.3zM463.8 385l-2.8 0.3l0 0.6l2.4 -0.3l0.5 -0.2zM471.4 360.3l-3.4 -1.7l-0.3 0.4l-0.2 4.2l0.9 1.9l1.9 1.6l1.5 -5.9zM470.4 382.9l-4.1 -1.5l-0.3 0.8l1.3 2.1l3.3 -1.1zM476.3 225.1l-3 -0.7l-0.6 1.7l0.4 0.6l0.5 -0.1l2.8 -1.4zM477.5 382.9l-0.2 0.1l0 1.4l1.2 0zM529.7 361.3l0.6 -0.3l-1.8 -2.6l-0.1 0l0.4 2.7zM536.7 372.1l-0.8 0l-2.9 1.5l0.5 1.1l0.1 0.2l3.1 -1.9zM432.7 251.4l-0.2 -1.9l0.4 -0.9l1.3 0.1l0.8 0.8l-0.6 2.3l-0.2 0.1zM436.5 242.8l-0.8 -0.5l-1.4 1.4l-0.3 0.3l0.5 0.7l1.7 0.1l0.4 -0.5zM434.2 248.7l1 -1.5l1.2 -0.3l0.5 0.5l-0.6 1.7l-1.3 0.4zM436.9 247.4l-0.5 -0.5l-0.2 -2.1l0.4 -0.5l2.8 0.4l0.3 1.6l-0.7 1.3zM438.7 240.1l2.5 -1.1l0.1 0l1.1 1l-1 2.6l-1.2 0.3l-0.3 -0.2zM441.4 242.6l1 0.8l-0.2 1.8l-2.6 -1l0.6 -1.3zM441.6 246.2l-1.9 0.1l-0.3 -1.6l0.2 -0.5l2.6 1l0.1 0.5zM446.2 238.6l-0.3 1.6l-1.4 1.1l-1.8 -1.3l2.1 -1.9zM445.4 260.2l0.5 -0.1l-0.1 -2.3l-1.2 -1l-1.6 2.5zM446.8 251.7l1.7 0.6l0.2 -2.4l-0.2 -0.2l-1.8 0.7l0 1.1zM449.8 238.1l-2.1 -1.1l0.1 -0.1l2.4 -1.5l0.4 2.2zM452.9 243.5l1.4 1.2l-0.1 0.6l-2.5 -0.5l0.8 -1.3zM451.8 257.4l-2.7 3.4l4.6 -1l-1.3 -2.2zM453.4 254.5l2.2 -0.5l1.4 1.2l-0.5 0.9l-1.2 0.8l-1 -0.2zM457.5 224l1 -2.7l-1.7 -0.6l-0.4 0.3l-0.9 1.2zM455.1 236.3l0.9 -0.7l1.7 0.4l0.1 0.4l-2.2 1.2zM457.8 225l0.8 0.6l0.3 -0.1l1 -1.5l-1.1 -2.7l-0.3 0l-1 2.7zM460.3 230.5l1.2 -0.5l-1 -1.8l-1.3 0.4l-0.3 0.8zM460.4 237.4l-2 -0.3l-1.1 2.5l2.7 -0.4zM461.8 221.8l-2.5 -0.8l1.2 -2.5l1.8 1.2l0.1 0.2zM461.5 226.9l-2.6 -1.4l1 -1.5l1.8 -0.4l1 2.2l-0.1 0.4zM464.8 227.7l-2.2 -1.5l-1.1 0.7l0 0l1.2 3.1l0.5 0.2zM463.8 222.6l0.6 0l0.4 1.7l-2.1 1.5l-1 -2.2l0.5 -0.9zM469.6 220.4l0.3 -0.5l-0.7 -1.7l-2.3 0.6l0.2 2.2zM469.2 218.2l0.7 1.7l2.4 0.4l-0.1 -0.5l-0.6 -1.7l-2.2 -0.3zM471.1 232.8l-1.1 4.9l2.1 5.9l2 2.9l0.8 -3l-1.9 -10.1l-0.7 -0.6zM476.4 229l2 0.3l0.6 1.9l-2.1 0.5zM408.2 301.2l0.6 0.7l-0.3 1.3l-1.8 1l-0.8 -0.7l0.4 -2zM413 287.7l0.3 2.5l-1 0.6l-1.2 -0.4l0.6 -2.1zM412.3 290.8l0.3 0.9l-0.7 1.6l-1.9 -1.8l0.5 -0.8l0.6 -0.3zM415.3 285.8l0 0.5l-1.2 1.2l-1 0.1l-1.8 -3.7l0.4 -0.2l0.4 -0.2l0.3 -0.1l2.9 2.2zM413.1 287.6l-0.1 0.1l0.3 2.5l2.2 0.6l0.4 -0.5l0.1 -0.2l-1.9 -2.6zM412.9 299.7l1.4 -0.4l0 0l0.4 3l-1.9 -0.3zM411.8 302.8l0.3 -0.2l1.9 2.3l-1.4 0.9l-1.3 -1.8zM415.2 282.5l0.9 -3.9l1.1 0.8l1.1 1.6l-0.5 1.5l-1.4 0.8zM414.7 302.3l2.7 -2.5l-0.1 -0.4l-3 -0.1l0.4 3zM420.5 281.1l0.3 -0.6l-0.6 -2.1l-3 1l1.1 1.6zM418.9 312.3l0.2 -0.6l0 -0.5l-1.9 -1.5l0 0l-0.1 0l-0.2 2.9zM419 314.6l0.3 0.1l2.7 -0.7l0.1 -0.9l0 -0.1l-3 -1.3l-0.2 0.6zM421.1 295.4l0.3 1.4l2.2 0.5l0.1 -0.4l-0.3 -1.6l-1.5 -0.8zM424.2 312.6l-2.1 0.5l0 -0.1l0.2 -1.9l2.3 0.3l0.1 0.8zM424.2 312.6l-2.1 0.5l-0.1 0.9l0.8 1l1.6 -0.3zM424.5 280.7l1 -1.5l0.1 0l2.9 1.8l-0.1 0.2l-1.8 0.5zM429.1 285.1l0.2 0.1l-1.3 2.1l-1.1 0.2l0 -0.1l-0.9 -1.6l0.7 -0.9zM428.8 289.8l-0.1 -1.9l-0.7 -0.6l-1.1 0.2l0.3 1.9l1.2 0.7zM426 314.9l0.5 0.5l1.6 -0.2l-0.1 -1.6l-0.9 -1.8l-1.2 1.2zM429.4 278.1l-1.1 -1.6l2.3 -1.6l0.8 0.9l-0.8 1.8zM430.2 289.5l0.5 -2.2l-2 0.6l0.1 1.9zM430 303.7l-2 1.7l1.3 1.2l1.6 -1.3l0.1 -0.1l0 -0.8l-0.9 -0.8zM429.1 312.3l1.5 0.2l-0.1 -1.6l-1.9 -1.2l-0.9 1.6zM430.4 289.6l3.2 0.2l-0.1 1.6l-2 1.3l-0.5 -0.4zM432.1 315.2l1.1 0.3l0.7 -1.4l-0.2 -1l-0.5 -0.7l-2.5 0.3l-0.3 1.6zM437.1 287.9l-0.6 1.5l-2.9 0.3l-0.3 -2.5l0.2 -0.3l2.8 0.1l0.9 0.8zM435.8 294.1l0.2 0.8l-0.3 1.9l-0.2 0.3l-1.4 -0.4l-0.4 -0.3l-0.5 -1.1l1.5 -1.6zM438.7 277.5l-0.6 -0.6l-0.7 0.3l-0.9 2.5l0.2 0.4l2.3 -0.5zM435.8 321.4l2.1 1.2l0.7 -0.4l-0.2 -1.3l-0.8 -1.2l-1.6 -0.3l-0.2 0.1zM438.9 309.9l1 -1.6l-1.8 -1.2l-1.1 1.4l0.7 1zM441.1 306.9l-0.4 1.2l1.2 1.3l2.6 -1l-2 -1.9zM440.5 312.9l1.3 0.3l-0.1 1.5l-2 0.9l-0.6 -0.9l1.3 -1.8zM442.7 280.1l2.9 -1.5l0.4 0.9l-1.9 1.8l-1.4 -0.5zM443.7 287.4l-1.3 0.9l1.1 1.8l0.9 0.2l0.8 -0.8l-1 -2.2zM448.9 294.9l-3.2 1.4l-0.2 -0.6l1.3 -2.2l1.8 1zM448.4 303.2l-0.1 0.1l-3 0.5l-0.3 -0.5l0.9 -1.3l0.4 -0.3zM449.3 287.5l0.6 1.9l-2.5 0.9l-0.5 -0.8l0.3 -1.4zM447.4 290.3l-0.1 0.8l2 0.9l1.4 -0.5l-0.4 -1.8l-0.4 -0.3zM449.2 313.3l-2.4 -0.5l-0.3 -0.3l0.2 -1.1l3.2 -1.2l0.2 0.4zM449.7 315.1l-0.3 1.5l-1.2 0.4l-1 -0.2l0.2 -1.6l2.2 -0.9zM449.3 287.5l0.6 1.9l0.4 0.3l1.1 -0.6l-0.1 -2.2l-1.8 0zM451.3 291.9l2.1 -2.6l-2 -0.2l-1.1 0.6l0.4 1.8zM454.6 304.1l0.4 -1.9l-0.5 -0.2l-0.6 0.1l-2.2 1.7l-0.1 0.5l0.2 1.1l1.7 -0.5zM453.5 304.9l-1.7 0.5l-0.2 0.4l1.5 1.7l0.5 0.2l1.3 -0.9zM456.1 301.7l-1.6 -3.6l-1.7 0.7l1.7 3.2l0.5 0.2zM388.1 328.4l-1.9 -0.1l-1.2 2.1l0.7 1l1.4 0.7l2 -2.6l-0.7 -1zM390.4 320.4l0.6 -0.7l-1.7 -2.4l-1.9 0.7l-0.2 0.8l0.5 0.8zM387.4 322.2l2.6 -0.6l0.4 -1.2l-2.7 -0.8l-0.6 2.1zM390.5 315.6l0 0l-0.9 0.8l-0.3 0.9l1.7 2.4l0.5 -0.1l0.8 -0.9l-0.1 -1zM393.8 332.6l0 -1.6l0 -0.1l-3.2 -0.6l-0.1 2.3zM392.8 312l0.8 -3.5l0.4 -0.3l0.1 0l0.9 0.7l1.1 1.3l-2.4 2.3l-0.1 0zM398 319.7l-1.3 0.4l-1.7 -1.2l-0.3 -0.5l0.6 -1.8l2.9 -0.1l0.3 0.5zM395.7 322.7l2.9 -0.5l0.3 0.4l-0.8 1.5l-2.2 0zM398.4 310.5l0.2 3.5l0.3 0.4l0.8 -0.2l1.1 -3.4l-0.3 -0.8zM400.3 332.2l-0.5 -0.1l-2.3 -1.1l0.8 -1.5l2.3 1l0.3 0.9zM400.6 334.8l1.1 0.7l0.1 2.1l-0.8 0.8l-2.4 -1.7l0.1 -1.1zM400.5 341.3l0.1 4.3l-0.7 0.7l-1.1 -0.7l0.6 -4.3l0.3 -0.4l0.1 0zM404.5 299.2l-0.2 -0.1l-1.9 -0.3l-0.9 2.6l2.2 1.2l0.9 -3zM404.5 338l-0.5 0.7l-2.2 -1.1l-0.1 -2.1l1.3 -0.4l0.4 0.4zM403.6 309.8l0.8 1.7l0.2 0l2.7 -2.8l-0.1 -0.3l-3.2 0.8zM404.3 332.2l0.3 -0.2l1.8 -2.5l-2.8 -1.2l-0.2 0.2l-0.4 2.5zM404.5 338l-1.1 -2.5l2.2 0.6l0 1.1zM404.5 338l-0.5 0.7l0.1 0.7l1.2 1.4l0.3 0.1l1.1 -0.6l0.4 -2.6l-1.5 -0.5zM404 344.8l-0.7 -0.5l-0.3 -1.3l2.3 -2.2l0.3 0.1l1 2.4l0 0.3zM413.6 338.4l0 1.3l-1.2 1.4l-1.6 -3l0.3 -0.2zM413.2 351.3l0.8 -3.2l-0.2 -0.8l-0.4 -0.4l-2.4 0.7l-1.9 5.6l0 0.3zM413.5 321.6l0.4 -2.2l0 -0.1l2.4 0.4l0.3 0.2l0.1 2l-0.6 0.6l-0.8 0.3zM414.5 338l2.5 0.9l-0.4 1.8l-1.1 0.7l-1.9 -1.7l0 -1.3zM419.6 349.7l-2.7 -0.3l-0.9 1.9l3.2 0.9l0.4 -2.4zM419 362.8l0.1 -0.5l-1.9 -2.7l-0.2 0.1l-0.8 2.3l1.3 1.1zM418.9 338.4l1 2.5l1.3 0.3l0.1 -0.2l0 -2.1l-2.2 -0.6zM425 367.4l-2.3 -1.5l-0.4 0.8l1.2 0.7l0.9 0.7zM424.9 332.7l1.2 1.6l-1.4 0.9l-1.2 -1l-0.4 -1.3zM426.7 364.9l-2.9 -1.1l-0.4 0.2l2 3.1l1 -0.3l0 0zM430.5 343.6l-0.9 2.3l-1 -0.1l-1 -0.9l1.8 -1.6zM429.9 354.4l0.1 -1.6l-2 -1.4l-1.4 2l0.7 0.5zM429.9 328.3l0.2 1.5l1.2 1.2l1.7 -1.9l-1 -0.9l-1.9 0zM430.4 354.9l2.5 -0.6l0.7 2.4l0 0.1l-1.6 0.9l-0.2 0zM429 360.8l1.6 -0.2l1 1.1l-0.2 1.3l-0.7 0.8l-1.3 0.2zM430.3 368.2l0 -0.1l1.4 -2.6l1.7 0.3l-0.4 2.1l-1.9 0.5zM432.1 323.3l0.5 1.4l0.2 0l1.7 -0.8l0.3 -2.1l-1.1 -0.4zM433.6 356.7l-0.7 -2.4l0.5 -1l0.7 -0.4l2 0.6l0.2 0.3l0 0zM432.1 379.4l0 -0.1l-0.2 -0.7l1.2 -1.1l1.1 -0.9l1.5 1l1.1 1.8zM433.6 356.8l0.9 0.4l2.3 -2l-0.5 -1.4l-2.7 2.9zM438.4 368.8l-0.7 3.2l-2.6 -1.1l-0.3 -0.5l0.2 -1.3l0.7 -0.7l1.7 0zM438.9 328l1.3 1.6l-0.5 0.4l-1.9 1.1l-0.3 -0.1l0.1 -2.7zM438.7 364.4l0.2 -0.1l1.1 -2.7l-1.7 -1.4l-1 2.7l0.4 1.1l0.6 0.3zM440.5 378.6l-1.3 0.5l-1.2 -0.2l0 0l1.1 -2.7l0.7 -0.1l1.3 2zM439.2 322.1l3.7 1.4l0.2 -3l-2 -0.1zM438.9 322.2l1.4 2.2l1.5 0.3l1.1 -1.2l0 0l0 0l-3.7 -1.4zM442.5 332l-0.5 0.7l-0.8 0.6l-1.5 -3.3l0.5 -0.4l2.3 -0.2l0.6 1.1zM445.4 353.3l0 -1l-0.4 -1.8l-2.4 0l-0.4 0.6l0.8 2.3zM445.2 360.9l-0.3 1.8l-1.7 1.1l-0.5 -0.1l-1 -2.7l0.9 -0.3zM447.1 322.2l-0.3 0l-2.1 1.3l1.5 2.1l1.5 -0.4zM445.8 342.8l-1 1l0.5 1.1l2.1 0.8l1.1 -0.7l0.1 -1.9l-1 -0.9zM445.2 360.9l-0.3 1.8l3 1.8l0.4 -3.2l-2.5 -1.1zM451.1 330.8l-2.3 0.6l-0.1 0.3l2.3 2.3l0.4 -0.6zM455 329l0.1 0.4l-1.9 2.1l-1.9 -0.9l0.3 -2.3l0.5 -0.4l2 -0.1zM451.4 333.4l-0.4 0.6l-0.2 1.6l2.7 0.6l0.3 -0.2l0.2 -3l-0.5 -0.4z"/>
<path fill="#dfbaab" stroke="#2b2422" stroke-width="0.32" stroke-opacity="0.9" d="M474.8 300.1l0.1 0.1l-2.2 2.8l-0.4 -0.3l-0.5 -3l0.6 -0.3zM491.2 285.7l0 0l-2.9 2.4l-1 2.7l1 0.7l0.7 -0.3l1.2 -2.2l-0.1 -0.1l1.5 -3zM485.4 304.4l-0.1 -0.5l-0.5 -0.4l-2 0.1l-0.1 0.1l-0.4 2.2l0.9 1zM489.1 297.4l1 0.8l2.9 -2.1l-0.1 -0.3l-0.2 -0.2l-2.4 -0.8zM490.1 331.7l-0.4 0.2l-0.3 3.1l0.6 0.6l1 -3.5zM497.2 315.6l0.3 0.6l0.3 0.2l1.2 0l-1.5 -1.2zM496.1 322.5l0.6 0.3l2.2 -2.2l-2.2 -1l-1 0.4l0.1 2z"/>
<path fill="#e08f75" stroke="#2b2422" stroke-width="0.32" stroke-opacity="0.75" d="M287.9 283.2l-0.4 0.1l-0.2 0.3l1.2 0zM297.4 283.2l-1.1 -2.1l-0.2 0l-1.5 0.5l-0.1 0.3l1.1 1.5l1.2 -0.1zM299.3 283.2l0.1 0l1 0l1.5 -1.3l0 -0.1l-1.3 -1.7l-1.5 1.5zM335.7 260.7l-1.4 -2.9l-0.1 0.1l-0.7 0.3l0.3 1.2zM343.6 314.6l0.9 1.1l0.2 -0.6zM344.8 306.1l2.3 0.1l-0.5 2.1l-2.2 0.2l-0.4 -0.8zM346.3 316.8l-1.3 -0.6l0.8 1zM347.7 300.3l0.3 0.1l1.6 1.9l-2.2 1.9l-0.9 -1l-0.2 -0.9zM350.9 301.1l-1 1.2l-0.3 0l-1.6 -1.9l2.8 -1.1zM355.4 250.7l0 -0.3l-0.6 0.4zM365.2 334.3l-0.8 -0.2l0.9 0.6l0.3 0.2zM378.4 313.6l-0.1 0l-0.7 0.6l-0.4 0.9l1.2 2.2l0.3 0l1.7 -2.2zM380.3 312.6l2.2 0.6l-1.1 2.1l-1 -0.2l-2 -1.5zM382.7 318l-0.7 -0.4l-1.4 0.8l-0.6 1.8l0.7 0.6l0.9 0.6zM394.1 276.5l0.2 0.7l1.8 0.5l-1.9 -1.6zM397.6 348.7l-0.7 -0.5l0.7 1zM404.3 295.8l0 3.3l0.2 0.1l2.5 -2.3l0 -0.4l-2.4 -1.2zM412.9 273.5l-0.6 -3.9l-0.8 -1.3l-4.4 0.3l-0.3 0.6l1.1 2l2.1 1.3l2.4 1zM432.9 273.7l3.1 -1.2l0.1 0.9l-1.5 2.6l-0.9 0.3l-0.2 -0.2zM457.5 347.9l-2.8 -0.3l-2.6 -2.1l0.3 -1.2l1.2 -1.1l1.1 -0.2l0.3 0l1.2 1.3zM482.1 224.5l0.3 -0.5l-0.8 0.2zM517.4 363.3l1.7 -0.1l-0.3 -1.1l-2.3 0.4zM528.6 377.2l-2.9 0.9l0.7 1l2.3 -1.3zM528.7 377l-0.1 0.2l0.1 0.6l0.9 -0.5zM439.4 248.9l0.1 2.4l2 0.8l0.2 -0.3l0.6 -2.8l-0.4 -0.3l-2.5 -0.1zM441.5 252.1l0.2 1.3l-2.4 2l-0.9 -1.3l-0.4 -2l1.5 -0.8zM442.1 247.3l-0.2 1.4l0.4 0.3l0.7 0l1.8 -1.5l-0.3 -0.2zM452.5 243.5l-0.8 1.3l-0.5 0.6l-2.4 -1.1l-0.3 -1.9l0.1 -0.1l3.4 0zM453.4 235.4l1.5 -2.6l0 0l0.7 0.1l0.4 2.7l-0.9 0.7zM457 255.2l6.6 -1.7l-0.1 -0.1l-8.1 -1.1l0.2 1.7zM469.4 217.8l-3.3 -0.6l0.3 1.3l0.5 0.3l2.3 -0.6zM470.8 222.9l1.8 -0.9l-0.3 -1.7l-2.4 -0.4l-0.3 0.5l0.2 2.3zM471.6 230l2.2 1.1l-1.5 1.7l-1.2 0l-0.9 -1.5l-0.1 -0.4zM409.1 294.9l-0.7 -0.1l-0.2 0.2l1.7 3.3l0.4 -1.7zM411.2 298.9l1.7 0.8l-0.1 2.3l-0.2 0.1l-2 -1.9l0.1 -1.2zM413.4 315.7l-0.9 -1.2l-1.7 1.9l2.2 0.6zM416.1 293.1l-0.9 -0.8l-0.3 0.2l-1.3 1.4l1.4 2.5l0.1 0l1.5 -1.9zM414.7 302.3l0.2 0.4l2.5 0.1l0.2 -2.7l-0.2 -0.3zM418.6 289.6l3.1 -1.3l0 -0.2l0 0l-1.8 -1l-2 0.3l-0.3 1.5zM417.6 300.1l2.2 1.4l-1.3 2.2l-1.1 -0.9zM421.7 288.1l2.6 -1.6l0.7 2l-0.3 1l-0.4 0.4l-2 -0.1l-0.6 -1.5zM421.9 305.6l0 0.1l2.6 1l0.7 -1.6l-0.4 -1.3l-0.9 -0.3l-1.6 0.3l-0.4 0.6zM425.5 292.3l-1.1 0.7l-0.1 1.6l2.3 0.7l0 0zM427.5 299.2l-0.6 2.8l-1.7 -1.3l-0.5 -1.9l2.1 -0.6zM430 303l0.1 0.6l-0.1 0.1l-2.6 0.1l-0.8 -1.1l0.3 -0.7l0.1 0zM430 303.7l-2 1.7l-0.3 -0.2l-0.3 -1.4zM427.7 305.2l-0.8 0.5l-0.5 2.4l2 0.5l0.7 -0.6l0.2 -1.4l-1.3 -1.2zM428.7 287.9l-0.7 -0.6l1.3 -2.1l0.1 0l1.3 2.1l0 0zM429.2 299.3l1.6 -0.4l0.3 -0.2l-0.1 -0.7l-1.9 -1.2l-0.5 0.2zM432.6 307.9l-2.2 0.3l-1.3 -0.2l0.2 -1.4l1.6 -1.3zM432.8 319.8l0.9 -0.7l0.1 -2.3l-0.4 -0.4l-2.9 1.7l0.9 1.5l1.2 0.2zM432.9 299.8l-0.4 -0.4l1.6 -2.7l1.4 0.4l0.2 1zM433.5 301.8l2.1 -1.4l0.5 -1.8l-0.4 -0.5l-2.8 1.7l0.4 1.9zM436.6 312.1l-1.1 2.2l-1.6 -0.2l-0.2 -1l2.8 -1.1zM436.1 298.6l1.9 0.5l1.1 -0.9l-1.8 -1.7l-1.6 0.3l-0.2 0.3l0.2 1zM439.7 288.2l-2.4 -0.4l-0.1 0l-0.1 0.1l2.1 2.1l0.4 -0.3zM438.6 301.5l-0.6 -2.4l1.1 -0.9l0.5 -0.3l1.6 2.4l-1.1 1zM438.3 312l2.1 0.9l-1.3 1.8l-1.2 -0.3l-0.5 -1.9zM441.8 303.6l0.6 0l0.5 1.9l-0.4 1l-1.4 0.4l-0.8 -1l0.5 -1.7zM439.1 310.3l1.3 0.6l1.3 -0.6l0.2 -0.9l-1.2 -1.3l-0.8 0.2l-1 1.6zM439.7 315.6l2 -0.9l0.9 1.4l-0.2 1.1l-2.5 0.1zM444.6 312.2l-1.3 0.6l-0.4 -0.1l-0.3 -1.4l2.1 -1.7zM445.5 295.7l-1.5 -1.2l0.2 -1.5l1 -0.6l1 0l0.6 1.1zM387.1 321.7l0.6 -2.1l-0.5 -0.8l-2.1 0.9l-0.1 0.7l0.8 0.9zM387.1 324.3l0.3 -2.1l-0.3 -0.5l-1.3 -0.4l-1.1 2l2.3 1.1zM392.6 312l-2.5 -2.4l1.1 -1.2l2.4 0.1l-0.8 3.5zM394 332.8l-1.2 1.7l-1.1 -0.1l-1.3 -1.6l0.1 -0.2l3.3 0zM393.8 314.9l-0.2 -2.4l0.1 0l2.9 0.6l0.8 0.6l-3.2 1.6l-0.3 -0.3zM396.7 310.2l0.8 -0.2l0.2 -3l0 0l-2.7 1.9l1.1 1.3zM400.7 320.4l0.6 2.2l-0.4 0.4l-2 -0.4l-0.3 -0.4l0 -2zM401.3 319.8l2.3 1.1l1.7 -1.1l-2.7 -2.3l-0.8 0.4zM400.5 341.3l2.5 1.7l2.3 -2.2l-1.2 -1.4zM414.5 342.8l-2.3 -0.8l0.2 -0.9l1.2 -1.4l1.9 1.7zM415.3 359.8l1.7 -0.1l0.2 -0.1l0.3 -0.5l-1.9 -1.7l-5.3 0.5l0.5 0.8l1.4 0.3l0.3 -0.1l0.3 0.3zM420 348.8l-0.4 0.9l-2.7 -0.3l-0.2 -0.7l0.7 -1.7l2.1 -0.4l0.5 1.6zM427.3 353.9l-0.7 -0.5l-0.8 0.3l-0.6 0.9l0 1.2l2.5 1.1l0.2 -0.2zM426.1 348.2l1 -0.1l1.8 1.3l-0.9 2l-1.4 -0.7zM427.8 363.8l-1.2 -1.9l1.1 -1.6l1.3 0.5l0.4 3.2l-0.1 0.1zM427.8 363.8l-1.1 1.1l-0.3 1.9l2.8 0l0.1 -2.7zM430.8 372.1l-1.1 -3.1l-2 1l-0.3 0.4l0 0.2l1.9 1.4l0.6 0.3zM430.8 325.9l-0.7 2.3l1.9 0l1.2 -1.8l0.1 -0.6l-0.5 -1.1l-0.2 0l-0.7 0.3zM431 358.2l-2.1 -2.3l1.1 -1.2l0.4 0.2l1.4 2.8l0 0zM430.7 375.2l1 -0.8l1.4 3.1l-1.2 1.1l-1.5 -1l0 -0.8zM432.8 319.8l0.9 1.6l-1.6 1.9l-0.4 -0.4l0.9 -3.1zM433.2 326.4l1.5 2.3l-0.4 0.8l-1.3 -0.4l-1 -0.9zM432.1 350l0 -3.4l0.6 -0.2l0.9 0.4l-0.1 3.4zM433.4 365.8l-0.4 2.1l2 1.2l0.7 -0.7l-0.1 -1.4l-0.8 -1.9l-0.2 -0.1zM434.2 376.6l0.3 -1.7l2.7 -0.4l0.3 0.6l-0.5 1.4l-1.3 1.1zM438 378.9l-1 0.7l-0.2 -0.2l-1.1 -1.8l1.3 -1.1l1 2.4zM440.6 343.6l-1.1 1.8l-1.7 -0.2l0.1 -2.1l0.1 -0.2zM445.6 372l-2.7 -0.3l-2.1 0.2l-0.4 0.6l1 2.1l0.4 0.1l3.4 -1.8zM447.6 342.2l1 0.9l1.2 -0.5l0.8 -1.2l-1.8 -1.8l-1.3 1z"/>
<path fill="#e08f75" stroke="#2b2422" stroke-width="0.32" stroke-opacity="0.9" d="M483.5 328.7l-2.9 -0.2l1.1 3.3l0.5 0.2l1.4 -3.1z"/>
<path fill="#e1d7d3" stroke="#2b2422" stroke-width="0.32" stroke-opacity="0.75" d="M292.8 282.7l-0.7 -0.3l-1.4 0.3l-0.5 0.9l2.8 -0.1zM341.1 311.6l-1 -2.4l0 0l-0.8 -0.2l1.7 2.6l0 0zM346.3 256.7l0.2 -0.8l-0.1 -0.1l-1.1 1.1zM380.2 325l0 0.7l-1.1 1.1l-0.1 0l-1.9 -1.6l-0.1 -2.2l2 0.7l0.1 0zM412.3 269.6l0.6 3.9l0.3 0.1l5.1 -2l1.2 -0.8l-3.6 -5.1l-3.2 2.3zM420 364.8l0.2 -0.3l-1.2 -1.7l-1.5 0.3l2.1 1.7zM429.9 372.3l-0.6 -0.3l0.2 0.2l0.1 0.9zM436.5 242.8l0.3 -0.2l1.2 -2.6l-2.3 2.3zM438.7 240.1l2.5 -1.1l-0.4 -1.2l-0.4 -0.2l-0.1 0.1l-2.3 2.3zM453.8 336l-0.3 0.2l0.1 2.5l0.2 0.2l0.7 0.3l2.1 -1l-1.5 -2.3zM461 385.3l-0.3 -0.1l-0.9 0.8l1.2 -0.1zM471.4 360.3l-3.4 -1.7l0.2 -0.9l2.4 -0.8zM502.9 362.8l0.3 2.4l1 -0.3l-0.6 -2zM507.2 364.8l0.4 0.2l0.1 0l-0.1 -2.5l-1 0zM518.4 365.5l-0.7 0.8l2.3 0.1l0 0zM520.7 365.9l0.9 -0.5l-0.5 -0.1zM525.4 363.8l-0.1 1l1.7 2.6l0.3 0.1l0.4 -0.3l0.4 -0.7zM436.8 242.6l3.1 0.1l-1.2 -2.6l-0.7 -0.1l0 0zM439.3 255.7l2 2.1l0.6 -0.6l0.9 -2.8l-1.1 -1l-2.4 2zM441.3 239l2.7 -2.6l-1.5 -0.5l-1.2 1l-0.5 0.9l0.4 1.2zM446.2 238.6l-1.4 -0.5l-0.6 -1.7l0.3 -0.5l1.5 -0.5l1.7 1.6l-1 1.5zM445.3 242.8l2.7 -0.5l-2.1 -2.1l-1.4 1.1l0.5 1.4zM447.7 237l0 0l0.1 -0.1l0.3 -2.3l-0.4 -0.7l-0.9 -0.4l-0.8 1.9zM448.5 244.7l0.3 -0.4l2.4 1.1l0.4 1.5l-3 1.3l-0.9 -1.2zM451.2 255l-2.6 -1.4l-1.1 0.6l-0.2 0.2l1.3 2.1l2.4 -0.7zM452.8 230.1l-1.1 1.1l0 1.3l3.2 0.3l0 0l-0.4 -1.3zM454.3 248.6l-0.9 -1.4l-1.5 -0.1l-0.4 2.6l2.3 0.3zM457 227.2l-2.3 -1.4l-0.5 0.2l-0.8 0.9l0.2 0.9l2 1.1l0.6 -0.1zM452.9 243.5l1.4 1.2l1.3 -0.8l-0.2 -0.6l-0.8 -0.8zM456.8 250.2l-1.7 1.5l-0.7 -0.2l-0.6 -1.5l0.5 -1.4l2.2 0zM457.8 225l0.8 0.6l-0.3 0.6l-1.3 1l-2.3 -1.4l1 -0.9zM457.5 229.9l-1.3 -1.1l0.8 -1.6l1.3 -1l0.9 2.4l-0.3 0.8zM455.3 238.5l0.5 1l1.3 0.3l0.2 -0.2l1.1 -2.5l-0.6 -0.7l-2.2 1.2zM460 239.2l-2.7 0.4l-0.2 0.2l0.8 1.9l0.3 0.2l2.5 0l0.1 0l0.1 -0.8zM460.6 236.8l-0.2 0.5l1.9 0.7l1.2 -0.4l-0.5 -2.2l-0.9 -0.3zM465.1 230.9l0.7 0.3l1.1 1.1l-0.1 1.2l-1.9 0.5l-0.7 -0.8l-0.7 -2.2l0 -0.2zM463 235.4l0.5 2.2l1.5 0.5l0 -2.6l-0.4 -0.8zM468.3 229.3l-0.7 -0.4l-1.8 2.3l1.1 1.1l2.2 -1.9zM468.9 236.3l-3.9 -0.8l-0.4 -0.8l0.3 -0.7l1.9 -0.5l1.1 1zM472.2 219.8l-0.3 -1.6l-0.3 -0.1zM476.3 228.9l0.1 -1.1l-2.8 -1.2l-0.5 0.1l-0.1 0.9l1.9 1.8zM475.4 232.5l0.3 8.9l1.9 -2.9l0.3 -5.1l-1.3 -1.4zM476.4 229l2 0.3l0.8 -1l-1.3 -1l-1.1 -0.4l-0.4 0.9l-0.1 1.1zM481.9 226.2l0.2 -1.6l0 -0.1l-0.5 -0.3l-2.7 1l-0.2 0.3l0.5 0.6l1.2 1zM407.7 299.8l0.7 -1.3l-1.4 -1.6l-2.5 2.3l0.1 0.4l1.1 0.4zM407.7 299.8l0.7 -1.3l1.5 -0.1l0.8 0.6l-0.1 1.2l-1.1 1.4l-0.7 0.3l-0.6 -0.7zM408.8 301.9l-0.3 1.3l1.4 0.9l1.4 -0.1l0.5 -1.2l-2.3 -1.2zM411.3 311.1l-0.8 -1.6l0.1 -0.2l2.4 -1.2l0.1 0l0.2 0.4l0.1 1.6l-1.2 1.2zM409.1 312.9l2.2 -1.8l0.9 0.2l0.6 2l-0.3 0.2l-3.4 0zM412.6 305.8l-0.2 0.7l0.6 1.6l0.1 0l2.7 -1.1l0.1 -1.7l-1 -0.9l-0.9 0.5zM415.3 285.8l2.4 -0.8l-1.3 -1.3l-1.1 1.9zM417.3 308.4l-1.5 -1.4l0.1 -1.7l0.2 -0.1l1.6 0.9zM424.5 280.7l1 -1.5l-0.8 -1.1l-2 0.6l-0.1 1.2l1.3 1.1zM425.6 292.1l2.4 -0.2l0.2 2.3l-1.6 1.1l-1.1 -3zM427 302l-0.1 0l0 0l0.6 -2.8l1.3 0.3l0.3 1.5zM426.4 308.1l2 0.5l0.2 1.1l-0.9 1.6l-0.5 0.3l-0.8 -0.5l-0.9 -2.8zM433 278.7l0.6 0.5l0.4 2.2l-0.5 0.7l-0.7 0l-1.8 -1.5zM433.5 286.9l-0.1 -1.4l-2.3 -1.4l-0.1 0l-1.6 1.1l1.3 2.1l2.6 -0.1zM435 284.7l0.7 -1.5l-2 -0.7l-0.1 2.8zM433.7 319.1l0.1 -2.3l2.1 0l0.5 0.8l-0.4 1.8l-0.2 0.1zM432.8 319.8l0.9 -0.7l2.1 0.4l0 1.9l-1 0.4l-1.1 -0.4zM437.9 283.3l0 1l-1.2 1l-1.7 -0.6l0.7 -1.5l0.2 -0.1zM438.2 291.3l-1.1 -0.9l-1.8 1.3l1.7 1.2l1 -0.3zM436.7 280.3l0 -0.2l2.3 -0.5l0.8 0.5l0.3 1.5l-0.6 0.8l-1.3 0.5zM440.7 287.2l-0.3 -1.1l0.4 -0.4l1.8 0l1.1 1.7l-1.3 0.9l-0.1 0zM442.7 280.8l1.4 0.5l1 2.1l-2.2 -0.1l-0.8 -1.9zM442.5 306.5l2 1.9l0.3 0l0.4 -3l-2.3 0.1zM444.7 309.6l0.2 -0.6l0 -0.5l-0.1 -0.1l-0.3 0l-2.6 1l-0.2 0.9l0.9 1zM447.2 288.1l-0.3 1.4l-1.7 0l-1 -2.2l0.4 -0.3l1.8 0.1zM446.9 289.5l-1.7 0l-0.8 0.8l0.8 2.1l1 0l1.1 -1.3l0.1 -0.8zM446.7 300.1l0.7 -2.1l-1.8 -1.2l-0.1 0.1l-1 1.8l0.9 1.2l1.2 0.3zM448.4 303.2l1.9 3.1l1.3 -0.5l0.2 -0.4l-0.2 -1.1l-2.8 -1.4zM394.7 318.4l-2.4 0.3l-0.8 0.9l2 1.9l1.5 -2.6zM396.5 301.1l1.5 1.5l0.1 0.9l-1.8 1.5l-0.2 -0.1l-1.4 -2.7zM396.8 306.3l-0.5 -1.3l1.8 -1.5l2 0.9l-0.9 2.3l-1.5 0.3l0 0zM395.3 316.6l-1.1 -1.3l3.2 -1.6l1.2 0.3l0.3 0.4l-0.7 2.1zM400.5 341.3l0.1 4.3l2.7 -1.3l-0.3 -1.3l-2.5 -1.7zM408.1 342.8l1.5 1.1l1.4 -0.9l0.3 -0.6l-2.1 -1.6zM417 359.7l-1.7 0.1l-0.6 1l1.5 1.2zM415.5 355l0.7 -1.7l3.1 1.1l-0.3 1.1l-3.1 -0.1zM422.7 329.9l-0.5 2.1l-1.5 0.8l-1.7 -0.2l0 -0.1l-0.4 -1.2l1.5 -2.1l0.8 0l1.5 0.2zM425.2 347.8l1.2 -3l0.9 -0.1l0.3 0.2l1 0.9l-1.5 2.3l-1 0.1zM433.6 356.8l-1.6 0.9l2.2 3l0.5 0.1l1.5 -1.9l-1.7 -1.7zM437.9 322.6l0.7 -0.4l0.3 0l1.4 2.2l-1.4 1.1l-1.7 -0.6l0 -0.3zM442.3 354l-1.9 0.1l-0.7 2.1l0.7 0.6l2.4 -0.3zM441.6 360.9l-1.6 0.7l-1.1 2.7l1.6 0.3l2.2 -0.9l-1 -2.7zM444.9 341.2l0.9 1.6l-1 1l-2.3 -0.3l-0.4 -0.5l-0.1 -0.8zM444.9 341.2l0.9 1.6l1.8 -0.6l-0.1 -1.6l-1.6 -1.1l-0.9 1.6zM452.9 324l-1.3 1.9l-1.9 -1.1l0.7 -1.6l2.3 0.7z"/>
<path fill="#e1d7d3" stroke="#2b2422" stroke-width="0.32" stroke-opacity="0.9" d="M459.2 291.2l-0.6 3.9l0.8 0.2l1.5 -0.5l0 -3.2l-0.8 -0.3zM462.7 295.9l-0.9 -0.8l-0.9 -0.3l-1.5 0.5l0.5 3.3l0.7 0.3zM468.4 285.9l-1.7 0.9l-0.9 -0.1l-1.4 -2l3.3 -1l0.8 1.9zM462.8 295.9l2.9 -2.2l0.1 -0.3l-0.7 -0.7l-1.1 -0.7l0 0l-2.2 3.1l0.9 0.8zM462.8 295.9l1.4 1.6l-2 2.3l-1.4 -0.6l-0.2 -0.3l2.1 -3zM467.2 293.1l-1.4 0.3l-0.7 -0.7l1.6 -3l0.8 -0.2l0.6 0.2l0.3 0.5zM469.5 290.6l3 -2.6l-3.2 -0.4l-1.2 2.1l0.3 0.5zM463 303.3l0.4 0.5l2 0.1l0.3 0l-0.2 -3l-0.3 -0.1l-1.8 0zM463.7 307.3l1.7 -3.4l-2 -0.1l-1.4 2.7zM461.8 310.4l-1 -1.1l-0.5 -2.5l1.7 -0.3l1.7 0.8l0.4 0.4l-2 2.7zM468.3 301.4l-2.1 -0.8l-0.7 0.3l0.2 3l0 0l1.5 0.1zM463.7 307.3l1.7 -3.4l0.3 0l0 0l0.4 4.4l-0.4 0.1l-1.6 -0.7zM463.9 314.7l-1.7 1.9l-1.4 -2.1l0.8 -1.1l0.9 0.1zM468.4 301.3l0 -2.7l0.7 -0.3l1.1 0.5l0.4 0.6l-1 2.1zM468.8 305l-2.2 3.3l-0.4 0.1l-0.1 -0.1l-0.4 -4.4l1.5 0.1zM463.9 314.7l-1.7 1.9l-0.1 1l2.4 0.7l0 -3.6zM473.1 296.4l-0.8 -0.3l-0.8 -0.8l0.1 -0.8l2.6 -2.2l-0.1 4zM474.8 300.1l0.1 -3.6l-0.8 -0.2l-1 0.1l-0.7 3zM467.8 312.1l1.7 0.7l-1.1 3l-1.1 -0.4l-0.6 -0.6zM467.2 319.5l-1.5 2.5l-0.2 0l-1.3 -2.2l0.3 -1.5l0.5 0l2 0.9zM476.6 293.2l2 0.8l0.9 -0.1l-1.3 -3.5l-0.6 0.3l-1 2.5zM472.5 307.1l-2.7 2.1l-0.1 0.1l0.4 0.4l2.6 0.5l0.3 -2.9zM464.9 323.9l0.5 -1.8l0.1 -0.1l0.2 0l1.9 0.9l0.3 0.6l-1.1 1.1zM481.2 291.3l-0.9 2.7l-0.8 -0.1l-1.3 -3.5l1.6 -1.7zM476 300.4l2.5 0.8l-2.1 2.4l-0.2 0l-0.6 -3.1zM474.3 306.9l-1.3 0.4l-0.3 2.9l0.8 0.8l1.1 -0.5l0.4 -2.7l-0.5 -0.8zM471.8 317.1l-1.5 -0.8l1.1 -2.5l1.8 0.2l-1.3 3.1zM469.9 320.3l1 0.3l0.9 -3.5l-1.5 -0.8l-1.2 0.1l-0.2 0.6zM478.7 297.6l2 -2l1 2.8l-0.3 0.6l-0.6 0.1zM477.9 297.9l0.9 3.2l0.1 0.1l1.9 -2.1l-2.1 -1.5l-0.8 0zM476.7 308.3l0.3 0.4l-1.1 2.1l-1.3 -0.3l0.4 -2.7zM473.4 311.1l0.1 -0.1l1.1 -0.5l1.3 0.3l1 0.9l-2.3 2.3l-0.6 -0.3zM469.3 323.7l-0.4 0.1l0.1 3.2l0.8 0.7l0.2 0l1.6 -3.2zM474.4 318.2l2.6 -2l-0.6 -1.2l-1.6 -0.6l-1.2 3.1zM471.6 321.1l2.3 0.9l0.5 0.8l-2.6 1.7l0 0zM485.9 293.9l-1.4 -0.4l-0.5 -0.6l-0.1 -1l3.1 -1zM479.8 305.6l2.5 0.3l0.4 -2.2l-1.9 -0.8zM479.6 308.2l-0.6 -2.2l0.8 -0.4l2.5 0.3l0.9 1l0 0.1l-0.1 0.2zM479.6 308.4l-1.5 0.8l-0.1 2.8l0.5 0.3l2.2 -2.4zM477 316.2l-0.6 -1.2l2.1 -2.6l1.2 1.1l0 0l-1.4 2.8l-0.6 0.2zM475.7 322.8l1.3 -2.9l-2.1 -0.9l-1 3l0.5 0.8l0.3 0.1zM487.4 294.6l-1 -0.3l-0.5 -0.4l1.1 -3l0.1 -0.1l0.2 0l1 0.7l0.5 2.2zM487.5 297.4l-0.1 0l-1.2 0.2l-1.3 -0.3l-0.3 -0.3l1.8 -2.7l1 0.3zM489 291.2l2.1 0.1l0.3 -1.6l-1.2 -0.7zM485.8 300.7l2.1 0.6l0.4 0.3l-3 2.3l-0.5 -0.4l-0.2 -2.6zM482.9 313.7l-1.6 -0.7l-1.6 0.5l0 0l1.5 2.5l2.1 -1.6zM477.4 330.6l-0.4 -3.5l-0.1 0l-1.6 2.3l0.1 0.2zM489.9 294.1l1.8 -2l1 0.1l0 3.4l-2.4 -0.8zM489.1 297.4l1 0.8l0.2 0.7l-1.7 2.8l-0.3 -0.1l-0.4 -0.3l-0.5 -3.9l0.1 0zM478.9 323.9l1.9 -2.4l1.1 2.7l-0.5 0.4zM478.9 323.9l2.5 0.7l-1 2.5l-0.6 0.5l-1.2 -0.7l0.2 -2.9zM492.7 292.2l0.6 -0.2l1 0.1l0.6 0.9l-2 2.8l-0.2 -0.2zM491.9 299.6l-1.6 -0.7l-0.2 -0.7l2.9 -2.1l0.5 0.4zM481.6 321l1.7 -2.4l1.6 0.6l-1.4 2.4zM481.7 331.8l-1.6 0.2l-1.7 -0.5l-0.2 -0.4l1.8 -3.1l0.6 0.5zM480.1 332l-1.7 -0.5l-0.9 2.7l0.9 0.2l1.1 0.2zM492.7 300.5l1.4 -0.3l0.4 -3.3l-0.2 -0.1l-0.8 -0.3l-1.6 3.1l0.6 0.8zM480.7 335.4l-1.2 -0.8l0.6 -2.6l1.6 -0.2l0.5 0.2l0.3 0.3zM483.5 328.7l0.4 -2.1l1 -0.3l0.8 0.3l0.9 0.8l-1.9 2l-1.1 -0.5zM495.9 297.1l0.3 3.9l2.3 -2.5l0 -0.2l0 0l-0.4 -1.6zM490.9 313l1.6 1.3l0.1 0.1l-1.2 2.1l-0.9 -0.2l-1.1 -3.2zM487.6 327.8l-1 -0.4l-0.9 -0.8l1.7 -3l0.8 0.4l0 3.7zM486.5 330.7l1.1 -2.9l-1 -0.4l-1.9 2l0.4 0.7zM484.8 333.1l-1.7 -0.6l0.1 3.2l0.8 0.5l0.5 -0.1zM489.3 328l0.6 0l0.5 -0.9l-0.1 -3l-1 -0.2l-1.1 0.1l0 3.7zM484.9 333.1l2.1 1.5l-0.9 1.8l-1.6 -0.3l0.3 -3zM495 314.7l1.4 0.3l0.8 0.6l0.3 0.6l-3.5 2.3l-0.1 -0.1l-0.5 -0.6zM492.9 326.3l0.6 -1.5l-0.4 -0.5l-2.6 -0.3l-0.2 0.1l0.1 3zM488 331.7l1.7 0.2l0.4 -0.2l0.6 -2.6l-0.8 -1.1l-0.6 0zM486.8 337.5l2.7 -0.1l0.5 -1.8l-0.6 -0.6l-1.8 -0.7l-0.6 0.3l-0.9 1.8zM490.4 327.1l-0.5 0.9l0.8 1.1l1.4 0.3l1 -0.2l0.8 -0.8l-1 -2.1zM497.8 316.7l2 3.8l-0.9 0.1l-2.2 -1zM493.9 324.8l-0.4 0l-0.6 1.5l1 2.1l2.3 -2.3l0 0z"/>
<path fill="#e46747" stroke="#2b2422" stroke-width="0.32" stroke-opacity="0.75" d="M407.9 271.2l-1.1 -2l-0.6 -0.5l-1.6 0.1l-0.2 2.3l1.7 0.5zM452.4 348.9l-1.7 -2.6l1.4 -0.8l2.6 2.1zM456.8 250.2l6.7 3.2l-8.1 -1.1l-0.3 -0.6zM430.8 372.1l-1.1 -3.1l0.6 -0.8l0.8 0.2l1.5 2.4l-1 1.4zM440.1 326.8l1.2 0l1.3 1.5l-0.1 1.1l-2.3 0.2l-1.3 -1.6z"/>
<path fill="#e46747" stroke="#2b2422" stroke-width="0.32" stroke-opacity="0.9" d="M468.5 293.6l1 1.9l-0.3 0.3l-2.7 0.4l-0.8 -2.5l0.1 -0.3l1.4 -0.3z"/>
<path fill="#ee997e" stroke="#2b2422" stroke-width="0.32" stroke-opacity="0.75" d="M321.9 300.1l0 0l-0.3 0.4l1 0.2zM344.8 306.1l-0.8 1.6l-2 -0.2l-0.4 -1.4l0.2 -0.3l2.4 -0.3zM351 298.9l-0.2 0.4l-2.8 1.1l-0.3 -0.1l-0.6 -1.3l0.2 -0.9l2.1 -0.2zM369.3 246.9l0.9 -0.4l-1.3 -0.6zM371.5 248.2l0.8 0.2l1.3 0.1l0 -0.4l-2.4 -1.1zM440.8 237.8l0.5 -0.9l-0.9 0.7zM455.2 352.2l-3 2l-0.6 1.2l0.5 0.8l2.5 0l1.1 -4zM484.6 236.1l0.2 0.9l0 3.5l-1.3 4.1l-2.7 5.1l-4.6 3.3l-1.9 -5.3l-0.2 -1.2l0.8 -3l0.8 -2.1l1.9 -2.9l1.7 -2l1.5 -1.2l0.9 -0.4zM525.6 360.3l0.5 -1l-1.7 0.7zM532 364.9l0.9 0.6l0.3 -0.3l-1 -1.4zM432.7 251.4l-0.2 -1.9l-3.3 -0.2l-0.4 1.9l0.3 0.1l2.7 0.4zM434.5 244.7l-0.5 -0.7l-1.4 1.4l1 0.2zM434.1 253.4l1.8 1.4l0.1 0.2l-0.1 0.8l-4 0.5zM452.8 230.1l0 -1.3l0.8 -1l2 1.1l-1.1 2.6zM460.7 241.9l-0.9 3.2l-2.3 -0.4l0.7 -2.8zM461.7 234l2.5 -0.8l0.7 0.8l-0.3 0.7l-1.6 0.7l-0.9 -0.3zM462.3 238l1.2 -0.4l1.5 0.5l3.6 3.2l-6.3 -1.6zM469.8 222.7l-0.2 -2.3l-2.5 0.6l0 0l1.8 2zM474.9 229.4l-1.9 -1.8l-0.9 1l-0.5 1.4l2.2 1.1l0.4 0zM408.3 311.3l0 -1.2l2.2 -0.6l0.8 1.6l-2.2 1.8zM410.4 294.4l-0.6 -2.8l0.2 -0.1l1.9 1.8l0.2 0.7l-0.3 0.3zM410.3 296.6l-0.4 1.7l0 0.1l0.8 0.6l0.5 -0.1l1.6 -1.8l-0.9 -1.1zM419 292.3l-3.1 -2l-0.4 0.5l-0.3 1.5l0.9 0.8zM418.9 305.8l-0.1 -1.7l-0.3 -0.3l-2.4 1.4l1.6 0.9zM424.7 312.2l-0.1 -0.8l0.1 -0.1l1.7 -0.2l0.8 0.5l-0.1 0.2l-1.2 1.2zM429.2 299.3l-0.6 -2.3l-1.4 0.1l-0.4 1.1l0.7 1l1.3 0.3zM430 303l-3 -1l2.1 -1l1.2 0.5zM433.6 289.7l0 0.1l-0.1 1.6l0.3 0.2l1.5 0.1l1.8 -1.3l-0.6 -1zM435.8 294.1l1.2 -1.2l-1.7 -1.2l-1.5 -0.1l0.9 2.1zM434.8 303.2l0.3 0.7l-0.2 1.4l-1 0.7l-0.5 -0.4l-0.5 -2.3l0.7 -0.8zM437.7 309.5l-0.7 -1l-1.2 -0.1l-0.7 2.1l1.2 0.9zM439.6 289.7l-0.4 0.3l-0.6 1.1l3.2 1l-0.7 -2.1zM439.7 317.6l0.2 -0.3l-0.2 -1.7l-0.6 -0.9l-1.2 -0.3l-1.1 0.9l2.5 2.4zM442.6 285.7l-1.8 0l0.3 -1.5l1.5 -0.6l0.4 1.6zM439.7 317.6l0.2 -0.3l2.5 -0.1l1.5 1.5l-0.4 1.4l-0.4 0.4l-2 -0.1l-1.2 -1.9zM383.5 326.4l-1.5 0.4l-0.8 2.4l1.8 0.5l0.9 -2.8zM388.6 309.9l1 3.5l0.4 0.1l2.6 -1.5l-2.5 -2.4l-1.3 0.1l-0.1 0zM393.6 321.6l-0.1 -0.1l1.5 -2.6l1.7 1.2l-1.1 2.3zM395.7 322.7l2.9 -0.5l0 -2l-0.6 -0.5l-1.3 0.4l-1.1 2.3zM397.9 327.3l-1.4 -0.2l-0.6 1.1l0.3 2.1l1.1 0.7l0.2 0l0.8 -1.5l0.2 -1.5zM402.7 316.7l-2.9 -2.5l1.4 -0.5l2.4 1.4zM408 346.1l-1.4 -2.5l-2.6 1.2l0.4 1.5l2.4 0.2l1.1 -0.4zM409.6 343.9l-0.6 1.9l1 0.3l1.8 -1.2l-0.8 -1.9zM420.1 329.2l-1.9 -1.3l-0.8 0.2l-0.4 0.6l0.2 1.5l1.4 1.1zM430.9 352.1l0.5 -1.8l-1.8 -1.1l-0.7 0.2l-0.9 2l0 0l2 1.4zM430.7 375.2l1 -0.8l0.7 -0.7l-0.8 -1.5l-0.8 -0.1l-0.9 0.2l-0.3 0.8l0.2 1.4zM442.3 369.2l0.6 2.5l-2.1 0.2l0.1 -1.7zM443.5 320.1l3.3 2.1l-2.1 1.3l-1.8 0l0 0l0.2 -3zM451.6 350.2l-0.8 -0.1l-1.5 -1.2l1.2 -2.6l0.2 0l1.7 2.6z"/>
<path fill="#ee997e" stroke="#2b2422" stroke-width="0.32" stroke-opacity="0.9" d="M474.9 296.5l0.4 -0.1l1.3 -3.2l0 0l-2.4 -0.9l0 0l-0.1 4zM470.1 309.7l0.1 2.8l0.5 0.2l2.7 -1.6l0.1 -0.1l-0.8 -0.8zM472.6 329.5l-1 -0.1l-1.4 2.4l0 0l1.6 0.8l1.8 -0.2z"/>
<path fill="#eec7b6" stroke="#2b2422" stroke-width="0.32" stroke-opacity="0.75" d="M326.8 301.5l0.8 0.1l-0.3 -0.6zM344.2 300.8l-1.6 1.3l0.5 1.3l0.9 0.3l0.6 -2.4zM343.1 303.4l0.9 0.3l0.3 0.2l-0.1 1.6l-2.4 0.3l0.2 -1.4zM349.6 297.3l-0.7 -2.3l-0.6 0.1l-1.4 1.7l0.4 1.3l2.1 -0.2zM350.5 253.3l0.5 0.2l1.4 -0.3l0.6 -1.1l-0.1 -0.3l-2.4 1.2zM350.8 296.4l-0.7 -1.9l-1.2 0.5l0.7 2.3zM382.7 258.2l2.7 1.1l1.6 -0.4l-4.5 -1.3zM392.2 272.5l0 0.2l0.2 -0.7zM399.3 290.6l-1 0.7l1.2 2.4l0.2 -0.2l1.1 -2.6zM401.9 294.8l-1.5 0.8l-1 -1.6l0.1 -0.3l0.2 -0.2l2.6 -0.2l0.3 0.6zM401.8 298.3l-2.3 2.1l-0.9 -0.6l0.5 -2.4l1.1 -0.3l1.5 0.9zM401.5 290.7l0.7 0.9l2.2 -0.1l0.4 -1.9l-1.6 -0.8l-1.5 1.2zM410.8 358.7l-0.5 -0.8l-2.8 -2.6l-0.5 0.1l-0.3 0.3l-0.7 5.4l0.9 0.6l4.2 -2.1zM432.1 379.3l-0.2 -0.7l-1.5 -1l-0.1 0l0.4 2.4zM446.5 233l0.5 -0.9l-1 0.8zM452.6 351.2l-1 1.5l0.6 1.5l3 -2zM470.6 356.9l-2.4 0.8l-1.3 -1.8l4.9 -1.4l0.2 0.6l-0.2 0.3zM476.6 225.2l0.3 0.3l1 0l-1.2 -0.3zM478.7 225.5l0.2 -0.3l-0.8 0.3zM503.6 362.9l0.3 -0.2l-1 0l0 0.1zM503.2 365.2l0.2 1.2l1.3 -0.1l0.1 -0.7l-0.6 -0.7zM515.9 366.1l-0.6 -1.2l-0.6 -0.2l-0.2 0.1l0.1 1.4l1.3 0zM514.3 376.9l0.3 -0.4l-0.8 0.5zM513.6 381.5l-0.2 -0.3l-2 0.2l3 3zM519.6 383.2l-1.7 0.1l-1.2 1.6l2.9 -1.7zM522.1 242.2l-0.6 0.4l0.8 -0.4zM533.5 374.7l-0.5 -1.1l-0.3 -0.1l-4 3.4l0 0.1l0.9 0.3l3.6 -2.2zM533.5 374.7l-0.3 0.4l0.4 -0.2zM534.1 366.4l-0.9 -1.2l-0.3 0.3l0.4 1zM534.4 369.3l1.3 -0.6l-1.6 -2.3l-0.8 0.1l-0.7 2.2zM431.5 255.1l-2.4 -3.8l2.7 0.4zM444.8 238.1l-2.1 1.9l-0.3 0l-1.1 -1l2.7 -2.6l0.2 0zM446.8 233.5l-0.3 -0.5l-0.5 -0.1l-1.9 1.6l0.4 1.4l1.5 -0.5zM449 231.4l-1.1 -0.1l-0.3 0.3l-0.6 0.5l-0.5 0.9l0.3 0.5l0.9 0.4l2.5 -0.8zM449 240.6l-2.3 -2.1l-0.5 0.1l-0.3 1.6l2.1 2.1l0.5 0.1l0.1 -0.1zM448.7 249.9l1.9 0.7l0.9 -0.9l0.4 -2.6l-0.3 -0.2l-3 1.3l-0.1 1.5zM451.7 254.4l-1.3 -2.3l-1.6 1l-0.2 0.5l2.6 1.4zM453.4 226.9l-1.6 -0.8l-1.9 2.4l0.3 0.4l2.6 -0.1l0.8 -1zM452.8 230.1l-1.1 1.1l-1.6 -1l0.1 -1.3l2.6 -0.1zM452.7 236.8l1.3 1.5l-1.8 1.5l-0.8 -2.1zM453.4 254.5l0.9 2.2l-1.9 0.9l-0.6 -0.2l-0.8 -1.6l0.2 -0.8l0.5 -0.6l0.8 -0.3zM454.4 261.1l-0.3 2.3l-5.2 -1.9l-0.1 -0.3l0.2 -0.3l0.1 -0.1l4.6 -1l0.5 0.3zM454.6 241.5l2.3 0.6l-1.5 1.2l-0.8 -0.8zM453.4 254.5l2.2 -0.5l-0.2 -1.7l-0.3 -0.6l-0.7 -0.2l-1.1 0.6l-0.8 2zM455.4 259l-0.1 -2.1l-1 -0.2l-1.9 0.9l1.3 2.2l0.5 0.3zM460.3 230.5l1.2 -0.5l1.2 0l0.5 0.2l0.3 0.6l0 0.2l-2.5 2.3l-1.1 -0.2l-0.1 -0.5zM467.6 224.6l0.3 0l1 -1.6l-1.8 -2l-1.4 0.9zM479.3 236.5l-1.7 2l0.3 -5.1l1.2 -0.7zM484.6 225.3l0.4 -1.1l-0.7 -0.9l-1.9 0.7l-0.3 0.5l0 0.1zM408.5 303.2l-1.8 1l-0.1 1.1l3 0.7l0.3 -1.9zM409.6 307.3l1 2l-0.1 0.2l-2.2 0.6l-1 -1.4l-0.1 -0.3l0 -0.2zM409.9 304.1l-0.3 1.9l0.4 0.7l2.4 -0.2l0.2 -0.7l-1.3 -1.8zM413.3 290.2l2.2 0.6l-0.3 1.5l-0.3 0.2l-2.3 -0.8l-0.3 -0.9zM417.7 285l0.3 0.2l1.3 -0.9l0 -0.3l-1.5 -1.5l-1.4 0.8l0 0.4zM419.9 287.1l0.2 -1.9l-0.8 -0.9l-1.3 0.9l-0.2 2.1l0.1 0.1zM422.7 278.7l-0.1 1.2l-1.8 0.6l-0.6 -2.1l0.2 -0.5l1.8 0.2l0.1 0.1zM423.8 281.9l-1.6 0.5l-0.4 1.3l0.4 1l1.4 0l0.7 -1.6zM422.3 309.1l-0.3 1.2l0.3 0.8l2.3 0.3l0.1 -0.1l0 -2.7zM424.2 312.6l0.2 2.1l1.6 0.2l-0.1 -1.9l-1.2 -0.8zM424.4 314.7l-1.6 0.3l-0.2 2.5l0.5 0.7l0.3 -0.1l2.9 -2.1l0.2 -0.6l-0.5 -0.5zM428.6 297l0.5 -0.2l0.7 -2l-1.6 -0.6l-1.6 1.1l0 0l0 0.4l0.6 1.4zM429.4 278.1l-0.3 1.5l0.1 0.8l1.3 0.2l0.5 0l2 -1.9l0 0l-2.4 -1.1zM430.6 277.6l0.8 -1.8l2.1 0.3l0.2 0.2l-0.7 2.4zM434.7 293.7l-0.9 -2.1l-0.3 -0.2l-2 1.3l-0.2 1.6l1.9 1zM433.5 301.8l0.1 0.7l-0.7 0.8l-1.9 1.1l-0.9 -0.8l-0.1 -0.6l0.3 -1.5l0.1 0l2.9 0.2zM433 278.7l0.6 0.5l1.7 -0.1l0.2 -2.4l-0.9 -0.7l-0.9 0.3l-0.7 2.4zM435.5 281.2l-1.5 0.2l-0.4 -2.2l1.7 -0.1l1.2 0.6l0.2 0.4l0 0.2zM435.3 279.1l1.2 0.6l0.9 -2.5l-1.9 -0.5zM436.6 312.1l-1.1 2.2l1.2 1.1l0.1 -0.1l1.1 -0.9l-0.5 -1.9zM440.8 285.7l-0.4 0.4l-1.3 -0.4l-1.2 -1.4l0 -1l0.3 -0.4l1.3 -0.5l1.6 1.8zM440.7 287.2l-0.3 -1.1l-1.3 -0.4l-1.8 2.1l2.4 0.4zM445.5 283.5l-0.9 1.8l-1.6 -0.1l-0.4 -1.6l0.3 -0.3l2.2 0.1l0.4 0.1zM445.4 299.9l-1.3 1l-0.9 0.4l-0.4 -0.5l0.8 -2l0.9 -0.1zM443.2 301.3l0.1 1.5l1.7 0.5l0.9 -1.3l-1.8 -1.1zM449 285.3l0.5 1.6l-0.2 0.6l-2.1 0.6l-0.8 -1l0.5 -1zM449.3 295.3l-0.4 -0.4l-0.3 -0.4l0.7 -2.5l1.4 -0.5l0.6 0.4l0.5 0.8l-0.4 1.8l-0.1 0.2zM451.3 291.9l2.1 -2.6l1.8 -0.6l0.6 1l-2 2.7l-2 0.3zM452.7 298.8l0.1 0l1.7 3.2l-0.6 0.1l-2.6 -1.1l0.1 -1.4zM451.7 303.8l2.2 -1.7l-2.6 -1.1l-0.4 0.5zM383.2 321.5l-0.1 -0.1l-0.3 -3.3l1.2 0.1l1.1 1.5l-0.1 0.7zM391.1 306.8l-0.2 -0.2l-0.4 -0.1l-0.4 0l-1.3 2.7l0 0.5l1.3 -0.1l1.1 -1.2zM393.6 308.5l-2.4 -0.1l-0.1 -1.6l2.3 -0.7l0.6 2.1zM393.8 314.9l-3.3 0.7l1.7 2.1l1.7 -2.7zM394 308.2l0.1 0l2.7 -1.9l-0.5 -1.3l-0.2 -0.1l-2.6 0.8l-0.1 0.4zM394.8 336l0.8 0.1l0.1 0l-0.1 -2.9l-1.2 -0.1zM396.5 301.1l1.5 1.5l1.8 -1.5l-0.3 -0.7l-0.9 -0.6l-1.9 0.5zM397.5 331l2.3 1.1l-2.6 1.7l-0.7 -0.7l0.8 -2.1zM404.2 307l-0.2 2.2l-0.4 0.6l-2.4 -0.7l-0.1 -1l0.8 -0.8zM404.3 332.9l0.1 0.3l-1.4 1.9l-1.3 0.4l-1.1 -0.7l0 -1.6zM402.7 317l-0.1 0.5l2.7 2.3l0.3 0l1.1 -1.8l-0.5 -1.2zM405.4 311.8l1.9 2.4l1.7 -0.3l0.1 -0.4l0 -0.6l-0.8 -1.6zM415.9 355.4l3.1 0.1l0.4 1.1l-0.4 1.6l-1.5 0.9l-1.9 -1.7zM422.7 365.9l0.3 -1.8l-0.9 -0.3l-1.9 0.7l-0.2 0.3l0 0.3l2.3 1.6zM427.8 363.8l-1.2 -1.9l-1.6 0.1l-1.2 1.8l2.9 1.1zM427.4 370.4l0.3 -0.4l-1.3 -3.2l-1 0.3l-0.4 0.3l-0.6 0.7l2.7 2.2zM436.8 355.2l1.2 1.6l-0.8 1.9l-1 0.2l-1.7 -1.7zM434.6 365l0.2 0.1l2.9 -1.1l-0.4 -1.1l-2.5 -1.9l-0.7 3zM437.5 366.2l-1.9 0.8l-0.8 -1.9l2.9 -1.1l0.6 0.3zM441 358.9l-0.6 -2.1l-0.7 -0.6l-1.7 0.6l-0.8 1.9l0.8 0.7l3 -0.4zM439.3 368.1l2.2 -0.9l-1 -2.6l-1.6 -0.3l-0.2 0.1zM439 368.6l1.9 1.6l-0.1 1.7l-0.4 0.6l-2.4 0l-0.3 -0.5l0.7 -3.2zM442.9 356.6l0.1 1.4l-2 0.9l-0.6 -2.1l2.4 -0.3zM439.3 368.1l2.2 -0.9l1.3 0.5l-0.1 1.2l-0.4 0.3l-1.4 1l-1.9 -1.6zM445.6 372l-2.7 -0.3l-0.6 -2.5l0.4 -0.3l2.9 3zM449.4 337.9l2.1 1.6l-0.2 1.6l-0.7 0.3l-1.8 -1.8zM454.3 325.3l0.3 1.4l-0.5 1.1l-2 0.1l-0.5 -2l1.3 -1.9l0.5 0.1z"/>
<path fill="#eec7b6" stroke="#2b2422" stroke-width="0.32" stroke-opacity="0.9" d="M464 292l0.5 -3l-0.1 -0.2l-0.9 -0.3l-1.2 0.4l-0.8 2.4l2.5 0.7zM462.5 313.5l-0.9 -0.1l-0.5 -1.2l0.7 -1.8l0.3 0l1.8 0.7l0.2 0.5zM468.8 305l0 0l-1.6 -1l1.1 -2.6l0.1 -0.1l1.2 0.2l0.4 0.5zM472.4 299.4l-0.6 0.3l-1.2 -0.3l-0.4 -0.6l2.1 -2.7l0.8 0.3zM472.3 302.7l-2.3 -0.7l-1.2 3l0.9 0.4l2.9 -2.2l0.1 -0.1l0 -0.1zM475.3 296.4l1.3 -3.2l2 0.8l-1.2 3zM471.5 320.9l3 -2.4l0.4 0.5l-1 3l-2.3 -0.9zM480.5 302.4l2 -2.2l0.5 0.2l-0.2 3.2l-0.1 0.1l-1.9 -0.8zM481.1 316.6l0.1 -0.6l-1.5 -2.5l-1.4 2.8l1.5 0.7zM478.6 320.1l0.8 0l0.4 -3.1l-1.5 -0.7l-0.6 0.2l0 3.2zM491.1 291.3l0.6 0.8l1 0.1l0.6 -0.2l-0.1 -1.1l-1.8 -1.2zM485.4 311.5l1.4 -3.1l-1.1 -0.2l-1.9 2.6l0.2 0.3zM492.5 300.4l-2.5 2.1l-1.1 -0.4l-0.3 -0.4l1.7 -2.8l1.6 0.7zM485.4 311.6l2.1 0.7l0 0l0.3 -3.9l-0.1 -0.1l-0.9 0.1l-1.4 3.1zM485.4 311.6l2.1 0.7l-2 3.1l-0.5 0l-0.2 0l-0.5 -0.5zM485 315.4l0.4 3.7l-0.1 0.1l-0.4 0l-1.6 -0.6l-0.6 -0.9l2.1 -2.3zM490.8 305.4l-0.8 0.3l-0.9 2.7l0.4 0.2l2.8 -2.1l-0.8 -0.8zM483.5 328.7l0.4 -2.1l-0.4 -0.3l-3.1 0.8l-0.6 0.5l0.2 0.4l0.6 0.5zM494.5 296.9l1.4 0.2l0.3 3.9l0 0l-0.9 0.1l-1.2 -0.9zM492.3 306.5l0 0l-2.8 2.1l0.9 1.1l1 0.2l0.2 -0.1l-0.3 -0.3l1.7 -2.1zM491.4 309.9l1.1 1.1l0.4 0.1l-1.3 -1.3zM492.9 321.7l1.6 -2.3l-0.5 -0.9l-0.1 -0.1l-2.8 2.3l0.3 0.5zM493.1 322.1l0 2.2l-2.6 -0.3l0.9 -2.8l1.5 0.5zM492.1 329.4l-1.4 -0.3l-0.6 2.6l0.9 0.4l0.3 -1.2l0.9 -0.9z"/>
<path fill="#f0e6e1" stroke="#2b2422" stroke-width="0.32" stroke-opacity="0.75" d="M331.9 256l-0.3 1.6l1.9 0.6l0.7 -0.3l0 -0.4l-1.1 -2.2zM387.2 262.2l1 1.2l0.6 -0.2l1.5 -2.9l-1 -0.8l-0.3 -0.1zM396.7 300.3l1.9 -0.5l0.5 -2.4l-1.5 -0.5l-1.3 0.8l-0.3 1.2zM400.5 288.1l1.2 1.9l-0.2 0.7l-0.7 0.2l-1.5 -0.3l-0.2 -0.7zM401.5 290.7l0.7 0.9l0.1 1.7l-2.6 0.2l1.1 -2.6zM406.8 269.2l0.3 -0.6l-0.9 0.1zM406 361.1l-0.2 0.7l0.7 0.1l0.4 -0.2zM412.3 269.6l0.4 -1.6l-0.2 0.2l-1 0.1zM427.9 276.4l-0.8 -7.5l-1.9 -0.9l-1.7 0.4l-1.7 1.6l0.2 0.6l2.6 5.2l0.2 0.3l2.2 0.5zM430.4 376.8l0.3 -1.6l-0.9 -0.7l0.4 2.1zM444.1 234.5l-1.6 1.4l1.5 0.5l0.2 0l0.3 -0.5zM446.3 377.1l-2.7 3l-1.3 -1.9l0.7 -1.8l2.5 -0.2zM441.9 381.7l-0.3 1.4l0.8 1.9l0.4 0l1.2 -1l0.9 -2.3l-1.2 -0.9zM467.6 372.9l0 4.3l7.2 -0.7l-4.6 -6.8l-1.9 1.6zM472.8 369l-2 -0.4l-0.6 1.1l4.6 6.8l0.4 0.5l1 -0.5l0.1 -4zM478.6 375.2l0 -0.4l-0.5 -0.4l-0.1 1.2zM507.6 365l-0.4 -0.2l-2.4 0.8l-0.1 0.7l3 -0.3l0 -0.9zM516.7 375.9l0.8 -1.1l-1.5 0.8zM431.5 255.1l0.1 1.3l0.3 -0.1l2.2 -2.9l0.1 -1.5l-1.5 -0.5l-0.9 0.3zM436.6 244.3l-0.1 -1.5l0.3 -0.2l3.1 0.1l0.3 0.2l-0.6 1.3l-0.2 0.5zM446.8 251.7l0.7 2.5l1.1 -0.6l0.2 -0.5l-0.3 -0.8zM448.7 249.9l1.9 0.7l0 0.1l-0.2 1.4l-1.6 1l-0.3 -0.8zM451 255.8l-2.4 0.7l-0.1 0.1l0.5 4.3l0.1 -0.1l2.7 -3.4zM452.9 243.5l1.7 -1l0 -1l-0.1 -0.5l-2 -0.3l-0.5 1.6l0.5 1.2zM454.2 245.3l0.1 1l-0.9 0.9l-1.5 -0.1l-0.3 -0.2l-0.4 -1.5l0.5 -0.6zM453.8 250l-2.3 -0.3l-0.9 0.9l0 0.1l2.7 1.4l1.1 -0.6zM452.5 254.1l0.8 -2l-2.7 -1.4l-0.2 1.4l1.3 2.3zM452.7 236.8l0.3 -1.2l0.4 -0.2l1.7 0.9l0.5 1.3l-0.3 0.9l-1.3 -0.2zM459.8 232.6l0.1 0.5l-0.7 0.6l-0.9 0.3l-2.4 -1.2l1.5 -2.2zM455.9 232.8l-0.3 0.1l0.4 2.7l1.7 0.4l0.6 -2zM454.6 241.5l2.3 0.6l1 -0.4l-0.8 -1.9l-1.3 -0.3l-1.3 1.5zM455.4 243.3l0.2 0.6l1 0.7l0.9 0.1l0 0l0.7 -2.8l-0.3 -0.2l-1 0.4zM462.2 222.7l-0.5 0.9l-1.8 0.4l-1.1 -2.7l0.5 -0.3l2.5 0.8zM460.3 230.5l-1.4 -1.1l-1.4 0.5l-0.1 0.7l2.4 2zM459.9 233.1l1.1 0.2l0.7 0.7l0.4 1.1l-1.5 1.7l-1.4 -3.1zM460.5 228.2l1 -1.3l1.2 3.1l-1.2 0zM461 233.3l2.5 -2.3l0.7 2.2l-2.5 0.8zM465.3 227.6l-0.5 0.1l-1.6 2.5l0.3 0.6l1.6 0.1l1.7 -2.7zM466.8 228.2l0.1 0l0.7 0.7l-1.8 2.3l-0.7 -0.3zM407.7 299.8l-2 0.2l0.6 1.5l1.9 -0.3zM409.6 306l-3 -0.7l-0.4 1l1 1.9l2.4 -0.9l0.4 -0.6zM409.5 301.6l1.1 -1.4l2 1.9l-0.5 0.5l-0.3 0.2zM410 306.7l-0.4 0.6l1 2l2.4 -1.2l-0.6 -1.6zM420.3 283.2l-1 0.8l-1.5 -1.5l0.5 -1.5l2.2 0.1l0.1 0.2zM421.8 283.7l-1.5 -0.5l0.3 -1.9l1.6 1.1zM420.1 285.2l2.1 -0.4l0 -0.1l-0.4 -1l-1.5 -0.5l-1 0.8l0 0.3zM423.9 281l-1.3 -1.1l-1.8 0.6l-0.3 0.6l0.1 0.2l1.6 1.1l1.6 -0.5zM421.7 288.1l2.6 -1.6l0.2 -0.5l-0.9 -1.3l-1.4 0l0 0.1l-0.5 3.3zM429.4 278.1l-1.1 -1.6l-0.4 -0.1l-0.9 0.2l-0.4 1.6l2.5 1.4zM430.3 301.5l0.1 0l0.4 -2.6l-1.6 0.4l-0.4 0.2l0.3 1.5zM435.9 316.8l0.8 -1.4l-1.2 -1.1l-1.6 -0.2l-0.7 1.4l0.2 0.9l0.4 0.4zM436.4 317.6l2.3 0.3l0.6 -0.2l-2.5 -2.4l-0.1 0.1l-0.8 1.4zM436 319.4l1.6 0.3l1.1 -1.8l-2.3 -0.3zM441.5 278.4l-1.7 1.7l-0.8 -0.5l-0.3 -2.1l2.8 0.5zM441.5 278.4l1.2 1.7l0 0.7l-0.6 0.6l-2 0.2l-0.3 -1.5zM442.6 283.6l0.3 -0.3l-0.8 -1.9l-2 0.2l-0.6 0.8l1.6 1.8zM444.6 312.2l1.9 0.3l0.2 -1.1l-0.2 -1l-1.6 -1.4l-0.2 0.6zM448.6 294.5l0.7 -2.5l-2 -0.9l-1.1 1.3l0.6 1.1zM445.6 296.8l0.1 -0.5l3.2 -1.4l0.4 0.4l-0.2 1.7l-1 0.8l-0.7 0.2zM446.7 300.1l1.8 0.6l0.8 1.2l-0.5 1l-0.4 0.3l0 0l-2.1 -1.5l0.3 -1.5zM448.8 302.9l2.8 1.4l0.1 -0.5l-0.8 -2.3l-1.6 0.4zM451.3 294.7l0.1 -0.2l3.7 0.5l0.9 0.7l-0.2 0.8l-0.1 0l-3.6 -0.4zM452 297.1l0.1 -1l3.6 0.4l-1.2 1.6l-1.7 0.7l-0.1 0zM394.1 308.2l2.7 -1.9l0.9 0.7l-2.7 1.9zM402.7 304.4l1.1 -1.6l-0.1 -0.2l-2.2 -1.2l-0.7 0.2l-0.4 2.7l1.6 0.3zM400.5 341.3l-0.7 -0.4l1.2 -2.5l0.8 -0.8l2.2 1.1l0.1 0.7l-3.6 1.9zM432.4 361.3l1.8 -0.6l0.5 0.1l0.1 0.2l-0.7 3l-2.7 -1l0.2 -1.3zM438 359.4l-0.8 -0.7l-1 0.2l-1.5 1.9l0.1 0.2l2.5 1.9l1 -2.7zM434.1 382.4l2.6 1.4l0.8 -0.7l0.1 -0.9l-0.6 -2l-3.4 1.4zM439.9 318.5l1.2 1.9l-1.9 1.7l-0.3 0.1l-0.3 0l-0.2 -1.3zM439.3 368.1l-0.6 -3.7l-0.4 -0.1l-0.8 1.9l-0.1 2.2l1 0.4l0.6 -0.2zM438.9 325.5l1.2 1.3l1.2 0l0.5 -2.1l-1.5 -0.3zM445.6 358.8l0.1 0l1.1 -0.6l2.6 1.2l0.7 0.9l-1.8 1l-2.5 -1.1z"/>
<path fill="#f0e6e1" stroke="#2b2422" stroke-width="0.32" stroke-opacity="0.9" d="M455.2 288.7l0.6 1l1.2 0.7l0.1 0l3 -2.9l-1.4 -1.7l-3.5 1.9zM460.5 287.7l2.3 -2.3l0.4 -1.3l-0.8 -1.4l-1.9 -0.6l-1.3 1.7l-0.5 2l1.4 1.7zM460.5 287.7l-0.4 3.6l-0.9 -0.1l-2.1 -0.8l3 -2.9l0.4 0.2zM459.2 291.2l-0.6 3.9l-1.8 0.1l0.2 -4.8l0.1 0zM460.5 287.7l1.8 1.2l1.2 -0.4l-0.7 -3.1l-2.3 2.3zM460.5 287.7l1.8 1.2l-0.8 2.4l-0.6 0.3l-0.8 -0.3zM457.9 299l-2.1 -2.5l0.2 -0.8l0.8 -0.5l1.8 -0.1l0.8 0.2l0.5 3.3zM465.8 286.7l-1.4 2.1l-0.9 -0.3l-0.7 -3.1l0.4 -1.3l1.2 0.6zM464 292l-2.5 -0.7l-0.6 0.3l0 3.2l0.9 0.3zM456.8 301.7l1.1 -2.7l2 -0.4l0.7 0.3l0.2 0.3l-1.4 2.9l-1.7 0.3zM466.7 286.8l0.8 2.7l-0.8 0.2l-2.2 -0.7l-0.1 -0.2l1.4 -2.1zM464 292l0.5 -3l2.2 0.7l-1.6 3zM460.9 302.8l-1.5 -0.7l1.4 -2.9l1.4 0.6l0.2 0.3zM457.9 303.7l-0.2 -1.3l1.7 -0.3l1.5 0.7l0.1 0.1l-0.9 3.7l-0.9 -0.1zM468.4 285.9l0.9 1.7l-1.2 2.1l-0.6 -0.2l-0.8 -2.7zM462.8 295.9l2.9 -2.2l0.8 2.5l-0.4 0.9l-1.4 0.5l-0.5 -0.1zM461 302.9l2 0.4l0.4 -2.5l-1 -0.7l-1.5 2.7zM461 302.9l-0.9 3.7l0.2 0.2l1.7 -0.3l1.4 -2.7l-0.4 -0.5zM472.7 288l1.4 -1.7l0.2 -0.6l-0.7 -1.4l-5.1 1.3l-0.1 0.3l0.9 1.7l3.2 0.4zM468.5 293.6l2.1 -1.6l-1.1 -1.4l-1.1 -0.4l-1.2 2.9zM465.2 300.8l0.3 0.1l0.7 -0.3l1.1 -2.1l-1.2 -1.4l-1.4 0.5zM469.5 290.6l3 -2.6l0.2 0l0 0.3l-1.2 3.5l-0.7 0.3l-0.2 -0.1zM468.5 293.6l1 1.9l2 -0.2l0.1 -0.8l-0.8 -2.4l-0.2 -0.1zM469.1 298.3l0.1 -2.5l-2.7 0.4l-0.4 0.9l1.2 1.4l1.1 0.1zM468.4 301.3l0 -2.7l-1.1 -0.1l-1.1 2.1l2.1 0.8zM462.1 310.4l1.8 0.7l1.8 -2.7l-1.6 -0.7zM472.7 288.3l1.4 3.6l0 0.2l-2.6 -0.3zM471.6 294.5l2.6 -2.2l0 0l-0.1 -0.2l-2.6 -0.3l-0.7 0.3zM469.1 298.3l0.1 -2.5l0.3 -0.3l2 -0.2l0.8 0.8l-2.1 2.7zM464.1 311.6l-0.2 -0.5l1.8 -2.7l0.4 -0.1l0.1 0.1l0.2 3.1l-1.2 0.7zM463.9 314.7l-1.4 -1.2l1.6 -1.9l1.1 0.6l0.3 2.1l-1 0.4zM472.7 288l1.4 -1.7l1.8 3.9l-1.8 1.7l-1.4 -3.6zM472.3 302.7l-2.3 -0.7l-0.4 -0.5l1 -2.1l1.2 0.3zM468.8 305l0 0l-2.2 3.3l2.4 1l0.7 0l0.1 -0.1l0.1 -3.6l-0.2 -0.2zM467.7 312l1.3 -2.7l-2.4 -1l-0.4 0.1l0.2 3.1zM465.5 314.3l1.2 0.5l1.1 -2.7l-0.1 -0.1l-1.3 -0.5l-1.2 0.7zM464.5 314.7l0 3.6l0 0l0.5 0l2.3 -2.9l-0.6 -0.6l-1.2 -0.5zM474.3 285.7l3.7 0.4l2 1.7l-0.2 0.9l-1.6 1.7l-0.6 0.3l-1.7 -0.5l-1.8 -3.9zM474.2 292.3l2.4 0.9l1 -2.5l-1.7 -0.5l-1.8 1.7l0 0.2zM469.7 305.4l0.2 0.2l2.3 1.1l0.4 -3.5zM472.2 306.7l-2.3 -1.1l-0.1 3.6l2.7 -2.1zM467.7 312l1.3 -2.7l0.7 0l0.4 0.4l0.1 2.8l-0.7 0.3l-1.7 -0.7zM468.9 317l0.2 -0.6l-0.7 -0.6l-1.1 -0.4l-2.3 2.9l2 0.9zM474.8 300.1l0.1 0.1l0.7 0.3l0.4 -0.1l1.9 -2.5l0 -0.3l-0.5 -0.6l-2.1 -0.6l-0.4 0.1zM472.7 303l0 0.1l1.6 1l1.9 -0.5l-0.6 -3.1l-0.7 -0.3zM472.7 303.1l1.6 1l0 2.8l-1.3 0.4l-0.5 -0.2l-0.3 -0.4l0.4 -3.5zM471.4 313.8l-0.7 -1.1l-0.5 -0.2l-0.7 0.3l-1.1 3l0.7 0.6l1.2 -0.1zM468.5 320.5l-1.3 -1l-0.2 -0.3l1.9 -2.2l1 3.3zM468.5 320.5l-0.9 2.4l-1.9 -0.9l1.5 -2.5zM477.9 297.6l0.8 0l2 -2l0.3 -0.7l-0.1 -0.3l-0.6 -0.6l-0.8 -0.1l-0.9 0.1l-1.2 3zM476 300.4l2.5 0.8l0.3 -0.1l-0.9 -3.2zM474.3 306.9l0 -2.8l1.9 -0.5l0.2 0l1.3 1.2l0.3 0.6l-3.5 1.6zM473.2 314l0.8 -0.3l-0.6 -2.6l-2.7 1.6l0.7 1.1zM471 320.8l-0.1 -0.2l-1 -0.3l-1.4 0.2l-0.9 2.4l0.3 0.6l1 0.3l0.4 -0.1zM466.8 324.6l1.1 -1.1l1 0.3l0.1 3.2l-2.6 -0.3l0.1 -1.2zM481.2 291.3l-1.4 -2.6l0.2 -0.9l1 -0.3l3 0.5l-0.2 3.8zM481.2 291.3l-0.9 2.7l0.6 0.6l3.1 -1.7l-0.1 -1l-0.1 -0.1zM478.8 301.1l-0.3 0.1l-2.1 2.4l1.3 1.2l1.9 -2.7l-0.7 -0.9zM474.5 307l0.5 0.8l1.7 0.5l1.6 -2.6l-0.3 -0.3zM471.9 317.1l1.3 -3.1l0.8 -0.3l0.6 0.3l0.2 0.4l-1.2 3.1zM471.5 320.9l3 -2.4l-0.1 -0.3l-0.8 -0.7l-1.7 -0.4l-0.1 0l-0.9 3.5l0.1 0.2zM471.5 320.9l-0.5 -0.1l-1.7 2.9l2.3 0.8l0.2 0l-0.2 -3.4zM487.1 290.8l-2.9 -2.9l-0.2 0.1l-0.2 3.8l0.1 0.1l3.1 -1zM481 294.9l-0.1 -0.3l3.1 -1.7l0.5 0.6l-0.9 2.6zM480.7 295.6l1 2.8l2.2 -1.8l-0.3 -0.5l-2.6 -1.2zM478.9 301.2l0.7 0.9l0.9 0.3l2 -2.2l-1.1 -1.2l-0.6 0.1zM477.7 304.8l1.9 -2.7l0.9 0.3l0.3 0.5l-1 2.7l-0.8 0.4l-0.7 -0.3l-0.3 -0.3zM479.6 308.4l-1.5 0.8l-1.1 -0.5l-0.3 -0.4l1.6 -2.6l0.7 0.3l0.6 2.2zM476.9 311.7l-1 -0.9l1.1 -2.1l1.1 0.5l-0.1 2.8zM474.8 314.4l-0.2 -0.4l2.3 -2.3l1.1 0.3l0.5 0.3l0 0.1l-2.1 2.6zM471.6 324.5l-1.6 3.2l0.3 0.1l3.2 -1.5l-1.7 -1.8l0 0zM468.4 330.7l1.8 1.1l1.4 -2.4l-1.3 -1.6l-0.3 -0.1l-0.2 0l-2 2.5zM487.1 290.8l-2.9 -2.9l0.3 -0.3l3.8 0.5l-1 2.7zM486.4 294.3l-1.8 2.7l-0.7 -0.4l-0.3 -0.5l0.9 -2.6l1.4 0.4zM483.9 296.6l0.7 0.4l0.3 0.3l-1.3 3l-0.6 0.1l-0.5 -0.2l-1.1 -1.2l0.3 -0.6zM477 319.9l-2.1 -0.9l-0.4 -0.5l-0.1 -0.3l2.6 -2l0.7 0.3l0 3.2zM474.7 322.9l-0.3 -0.1l-2.6 1.7l1.7 1.8l0.4 0.1l0.8 -0.3zM473.5 329l0.4 -2.6l-0.4 -0.1l-3.2 1.5l1.3 1.6l1 0.1zM486.2 297.6l-0.4 3.1l-1.2 0.2l-1 -0.6l1.3 -3zM483.6 300.3l-0.6 0.1l-0.2 3.2l2 -0.1l-0.2 -2.6zM479.6 308.4l1.1 1.5l1.5 0.3l0.3 -0.1l0.6 -2.9l-3.5 1zM482.2 310.2l-0.9 2.8l-1.6 0.5l-1.2 -1.1l0 -0.1l2.2 -2.4zM475.7 322.8l1.3 -2.9l0.7 -0.2l0.9 0.4l-0.8 3.3l-1 -0.1zM475.7 322.8l1.1 0.5l-0.4 3.4l-1.7 -0.6l0 -3.2zM473.5 329l0.4 -2.6l0.8 -0.3l1.7 0.6l0.5 0.4l-1.6 2.3zM474.8 332.4l-0.4 0.4l-0.8 -0.4l-1 -2.9l0.9 -0.5l1.8 0.4l0.1 0.2zM489.9 294.1l1.8 -2l-0.6 -0.8l-2.1 -0.1l-0.7 0.3l0.5 2.2zM489.1 297.4l1.2 -2.6l-0.4 -0.7l-1.1 -0.4l-1.4 0.9l0.1 2.8zM486.2 297.6l1.2 -0.2l0.5 3.9l-2.1 -0.6zM486.3 305.1l-1.4 2.5l-1.7 -0.6l0 -0.1l2.2 -2.5zM482.5 310.1l1.3 0.7l1.9 -2.6l-0.8 -0.6l-1.7 -0.6l-0.1 0.2zM484 311.1l-0.2 -0.3l-1.3 -0.7l-0.3 0.1l-0.9 2.8l1.6 0.7zM479.4 320.1l0.4 -3.1l1.3 -0.4l0.9 0.9l-1.9 2.9zM478.9 323.9l1.9 -2.4l0 -0.4l-0.7 -0.7l-0.7 -0.3l-0.8 0l-0.8 3.3l1 0.6zM478.8 324l-1 -0.6l-1 -0.1l-0.4 3.4l0.5 0.4l0.1 0l1.6 -0.2zM477.9 331l-3.1 1.4l0.6 -2.8l2 1zM486.3 305.1l1.2 0.4l0.5 -0.4l0.9 -3l-0.3 -0.4l-0.3 -0.1l-3 2.3l0.1 0.5zM486.3 305.1l1.2 0.4l0.2 2.8l-0.9 0.1l-1.1 -0.2l-0.8 -0.6zM485.4 311.6l-1.1 3.3l-1 -0.5l-0.4 -0.7l1.1 -2.6l1.4 0.4zM480.8 321.1l0.8 -0.1l1.7 -2.4l-0.6 -0.9l-0.7 -0.2l-1.9 2.9zM477.9 331l0.3 0.1l1.8 -3.1l-0.2 -0.4l-1.2 -0.7l-1.6 0.2l0.4 3.5zM477.9 331l0.3 0.1l0.2 0.4l-0.9 2.7l-0.9 0.4l-1.9 -0.9l-0.3 -0.9l0.4 -0.4zM493.3 292l1 0.1l0.2 -0.3l-1.3 -0.9zM490.8 305.4l-0.8 0.3l-2 -0.6l0.9 -3l1.1 0.4l0 0zM489.1 308.4l0.9 -2.7l-2 -0.6l-0.5 0.4l0.2 2.8l0.1 0.1zM481.9 324.2l0.7 0.1l1.8 -1.4l-0.9 -1.3l-1.9 -0.6l-0.8 0.1l0 0.4zM481.4 324.6l0.5 -0.4l0.7 0.1l0.9 2l-3.1 0.8zM494.3 292.1l0.6 0.9l1 0.6l1.4 0l-2.8 -1.8zM494.3 296.8l1.6 -3.2l-1 -0.6l-2 2.8l0.1 0.3l0.5 0.4zM490 302.5l0 0l2.5 -2.1l0.2 0.1l0.2 2.7l-0.3 0.1zM490.8 305.4l-0.8 -2.9l2.6 0.8l-1.1 2.4zM490.4 309.7l-0.9 -1.1l-0.4 -0.2l-1.3 0l-0.3 3.9l1.4 0.5zM488.9 312.8l-1.4 -0.5l0 0l-2 3.1l2.1 0.9l1.3 -3.4zM485 315.4l0.4 3.7l1.9 -0.5l0.3 -2.3l0 0l-2.1 -0.9zM484.4 322.9l-0.9 -1.3l1.4 -2.4l0.4 0l1.4 3.4l-0.1 0.1l-1.7 0.3zM483.5 326.3l-0.9 -2l1.8 -1.4l0.5 0.1l0 3.3l-1 0.3zM495.9 297.1l2.2 -0.4l-0.7 -3l-0.1 -0.1l-1.4 0l-1.6 3.2l0.2 0.1zM492.7 300.5l0.2 2.7l1.1 0.3l1.3 -2.4l-1.2 -0.9zM491.5 305.7l0.8 0.8l0 0l2.3 -2.1l-0.6 -0.9l-1.1 -0.3l-0.3 0.1zM490.4 309.7l-1.5 3.1l0 0.1l0.5 0.2l1.5 -0.1l1.6 -2l-1.1 -1.1zM489.4 313.1l1.1 3.2l-0.3 0.2l-2.6 -0.2l0 0l1.3 -3.4zM490.2 316.5l-1.3 3.3l-1.6 -1.2l0.3 -2.3zM485.3 319.2l1.4 3.4l2.3 -2.6l-0.1 -0.2l-1.6 -1.2l-1.9 0.5zM484.9 326.3l0.8 0.3l1.7 -3l-0.8 -0.9l-1.7 0.3zM483.1 332.5l-0.6 -0.2l-0.3 -0.3l1.4 -3.1l1.1 0.5l0.4 0.7zM483.1 332.5l0.1 3.2l-2.4 -0.1l-0.1 -0.2l1.8 -3.1l0.6 0.2zM494 303.5l0.6 0.9l0.4 0.2l1.8 -3l-0.6 -0.6l-0.9 0.1zM494.6 304.4l-2.3 2.1l0.7 0.9l2 -2.7l0 -0.1zM492.5 311l-1.6 2l1.6 1.3l0.9 -2.7l-0.5 -0.5zM490.5 316.3l-0.3 0.2l-1.3 3.3l0.1 0.2l0.8 0.2l0.4 0l1.8 -3l-0.6 -0.7zM488.2 324l-0.8 -0.4l-0.8 -0.9l0.1 -0.1l2.3 -2.6l0.8 0.2l-0.5 3.7zM484.9 333.1l1.9 -1.8l-0.3 -0.6l-1.4 -0.6l-2 2.4l0 0l1.7 0.6zM498.5 298.5l-2.3 2.5l0 0l0.6 0.6l1.7 -2.9zM494.9 314.6l-0.3 -1.8l-1.2 -1.2l-0.9 2.7l0.1 0.1zM491.4 316.5l0.6 0.7l1.4 0.6l1.6 -3.1l-0.1 -0.1l-2.3 -0.2zM492 317.2l-1.8 3l0.9 0.5l2.8 -2.3l-0.5 -0.6zM489.3 323.9l0.5 -3.7l0.4 0l0.9 0.5l0.3 0.5l-0.9 2.8l-0.2 0.1zM486.8 331.3l1 0.4l0.2 0l1.3 -3.7l-1.1 -0.3l-0.6 0.1l-1.1 2.9zM484.9 333.1l1.9 -1.8l1 0.4l-0.2 2.6l-0.6 0.3zM494.9 314.6l0.1 0.1l1.4 0.3l0.2 -0.5l-1.6 -1.3l-0.4 -0.4zM487.8 331.7l-0.2 2.6l1.8 0.7l0.3 -3.1l-1.7 -0.2zM497.5 315.2l-0.9 -0.7l-0.2 0.5l0.8 0.6zM497.5 316.2l-3.5 2.3l0.5 0.9l1.2 0.6l1 -0.4l1.1 -2.9l0 -0.3zM493.1 322.1l2.7 -0.1l-0.1 -2l-1.2 -0.6l-1.6 2.3zM493.1 322.1l2.7 -0.1l0.3 0.5l-2.2 2.3l-0.4 0l-0.4 -0.5zM496.2 326.1l1.4 -2.1l-0.9 -1.2l-0.6 -0.3l-2.2 2.3zM492.1 329.4l0.1 0.6l0.9 -0.8zM497.8 316.4l0 0.3l2 3.8l0.2 0.1l0.4 -0.6l0.6 -2l-2 -1.6zM499.8 320.5l-0.9 0.1l-2.2 2.2l0.9 1.2l2.4 -3.4z"/>
<path fill="#fca487" stroke="#2b2422" stroke-width="0.32" stroke-opacity="0.9" d="M484.3 314.9l0.5 0.5l-2.1 2.3l-0.7 -0.2l-0.9 -0.9l0.1 -0.6l2.1 -1.6z"/>
<path fill="#fdd4c2" stroke="#2b2422" stroke-width="0.32" stroke-opacity="0.75" d="M439.7 317.6l0.2 0.9l-1.5 2.4l-0.8 -1.2l1.1 -1.8l0.6 -0.2zM450.9 299.3l-1.7 0.4l-1.1 -1.9l1 -0.8l0.5 0.4zM446.7 300.1l1.8 0.6l0.7 -1l-1.1 -1.9l-0.7 0.2zM452 297.1l0.1 -1l-0.8 -1.4l-2 0.6l-0.2 1.7l0.5 0.4zM448.5 300.7l0.7 -1l1.7 -0.4l0.5 0.3l-0.1 1.4l-0.4 0.5l-1.6 0.4z"/>
<path fill="#fdd4c2" stroke="#2b2422" stroke-width="0.32" stroke-opacity="1.0" d="M513.4 381.2l0.3 -0.4l-0.7 -3.4l-1.6 1l-0.8 2.2l0.8 0.8zM513.7 380.8l2.4 -1.6l-1.8 -2.3l-0.5 0.1l-0.8 0.4zM513.7 380.8l-0.3 0.4l0.2 0.3l4.2 1.5l-0.9 -3.8l-0.8 0zM516.7 375.9l1.5 1.8l1.9 -1.4l0.1 -0.1l-1.9 -2l-0.8 0.6zM520.1 376.3l2.4 3.6l-1.2 1.3l-3.4 -2.8l0.3 -0.7zM520.2 376.2l0.8 -0.7l0.2 -0.3l-0.9 -2.1l-2 1.1zM514.7 364.5l0 0.2l0.6 0.2l2.1 -1.6l-0.9 -0.8l-1.4 0.2zM521.2 375.2l1.6 -0.9l0.1 -2.5l-1.5 0.6l-1.1 0.7zM522.9 371.7l2.1 0l1.1 0.9l-0.1 0.9l-1.6 1.2l-1.6 -0.4l0.1 -2.5zM521.1 362.5l-1.3 0.8l1.3 2l0.5 0.1l2.3 -1.4zM523.4 360.4l-1.6 0.7l-0.7 1.4l2.8 1.5l0.5 -0.3zM532.3 369.1l0.3 4.3l-3.2 -1.1l-0.5 -0.7l0.8 -1.6zM525.6 360.3l1.6 1.4l0.3 0l1.3 -0.6l-0.4 -2.7l-0.1 -0.1l-2.2 1zM528.7 366.1l0.1 -0.1l1.7 -1.4l1.5 0.3l0.9 0.6l0.4 1l-0.7 2.2l0 0zM532.3 369.1l0.3 4.3l0.1 0.1l0.3 0.1l2.9 -1.5l-1.5 -2.8l-1.8 -0.6l0 0zM530.2 362.4l0.3 2.2l1.5 0.3l0.2 -1.1l-0.7 -1.1zM534.4 369.3l1.5 2.8l0.8 0l0.1 0l0.7 -0.8l-1.8 -2.6z"/>
<path fill="#fff5f0" stroke="#2b2422" stroke-width="0.32" stroke-opacity="0.75" d="M421.7 288.1l0.5 -3.3l-2.1 0.4l-0.2 1.9zM452 297.1l-2.4 0.3l1.3 1.9l0.5 0.3l1.3 -0.8zM437.4 368.4l-1.7 0l-0.1 -1.4l1.9 -0.8z"/>
<path fill="#fff5f0" stroke="#2b2422" stroke-width="0.32" stroke-opacity="0.9" d="M463.4 300.8l1.8 0l-0.5 -3.2l-0.5 -0.1l-2 2.3l0.2 0.3z"/>
<path fill="#fff5f0" stroke="#2b2422" stroke-width="0.32" stroke-opacity="1.0" d="M514.4 384.4l1.2 1.2l1.1 -0.7l1.2 -1.6l-0.1 -0.3l-4.2 -1.5zM514.3 376.9l1.8 2.3l0.8 0l1 -0.8l0.3 -0.7l-1.5 -1.8l-0.7 -0.3l-1.4 0.9zM517.8 383l0.1 0.3l1.7 -0.1l1.5 -1.1l0.2 -0.9l-3.4 -2.8l-1 0.8zM520.2 376.2l0.8 -0.7l3.9 3l-0.4 0.6l-2 0.8l-2.4 -3.6zM518.4 365.5l0.7 -2.3l0 0l-1.7 0.1l-2.1 1.6l0.6 1.2l0.3 0.2l1.5 0zM521.2 375.2l-0.2 0.3l3.9 3l0.3 -0.3l-0.8 -3.5l-1.6 -0.4zM521.1 365.3l-1.3 -2l-0.7 -0.1l-0.7 2.3l1.6 0.9l0.7 -0.5zM528.7 376.9l-0.3 -0.8l-2.4 -2.6l-1.6 1.2l0.8 3.5l0.5 -0.1l2.9 -0.9l0.1 -0.2zM525 371.7l1.1 0.9l1.4 -1l-0.9 -2.3l-1.6 1zM528.4 376.1l1 -3.8l-0.5 -0.7l-1.4 0l-1.4 1l-0.1 0.9zM528.9 371.6l0.8 -1.6l-2 -2.8l-0.4 0.3l-0.1 0.1l0.6 1l-1.2 0.7l0.9 2.3zM528.7 376.9l4 -3.4l-0.1 -0.1l-3.2 -1.1l-1 3.8zM525.4 363.8l1.8 -2.1l-1.6 -1.4l-1.2 -0.3l-1 0.4l1 3.3l0.1 -0.1l0.1 0.1zM528.1 366.5l-2.7 -2.7l0 0l1.8 -2.1l0.3 0l1.3 4.3l-0.1 0.1zM528.1 366.5l-0.4 0.7l2 2.8l2.6 -0.9l0.3 -0.4l-3.9 -2.6zM528.8 366l1.7 -1.4l-0.3 -2.2l-0.5 -1.1l-0.9 -0.2l-1.3 0.6z"/>
<path fill="#bd563c" stroke="#2b2422" stroke-width="0.34" stroke-opacity="0.85" d="M494.7 240.5l-0.4 0l0 0.8l1.6 2.8l1 -2.2z"/>
<path fill="#bf2d25" stroke="#2b2422" stroke-width="0.34" stroke-opacity="0.85" d="M515.1 237.5l-0.2 -0.1l-0.7 -1.5l1.6 -1.4l0.7 0.2l0.3 0.6l-0.2 0.5l-1 1.6z"/>
<path fill="#c3bab6" stroke="#2b2422" stroke-width="0.34" stroke-opacity="0.85" d="M521.5 233.8l2 -2.1l0 0l0.7 2.5l-0.1 0l-1.2 0.5l-1.3 -0.5l-0.1 -0.4z"/>
<path fill="#ca5c40" stroke="#2b2422" stroke-width="0.34" stroke-opacity="0.85" d="M508.3 223.2l-1.4 0.6l-0.3 1.4l0.3 0.6l2.1 0.4l0.5 -0.4l-0.3 -2zM523.5 231.7l-1.3 -1l1.2 -1.3l1.8 0.3l0.1 0l-0.2 1.4l-1.6 0.6zM534.5 224.1l-0.1 0.1l-0.3 0.8l0.9 0.4l0 -1.4z"/>
<path fill="#cb2e25" stroke="#2b2422" stroke-width="0.34" stroke-opacity="0.85" d="M500.2 229.4l-0.8 -1.4l-0.6 0.1l-1.1 1.7l1 0.7z"/>
<path fill="#d0ae9f" stroke="#2b2422" stroke-width="0.34" stroke-opacity="0.85" d="M507.2 221l-0.8 -1.5l-1 -0.1l-0.9 1l0 0.4l1.6 0.9zM507.2 221l2.1 -1.3l-0.7 -0.7l-1.8 0l-0.4 0.5l0.8 1.5zM533.3 226l-1.3 0.6l-1.5 -0.5l0.3 -2.7l0.3 -0.1l2.3 2.3zM533.3 226l-1.3 0.6l-0.1 1.3l1.2 1.1l0.9 -2z"/>
<path fill="#d2856d" stroke="#2b2422" stroke-width="0.34" stroke-opacity="0.85" d="M511.1 222.9l-1.9 0.9l-0.9 -0.6l0 -0.7l1.7 -1.5l1.2 0.7zM513.2 232.5l-0.1 -0.2l0.2 -1.4l1.9 -0.4l0.5 0.5l0.4 0.5l-0.8 0.7zM516.9 231.7l0.1 -2.2l-0.1 -0.2l-1.2 1.7l0.4 0.5zM517.7 240.4l0.7 0.3l1.4 1.9l-3.2 0.3l-0.3 -0.2z"/>
<path fill="#d2c9c5" stroke="#2b2422" stroke-width="0.34" stroke-opacity="0.85" d="M487.7 226.6l0.2 0.6l2 0.1l-0.4 -0.3l-1.6 -1.5zM490.2 228.6l0 0.1l1 1.8l0.4 0l0.8 -1.4l-0.7 -0.5zM495.7 240.1l0.7 -1.5l1.1 0.6l0.1 1zM498.3 241l1.9 -0.5l0.4 0.1l0.1 2.1l-0.5 0.5l-1.7 -0.1l-0.2 -2zM510 221l-1.7 1.5l-1.1 -1.5l2.1 -1.3l0.1 0zM511.5 223.3l0.5 1.7l1.2 -0.1l0.7 -0.9l-0.6 -0.9zM511.4 227.8l-0.7 0.6l0.7 1.7l1.4 -0.2l0.5 -1.9l-0.7 -0.3zM515.1 239.9l-0.3 2.1l-1.2 0.2l-1.2 -1.2l0.1 -1.6l2.2 0.1zM517.4 239.5l0.3 0.9l-1.4 2.3l-0.1 0l-0.3 0l-1.1 -0.7l0.3 -2.1zM517.4 239.5l0.3 0.9l0.7 0.3l1.7 -0.9l0.2 -0.4l-2 -1.1l-0.2 0l-0.6 0.6zM519.8 242.6l-3.2 0.3l0.4 0.6l1.2 0.8l2.4 -1.3zM521.5 233.8l0.3 -3.1l0.4 0l1.3 1zM525 221.7l0.5 1.5l0.6 0.5l0.9 0.5l0.8 0l0.8 -0.7l-0.2 -0.8l-2.5 -0.2l-0.3 -1.2zM531.9 227.9l0.1 -1.3l-1.5 -0.5l-0.8 0.4l-0.5 2.1l0.2 0.1l0.9 0.2l0.8 -0.4z"/>
<path fill="#d72e26" stroke="#2b2422" stroke-width="0.34" stroke-opacity="0.85" d="M499.9 222.5l-0.8 -1.5l-1.6 0.9l0.7 2l0.6 -0.2z"/>
<path fill="#dfbaab" stroke="#2b2422" stroke-width="0.34" stroke-opacity="0.85" d="M492.6 229.1l-0.1 0.1l-0.1 -0.1l-0.8 1.4l1.2 0.8l1.2 -0.2l0.1 -0.3zM496.7 246.1l3.1 0.1l0.4 -3l-1.7 -0.1zM504.5 220.4l-1.9 -0.9l-0.5 0.6l-0.3 1l0.2 1.2l1.9 -0.5l0.6 -1zM517.4 239.5l-2.3 0.4l-0.4 -0.4l0.4 -2l0.5 -0.1l1.9 1.5zM517.6 227.2l3.3 -0.8l0 -0.1l-1.9 -1l-1.6 1.3zM517 231.8l1.8 -1l-0.1 -0.6l-1.7 -0.7l-0.1 2.2zM520.9 221l0.4 -1.3l-1.6 -0.4l-0.8 0.2l-0.4 1.7l0.6 0.4zM529.4 231.5l0.5 0.2l2.2 -0.7l0 -0.1l-1.8 -2l-0.9 -0.2l-0.4 2z"/>
<path fill="#e08f75" stroke="#2b2422" stroke-width="0.34" stroke-opacity="0.85" d="M493.8 227.6l-0.3 0.1l-0.9 1.4l1.5 1.7l0.9 -1.3zM499.4 233.8l-0.8 2.1l-1.9 0.3l-0.2 -0.4l1.3 -2.8zM510.5 230.7l0.9 -0.6l1.4 -0.2l0.5 1l-0.2 1.4l-2.8 0l-0.1 -0.1l-0.1 -0.1zM517.5 223.9l-1 1.5l0.9 1.2l1.6 -1.3l-0.5 -1.5zM519.5 231.2l1.6 -0.8l-0.3 -2l-1.8 0.5l-0.3 1.3l0.1 0.6zM531.9 227.9l1.2 1.1l0.2 1l-0.2 0.1l-2 -1.6z"/>
<path fill="#e1d7d3" stroke="#2b2422" stroke-width="0.34" stroke-opacity="0.85" d="M488.2 236.7l-0.2 -0.5l-3.2 0.8l0 3.5l0.7 -0.6zM489.7 237.4l-1.5 -0.7l-0.2 -0.5l0.2 -1.6l0.5 -0.2l0.9 0.7l0.5 0.6zM490.2 228.6l1.5 0l-1.8 -1.3zM488.7 234.4l0.4 -1.1l1.7 -0.6l0.6 0.2l0.5 0.7l-2.3 1.5zM489.8 246.9l-0.3 0.7l-8.7 2.1l2.7 -5.1l6 -4.3l1.6 -0.4l1 0.7zM493.6 238l-2.2 0l0.4 -2.2l2 1.4zM489.8 246.9l-0.3 0.7l4.8 0.3l1.7 -1.6l-0.1 -2.2l-1.6 -2.8zM496.2 232.4l0.3 -0.1l0.6 -2.4l-0.9 -0.7l-1.2 0.3l-0.9 1.3l-0.1 0.3l0.5 0.8zM493.9 237.1l-0.1 -2.7l1.8 0.4l0.9 1l0.2 0.4l-0.1 0l-0.2 0.3zM493.6 238l0.2 -0.8l0.1 -0.1l2.5 -0.6l-0.3 1.6l-2.1 1.3zM495.7 240.1l0.7 -1.5l-0.3 -0.5l-2.1 1.3l0.1 0.9l0.2 0.2l0.4 0zM495.7 240.1l1.9 0.1l0.7 0.8l0 0.1l-1.4 0.8l-2.2 -1.4zM502 222.3l0 0l-0.2 -1.2l-1.7 -0.6l-1 0.5l0.8 1.5zM499.4 228l0.7 -0.9l-0.5 -0.9l-0.7 -0.4l-1.1 1.5l1 0.8zM498.8 231l-0.1 -0.5l1.5 -1.1l1.1 0.4l-0.4 1.5l-0.6 0.5zM499.4 233.8l0.5 -0.4l0.4 -1.6l-1.5 -0.8l-1.1 1.8l0.1 0.2l1.6 0.8zM498.3 241l1.9 -0.5l-0.9 -2.3l-1.2 0.1l-0.6 0.9l0.1 1zM502.3 223.8l-0.3 -1.5l-2.1 0.2l-1.1 1.2l1.8 0.9l1.5 -0.2zM502.6 228.5l-1.6 -1.5l-0.9 0.1l-0.7 0.9l0.8 1.4l1.1 0.4l0.3 -0.2l1 -0.9zM499.9 233.4l2.7 0.2l0 -1.1l-1.7 -1.2l-0.6 0.5zM501.3 236.2l-1.6 0.6l-0.2 1.1l2.8 0.4zM500.2 240.5l0.4 0.1l1.7 -0.5l0.3 -1.5l-0.3 -0.3l-2.8 -0.4l-0.2 0.3zM500.7 242.7l-0.1 -2.1l1.7 -0.5l0.4 0.2l0.5 1.9l0.1 0.4l-0.8 1.3zM502.6 219.5l1.9 0.9l0.9 -1l-0.7 -1.2l0 0l-2 1zM502.6 245.6l1.9 -1.3l0.2 -1.3l-1.4 -0.4l-0.8 1.3zM506.8 219l0.1 -1.2l-2.2 0.4l0.7 1.2l1 0.1zM506.7 233.6l-2 1.2l-1.6 -1l2 -1.2l1.4 0.2l0.2 0.8zM503.2 240.4l2.5 -1.3l0.9 0.4l-0.9 1.7zM503.3 242.6l1.4 0.4l1.4 -0.5l-0.3 -0.9l-2.6 0.6zM508.3 223.2l0 -0.7l-1.1 -1.5l0 0l-1.1 0.7l-0.4 1.3l1.2 0.8zM508.7 236l-1.6 -0.3l-0.7 0.8l1 1.7l1.2 -0.6l0.5 -0.9zM508.6 219l0.7 0.7l0.1 0l1.5 -1.4l0 -0.8l-0.3 -0.2l-0.2 0l-2.1 0.3zM511.5 223.3l0.5 1.7l-0.2 0.3l-2.1 0.5l-0.2 0l-0.3 -2l1.9 -0.9zM511.4 227.8l-0.7 0.6l-1 0.1l-0.9 -1l0.2 -1.3l0.5 -0.4l0.2 0zM513.5 212.8l-0.1 -0.5l-0.8 -0.1l-0.1 0.8l0.3 0.2zM512.4 236l-1.6 0.4l-0.4 0.4l0.6 1.9l1.3 0.3l0.6 -1.4zM510.7 241.6l1.7 -0.6l0.1 -1.6l-0.2 -0.4l-1.3 -0.3l-0.7 0.5l0.1 2.2zM513.5 212.8l1.3 -0.2l0.1 -0.2l-1.5 -0.1zM514.6 215.9l-1.8 -0.7l0 -2l0.7 -0.4l1.3 -0.2l1 0.8l-0.1 0.7zM513.7 217.7l0.7 -0.6l0.3 -0.8l-0.1 -0.4l-1.8 -0.7l0 0.1l-0.7 1.1l-0.1 0.6zM514.5 220.1l1 -1l-1.1 -2l-0.7 0.6l-0.7 1.8zM513.3 223.1l0.6 0.9l0.8 -0.1l0.2 -0.5l-0.4 -1.8l-1 0.5zM512.6 227.7l0.7 0.3l0.7 -0.2l0.4 -1.2l-1.2 -1.7l-1.2 0.1l-0.2 0.3zM512.8 229.9l0.5 1l1.9 -0.4l0.1 -2l-1.3 -0.7l-0.7 0.2zM513.4 233.6l2.1 0.7l-0.2 -2.1l-2.1 0.3zM512.7 235.4l1.5 0.5l0.7 1.5l-2 0.2l-0.5 -1.6zM515.9 242.7l-2.8 3.5l-0.5 -1.8l0.5 -1.4l0.5 -0.8l1.2 -0.2zM517.6 212.6l-2.7 -0.2l-0.1 0.2l1 0.8l1.9 -0.4zM518.3 213.1l-0.6 -0.1l-1.9 0.4l-0.1 0.7l1.9 1.8l0.3 -0.1zM514.7 216.3l2.1 0.5l0.8 -0.9l-1.9 -1.8l-1.1 1.8zM517.2 218.5l-0.4 -1.7l-2.1 -0.5l-0.3 0.8l1.1 2l1.3 -0.2zM516 225.4l0.5 0l0.9 1.2l0.2 0.6l0 0.3l-1.1 0.9l-1.2 0.1l-1.3 -0.7l0.4 -1.2zM516.9 229.3l-1.2 1.7l-0.5 -0.5l0.1 -2l1.2 -0.1zM515.5 234.3l0.3 0.2l0.7 0.2l0.8 -1.3l-0.3 -1.6l-0.1 -0.1l-0.8 -0.2l-0.8 0.7zM517.5 238.9l0.6 -0.6l-1.5 -2.5l-1 1.6zM517 243.5l-0.4 -0.6l-0.3 -0.2l-0.1 0l-0.5 2.9l1.4 -0.8zM518.9 219.5l-1.3 -0.9l1.6 -1.2l0.4 0.3l0.1 1.6zM518.9 219.5l-0.4 1.7l-1.4 0.2l-0.3 -2.5l0.4 -0.4l0.4 0.1zM518.7 230.2l-1.7 -0.7l-0.1 -0.2l-0.4 -0.9l1.1 -0.9l1.4 1.4zM516.5 234.7l0.3 0.6l2.9 0.8l0.2 -0.1l0.6 -1l-2.1 -1.6l-1.1 0zM519 216.2l0.2 1.2l0.4 0.3l0.7 -0.1l-0.1 -2zM521.5 233.8l-1.8 -1.9l-1.3 1.5l2.1 1.6l1.1 -0.8zM521.2 237.7l-0.4 1.4l-0.5 0.3l-2 -1.1l1.4 -2.2l0.2 -0.1zM523.3 219.7l-1.7 -0.2l0 0.1l1.6 0.5zM521 223.8l0.5 0.7l0.7 -0.2l2.1 -2.5l-2.8 0.5zM521.4 225.6l-0.5 0.7l0 0.1l0.2 1.4l1.5 0.5l0.6 -0.6l0.2 -1.6zM525.2 229.7l0.9 -1.8l-0.2 -0.2l-0.2 -0.2l-2.5 0.2l-0.6 0.6l0.8 1.1zM524.2 234.2l1.6 -0.7l0.1 -0.9l-0.8 -1.5l-1.6 0.6zM525.3 229.7l2.1 0.9l0.5 -2.2l-1.8 -0.5l0 0l-0.9 1.8zM527.6 230.7l1.4 0l0.4 -2l-0.2 -0.1l-1.3 -0.2l-0.5 2.2zM527.1 232l1.4 0.2l0.9 -0.7l-0.4 -0.8l-1.4 0zM534.4 224.2l0.1 -0.1l-0.2 -1l-2.4 -0.2zM531.1 223.3l2.3 2.3l0.7 -0.6l0.3 -0.8l-2.5 -1.3l-0.4 0zM535.5 227.4l-0.5 -0.1l0 -1.9l-0.9 -0.4l-0.7 0.6l-0.1 0.4l0.7 1l1.4 0.6l0.1 -0.1z"/>
<path fill="#e46747" stroke="#2b2422" stroke-width="0.34" stroke-opacity="0.85" d="M501.3 236.2l0.1 -0.3l-2 -2.1l0 0l-0.8 2.1l1.1 0.9z"/>
<path fill="#ee997e" stroke="#2b2422" stroke-width="0.34" stroke-opacity="0.85" d="M504.7 223.7l-2.4 0.1l-0.3 -1.5l0 0l1.9 -0.5l1.3 1.3zM516.8 221.7l-1.9 -0.6l-0.4 -1l1 -1l1.3 -0.2l0.3 2.5zM523.4 229.4l-0.8 -1.1l-1.5 -0.5l-0.3 0.6l0.3 2l0.7 0.3l0.4 0zM525.3 229.7l2.1 0.9l0.2 0.1l-0.5 1.3l-1.2 0.6l-0.8 -1.5zM528.6 223.5l1.7 -0.2l-0.2 -0.5l-1.7 -0.1zM537.7 228l-2.2 -0.5l-0.1 0.1l0 1.2l0.9 0.6l1.4 -0.6z"/>
<path fill="#eec7b6" stroke="#2b2422" stroke-width="0.34" stroke-opacity="0.85" d="M491.7 235.7l-1.6 0l-0.5 -0.6l2.3 -1.5l0.6 0.6zM493.6 234.2l-1.1 0l-0.6 -0.6l-0.5 -0.7l1.4 -1.6l1.2 -0.2l0.5 0.8zM498.1 238.3l-1.5 -2.1l0.1 0l1.9 -0.3l1.1 0.9l-0.2 1.1l-0.2 0.3zM501.3 229.8l0.3 -0.2l1.6 2l-0.6 0.9l-1.7 -1.2zM504.6 225.4l0.3 -0.3l-0.2 -1.4l-2.4 0.1l-0.2 0.6l0.1 0.4l0.4 0.3zM502.6 228.7l-1 0.9l1.6 2l0.8 -0.4l0.4 -0.9l-0.7 -0.7zM506.8 219l1.8 0l-0.3 -1.4l-1.4 0.2zM512.8 215.3l0 -0.1l0 -2l-0.3 -0.2l-0.3 2.1zM519.7 213.2l-0.8 -0.2l-0.6 0.1l-0.4 2.7l1.1 0.4l1.2 -0.6l-0.1 -0.2zM519.2 217.4l-0.2 -1.2l-1.1 -0.4l-0.3 0.1l-0.8 0.9l0.4 1.7l0.4 0.1zM519.3 223.4l-0.8 0.4l0.5 1.5l1.9 1l0.5 -0.7l0.1 -1.1l-0.5 -0.7zM521.5 233.8l0.3 -3.1l-0.7 -0.3l-1.6 0.8l0.2 0.7l1.8 1.9zM525.7 227.5l0.2 0.2l1.1 -3.5l-0.9 -0.5l-1.1 3z"/>
<path fill="#f0e6e1" stroke="#2b2422" stroke-width="0.34" stroke-opacity="0.85" d="M485 224.2l1.3 -0.2l-1.1 -1l-0.9 0.3zM485.2 235.1l0.2 -0.2l2.6 -0.4l0.2 0.1l-0.2 1.6l-3.2 0.8l-0.2 -0.9zM489.8 237.5l-0.1 -0.1l-1.5 -0.7l-2.7 3.2l4.1 -2.1zM489.5 240.3l-6 4.3l1.3 -4.1l0.7 -0.6l4.1 -2.1zM491.4 238l-0.2 0.1l-1.4 -0.6l-0.1 -0.1l0.4 -1.7l1.6 0l0.1 0.1zM491.1 239.9l-1.6 0.4l0.1 -2.5l0.2 -0.3l1.4 0.6zM493.8 227.6l0.1 -0.2l-0.1 -0.2l-0.3 0.5zM493.8 237.2l-2 -1.4l-0.1 -0.1l0.8 -1.5l1.1 0l0.2 0.2l0.1 2.7zM493.6 238l-2.2 0l-0.2 0.1l-0.1 1.8l1 0.7l2 -0.3l-0.1 -0.9zM489.8 246.9l4.5 -5.6l0 -0.8l-0.2 -0.2l-2 0.3zM497.8 224.4l-1.4 -1l-1 1.5l0 0zM495.6 226.7l-0.2 -1.8l0 0l-1.6 2.3l0.1 0.2zM496.2 229.2l0.3 -1.9l-0.9 -0.6l-1.7 0.7l-0.1 0.2l1.2 1.9zM493.8 234.4l1.8 0.4l0.6 -2.4l-1.7 -0.5l-0.9 2.3zM497.8 224.4l0.1 0l0.3 -0.5l-0.7 -2l-0.1 0l-1 1.5zM497.9 224.4l0 0l-0.1 0l-2.4 0.5l0 0l0.2 1.8l0.9 0.6l0.3 -0.1zM498.9 225.8l-1.1 1.5l-1 -0.1l1.1 -2.8zM497.7 232.8l-1.2 -0.5l0.6 -2.4l0.6 -0.1l1 0.7l0.1 0.5zM497.8 233l-1.3 2.8l-0.9 -1l0.6 -2.4l0.3 -0.1l1.2 0.5zM497.5 239.2l0.6 -0.9l-1.5 -2.1l-0.2 0.3l-0.3 1.6l0.3 0.5zM496.9 241.9l-1 2.2l0.1 2.2l0.7 -0.2l1.8 -3l-0.2 -2zM498.8 223.7l1.8 0.9l-1 1.6l-0.7 -0.4l-1 -1.4l0 0l0.3 -0.5zM502.1 220.1l0.5 -0.6l0.1 -0.3l-1.1 0.6zM501.8 221.1l0.3 -1l-0.5 -0.3l-1.5 0.7zM502.2 224.8l-0.1 -0.4l-1.5 0.2l-1 1.6l0.5 0.9l0.9 -0.1zM503.5 227.5l-0.9 -2.4l-0.4 -0.3l-1.2 2.2l1.6 1.5zM499.4 233.8l2 2.1l0.7 -0.5l0.6 -1.7l-0.1 -0.1l-2.7 -0.2zM502.3 247l0.3 -1.4l-0.1 -1.7l-1.8 -1.2l-0.5 0.5l-0.4 3zM504.7 227.3l-0.1 -1.9l-2 -0.3l0.9 2.4zM505.9 227.8l-2.2 1.8l-1.1 -0.9l0 -0.2l0.9 -1l1.2 -0.2l1.1 0.4zM502.7 233.7l0.4 0.1l2 -1.2l-1.1 -1.4l-0.8 0.4l-0.6 0.9l0 1.1zM502.1 235.4l2.5 1.4l0.1 -0.1l0 -1.9l-1.6 -1l-0.4 -0.1zM501.3 236.2l0.1 -0.3l0.7 -0.5l2.5 1.4l-0.2 0.6l-1.8 1.2l-0.3 -0.3zM502.7 240.3l0.5 0.1l2.5 -1.3l-1.3 -1.7l-1.8 1.2l-0.3 1.5zM502.7 240.3l0.5 0.1l2.5 0.8l0.1 0.4l-2.6 0.6zM506.1 221.7l-1.6 -0.9l-0.6 1l1.3 1.3l0.5 -0.1zM506.6 225.2l-1.7 -0.1l-0.2 -1.4l0.5 -0.6l0.5 -0.1l1.2 0.8zM505.8 227.7l1.1 -1.9l-0.3 -0.6l-1.7 -0.1l-0.3 0.3l0.1 1.9zM505.9 227.8l0.5 0.9l-0.5 1.3l-1.5 0.3l-0.7 -0.7zM505.9 230l1 1.8l-0.4 1l-1.4 -0.2l-1.1 -1.4l0.4 -0.9zM506.7 233.6l0.4 2.1l-0.7 0.8l-1.7 0.2l0 -1.9zM504.4 237.4l0.2 -0.6l0.1 -0.1l1.7 -0.2l1 1.7l-0.4 1.2l-0.4 0.1l-0.9 -0.4zM506.2 242.6l0.7 2.1l-2.4 -0.4l0.2 -1.3l1.4 -0.5zM505.9 227.8l0.5 0.9l0.7 -0.1l1.7 -1.1l0.2 -1.3l-2.1 -0.4l-1.1 1.9zM509.5 229.5l0.2 -1l-0.9 -1l-1.7 1.1l1.3 1.3zM508.4 229.9l-1.3 -1.3l-0.7 0.1l-0.5 1.3l1 1.8l1.2 -0.4zM508.1 231.4l-1.2 0.4l-0.4 1l0.2 0.8l2.1 0.2l1.4 -1.6l-0.1 -0.1zM506.7 233.6l0.4 2.1l1.6 0.3l0.5 -1.3l-0.4 -0.9l-2.1 -0.2zM508.6 237.6l1.1 1.6l-1.6 0.9l-1.1 -0.7l0.4 -1.2zM506.2 242.6l2.3 -1l0.1 -0.2l-0.5 -1.3l-1.1 -0.7l-0.4 0.1l-0.9 1.7l0.1 0.4l0.3 0.9zM506.2 242.6l2.3 -1l0.4 2l-1.3 1.5l-0.4 0.1l-0.3 -0.5zM509.5 229.5l0.2 -1l1 -0.1l0.7 1.7l-0.9 0.6zM509.5 229.5l1 1.2l-0.4 1.4l-2 -0.7l0.3 -1.5zM509.2 234.7l-0.4 -0.9l1.4 -1.6l0.1 0.1l0.6 1.8l-0.6 0.7zM510.8 236.4l-0.5 -1.6l-1.1 -0.1l-0.5 1.3l0.4 0.7l1.3 0.1zM511 238.7l-0.6 -1.9l-1.3 -0.1l-0.5 0.9l1.1 1.6l0.6 0zM510.4 241.4l-1.8 0l-0.5 -1.3l1.6 -0.9l0.6 0zM508.9 243.6l-0.4 -2l0.1 -0.2l1.8 0l0.3 0.2l0 0.4l-0.1 1.4l-0.2 0.1zM508.9 243.6l-1.3 1.5l2.5 1.3l0.3 -2.9zM510.4 243.5l0.2 -0.1l2 1l0.5 1.8l0 0.5l-2.4 0.3l-0.6 -0.6zM511.5 217.1l-0.9 0.1l0 0.1l0.3 0.2zM512.8 215.3l-0.6 -0.2l-0.1 1.3zM513 219.5l0.7 -1.8l-1.7 -0.7l0 0l-0.5 0.1l-0.6 0.4l0 0.8l1.7 1.3zM511.9 221.3l0.7 -1.7l-1.7 -1.3l-1.5 1.4l0.6 1.3l1.2 0.7zM511.5 223.3l1.8 -0.2l0.2 -1l-1.6 -0.8l-0.7 0.4l-0.1 1.2zM511.4 227.8l-1.7 -2l2.1 -0.5l0.8 2.4zM513.4 233.6l-0.7 1.1l-1.8 -0.6l-0.6 -1.8l2.8 0l0.1 0.2zM512.7 235.4l0 -0.7l-1.8 -0.6l-0.6 0.7l0.5 1.6l1.6 -0.4zM510.7 241.6l0 0.4l2.4 1l0.5 -0.8l-1.2 -1.2zM513.1 243l-0.5 1.4l-2 -1l0.1 -1.4zM511.9 221.3l0.7 -1.7l0.4 -0.1l1.5 0.6l0.4 1l-0.4 0.5l-1 0.5zM513.9 224l0.8 -0.1l1.3 1.5l-1.6 1.2l-1.2 -1.7zM513.4 233.6l-0.7 1.1l0 0.7l1.5 0.5l1.6 -1.4l-0.3 -0.2zM515.1 237.5l-0.2 -0.1l-2 0.2l-0.6 1.4l0.2 0.4l2.2 0.1zM516.8 221.7l-1.9 -0.6l-0.4 0.5l0.4 1.8l1.9 -0.7zM517.5 223.9l-1 1.5l-0.5 0l-1.3 -1.5l0.2 -0.5l1.9 -0.7zM516.2 242.7l-0.3 0l-2.8 3.5l0 0.5l0.1 0l0.4 -0.1l2.1 -1zM517.7 213l0.6 0.1l0.6 -0.1l0 -0.3l-1.3 -0.1zM519.3 223.4l-0.8 0.4l-1 0.1l-0.7 -1.2l0 -1l0.3 -0.3l1.4 -0.2l0.6 0.4zM517 231.8l1.8 -1l0.7 0.4l0.2 0.7l-1.3 1.5l-1.1 0zM516.8 235.3l2.9 0.8l-1.4 2.2l-0.2 0l-1.5 -2.5zM518.9 213l0.8 0.2l0.2 -0.1l0 -0.3l-1 -0.1zM521.3 219.7l0.3 -0.1l0 -0.1l-1.1 -0.1l-0.2 -1.8l-0.7 0.1l0.1 1.6zM519.3 223.4l-0.2 -1.8l1.8 -0.6l0.6 1.3l-0.5 1.5zM519 228.9l-1.4 -1.4l0 -0.3l3.3 -0.8l0.2 1.4l-0.3 0.6zM520.8 239.1l-0.5 0.3l-0.2 0.4l0.9 3.1l0.5 -0.3l0.6 -0.4l0.6 -1.8zM520.1 239.8l-1.7 0.9l1.4 1.9l0.8 0.4l0.4 -0.1zM520.9 221l0.4 -1.3l0.3 -0.1l1.6 0.5l1 0.5l0.6 0.9l-0.5 0.3l-2.8 0.5zM522.2 224.3l2.2 0.1l-0.2 1.6l-0.8 0.1l-2 -0.5l0.1 -1.1zM524.4 219.9l-1.1 -0.2l-0.1 0.4l1 0.5zM522.2 224.3l2.1 -2.5l0.5 -0.3l0.2 0.2l0.5 1.5l-1.1 1.2zM524.2 226l0.8 0.7l1.1 -3l-0.6 -0.5l-1.1 1.2zM524.2 226l0.8 0.7l0.7 0.8l-2.5 0.2l0.2 -1.6zM526.1 227.9l-0.2 -0.2l1.1 -3.5l0.8 0l0.7 1.5l-2.4 2.2zM528.6 223.5l-0.8 0.7l0.7 1.5l1.2 0.8l0.8 -0.4l0.3 -2.7l-0.5 -0.1zM527.9 228.4l1.3 0.2l0.5 -2.1l-1.2 -0.8l-2.4 2.2zM530.8 223.4l0.3 -0.1l0.4 -0.4l-1.4 -0.1l0.2 0.5zM531.1 228.5l-0.8 0.4l1.8 2l1 -0.8zM534.5 224.1l0.5 -0.1l0 -0.9l-0.7 0zM535.4 227.6l-1.4 -0.6l-0.9 2l0.2 1l0.1 0l2 -1.2z"/>
<path fill="#f26d4b" stroke="#2b2422" stroke-width="0.34" stroke-opacity="0.85" d="M519.7 213.2l0.4 2.2l-0.2 -2.3z"/>
<path fill="#fff5f0" stroke="#2b2422" stroke-width="0.34" stroke-opacity="0.85" d="M498.8 228.1l-1 -0.8l-1 -0.1l-0.3 0.1l-0.3 1.9l0.9 0.7l0.6 -0.1z"/>
</g>
<path d="M462.0 244.0L458.8 251.9L458.5 256.0L458.8 261.3L461.0 265.0L465.0 270.6L471.0 272.5L477.5 273.8L484.0 271.0L490.0 267.5L492.0 260.0L493.1 251.9L496.0 248.0L499.4 244.1L490.0 242.5L484.0 238.5L477.5 234.7L471.0 235.0L465.0 236.3ZM405.0 273.0L407.2 276.9L415.0 280.0L424.0 275.0L432.2 270.6L430.6 262.8L428.3 262.1L428.3 262.2L426.3 261.8L422.8 261.3L412.5 268.2L405.6 269.1ZM374.0 252.0L378.1 256.6L384.0 260.0L390.6 262.9L394.1 264.2L394.3 263.4L389.3 259.5L380.8 257.1L377.2 253.5L375.9 250.9L372.7 249.2ZM344.8 282.0L344.5 287.5L348.5 291.0L350.5 295.6L359.6 295.3L359.4 290.6L362.0 290.0L368.8 287.5L371.0 283.0L371.9 276.6L371.5 273.0L368.8 268.8L365.0 265.0L360.2 263.3L353.1 267.2L349.0 272.0L346.1 278.1ZM399.9 354.4L401.1 359.5L401.7 361.1L402.8 361.4L406.5 361.9L411.6 359.4L413.4 355.6L410.3 349.4L405.0 348.5L400.2 350.2Z" fill="#fff3ee" stroke="#3a3230" stroke-width="0.3"/>
<path d="M454.0 354.4L467.6 357.6L468.4 348.4L455.4 343.6ZM469.6 356.4L472.8 357.4L477.3 349.2L472.6 347.0Z" fill="#e9744f" stroke="#3a3230" stroke-width="0.3"/>
<path d="M463.4 371.4L475.4 374.6L476.0 363.2L465.0 360.1Z" fill="#e66f4a" stroke="#3a3230" stroke-width="0.3"/>
<path d="M463.2 385.0L465.9 384.8L470.7 383.2L471.3 373.6L463.4 371.4Z" fill="#f8a583" stroke="#3a3230" stroke-width="0.3"/>
<g fill="none" stroke="#3a3230" stroke-width="0.25">
<path d="M346 279Q351.5 277 352.6 272.5Q353.4 269 353 267.4M352 276Q357 280.5 360.5 283.5Q364 287 367 289.4M344.8 287.2Q356 285.4 369.4 286.4M348.6 291L360 283.5"/>
<path d="M460 251Q468 247.4 476 247Q484 245.6 491 243M459.4 260Q470 262.6 480 258Q486 256 492.4 256.6M476 247Q478 256 480 258M470 272Q474 266 480 258M484 238.5Q486 247 484.6 256.6"/>
<path d="M408 271L420 266M414 268L418 278M424 262L426 274"/>
<g stroke-opacity="0.75" stroke-width="0.3"><path d="M458.6 344.8L457.2 355.2M462 346L460.8 356M465.2 347.2L464.2 356.8M455 347L468.2 351.6M454.6 350.6L467.8 354.8M468.6 365L467.4 372.4M472 362.2L471.6 373.6M464.6 364L475.8 367M464 367.6L475.6 370.8M474.6 348L471.2 356.8M471.4 351L475.4 352.6M467 372.4L466.6 384.6M463.4 377.6L471 378.6"/></g>
</g>
<g clip-path="url(#silc)" fill="none" stroke="#3a3230" stroke-width="0.28" stroke-opacity="0.85">
<path d="M503.5 246L497 262L490.5 276L482 291M506.4 247L500 263L493.4 277.6L485 292.6M509.6 248L503 264.6L496.4 279"/>
<path d="M502.4 249H505.4M501.2 252H504.2M500 255H503M498.8 258H501.8M497.4 261.2H500.4M496 264.2H499M494.6 267.2H497.6M493.2 270.2H496.2M491.8 273.2H494.8M490.4 276.2H493.4M488.6 279.4H491.6M486.8 282.6H489.8"/>
<path d="M477 268L492 272M476.5 276L489 279M512 252L506 255.6M510.6 262L504 264"/>
</g>
<path d="M309.4 298.8L319.2 300.0L328.9 301.9L336.2 304.3L341.0 311.6L348.3 320.1L350.8 325.6L358.0 329.8L365.3 334.7L370.0 338.2L377.3 343.1L385.8 346.7L395.5 346.1L399.2 351.6L401.6 361.3L406.5 361.9L412.5 358.9L419.8 365.0L423.5 367.4L429.5 372.2L430.8 380.8L438.0 384.4L442.9 386.8L445.3 380.8L452.0 383.0L458.5 386.2L463.4 385.6L470.7 383.2L474.3 378.3L476.4 377.4L476.2 377.4L476.5 361.0L481.0 357.0L484.0 353.4L484.0 356.0L479.4 360.6L489.0 360.6L488.9 360.1L492.5 354.0L492.5 340.0L488.9 339.4L491.3 330.9L496.2 326.1L500.4 320.0L501.0 318.0L495.0 313.2L491.3 309.5L495.0 304.7L498.6 298.6L497.4 293.7L490.1 288.9L493.7 281.6L501.0 279.2L507.1 271.9L512.0 263.4L513.8 253.5L513.2 246.8L522.9 241.9L532.6 238.9L539.9 234.6L539.9 228.6L535.0 227.3L535.0 223.1L525.9 222.5L525.3 220.0L520.5 219.4L519.9 212.8L512.6 212.2L512.0 217.0L504.7 218.2L497.4 221.9L492.5 229.2L489.5 227.0L485.2 223.0L478.0 225.5L473.0 224.3L471.9 218.2L464.6 217.0L457.3 219.2L454.9 221.9L447.6 231.6L440.3 237.7L434.3 243.7L429.4 248.6L427.7 256.1L428.3 262.2L422.2 260.9L412.5 268.2L404.6 268.8L404.0 276.7L398.0 279.2L391.9 274.3L394.3 263.4L389.3 259.5L380.8 257.1L377.2 253.5L374.7 248.6L368.6 245.8L362.0 247.6L356.3 250.0L347.9 254.3L340.6 261.6L335.8 261.0L332.1 253.1L333.3 250.0L328.7 248.0L331.6 242.2L330.3 240.3L323.6 245.8L311.5 256.1L299.3 265.2L290.8 271.3L282.3 275.6L281.7 283.5L290.0 283.6L305.2 283.0L305.8 292.2ZM479.0 361.0L479.2 361.0L479.2 360.8ZM507.6 362.5L502.9 362.7L503.4 366.4L507.7 366.0ZM524.5 363.6L527.8 368.6L509.5 379.5L515.6 385.6L538.1 372.2L528.4 358.3L519.9 361.9L514.4 362.8L514.6 366.2L520.0 366.4ZM486.5 384.4L486.5 377.1L490.1 377.1L490.1 364.3L490.1 364.2L479.2 364.2L479.2 364.3L477.8 377.4L477.3 377.4L477.3 384.4Z" fill="none" stroke="#3a3230" stroke-width="0.28"/>
<g fill="none" stroke="#f5921e" stroke-width="1.15">
<rect x="350.1" y="297.7" width="36.2" height="28.3"/>
<rect x="415.6" y="286.5" width="36.3" height="28.7"/>
<rect x="476.9" y="251.1" width="35.8" height="28.7"/>
</g>
<g fill="none" stroke="#111" stroke-width="0.62" stroke-linecap="round" transform="translate(525.2 294.9) scale(0.9 0.86) translate(-525 -294.8)">
<path d="M527.6 292.6Q527.4 295.6 525.4 297.2M527.6 293.6Q528 296 529.8 297.2"/>
<path d="M531.2 293.4H534.6V296.8H531.2Z"/>
<path d="M538 292.4V293M535.8 293.2H540.4M535.8 293.2V294M540.4 293.2V294M536.4 294.6L537.2 295.2M539.6 294.4L538.6 295.4M538 294V295.6M536.2 296L537 297.2M537 296.2V297.2H539.4V296.2M539.6 296L540.2 297"/>
<path d="M543.4 292.4V293M541.4 293.2H545.8M541.6 293.2V297.2M542.4 294.4H545.4M543.2 293.8V295.4M544.6 293.8V295.4M543 295.4H545M542.6 296H545.2L543 297.4M543.2 296.2L545.4 297.4"/>
</g>
<rect x="525" y="300.20" width="8.6" height="4.8" fill="#fff5f0" stroke="#3a3a3a" stroke-width="0.3"/><text x="535.8" y="304.30" font-size="4.5" fill="#1a1a1a" font-family="Liberation Sans, sans-serif" letter-spacing="0.32">0 - 10000</text><rect x="525" y="307.66" width="8.6" height="4.8" fill="#fdd4c2" stroke="#3a3a3a" stroke-width="0.3"/><text x="535.8" y="311.76" font-size="4.5" fill="#1a1a1a" font-family="Liberation Sans, sans-serif" letter-spacing="0.32">10000 - 20000</text><rect x="525" y="315.12" width="8.6" height="4.8" fill="#fca487" stroke="#3a3a3a" stroke-width="0.3"/><text x="535.8" y="319.22" font-size="4.5" fill="#1a1a1a" font-family="Liberation Sans, sans-serif" letter-spacing="0.32">20000 - 30000</text><rect x="525" y="322.58" width="8.6" height="4.8" fill="#f26d4b" stroke="#3a3a3a" stroke-width="0.3"/><text x="535.8" y="326.68" font-size="4.5" fill="#1a1a1a" font-family="Liberation Sans, sans-serif" letter-spacing="0.32">30000 - 40000</text><rect x="525" y="330.04" width="8.6" height="4.8" fill="#e32f27" stroke="#3a3a3a" stroke-width="0.3"/><text x="535.8" y="334.14" font-size="4.5" fill="#1a1a1a" font-family="Liberation Sans, sans-serif" letter-spacing="0.32">40000 - 50000</text><rect x="525" y="337.50" width="8.6" height="4.8" fill="#b11218" stroke="#3a3a3a" stroke-width="0.3"/><text x="535.8" y="341.60" font-size="4.5" fill="#1a1a1a" font-family="Liberation Sans, sans-serif" letter-spacing="0.32">50000 - 60000</text><rect x="525" y="344.96" width="8.6" height="4.8" fill="#67000d" stroke="#3a3a3a" stroke-width="0.3"/><text x="535.8" y="349.06" font-size="4.5" fill="#1a1a1a" font-family="Liberation Sans, sans-serif" letter-spacing="0.32">60000 - 70000</text>
</svg>
<!-- left toolbar -->
<svg class="abs" style="left:0;top:60px" width="21" height="380" viewBox="0 60 21 380">
<defs>
 <g id="gp"><rect x="0" y="0" width="5" height="5" rx="0.8" fill="#5aa04a" stroke="#2f6a28" stroke-width="0.4"/><path d="M1 2.5H4M2.5 1V4" stroke="#eef7ea" stroke-width="1.2"/></g>
</defs>
<path d="M7 67.2H13" stroke="#505050" stroke-width="0.8"/>
<!-- pan hand -->
<path d="M7.2 77.2Q6 75.6 5.2 76.2Q4.8 77 6 78.8L8.4 82.6Q9 83.6 10.4 83.6H12.6Q14 83.6 14.4 82.2L15.2 78.6V75.2Q14.6 74.4 13.8 75.2V73.6Q13 72.8 12.2 73.6V72.6Q11.4 71.8 10.6 72.6V73.2Q9.6 72 8.8 73Z" fill="#f4f4f4" stroke="#bdbdbd" stroke-width="0.4"/>
<!-- zoom -->
<g>
 <path d="M5.4 88.6V96.2M5.4 88.6H8" stroke="#202020" stroke-width="0.8" stroke-dasharray="1 0.8" fill="none"/>
 <path d="M8.6 97L5.2 100.6" stroke="#e3b12d" stroke-width="1.5" stroke-linecap="round"/>
 <circle cx="12.2" cy="93.4" r="4.3" fill="#d2d2d2" stroke="#a8a8a8" stroke-width="0.7"/>
 <circle cx="12.6" cy="93.6" r="2.2" fill="#c2c2c2"/>
</g>
<!-- select active -->
<rect x="1.6" y="104.6" width="17.4" height="17.4" rx="1" fill="#2b2b2b" stroke="#8c5a1e" stroke-width="0.8"/>
<path d="M7.2 108.6L14.4 115.2L11.4 115.4L13 118.8L11.6 119.4L10 116L7.6 117.8Z" fill="#fafafa" stroke="#c8c8c8" stroke-width="0.3"/>
<path d="M5.2 109.4V108.2H6.4M15.2 108.2H16.2V109.4M5.2 117.6V118.8H6.2" stroke="#ddd" stroke-width="0.7" fill="none"/>
<!-- move content -->
<g transform="translate(5.4,125.4)">
 <path d="M0 0H10.4V10.8H0Z" fill="#e8ecf2" stroke="#aab4c2" stroke-width="0.4"/>
 <path d="M0.4 0.6H2.8V10.4H0.4Z" fill="#f6f7f9"/>
 <path d="M6.4 1.6L8 3.6H4.8ZM6.4 9.4L8 7.4H4.8ZM2.8 5.5L4.6 4V7ZM10 5.5L8.2 4V7Z" fill="#4b8fd8"/>
 <circle cx="6.4" cy="5.5" r="1" fill="#4b8fd8"/>
</g>
<!-- edit nodes -->
<g transform="translate(4,143.6)">
 <path d="M1 10.6L5 1.4L10.6 4.4" fill="none" stroke="#1c1c1c" stroke-width="0.9" stroke-dasharray="1.4 0.8"/>
 <path d="M3.4 9.2L9.4 3.6" stroke="#d9d9d9" stroke-width="1.3"/>
 <path d="M5.4 4.6L11.8 10.4" stroke="#e79a1c" stroke-width="1.7" stroke-linecap="round"/>
 <circle cx="5" cy="1.4" r="1.3" fill="#2f86e8"/><circle cx="11" cy="4.4" r="1.3" fill="#2f86e8"/><circle cx="1.2" cy="10.6" r="1.3" fill="#2f86e8"/>
</g>
<!-- add map -->
<g transform="translate(5,161)">
 <path d="M0 0.6L2.6 0L10.4 0V10L2.6 10L0 10.6Z" fill="#f2f2f2" stroke="#bdbdbd" stroke-width="0.4"/>
 <path d="M2.6 0V10" stroke="#d0d0d0" stroke-width="0.5"/>
 <g transform="translate(7.2,7.6)"><use href="#gp"/></g>
</g>
<!-- add 3d map -->
<g transform="translate(4.4,181.4)">
 <path d="M2.6 0.4L11.4 0L10.4 6.2L0 8.4Z" fill="#e4e4e4" stroke="#b0b0b0" stroke-width="0.4"/>
 <path d="M0 8.4L10.4 6.2V7.6L0.2 9.8Z" fill="#bdbdbd"/>
 <g transform="translate(7.8,5.6)"><use href="#gp"/></g>
</g>
<!-- add picture -->
<g transform="translate(5,199.2)">
 <rect x="0" y="0" width="10.6" height="8.6" fill="#4f96dd"/>
 <path d="M0 6L2.6 3.4L5 5L7.2 4L10.6 6.2V7.4H0Z" fill="#e2c24a"/>
 <path d="M0 7.2H10.6V8.6H0Z" fill="#2f5f9a"/>
 <g transform="translate(7.4,6)"><use href="#gp"/></g>
</g>
<!-- add label -->
<g transform="translate(5,218.2)">
 <rect x="0" y="0" width="10.6" height="7.4" fill="#f4f4f4" stroke="#bdbdbd" stroke-width="0.4"/>
 <path d="M3.6 1.8H7M5.3 1.8V5.8" stroke="#333" stroke-width="0.9"/>
 <g transform="translate(7.4,5.6)"><use href="#gp"/></g>
</g>
<!-- add legend -->
<g transform="translate(5,235.4)">
 <rect x="0.4" y="0" width="2.4" height="2.2" fill="#f0b41a"/><rect x="0.4" y="3.4" width="2" height="2" fill="#e0241c"/><rect x="0.6" y="6.8" width="1.6" height="1.6" fill="#3aa53a"/>
 <path d="M4 1.2H7.4M3.6 4.4H6.6M3.4 7.6H5.4" stroke="#cfcfcf" stroke-width="0.8"/>
 <g transform="translate(7.4,6)"><use href="#gp"/></g>
</g>
<!-- add scalebar -->
<g transform="translate(5,256)">
 <path d="M0 1.6H2.4M4 1.6H6.4M8 1.6H10.4" stroke="#d8d8d8" stroke-width="1"/>
 <g transform="translate(7.4,3.6)"><use href="#gp"/></g>
</g>
<!-- north arrow -->
<g transform="translate(5.6,271)">
 <path d="M4.6 0L8 10L4.6 7.8Z" fill="#2f6fc0"/><path d="M4.6 0L1 10.4L4.6 7.8Z" fill="#8fbaf0"/>
 <g transform="translate(6.6,6.4)"><use href="#gp"/></g>
</g>
<!-- shape -->
<g transform="translate(5,289)">
 <circle cx="8" cy="5" r="2.8" fill="#f0b8b0"/>
 <rect x="0" y="5.6" width="7.4" height="4.6" fill="#9cc4ee"/>
 <path d="M4.2 0.4L7.2 6H1.2Z" fill="#8fce86" stroke="#5aa04a" stroke-width="0.4"/>
 <g transform="translate(7.4,6.4)"><use href="#gp"/></g>
</g>
<!-- marker star -->
<g transform="translate(4.6,307.4)">
 <path d="M5.6 0L7.2 3.6L11.2 4L8.2 6.6L9.2 10.6L5.6 8.4L2 10.6L3 6.6L0 4L4 3.6Z" fill="#f6dc8a" stroke="#d9b84a" stroke-width="0.4"/>
 <g transform="translate(7.8,7)"><use href="#gp"/></g>
</g>
<!-- arrow -->
<g transform="translate(5,325)">
 <path d="M0.4 9.8L9.6 1.2" stroke="#1a1a1a" stroke-width="0.8"/>
 <path d="M10.6 0.4L9.8 3L8 1.2Z" fill="#e8e8e8"/>
 <g transform="translate(7.4,6.2)"><use href="#gp"/></g>
</g>
<!-- node item -->
<g transform="translate(4.4,343)">
 <path d="M1.4 10.2L4.4 1.4L10.4 4.6Z" fill="none" stroke="#151515" stroke-width="0.9"/>
 <circle cx="4.4" cy="1.4" r="1.3" fill="#2f86e8"/><circle cx="10.4" cy="4.4" r="1.3" fill="#2f86e8"/><circle cx="1.4" cy="10.4" r="1.3" fill="#2f86e8"/>
 <g transform="translate(8,7)"><use href="#gp"/></g>
</g>
<!-- html -->
<g transform="translate(5,362)">
 <rect x="0" y="0" width="9.6" height="9.6" fill="#f0f3f7" stroke="#aebace" stroke-width="0.4"/>
 <circle cx="6" cy="3.4" r="2.2" fill="none" stroke="#555" stroke-width="0.7"/>
 <path d="M1 1.6H3M1 3.4H3M1 6.4H8.4M1 8H6" stroke="#6f9ed8" stroke-width="0.8"/>
 <g transform="translate(7.4,7)"><use href="#gp"/></g>
</g>
<!-- attribute table -->
<g transform="translate(5,380)">
 <rect x="0" y="0" width="9.6" height="9.8" fill="#f0f3f7" stroke="#aebace" stroke-width="0.4"/>
 <path d="M0.8 1.6H8.8M0.8 3.8H8.8M0.8 6H8.8M0.8 8.2H6" stroke="#5f94d6" stroke-width="1" stroke-dasharray="2.4 0.6"/>
 <g transform="translate(7.4,7.2)"><use href="#gp"/></g>
</g>
<!-- fixed table -->
<g transform="translate(5,398)">
 <rect x="0" y="0" width="9.6" height="9.8" fill="#f0f3f7" stroke="#aebace" stroke-width="0.4"/>
 <path d="M0.8 3.8H6M0.8 6H5M0.8 8.2H5" stroke="#5f94d6" stroke-width="0.9" stroke-dasharray="2.4 0.6"/>
 <path d="M3.4 6.8L8.6 0.6" stroke="#e48a2a" stroke-width="1.6" stroke-linecap="round"/>
 <g transform="translate(7.4,7.2)"><use href="#gp"/></g>
</g>
<!-- elevation profile -->
<g transform="translate(5,416.2)">
 <rect x="0" y="0" width="9.8" height="9.6" fill="#dfe9f4" stroke="#aebace" stroke-width="0.4"/>
 <path d="M0.4 8.6L2.4 5L4 6.6L6 2.8L7.6 5.6L9.4 4V9.2H0.4Z" fill="#9db98a"/>
 <path d="M0.4 8.6L2.4 5L4 6.6L6 2.8L7.6 5.6L9.4 4" fill="none" stroke="#5b7fb0" stroke-width="0.6"/>
 <g transform="translate(7.4,7)"><use href="#gp"/></g>
</g>
</svg>

<!-- right panel -->
<!-- tabs 1 -->
<div class="abs" style="left:846.4px;top:67.2px;width:51px;height:8.8px;border:0.7px solid #4b4b4b;border-bottom:none;border-radius:1px 1px 0 0;background:#2f2f2f"></div>
<div class="abs" style="left:816.4px;top:64.6px;width:29.8px;height:11.4px;border:0.7px solid #515151;border-bottom:none;border-radius:1px 1px 0 0;background:#333"></div>
<div class="t pt" style="left:823.6px;top:68.2px;font-size:6.3px">Items</div>
<div class="t pt" style="left:854.2px;top:69.6px;font-size:6.4px;letter-spacing:-0.12px">Undo History</div>
<div class="t pt" style="left:905.4px;top:79.2px;font-size:6.6px;letter-spacing:-0.1px">Items</div>
<!-- float buttons -->
<svg class="abs" style="left:1016px;top:77px" width="8" height="90" viewBox="0 0 8 90"><g fill="none" stroke="#5a5a5a" stroke-width="0.6"><rect x="1.6" y="2.4" width="3.2" height="3.2"/><path d="M2.8 2.4V1.2H6V4.4H4.8"/><rect x="1.6" y="81.6" width="3.2" height="3.2"/><path d="M2.8 81.6V80.4H6V83.6H4.8"/></g></svg>
<!-- tree -->
<div class="abs" style="left:816.4px;top:86px;width:206.4px;height:54.4px;background:#232323;border:0.7px solid #444"></div>
<div class="abs" style="left:817.2px;top:86.8px;width:205px;height:11.2px;background:#343434;border-bottom:0.7px solid #4a4a4a"></div>
<div class="abs" style="left:835.4px;top:87px;width:0.8px;height:11px;background:#4c4c4c"></div>
<div class="abs" style="left:854.4px;top:87px;width:0.8px;height:11px;background:#4c4c4c"></div>
<svg class="abs" style="left:818px;top:87px" width="40" height="12" viewBox="0 0 40 12">
 <path d="M1.8 5.4Q6 1.4 10.2 5.4Q6 9.2 1.8 5.4Z" fill="#f2f2f2"/><circle cx="6" cy="5.3" r="1.5" fill="none" stroke="#555" stroke-width="0.7"/>
 <path d="M22.6 5.4V4Q22.6 1.6 24.8 1.6Q27 1.6 27 4V5.4" fill="none" stroke="#9a9a9a" stroke-width="1"/><rect x="21.4" y="5" width="6.8" height="4.8" rx="0.6" fill="#8c8c8c"/>
</svg>
<div class="t pt" style="left:857px;top:88px;font-size:6.3px;color:#bcbcbc">Item</div>
<!-- rows -->
<svg class="abs" style="left:818px;top:99px" width="60" height="22" viewBox="0 0 60 22">
 <rect x="1" y="1" width="8" height="8" fill="#2e8a22"/><path d="M2.6 5.2L4.4 7.2L7.6 2.6" fill="none" stroke="#fff" stroke-width="1"/>
 <rect x="1" y="10.8" width="8" height="8" fill="#2e8a22"/><path d="M2.6 15L4.4 17L7.6 12.4" fill="none" stroke="#fff" stroke-width="1"/>
 <rect x="19.8" y="1" width="7.4" height="7.8" fill="#555"/>
 <rect x="19.8" y="10.8" width="7.4" height="7.8" fill="#555"/>
 <path d="M38.8 2.2H39.8M38.8 5H39.8M38.8 7.8H39.8" stroke="#e8e8e8" stroke-width="1"/>
 <path d="M41 2.2H46.2M41 5H46.2M41 7.8H44.4" stroke="#e0e0e0" stroke-width="0.9"/>
 <path d="M38.6 11.2L40.4 10.8H45.8V18.4H40.4L38.6 18.8Z" fill="#ededed" stroke="#bdbdbd" stroke-width="0.4"/><path d="M40.4 10.8V18.4" stroke="#c9c9c9" stroke-width="0.5"/>
</svg>
<div class="t pt" style="left:868px;top:101.2px;font-size:6.5px;color:#dcdcdc;letter-spacing:-0.15px">&lt;Legend&gt;</div>
<div class="t pt" style="left:868px;top:110.6px;font-size:6.5px;color:#dcdcdc;letter-spacing:-0.15px">Map 1</div>
<!-- tabs 2 -->
<div class="abs" style="left:816.4px;top:148px;width:32.4px;height:7.6px;border:0.7px solid #4b4b4b;border-bottom:none;border-radius:1px 1px 0 0;background:#2f2f2f"></div>
<div class="abs" style="left:906.6px;top:148px;width:34px;height:7.6px;border:0.7px solid #4b4b4b;border-bottom:none;border-radius:1px 1px 0 0;background:#2f2f2f"></div>
<div class="abs" style="left:849.4px;top:145px;width:56.6px;height:10.6px;border:0.7px solid #515151;border-bottom:none;border-radius:1px 1px 0 0;background:#333"></div>
<div class="t pt" style="left:823.6px;top:149.9px;font-size:6.3px">Layout</div>
<div class="t pt" style="left:857.4px;top:148.5px;font-size:6.4px;letter-spacing:-0.1px">Item Properties</div>
<div class="t pt" style="left:914.4px;top:149.9px;font-size:6.3px">Guides</div>
<div class="t pt" style="left:891.8px;top:159px;font-size:6.6px;letter-spacing:-0.2px">Item Properties</div>

<!-- status bar -->
<div class="t st" style="left:742.4px">x: 478.934 mm</div>
<div class="t st" style="left:798px">y: 164.619 mm</div>
<div class="t st" style="left:854.8px">page: 1</div>
<div class="abs" style="left:910px;top:538.2px;width:56px;height:9.8px;background:#232323;border:0.6px solid #444;box-sizing:border-box;border-radius:1px"></div>
<div class="abs" style="left:958.6px;top:539px;width:7px;height:8.4px;background:#4a4a4a"></div>
<svg class="abs" style="left:958.6px;top:539px" width="7" height="9"><path d="M2.4 3.6H4.8L3.6 5.2Z" fill="#cfcfcf"/></svg>
<div class="t" style="left:912.4px;top:540.4px;font-size:6px;color:#d0d0d0;letter-spacing:-0.1px">53.8%</div>
<div class="abs" style="left:970px;top:540.6px;width:53px;height:5.2px;background:#262626"></div>
<div class="abs" style="left:972px;top:540.8px;width:14px;height:4.8px;background:#4e4e4e;border-radius:1px"></div>
<div class="abs" style="left:970.6px;top:540.2px;width:2.2px;height:6px;background:#2f8f2f;border-radius:1px"></div>

<!-- taskbar -->
<div class="abs" style="left:0;top:550px;width:1024px;height:26px;background:#202020"></div>
<div class="abs" style="left:0;top:549.8px;width:1024px;height:0.9px;background:#3a3a3a"></div>
<svg class="abs" style="left:0;top:550px" width="1024" height="26" viewBox="0 550 1024 26">
<defs>
 <linearGradient id="wg" x1="0" y1="0" x2="1" y2="1"><stop offset="0" stop-color="#5fd0f5"/><stop offset="1" stop-color="#1f95e6"/></linearGradient>
 <linearGradient id="cp" x1="0" y1="0" x2="1" y2="1"><stop offset="0" stop-color="#2f7be8"/><stop offset="0.45" stop-color="#b65bd8"/><stop offset="0.75" stop-color="#f2a03a"/><stop offset="1" stop-color="#f4d13a"/></linearGradient>
 <linearGradient id="cc" x1="0" y1="0" x2="1" y2="1"><stop offset="0" stop-color="#7b3fe0"/><stop offset="0.4" stop-color="#e6356a"/><stop offset="0.75" stop-color="#f4a02a"/><stop offset="1" stop-color="#f4d84a"/></linearGradient>
 <g id="chrome"><circle r="6.2" fill="#e9402f"/><path d="M0 0L-5.37 -3.1A6.2 6.2 0 0 0 0 6.2Z" fill="#2fa04f" transform="rotate(0)"/><path d="M0 0L0 6.2A6.2 6.2 0 0 0 5.37 -3.1Z" fill="#f9c21d" transform="rotate(-30)"/><path d="M0 0L-5.37 -3.1A6.2 6.2 0 0 1 5.37 -3.1Z" fill="#e9402f"/><circle r="2.9" fill="#fff"/><circle r="2.2" fill="#3f7fe8"/></g>
</defs>
<!-- weather -->
<path d="M12.6 566Q10 566 10 563.8Q10 561.8 12.2 561.6Q12.6 558.4 15.8 558.2Q18.2 558.2 19.2 560.2Q22.8 560 23 563.2Q23 566 20.4 566Z" fill="#d9e7f8"/>
<path d="M12.6 566Q10 566 10 563.8Q10 563 10.6 562.4Q14 564.4 22.6 562Q23 566 20.4 566Z" fill="#a8c4ea"/>
<text x="27" y="561.4" font-size="6.4" fill="#f4f4f4" font-family="Liberation Sans, sans-serif" letter-spacing="-0.1" stroke="#f4f4f4" stroke-width="0.15">15°C</text>
<!-- くもり -->
<g fill="none" stroke="#e4e4e4" stroke-width="0.7" stroke-linecap="round">
 <path d="M30.2 564.4L28 567L30.4 569.8"/>
 <path d="M33.8 564.2Q33.4 567.4 33.8 569Q34.6 570.2 36 568.6M32.4 565.8H35.4M32.4 567.4H35.2"/>
 <path d="M37.8 564.4Q37.6 566 37.8 567M39.6 564.2Q40 568 37.8 570"/>
</g>
<!-- windows logo -->
<g fill="url(#wg)"><rect x="204" y="557.2" width="5.7" height="5.8" rx="0.3"/><rect x="210.3" y="557.2" width="5.7" height="5.8" rx="0.3"/><rect x="204" y="563.6" width="5.7" height="5.8" rx="0.3"/><rect x="210.3" y="563.6" width="5.7" height="5.8" rx="0.3"/></g>
<!-- search pill -->
<rect x="223.6" y="555" width="116" height="16.2" rx="8.1" fill="#f2f2f2"/>
<circle cx="232.4" cy="562.6" r="2.6" fill="none" stroke="#3a3a3a" stroke-width="0.9"/><path d="M234.4 564.6L236.4 566.8" stroke="#3a3a3a" stroke-width="0.9" stroke-linecap="round"/>
<text x="243" y="565.4" font-size="6.9" fill="#6a6a6a" font-family="Liberation Sans, sans-serif" letter-spacing="-0.15">Search</text>
<g>
 <clipPath id="pc"><rect x="314" y="557.6" width="23.4" height="12.6" rx="5"/></clipPath>
 <g clip-path="url(#pc)">
  <rect x="314" y="557.6" width="24" height="13" fill="#a9c6e8"/>
  <circle cx="322" cy="560" r="3" fill="#d8e4f4"/>
  <path d="M326 558L332 562L337 559L338 566H322Z" fill="#5db8d8"/>
  <path d="M318 566L323 561.6L327 564.4Z" fill="#f2b43a"/>
  <path d="M314 570.4L320 564.6L325 566.8L330 563.6L338 570.4Z" fill="#1d3a7a"/>
  <path d="M314 567L317 564L319 566Z" fill="#e8a23a"/>
 </g>
</g>
<!-- task view -->
<rect x="351.4" y="558" width="8.6" height="8" rx="1" fill="#e6e6e6"/>
<rect x="347.2" y="560.8" width="8.6" height="8" rx="1" fill="#8c8c8c" stroke="#202020" stroke-width="0.5"/>
<!-- powershell -->
<path d="M372.6 558H383.4L380.8 568.6H370Z" fill="#2d6fd0"/>
<path d="M374.4 560.4L377.6 563.2L374 566M377.6 566.4H380.4" fill="none" stroke="#fff" stroke-width="0.9"/>
<!-- copilot -->
<path d="M397 558.4Q398 557.6 399.4 557.8L403.6 558.2Q405.4 558.4 405.8 560.2L406.6 564.6Q406.8 566.6 405 567.4L402 568.8Q400.6 569.2 399.2 568.8L396 567.6Q394.2 567 394.2 565L394.4 561Q394.6 559.6 395.8 559Z" fill="url(#cp)"/>
<path d="M398.6 561.2Q400.2 560.2 402 561.4Q403.2 563 402 564.8Q400.4 566 398.8 565Q397.4 563.2 398.6 561.2Z" fill="#202020" opacity="0.55"/>
<!-- settings gear -->
<g transform="translate(423.2,563.4)">
 <circle r="4.6" fill="none" stroke="#b9bec5" stroke-width="2.2" stroke-dasharray="2.2 1.41"/>
 <circle r="4" fill="#aab0b8"/><circle r="2.5" fill="#202020"/><circle r="1.9" fill="#2f7be0"/>
</g>
<!-- globe -->
<g transform="translate(447,563.4)"><circle r="6.2" fill="#c8d2dc"/><path d="M-5.6 -2Q-2 -5 1 -3.4Q2 -0.6 -1.4 0.4Q-3.6 2.6 -5.8 2Z" fill="#4f9e4a"/><path d="M0.6 1.4Q3.4 0 6 1.4Q5 5 2 6Q0 4 0.6 1.4Z" fill="#2f6fb8"/><path d="M1 -6Q4.6 -5.4 5.8 -2.2Q3 -1.6 1.6 -3.6Z" fill="#7a8a99"/></g>
<!-- store -->
<path d="M467.6 559.6V558.4Q467.6 557.2 468.8 557.2H471.8Q473 557.2 473 558.4V559.6" fill="none" stroke="#3aa0e8" stroke-width="0.9"/>
<rect x="464" y="559.2" width="12.6" height="10" rx="1.4" fill="#f4f4f4"/>
<rect x="467.4" y="561.6" width="2.5" height="2.5" fill="#e8402f"/><rect x="470.6" y="561.6" width="2.5" height="2.5" fill="#6ab43a"/><rect x="467.4" y="564.8" width="2.5" height="2.5" fill="#2f8ee0"/><rect x="470.6" y="564.8" width="2.5" height="2.5" fill="#f4b41a"/>
<!-- W circle -->
<circle cx="493.6" cy="563.2" r="6.4" fill="#fafafa"/>
<path d="M490 560.4V564.6Q490 566 491.4 566H495.8Q497.2 566 497.2 564.6V560.4M493.6 560.4V566" fill="none" stroke="#2aa4e0" stroke-width="1.3"/>
<!-- green ring -->
<circle cx="517.4" cy="563.2" r="5.4" fill="none" stroke="#2a9a3a" stroke-width="2"/>
<circle cx="517.4" cy="563.2" r="5.4" fill="none" stroke="#3fc24f" stroke-width="2" stroke-dasharray="6 11"/>
<!-- xampp -->
<rect x="534.6" y="557" width="12.4" height="12.4" rx="2" fill="#f37a20"/>
<path d="M537.6 560Q540.8 562 544 560V566.4Q540.8 564.4 537.6 566.4Z" fill="#fff"/><path d="M539.4 561.6L542.2 564.8M542.2 561.6L539.4 564.8" stroke="#f37a20" stroke-width="0.8"/>
<!-- chrome 1 -->
<g transform="translate(564,563.8)"><use href="#chrome"/></g>
<circle cx="569.2" cy="558.2" r="3.4" fill="#f4efe8" stroke="#202020" stroke-width="0.5"/><circle cx="569.2" cy="557.4" r="1.5" fill="#3a2a22"/><path d="M566.8 560.4Q569.2 558.4 571.6 560.4" fill="#444"/>
<!-- creative cloud -->
<rect x="581.6" y="557" width="12.6" height="12.4" rx="2.6" fill="url(#cc)"/>
<path d="M584.6 564.6Q584.4 562 587 561.6Q588.6 560 590.4 561.4Q592 562.6 591.2 564.6" fill="none" stroke="#fff" stroke-width="0.9" opacity="0.9"/><circle cx="588" cy="564.4" r="1.5" fill="none" stroke="#fff" stroke-width="0.7" opacity="0.9"/>
<!-- github -->
<circle cx="611.4" cy="563.2" r="6.3" fill="#7a3ec8"/>
<path d="M608.6 567.4Q607.2 563.6 608.6 561L608.4 559.4L610 560.2Q611.4 559.8 612.8 560.2L614.4 559.4L614.2 561Q615.6 563.6 614.2 567.4L612.6 567.8V565.6H610.2V567.8Z" fill="#f2ecfa"/>
<!-- explorer -->
<path d="M628.4 558.4Q628.4 557.6 629.2 557.6H632.4L633.6 558.8H641Q641.8 558.8 641.8 559.6V561H628.4Z" fill="#e8a92a"/>
<rect x="628.4" y="560" width="13.6" height="8.8" rx="0.9" fill="#f9cf4e"/>
<path d="M631.4 568.8V566.4Q631.4 565.4 632.4 565.4H638Q639 565.4 639 566.4V568.8Z" fill="#2f86e0"/>
<!-- docker -->
<circle cx="658.2" cy="563.2" r="6.3" fill="#2a8ee8"/>
<path d="M654 563.6H661.4Q662 562 663.2 562.6Q662.6 563.6 661.8 564Q660.6 567 657.4 567Q654.6 567 654 563.6Z" fill="#fff"/><path d="M655.2 562.8H660M656.4 561.6H660M658.8 560.4H660" stroke="#fff" stroke-width="0.9"/>
<!-- snipping -->
<rect x="675.6" y="557.6" width="9.4" height="8.6" rx="0.8" fill="#f2f2f2" stroke="#d8d8d8" stroke-width="0.4"/>
<rect x="676.8" y="559" width="3" height="2.4" fill="#e8553a"/><path d="M676.8 563H683.6M676.8 564.6H682" stroke="#c8c8c8" stroke-width="0.6"/>
<path d="M682.4 563.4L687.6 568.2M687.4 563.6L682.6 568.6" stroke="#3a8ee8" stroke-width="1.1" stroke-linecap="round"/>
<!-- notepad -->
<rect x="700.2" y="557.2" width="10.6" height="12.4" rx="1" fill="#4aa8e8"/>
<rect x="700.2" y="567.8" width="10.6" height="1.8" fill="#c87a3a"/>
<path d="M702 559.8H709M702 561.8H709M702 563.8H709M702 565.8H709" stroke="#d8effc" stroke-width="0.7"/>
<!-- word -->
<rect x="725.6" y="557.4" width="9.6" height="11.8" rx="0.8" fill="#3f8ae0"/>
<rect x="725.6" y="563.2" width="9.6" height="3" fill="#2a6ec8"/><rect x="725.6" y="566.2" width="9.6" height="3" rx="0.6" fill="#1f55a8"/>
<rect x="722.4" y="560" width="6.6" height="6.8" rx="0.8" fill="#1a5cc0"/>
<path d="M723.6 561.8L724.6 565.2L725.7 562.6L726.8 565.2L727.8 561.8" fill="none" stroke="#fff" stroke-width="0.7"/>
<!-- chrome 2 -->
<g transform="translate(752.6,564)"><use href="#chrome"/></g>
<circle cx="757.6" cy="558.2" r="3.5" fill="#e8c8e8" stroke="#202020" stroke-width="0.5"/><circle cx="756.4" cy="557.8" r="0.7" fill="#555"/><circle cx="758.8" cy="557.8" r="0.7" fill="#555"/>
<!-- qgis active -->
<rect x="765" y="552.6" width="20" height="21.4" rx="2" fill="#333333"/>
<g transform="translate(769.2,557)">
 <circle cx="5.8" cy="5.8" r="4.4" fill="#f4e28a" stroke="#5fa03a" stroke-width="2.6"/>
 <path d="M5.4 5.4L12.4 12.6L9 12.6L5.4 8.2Z" fill="#ee7913"/><path d="M6.8 6.6L12.6 9.6V12.6L9.6 12.6Z" fill="#5fa03a"/><path d="M4.6 4.6L8.6 6.2L6.2 8.6Z" fill="#f0c21a"/>
</g>
<!-- photoshop -->
<rect x="793.8" y="557" width="12.2" height="12" rx="2.2" fill="#0a1e3a"/>
<text x="795.6" y="565.8" font-size="6.4" fill="#3fa8f8" font-family="Liberation Sans, sans-serif" font-weight="bold" letter-spacing="-0.3">Ps</text>
<!-- indicators -->
<g fill="#9a9a9a"><rect x="562.6" y="572.5" width="3.4" height="1" rx="0.5"/><rect x="633.2" y="572.5" width="3.4" height="1" rx="0.5"/><rect x="727" y="572.5" width="3.4" height="1" rx="0.5"/><rect x="750.8" y="572.5" width="3.4" height="1" rx="0.5"/><rect x="798.2" y="572.5" width="3.4" height="1" rx="0.5"/></g>
<rect x="771.4" y="572.4" width="7.2" height="1.1" rx="0.5" fill="#b8b8b8"/>
<!-- systray -->
<path d="M848 565.2L850.8 562.4L853.6 565.2" fill="none" stroke="#e8e8e8" stroke-width="0.9"/>
<path d="M864.6 566.4Q862.6 566.4 862.6 564.6Q862.6 563 864.4 562.8Q865 560.4 867.4 560.4Q869.2 560.4 870 562Q872.4 562.2 872.4 564.4Q872.4 566.4 870.4 566.4Z" fill="#d0d0d0"/><path d="M866.4 564.8L868.6 562.4" stroke="#666" stroke-width="0.6"/>
<g fill="none" stroke="#dcdcdc" stroke-width="0.9"><path d="M881.2 563.6Q881.2 560 884.6 559.8Q886.4 559.8 887.6 561.2"/><path d="M887.8 563.6Q887.8 567 884.4 567.2Q882.6 567.2 881.4 565.8"/><path d="M888 559.4V561.6H885.8M881 567.6V565.4H883.2"/></g>
<circle cx="886.6" cy="566" r="1.9" fill="#2f86f0"/>
<path d="M897.8 568L901.2 559L904.6 568M899 565H903.4" fill="none" stroke="#e4e4e4" stroke-width="0.9"/>
<circle cx="921.6" cy="563.2" r="4" fill="none" stroke="#dcdcdc" stroke-width="0.8"/><path d="M922.6 561V564.4Q922.4 565.6 920.8 565.4" fill="none" stroke="#dcdcdc" stroke-width="0.8"/>
<rect x="937.4" y="559.4" width="7" height="5.4" rx="0.5" fill="none" stroke="#dcdcdc" stroke-width="0.8"/><path d="M940.9 564.8V566.8M938.8 567H943" stroke="#dcdcdc" stroke-width="0.8"/><circle cx="944.8" cy="559.6" r="1.6" fill="#202020" stroke="#dcdcdc" stroke-width="0.6"/>
<path d="M950.4 562.2H952L954.2 560.2V566.6L952 564.6H950.4Z" fill="none" stroke="#dcdcdc" stroke-width="0.7"/><path d="M955.8 562L958.4 564.8M958.4 562L955.8 564.8" stroke="#dcdcdc" stroke-width="0.7"/>
<rect x="963.6" y="560.8" width="6.2" height="4.6" rx="0.6" fill="none" stroke="#dcdcdc" stroke-width="0.8"/><path d="M965 559.8V561M964.4 565L968.6 561" stroke="#dcdcdc" stroke-width="0.8"/><circle cx="970.4" cy="565.6" r="1.9" fill="#e8e8e8"/>
<text x="1014" y="561.5" text-anchor="end" font-size="6.1" fill="#f4f4f4" font-family="Liberation Sans, sans-serif" letter-spacing="-0.05">14:28</text>
<text x="1014" y="570" text-anchor="end" font-size="6.6" fill="#f4f4f4" font-family="Liberation Sans, sans-serif" letter-spacing="-0.05">21/10/2025</text>
</svg>

</div></body></html>
